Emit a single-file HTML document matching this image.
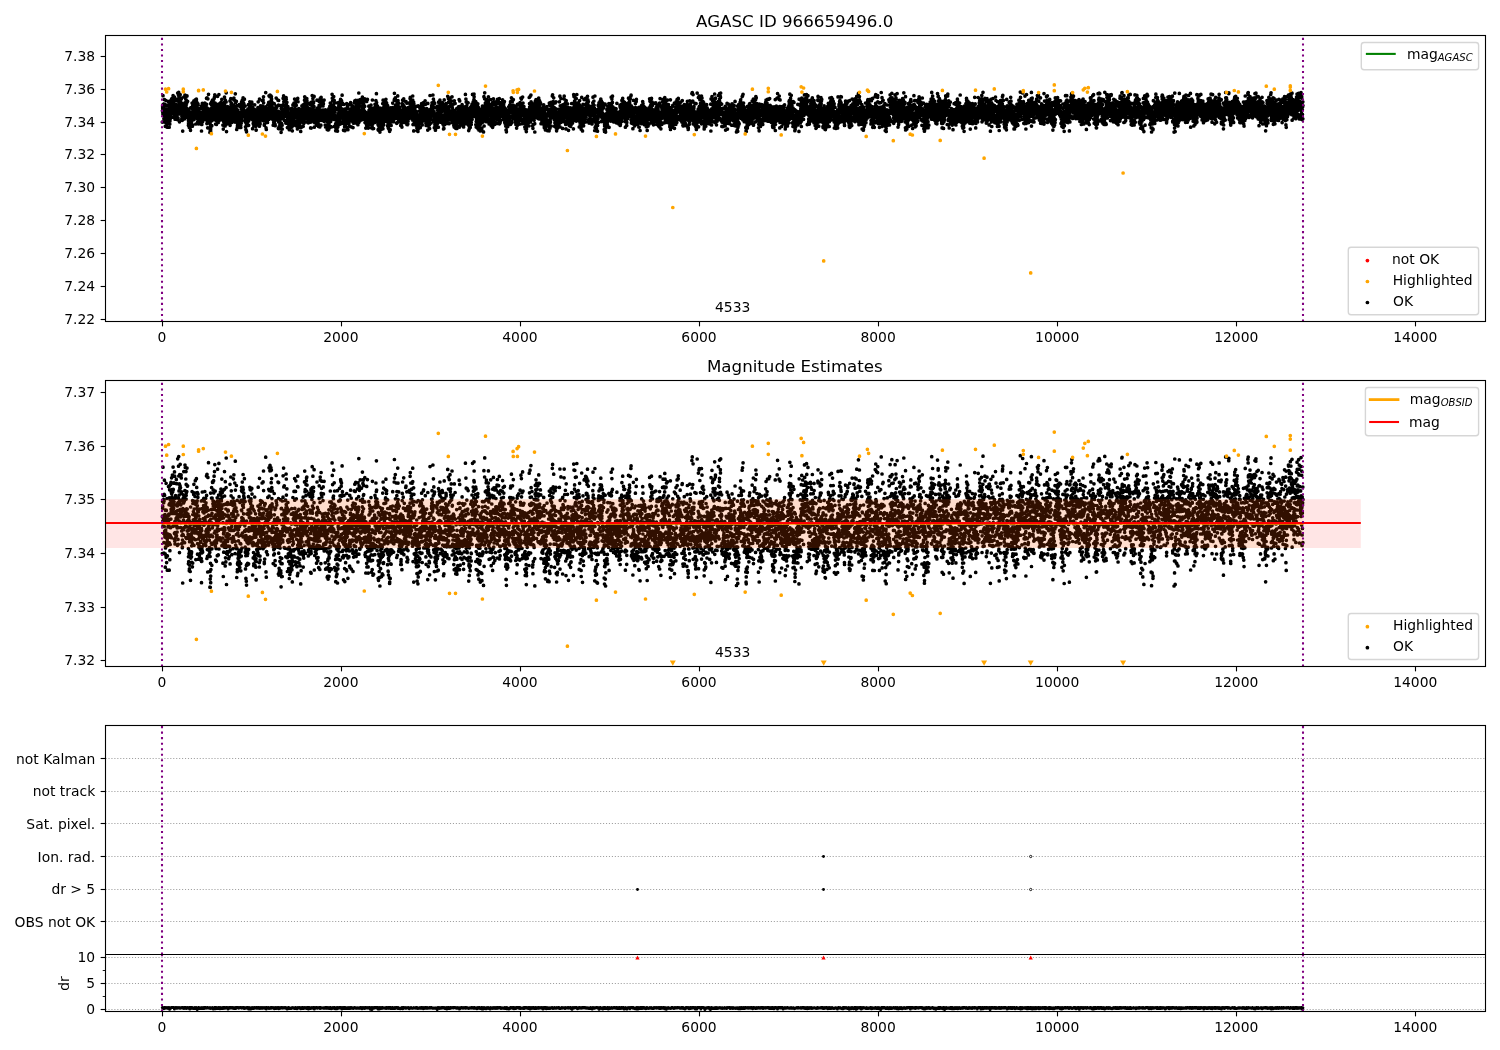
<!DOCTYPE html>
<html lang="en"><head><meta charset="utf-8"><title>AGASC ID 966659496.0</title>
<style>html,body{margin:0;padding:0;background:#fff;overflow:hidden}svg{display:block;will-change:transform}</style></head>
<body>
<svg width="1500" height="1050" viewBox="0 0 1500 1050" font-family="DejaVu Sans, Liberation Sans, sans-serif" font-size="13.889" fill="#000">
<rect width="1500" height="1050" fill="#fff"/>
<defs>
<clipPath id="c0"><rect x="105.5" y="35.5" width="1380.0" height="286.0"/></clipPath>
<clipPath id="c1"><rect x="105.5" y="380.5" width="1380.0" height="286.0"/></clipPath>
<clipPath id="c2"><rect x="105.5" y="725.5" width="1380.0" height="229.0"/></clipPath>
<clipPath id="c3"><rect x="105.5" y="954.5" width="1380.0" height="57.0"/></clipPath>
</defs>
<g clip-path="url(#c0)">
<path d="M162.3 122.1h0m.1-11.3h0m.1-.2h0m.1-4.5h0m.1 1.6h0m0 .5h0m.1 4h0m.1 1.7h0m.1-18.2h0m.1 17.8h0m.1-9.2h0m.1 8.3h0m.1-8.2h0m.1 7h0m.1-5.8h0m.1.9h0m.1 5h0m0 4.4h0m.1 2.9h0m.1 3.2h0m.1-16h0m.1-2h0m.1 9.8h0m.1-14.2h0m.1 10.7h0m.1-6h0m.1 11h0m.1 1.1h0m.1.7h0m.1-5.7h0m0-1.2h0m.1 2.2h0m.1 9.8h0m.1 4.1h0m.1-17.5h0m.1 11.6h0m.1-.3h0m.1-5.2h0m.1 5.2h0m.1 2.6h0m.1-7h0m.1.8h0m0-15.9h0m.1 22.7h0m.1-14.4h0m.1 10.2h0m.1-8.5h0m.1 14.3h0m.1-6.1h0m.1-7.2h0m.1.5h0m.1-6.9h0m.1 13.9h0m.1-1.3h0m0 .9h0m.1 8.5h0m.1-4.4h0m.1-4.4h0m.1.6h0m.1-6.4h0m.1 7h0m.1-3.2h0m.1-2.4h0m.1 2.2h0m.1-3.1h0m.1 6.3h0m0-2.2h0m.1-6.8h0m.1-8.8h0m.1 10h0m.1.4h0m.1-2h0m.1.3h0m.1 3.3h0m.1-6.5h0m.1 20.1h0m.1-22.2h0m.1 11.3h0m0 2.5h0m.1-17.4h0m.1 1.2h0m.1 4.2h0m.1 17.2h0m.1-2.8h0m.1-4.6h0m.1-.2h0m.1 2.9h0m.1-13.6h0m.1 1.1h0m.1 7.4h0m0 2.6h0m.1-15.9h0m.1 6.4h0m.1 0h0m.1 4.3h0m.1-11.3h0m.1 8.2h0m.1.7h0m.1-5.9h0m.1 14h0m.1-12.3h0m.1-6.1h0m.1 4.9h0m0-1h0m.1 4.8h0m.1-5.1h0m.1 7.3h0m.1-5h0m.1 4.7h0m.1-3.3h0m.1-8.2h0m.1 5.3h0m.1 4.5h0m.1-5.2h0m.1 11.2h0m0-10.7h0m.1 5.6h0m.1-3.6h0m.1-9.5h0m.1 14.2h0m.1-7.4h0m.1 3.6h0m.1 2h0m.1.3h0m.1-1.6h0m.1-6.1h0m.1 6.7h0m0 5.7h0m.1-12.6h0m.1 5.9h0m.1-1.1h0m.1 12.5h0m.1-1.8h0m.1-18.8h0m.1 10h0m.1-8.7h0m.1 19.9h0m.1-6h0m.1 6.9h0m0-3.5h0m.1-2.8h0m.1-3.1h0m.1 6.4h0m.1-9h0m.1 6.4h0m.1-9.2h0m.1 4.9h0m.1-4.2h0m.1 12h0m.1-12.2h0m.1 6.4h0m0 .4h0m.1 1.1h0m.1-13.4h0m.1 14.2h0m.1 3h0m.1-15.9h0m.1 12.7h0m.1-3.4h0m.1 1.4h0m.1-.6h0m.1 4.8h0m.1-1.3h0m0-3h0m.1-3.8h0m.1 12.1h0m.1-9.4h0m.1-1.3h0m.1-15.8h0m.1 13.5h0m.1 4.5h0m.1 6.7h0m.1-11.1h0m.1 12.6h0m.1-5.2h0m.1-3.9h0m0-5.1h0m.1-9.8h0m.1 11.1h0m.1-14h0m.1 5.9h0m.1 12.3h0m.1-7.7h0m.1 9.2h0m.1-7.9h0m.1-3.5h0m.1 5h0m.1 16.1h0m0-13h0m.1-10.6h0m.1-.3h0m.1 4.1h0m.1 3.8h0m.1-4.5h0m.1.9h0m.1-7.5h0m.1 14.6h0m.1-.7h0m.1-6.7h0m.1 9h0m0-3.8h0m.1 7h0m.1-6.9h0m.1 5.5h0m.1-2.7h0m.1-12h0m.1 11.1h0m.1-10.2h0m.1 7.1h0m.1-2.4h0m.1-.4h0m.1 12h0m0 3.9h0m.1-6.6h0m.1 4.1h0m.1-10.7h0m.1 10.7h0m.1-7.4h0m.1 11.1h0m.1-.2h0m.1-2.1h0m.1-7.8h0m.1 20.9h0m.1-16.3h0m0 1.4h0m.1-7.8h0m.1-3.1h0m.1 9h0m.1-5.6h0m.1 7.8h0m.1-12.3h0m.1 7.7h0m.1-5.3h0m.1 8.2h0m.1-17.8h0m.1 12h0m0 9.6h0m.1-7.9h0m.1-6.4h0m.1 9.8h0m.1-8h0m.1 4.1h0m.1-5.1h0m.1 13.7h0m.1-8.2h0m.1-6h0m.1-1.8h0m.1 9.7h0m0-17.5h0m.1 15.7h0m.1 1.9h0m.1-16.9h0m.1 18.2h0m.1 0h0m.1-5.3h0m.1 5h0m.1-14.3h0m.1 17.9h0m.1-20.2h0m.1 8.4h0m.1-4.5h0m0 3.3h0m.1 5.4h0m.1-6.1h0m.1 14h0m.1-9.1h0m.1 2h0m.1-7.3h0m.1 10.9h0m.1-18.1h0m.1 14.2h0m.1-1.6h0m.1 6.7h0m0-5h0m.1-8.7h0m.1 9.2h0m.1-9.4h0m.1 10.8h0m.1 5.2h0m.1-.2h0m.1-7.1h0m.1 6.2h0m.1-3.9h0m.1 2.7h0m.1 10.3h0m0-4.7h0m.1 2.5h0m.1-6.6h0m.1 8.1h0m.1-13.4h0m.1.8h0m.1 10.1h0m.1-11.3h0m.1 1.2h0m.1 15.4h0m.1-.6h0m.1-1.1h0m0-4.3h0m.1-2.9h0m.1 4.3h0m.1-4.9h0m.1-3.8h0m.1-1.2h0m.1.4h0m.1 14.3h0m.1-6h0m.1 1.3h0m.1 7.4h0m.1-17.6h0m0-4.8h0m.1 13.8h0m.1 1.8h0m.1-5.9h0m.1 4.6h0m.1-5.3h0m.1-.8h0m.1.4h0m.1 5.6h0m.1 1h0m.1-1.5h0m.1-6.8h0m0 4.9h0m.1-1.6h0m.1 6.7h0m.1-9.7h0m.1-12h0m.1 14.2h0m.1-4.3h0m.1 13.2h0m.1-7.1h0m.1-13.2h0m.1 19.1h0m.1-14.9h0m.1-3.3h0m0 10.5h0m.1-3h0m.1 1.2h0m.1-3.6h0m.1.5h0m.1-3.2h0m.1 5.8h0m.1 2.5h0m.1-13.5h0m.1 7.7h0m.1-10.8h0m.1 18.7h0m0-16.1h0m.1 6.8h0m.1-1.9h0m.1 7.4h0m.1-5.9h0m.1-3.8h0m.1 4.3h0m.1 3.1h0m.1-7.1h0m.1 5.3h0m.1-7.1h0m.1 7h0m0 .1h0m.1-8.2h0m.1-3.7h0m.1 18.1h0m.1-10.9h0m.1 5.2h0m.1-1.3h0m.1 13.1h0m.1-17h0m.1 5.1h0m.1-.9h0m.1-1.2h0m0 5.3h0m.1-.7h0m.1-15.4h0m.1 16.6h0m.1-5.3h0m.1-8.7h0m.1 4.6h0m.1 7h0m.1-1.1h0m.1-4.1h0m.1-2.3h0m.1 1.5h0m0 6.9h0m.1-10.9h0m.1 18.9h0m.1-3.2h0m.1-10.1h0m.1 5.3h0m.1-9.4h0m.1-1h0m.1 12.2h0m.1-1.8h0m.1-5h0m.1 8.4h0m0-3.5h0m.1 9.6h0m.1-4.6h0m.1.3h0m.1-9h0m.1 9.7h0m.1.1h0m.1-4.6h0m.1-1.4h0m.1 8.1h0m.1.4h0m.1-9.4h0m0 3.6h0m.1-5.3h0m.1-3.2h0m.1 3.1h0m.1.7h0m.1 7.6h0m.1-5.2h0m.1.1h0m.1 6h0m.1 1.2h0m.1-6h0m.1 2.5h0m.1-2.7h0m0 .2h0m.1 8.1h0m.1-5.5h0m.1-5.6h0m.1-.2h0m.1 10.8h0m.1-17.6h0m.1 8.4h0m.1 16.6h0m.1-6.5h0m.1-2.6h0m.1 2.6h0m0-9.4h0m.1 1.8h0m.1 3.8h0m.1-12.4h0m.1 11.8h0m.1-16.8h0m.1 14.2h0m.1 4h0m.1.2h0m.1-4.9h0m.1-4.3h0m.1-6.8h0m0 3.6h0m.1 7.3h0m.1.7h0m.1-4.4h0m.1-1.5h0m.1 6h0m.1-.6h0m.1-9.3h0m.1 11.8h0m.1-14.1h0m.1 8.2h0m.1-3.7h0m0-2.1h0m.1 1.2h0m.1 10.7h0m.1-13.4h0m.1 6h0m.1 6.1h0m.1-6.7h0m.1.9h0m.1-9.3h0m.1 16h0m.1-2.7h0m.1-4.6h0m0 1.2h0m.1 6h0m.1-10.8h0m.1 4.3h0m.1-5.3h0m.1 3.7h0m.1-5.7h0m.1 14.5h0m.1-4.4h0m.1-8.8h0m.1 12.1h0m.1-1.7h0m0-7.7h0m.1 3.4h0m.1-3.5h0m.1-10.8h0m.1 6h0m.1 10.4h0m.1 1h0m.1 7.9h0m.1-25.8h0m.1 18h0m.1-7.8h0m.1 12.9h0m.1-6.2h0m0 3.2h0m.1 5.1h0m.1-12.3h0m.1 17.1h0m.1-4.7h0m.1-24.3h0m.1 15.5h0m.1 1.4h0m.1-6.9h0m.1 7.6h0m.1 0h0m.1-22.1h0m0 16h0m.1 6.5h0m.1-2.9h0m.1-3.4h0m.1 3h0m.1 9h0m.1-9.8h0m.1 8.5h0m.1-3.2h0m.1-5.9h0m.1 8.2h0m.1-5.5h0m0 2.1h0m.1 4.1h0m.1.7h0m.1 10.7h0m.1-4.8h0m.1-4.6h0m.1 7h0m.1 2.5h0m.1-19.4h0m.1 12h0m.1-21.5h0m.1 25.4h0m0 2.1h0m.1-19.5h0m.1 15.4h0m.1-10.3h0m.1-.3h0m.1-7.8h0m.1 10.3h0m.1-8.5h0m.1-5.3h0m.1-3.2h0m.1 17.4h0m.1 6.4h0m0-13h0m.1 8h0m.1-10.9h0m.1-4.7h0m.1 3.4h0m.1 4.6h0m.1 1.1h0m.1-14.1h0m.1.2h0m.1 16.6h0m.1-3.4h0m.1-6.6h0m0 6.1h0m.1-7h0m.1-5.9h0m.1 2.5h0m.1 4.9h0m.1.9h0m.1-1.3h0m.1-7.3h0m.1 3.8h0m.1 7.6h0m.1-5h0m.1 2h0m.1 2.7h0m0-12.5h0m.1 20.1h0m.1-2.7h0m.1-7.4h0m.1-11.4h0m.1 9.4h0m.1.6h0m.1-12.2h0m.1 13.8h0m.1 10.8h0m.1-4.2h0m.1-7.8h0m0-4.4h0m.1 16h0m.1.8h0m.1-6.6h0m.1 10.9h0m.1-13.8h0m.1.9h0m.1 6.8h0m.1-10.7h0m.1 13.3h0m.1-8.7h0m.1-4.3h0m0 4.1h0m.1 12.8h0m.1-5.6h0m.1-6.8h0m.1 4.9h0m.1-.5h0m.1-1.1h0m.1-6.4h0m.1 7.4h0m.1-11.4h0m.1 17.8h0m.1-8.4h0m0-8.3h0m.1 5.9h0m.1-15.7h0m.1 17.2h0m.1-.6h0m.1 5.1h0m.1-7.6h0m.1-3.7h0m.1 2.8h0m.1 13h0m.1-5.2h0m.1-9.2h0m0 6.9h0m.1-10.8h0m.1 8.3h0m.1-3.4h0m.1-14.6h0m.1 26.2h0m.1-13.9h0m.1 4.7h0m.1 3.2h0m.1-3.4h0m.1-4h0m.1 1.6h0m0-.3h0m.1 1.1h0m.1 7.7h0m.1-5.7h0m.1 5.6h0m.1-11.9h0m.1.4h0m.1.1h0m.1-2.6h0m.1 7.7h0m.1.2h0m.1-.9h0m0-1.4h0m.1 2.5h0m.1-7.2h0m.1-1.9h0m.1 15.9h0m.1-7.3h0m.1-5.2h0m.1.3h0m.1 1.2h0m.1.5h0m.1 6.9h0m.1-15.3h0m.1 9h0m0 11.4h0m.1-16.2h0m.1 3.9h0m.1 3.9h0m.1-7.9h0m.1 6.1h0m.1-4.7h0m.1 12.5h0m.1-6.2h0m.1 8.4h0m.1 5.6h0m.1-12.5h0m0-2.7h0m.1-7.1h0m.1 11.9h0m.1 14.4h0m.1-17.9h0m.1 4.9h0m.1 2.9h0m.1 2.7h0m.1-6.1h0m.1-8.5h0m.1 12.7h0m.1-5.6h0m0 1.3h0m.1 4.6h0m.1-10h0m.1-7.7h0m.1-5.4h0m.1 7.5h0m.1 9.8h0m.1 4.1h0m.1-3.5h0m.1 3.6h0m.1-.2h0m.1 7.6h0m0-7.9h0m.1-17.9h0m.1 19.2h0m.1 4.1h0m.1-16.4h0m.1 13.3h0m.1 4.4h0m.1-16.2h0m.1 8.3h0m.1-14.9h0m.1-9.1h0m.1 20.1h0m0-2.4h0m.1.1h0m.1 21h0m.1-9.5h0m.1-.3h0m.1-3.9h0m.1-1.5h0m.1-4.2h0m.1 9.3h0m.1-1.5h0m.1-13h0m.1 15.3h0m0-6.3h0m.1-9.5h0m.1 11.9h0m.1-8.1h0m.1-1.2h0m.1 7.6h0m.1 5.1h0m.1-1.9h0m.1-11.1h0m.1.3h0m.1 8.6h0m.1-3.5h0m.1 3.4h0m0-1.1h0m.1 7.2h0m.1-12.7h0m.1-.5h0m.1 4.2h0m.1-.1h0m.1 8.5h0m.1-6.7h0m.1 3.5h0m.1-8h0m.1 8h0m.1 1.5h0m0-10h0m.1 3.1h0m.1.6h0m.1-14.2h0m.1 24.4h0m.1-18.3h0m.1 14h0m.1-6.1h0m.1-2.1h0m.1 2.3h0m.1-2.3h0m.1-14.2h0m0 14.1h0m.1 4.8h0m.1-2.7h0m.1-10.4h0m.1 10.5h0m.1-12h0m.1 3.3h0m.1 5.8h0m.1-2.1h0m.1 3.9h0m.1 8.7h0m.1-9.4h0m0 4.4h0m.1.2h0m.1-7.7h0m.1 5h0m.1 3.6h0m.1-.8h0m.1.4h0m.1-8.2h0m.1.4h0m.1-3.1h0m.1 3.5h0m.1-4.2h0m0 14h0m.1-15.5h0m.1 11.8h0m.1-6.8h0m.1-10.9h0m.1 18.6h0m.1-.3h0m.1-8.4h0m.1 8.9h0m.1-20h0m.1 17h0m.1-4.3h0m0-4.5h0m.1.5h0m.1 5.4h0m.1-3.7h0m.1-1.6h0m.1 5.2h0m.1-4.8h0m.1-6.7h0m.1 8.5h0m.1 1.9h0m.1 11.2h0m.1-3.8h0m.1-24.5h0m0 20.6h0m.1-11.7h0m.1 8.5h0m.1 2.4h0m.1 5.9h0m.1-8.4h0m.1 2.9h0m.1-5.9h0m.1 12h0m.1.2h0m.1-4h0m.1-7.2h0m0-7.8h0m.1 19.2h0m.1.1h0m.1 8.9h0m.1-20.2h0m.1 11.2h0m.1-6.8h0m.1.9h0m.1-8.8h0m.1 21.9h0m.1-.7h0m.1-12.5h0m0 10.7h0m.1.2h0m.1-.4h0m.1-9.2h0m.1-5.5h0m.1 4.3h0m.1 9h0m.1 1h0m.1-2h0m.1-4.4h0m.1 4.1h0m.1-7.6h0m0 10.5h0m.1-3.6h0m.1 1.9h0m.1-6.7h0m.1 9h0m.1-21.1h0m.1 16.9h0m.1 2.9h0m.1-3.4h0m.1-7.2h0m.1 13.4h0m.1-14.5h0m0 9.7h0m.1 3.9h0m.1-20.1h0m.1.2h0m.1 12.5h0m.1 4.1h0m.1-9.8h0m.1 7.7h0m.1-2h0m.1 2.1h0m.1 4.1h0m.1-6h0m0 8.2h0m.1-5.9h0m.1-.4h0m.1-15.3h0m.1 10.7h0m.1 6.4h0m.1-14.1h0m.1-6h0m.1-1h0m.1 7.2h0m.1 2.1h0m.1.9h0m0 8.4h0m.1-7.4h0m.1-9.9h0m.1 2.9h0m.1-5.8h0m.1 15.6h0m.1-10h0m.1 1.6h0m.1 0h0m.1-4.6h0m.1-1h0m.1 9.6h0m.1-13.5h0m0 19.1h0m.1-14.6h0m.1 4.7h0m.1.8h0m.1 4h0m.1-2h0m.1-5.4h0m.1-.9h0m.1 1.2h0m.1 1.5h0m.1-1.4h0m.1 7.5h0m0-7.2h0m.1.8h0m.1-6.8h0m.1 16.1h0m.1 1.5h0m.1-1.5h0m.1-1.7h0m.1 1.5h0m.1-1.9h0m.1-7.1h0m.1 14.1h0m.1 1.5h0m0-3.9h0m.1 3.7h0m.1 5.3h0m.1-10.1h0m.1 3.9h0m.1 2.2h0m.1 6.9h0m.1-13h0m.1-1.9h0m.1 3.4h0m.1 12.4h0m.1-4.8h0m0-10.7h0m.1 16.7h0m.1-19.6h0m.1.1h0m.1 8.4h0m.1 4.8h0m.1-15.5h0m.1 8.7h0m.1 6.9h0m.1-8.1h0m.1 5.2h0m.1-12.7h0m0 8.4h0m.1 6.7h0m.1.3h0m.1-3.3h0m.1-1h0m.1-11h0m.1-1.3h0m.1 10.3h0m.1 6.3h0m.1-20.7h0m.1 12.6h0m.1 8h0m0-10.1h0m.1 5.6h0m.1-5.6h0m.1-4.8h0m.1-.9h0m.1 4.7h0m.1 4h0m.1-7.2h0m.1-5h0m.1 2.8h0m.1 6.3h0m.1-5.8h0m.1-7.5h0m0 6.9h0m.1 8.3h0m.1-10.8h0m.1 5.1h0m.1-8.8h0m.1 6h0m.1 6.5h0m.1-.4h0m.1-7.8h0m.1 5.3h0m.1-2.4h0m.1-7.1h0m0 3.5h0m.1-.7h0m.1 5.9h0m.1-.1h0m.1-3.4h0m.1 6.6h0m.1-2.5h0m.1 6.9h0m.1-1.1h0m.1-15.5h0m.1 9.4h0m.1 6h0m0-13.7h0m.1 9.2h0m.1 6.2h0m.1-5.6h0m.1-6.1h0m.1 4.1h0m.1 17h0m.1-11.6h0m.1 2.6h0m.1-5.8h0m.1-1.8h0m.1 2.9h0m0-6.5h0m.1 14.9h0m.1-4.6h0m.1-5.2h0m.1 8.2h0m.1-2.2h0m.1 6.2h0m.1-.5h0m.1-8.1h0m.1-5.8h0m.1 8.1h0m.1-3.2h0m0-7.3h0m.1 5.2h0m.1 9.4h0m.1-7h0m.1 6.2h0m.1-18h0m.1 11h0m.1 7.4h0m.1 2.5h0m.1-8.8h0m.1-2h0m.1-1h0m0 10.3h0m.1-12.3h0m.1 7.4h0m.1-9.4h0m.1 5h0m.1 11.4h0m.1-9.2h0m.1 6.6h0m.1 6.5h0m.1-.1h0m.1-5.6h0m.1-2.2h0m.1-9.9h0m0 2.4h0m.1 1.1h0m.1 5h0m.1-5h0m.1-2.8h0m.1 6.6h0m.1-.7h0m.1 2.3h0m.1-10.1h0m.1 10.1h0m.1-1.9h0m.1-3.3h0m0 5.6h0m.1-2.9h0m.1-3.3h0m.1-7.9h0m.1 4.1h0m.1 10.3h0m.1-20.2h0m.1 9.7h0m.1 3.7h0m.1 7.6h0m.1-4.7h0m.1-5.9h0m0 .9h0m.1 1.6h0m.1-5.8h0m.1 11.4h0m.1-6.3h0m.1 1.2h0m.1 9.7h0m.1 1.3h0m.1-27.2h0m.1 9.2h0m.1 1.6h0m.1 10.7h0m0-10.3h0m.1 5.4h0m.1 7.3h0m.1 1.2h0m.1-17h0m.1 7.1h0m.1 1h0m.1-9.3h0m.1 5.3h0m.1 5.6h0m.1-.1h0m.1-6.8h0m0 6.2h0m.1 2.7h0m.1-1.7h0m.1-3.3h0m.1 1.8h0m.1-9.5h0m.1 2.1h0m.1 9.8h0m.1-3.4h0m.1 1.5h0m.1-4.7h0m.1 7h0m0-8.3h0m.1-9.6h0m.1 7.8h0m.1.1h0m.1 11.4h0m.1-13.4h0m.1 8.9h0m.1-1.1h0m.1 3.7h0m.1-7.7h0m.1.4h0m.1-10.5h0m0 20.5h0m.1-6.7h0m.1 4.9h0m.1 0h0m.1-22h0m.1 6h0m.1 6.9h0m.1 8.9h0m.1-2.4h0m.1-1.8h0m.1-6h0m.1 10.2h0m.1 6.6h0m0-.5h0m.1-5h0m.1-6.3h0m.1-6.1h0m.1 16.5h0m.1-3.8h0m.1-8.6h0m.1 4.4h0m.1 1.6h0m.1-10.6h0m.1 5.8h0m.1 7.1h0m0-2.5h0m.1-.1h0m.1.3h0m.1-24.8h0m.1 27.1h0m.1-1.1h0m.1 9.2h0m.1-14.7h0m.1-4.3h0m.1 20.6h0m.1-7.7h0m.1-5.9h0m0-4h0m.1 9.7h0m.1-5.9h0m.1-2.7h0m.1-2.5h0m.1 1.5h0m.1 5.1h0m.1-8.3h0m.1 8.5h0m.1 1.4h0m.1 3.9h0m.1-9.3h0m0-3.4h0m.1 7.8h0m.1-12.7h0m.1 9.1h0m.1-3.8h0m.1 2.6h0m.1-1.4h0m.1 5.5h0m.1-4h0m.1-3.3h0m.1 9.4h0m.1.5h0m0-17.1h0m.1 9.3h0m.1 2.9h0m.1-18.8h0m.1 8.7h0m.1 10.4h0m.1-12.1h0m.1 5.3h0m.1 6.9h0m.1 3.6h0m.1-7.6h0m.1 3.6h0m0-6.8h0m.1-11.1h0m.1-1.6h0m.1 21.9h0m.1.3h0m.1-7.9h0m.1 1.7h0m.1-3.7h0m.1-10.7h0m.1 13.4h0m.1 0h0m.1-14.3h0m.1 7.2h0m0 5.7h0m.1 2.1h0m.1-10.4h0m.1 17.2h0m.1-21.1h0m.1 18.6h0m.1-16h0m.1 13.8h0m.1-11h0m.1 3.4h0m.1 10.4h0m.1 3.1h0m0-11.9h0m.1 11.1h0m.1-2.7h0m.1-12.4h0m.1 11.4h0m.1-.5h0m.1 5.5h0m.1-11.5h0m.1 10.5h0m.1-.8h0m.1 1h0m.1 6.7h0m0-6.7h0m.1 1.6h0m.1-2.3h0m.1-3.6h0m.1 5.9h0m.1 2.5h0m.1-1.7h0m.1-5.3h0m.1-3.2h0m.1.1h0m.1-8.8h0m.1 6.5h0m0 9.1h0m.1 2.9h0m.1-1.7h0m.1-8.9h0m.1 5.6h0m.1-4.3h0m.1 4.1h0m.1-8.3h0m.1 15.6h0m.1 1.4h0m.1-7.7h0m.1 2h0m0-3.2h0m.1-4h0m.1.3h0m.1-4.9h0m.1 3.6h0m.1 4.3h0m.1-4.4h0m.1-5.7h0m.1-7.9h0m.1 17.4h0m.1-.9h0m.1-8.1h0m0 6.7h0m.1 4.7h0m.1-2.8h0m.1-7.8h0m.1 11.6h0m.1-4.4h0m.1-2.7h0m.1.2h0m.1 4.2h0m.1 3.9h0m.1-5.4h0m.1-3.5h0m0 6h0m.1-4.7h0m.1 7.4h0m.1-1.4h0m.1-18.3h0m.1 12.1h0m.1 5.1h0m.1 1.1h0m.1 9.9h0m.1-23.2h0m.1-4.8h0m.1 21.6h0m.1-5.2h0m0 11.9h0m.1-9.3h0m.1.5h0m.1 6.7h0m.1-8.1h0m.1 9.1h0m.1-7.3h0m.1-8.4h0m.1 7.7h0m.1-.3h0m.1-1.5h0m.1 2.6h0m0 4.1h0m.1 3.4h0m.1-7.4h0m.1-5.1h0m.1 7.9h0m.1-7.5h0m.1-10.2h0m.1 13.4h0m.1-1.5h0m.1 9.9h0m.1.7h0m.1-11.7h0m0 8.8h0m.1 7.1h0m.1-23.9h0m.1 8.3h0m.1.1h0m.1-8.5h0m.1 20.9h0m.1-5.6h0m.1-13.4h0m.1 6.1h0m.1-3h0m.1 11.9h0m0-9.1h0m.1 13h0m.1-23.1h0m.1 10.3h0m.1-.9h0m.1-.3h0m.1 2.9h0m.1-3.6h0m.1 4.2h0m.1-13.8h0m.1-6.5h0m.1 11.9h0m0 2.7h0m.1-.4h0m.1 1h0m.1-2h0m.1-15.6h0m.1 14.3h0m.1-8.5h0m.1 8h0m.1 5.3h0m.1-6h0m.1 11.3h0m.1-19h0m0 8h0m.1 2.4h0m.1 4.9h0m.1-6.4h0m.1-.4h0m.1 4.3h0m.1-5.3h0m.1 11.7h0m.1-9.7h0m.1.4h0m.1 1.3h0m.1 2.5h0m.1-3.3h0m0-5.8h0m.1-.2h0m.1 3.2h0m.1 14.2h0m.1-13.8h0m.1-1.3h0m.1-10.3h0m.1 9.4h0m.1-7.8h0m.1 4.9h0m.1 4.2h0m.1 7.1h0m0-7.7h0m.1 6.8h0m.1-.2h0m.1-12.1h0m.1 7.4h0m.1-.4h0m.1-1.2h0m.1 15.3h0m.1 4.2h0m.1-9.5h0m.1-6h0m.1 3.2h0m0 0h0m.1-3.8h0m.1-5h0m.1 14.2h0m.1-2.8h0m.1.8h0m.1 3.5h0m.1 5.3h0m.1-18.4h0m.1 17.7h0m.1-2.2h0m.1-4.2h0m0-11.7h0m.1 9.1h0m.1 2.7h0m.1 2.5h0m.1-2.8h0m.1 9.5h0m.1-14.9h0m.1 9.8h0m.1-6.1h0m.1 4h0m.1 6h0m.1-14.1h0m0 10.9h0m.1-9.2h0m.1 5.7h0m.1-5.1h0m.1 4.9h0m.1 6.2h0m.1-5.5h0m.1 5.2h0m.1-14.8h0m.1 12.3h0m.1-2.5h0m.1-1.2h0m0-.3h0m.1 5.4h0m.1-16.4h0m.1 7h0m.1 9.8h0m.1-13.7h0m.1 12h0m.1-16.7h0m.1 7.1h0m.1 11.6h0m.1-3.6h0m.1-6h0m.1 6.7h0m0-9h0m.1 15.6h0m.1-4.9h0m.1-8.3h0m.1 1.9h0m.1-3.3h0m.1 4.9h0m.1-16.2h0m.1 19.7h0m.1-6.2h0m.1 2.9h0m.1-9.8h0m0-1.9h0m.1 3.4h0m.1 6h0m.1 2.3h0m.1-9.5h0m.1 4.7h0m.1 6.4h0m.1-19.8h0m.1 7.9h0m.1 2h0m.1-2.4h0m.1 10.3h0m0-10.6h0m.1 4.5h0m.1-15.7h0m.1 6.7h0m.1 2.5h0m.1 14.9h0m.1-6.4h0m.1-5.8h0m.1 1.8h0m.1.5h0m.1 11.3h0m.1-14.8h0m0-6.7h0m.1 8.5h0m.1 14h0m.1-25.8h0m.1 10.9h0m.1 1.9h0m.1-3.2h0m.1.2h0m.1-4.3h0m.1 7.9h0m.1 3h0m.1-.4h0m0-.8h0m.1 2.7h0m.1-1.3h0m.1 9.8h0m.1-12.9h0m.1 7.3h0m.1-4.7h0m.1-5.5h0m.1 18.5h0m.1-14.5h0m.1-12.8h0m.1 17.9h0m0-21.1h0m.1 25h0m.1 4.8h0m.1-26.5h0m.1 23.1h0m.1-15.8h0m.1 7.1h0m.1-5h0m.1 10h0m.1-2.9h0m.1.7h0m.1-3.1h0m0-7.2h0m.1 8h0m.1 8.4h0m.1-14.4h0m.1 11.3h0m.1-7.1h0m.1 1.1h0m.1-2.9h0m.1 3.2h0m.1-.5h0m.1 8.1h0m.1-3.7h0m.1-2.1h0m0 7.9h0m.1-9.6h0m.1 5.9h0m.1-12.1h0m.1 9.5h0m.1-7.4h0m.1 1.7h0m.1 17.5h0m.1-12.7h0m.1-1.4h0m.1-2.9h0m.1-2.6h0m0 15.6h0m.1-9.8h0m.1-3.9h0m.1-2.6h0m.1 9.2h0m.1-5.6h0m.1 7h0m.1-.1h0m.1-15.7h0m.1 7.1h0m.1 5.5h0m.1-3.9h0m0-6h0m.1-.5h0m.1 4.5h0m.1 1.3h0m.1 1.9h0m.1.8h0m.1-.3h0m.1-3.2h0m.1 2.5h0m.1-10.7h0m.1 21.4h0m.1-10.2h0m0 6.7h0m.1-7.7h0m.1-2.3h0m.1 9.4h0m.1 1.3h0m.1-10.7h0m.1-5.2h0m.1 13.7h0m.1-12.9h0m.1 11.2h0m.1-8.4h0m.1-1.4h0m0 5.4h0m.1-15h0m.1 15.1h0m.1-18.5h0m.1 17.2h0m.1-8h0m.1-2.8h0m.1 12.8h0m.1-13.4h0m.1 11.6h0m.1-4.7h0m.1-2.9h0m0 4.2h0m.1 11.2h0m.1-14.7h0m.1 5.8h0m.1-8.7h0m.1-3.5h0m.1 17.6h0m.1-11.7h0m.1-7h0m.1 9.3h0m.1-10.2h0m.1 4.1h0m.1 6.9h0m0 5.3h0m.1-16.5h0m.1 14.8h0m.1-12.4h0m.1 15.4h0m.1-4.9h0m.1 3.9h0m.1-2.5h0m.1-.1h0m.1-.5h0m.1-4.8h0m.1 11.9h0m0-2.8h0m.1-5.2h0m.1 6.8h0m.1-7h0m.1-7.3h0m.1 18.8h0m.1-5h0m.1 3.2h0m.1-9.7h0m.1 7.4h0m.1 2.8h0m.1-3.5h0m0 1.2h0m.1.1h0m.1-1.7h0m.1-4.6h0m.1 1.5h0m.1 5.2h0m.1-10.9h0m.1-5.2h0m.1 16.6h0m.1-5.5h0m.1.1h0m.1 0h0m0 7.4h0m.1-17.6h0m.1 17.6h0m.1-4.7h0m.1-7.8h0m.1-.8h0m.1 19h0m.1-12h0m.1 4.1h0m.1-17.4h0m.1 18.8h0m.1-19.1h0m0 25.8h0m.1-6.1h0m.1-10.7h0m.1 3h0m.1.9h0m.1-11.6h0m.1 10.3h0m.1 6.4h0m.1-14.8h0m.1 12.3h0m.1-8.8h0m.1-13.5h0m0 19.5h0m.1-13.1h0m.1 5.7h0m.1 2.1h0m.1-5.9h0m.1.8h0m.1 13.2h0m.1-19.4h0m.1 21.3h0m.1-6.8h0m.1 1.5h0m.1 4.8h0m.1-1.6h0m0-9.4h0m.1-5.2h0m.1-1.2h0m.1 16.2h0m.1 2.5h0m.1-8.9h0m.1-5.1h0m.1-10.1h0m.1 20h0m.1 10.8h0m.1-11.6h0m.1 1.8h0m0-1.9h0m.1-3.4h0m.1 10.6h0m.1-8.5h0m.1-2.2h0m.1 4.7h0m.1-.8h0m.1-1.4h0m.1 7.1h0m.1-8.7h0m.1.4h0m.1 4.9h0m0-3.7h0m.1-2.4h0m.1.6h0m.1 8.6h0m.1-6h0m.1 5.6h0m.1 1.2h0m.1-2h0m.1-.1h0m.1 5.1h0m.1-15.4h0m.1 13.8h0m0-2.7h0m.1-10.5h0m.1 6.3h0m.1-16.4h0m.1 19.4h0m.1-3.5h0m.1-1.9h0m.1-6.2h0m.1 5.3h0m.1 4.1h0m.1-4.5h0m.1 11.4h0m0-6.2h0m.1-1.1h0m.1 1.3h0m.1 5.1h0m.1-14.7h0m.1 3.1h0m.1 3.7h0m.1-3h0m.1 13.9h0m.1-9.5h0m.1-4.6h0m.1 4.9h0m0 9.3h0m.1-13.9h0m.1-7.3h0m.1-3.9h0m.1 13.4h0m.1 4.9h0m.1.9h0m.1-11.1h0m.1 5h0m.1 12.5h0m.1-6.7h0m.1-13.8h0m0 9.6h0m.1 2.2h0m.1-19.6h0m.1.9h0m.1 13.5h0m.1-.5h0m.1 1.9h0m.1-2h0m.1 3h0m.1 9.7h0m.1-11.3h0m.1-16.6h0m.1 16.9h0m0-10.6h0m.1 12.6h0m.1.3h0m.1-12.5h0m.1-1.9h0m.1-2.2h0m.1 4.9h0m.1 15.4h0m.1-3.6h0m.1-6.6h0m.1 4.8h0m.1 5.7h0m0-4h0m.1-4.5h0m.1 1.3h0m.1 7.1h0m.1-9.5h0m.1 5.4h0m.1.2h0m.1-10.6h0m.1 7.1h0m.1-11.3h0m.1 11.9h0m.1-9.8h0m0 7.4h0m.1 8.3h0m.1-5h0m.1 4.7h0m.1-9.2h0m.1 3.4h0m.1-2.4h0m.1-11h0m.1 21.3h0m.1-.4h0m.1-8.8h0m.1 3.3h0m0 1.3h0m.1-.8h0m.1 3.4h0m.1-4.6h0m.1 5.9h0m.1-6.6h0m.1 4.9h0m.1 6.1h0m.1-13.1h0m.1-2.1h0m.1 7.5h0m.1 3.5h0m0 6.1h0m.1-7.6h0m.1-4.2h0m.1 5.5h0m.1-5.7h0m.1-2h0m.1 5.8h0m.1-1.2h0m.1-4.6h0m.1 3.7h0m.1 1.2h0m.1.7h0m0 8.1h0m.1-9.6h0m.1.3h0m.1 9.4h0m.1-16.4h0m.1 19.1h0m.1-16.9h0m.1-1.8h0m.1 10.9h0m.1 7.5h0m.1-13.1h0m.1 8.3h0m.1 2.6h0m0-.5h0m.1-2.6h0m.1 6.1h0m.1-16.7h0m.1-3.4h0m.1 5.2h0m.1 11.9h0m.1-15.5h0m.1 9h0m.1 5h0m.1-16.7h0m.1 20.4h0m0-5.9h0m.1-.9h0m.1 1.1h0m.1-8.9h0m.1-1.5h0m.1 14.5h0m.1-9.9h0m.1 4.4h0m.1-15.7h0m.1 5.4h0m.1 7.1h0m.1 1.3h0m0 1.4h0m.1-1.6h0m.1-16.9h0m.1 9.5h0m.1 1.9h0m.1 12.3h0m.1-5.3h0m.1-13.7h0m.1 7.7h0m.1-.8h0m.1-8.4h0m.1 7.6h0m0 4.9h0m.1 8.2h0m.1-12.4h0m.1-6.5h0m.1 1.1h0m.1 6h0m.1-8.4h0m.1 3.6h0m.1 6.5h0m.1-22.5h0m.1 19h0m.1-2.7h0m0-12.4h0m.1 11.3h0m.1 9.3h0m.1-17.8h0m.1 14.5h0m.1-4.8h0m.1 3.7h0m.1-2.9h0m.1-6.5h0m.1 5.6h0m.1-2.1h0m.1-3.2h0m0 12.6h0m.1-13.4h0m.1 6.7h0m.1-14.6h0m.1 18.2h0m.1-7.1h0m.1 11.8h0m.1-12.5h0m.1-6.6h0m.1 7.9h0m.1 4.6h0m.1 13.5h0m.1-23.5h0m0 5.5h0m.1 9.3h0m.1-.4h0m.1-5.4h0m.1-4.5h0m.1 8.2h0m.1 0h0m.1 11.6h0m.1-.5h0m.1-17h0m.1 14.2h0m.1-.1h0m0 6.9h0m.1-13.9h0m.1 14h0m.1-10.8h0m.1 7.4h0m.1-4.5h0m.1 6.3h0m.1-12.2h0m.1 6h0m.1 5.9h0m.1-12.8h0m.1 4.7h0m0 2.3h0m.1-.6h0m.1 5.9h0m.1-3h0m.1-15.9h0m.1 6.8h0m.1-13.5h0m.1 28.3h0m.1-22.6h0m.1 8.3h0m.1-1.2h0m.1 11.2h0m0-1.1h0m.1-4.6h0m.1-7.1h0m.1-.5h0m.1 5.7h0m.1 3.5h0m.1-8.1h0m.1 9.3h0m.1-17.8h0m.1 6.9h0m.1 7.5h0m.1-9.2h0m0 8.8h0m.1 1.6h0m.1-9.9h0m.1 8.1h0m.1-1.9h0m.1-15.9h0m.1 14.8h0m.1-10.9h0m.1 5.5h0m.1-5.7h0m.1-1.4h0m.1 6.9h0m0-5.6h0m.1 18.4h0m.1-18.4h0m.1 8.8h0m.1-6.4h0m.1-8.7h0m.1 13.3h0m.1-12.9h0m.1.3h0m.1 9.2h0m.1 7h0m.1-14.8h0m0 10.2h0m.1-3.1h0m.1 7.8h0m.1-15.9h0m.1 13.8h0m.1-9.8h0m.1 9.8h0m.1 3.2h0m.1-13.3h0m.1-9h0m.1 13.9h0m.1 12.4h0m.1-18.3h0m0 20h0m.1-13h0m.1 8.4h0m.1-6.7h0m.1-.5h0m.1 1.3h0m.1 8.4h0m.1-5.2h0m.1 7.5h0m.1-11.6h0m.1 2.2h0m.1 16.2h0m0-7.5h0m.1-4.2h0m.1-3.9h0m.1 4.7h0m.1-15h0m.1 6.3h0m.1 12.3h0m.1-5.7h0m.1 1.5h0m.1-3.1h0m.1-1.8h0m.1 12.9h0m0-17.5h0m.1 5h0m.1 16.5h0m.1-12.2h0m.1-7.2h0m.1 1.7h0m.1 6.9h0m.1-4h0m.1.4h0m.1 1.8h0m.1 6.8h0m.1-10.8h0m0-4.6h0m.1 10.4h0m.1-.5h0m.1 1.6h0m.1 6h0m.1-11.2h0m.1 5.5h0m.1 1.4h0m.1-5.9h0m.1 10.6h0m.1-23.7h0m.1 13.5h0m0-2.1h0m.1-7.2h0m.1 5.3h0m.1 7.9h0m.1-8.5h0m.1 4.3h0m.1-.8h0m.1-1.8h0m.1.2h0m.1-8.8h0m.1 15h0m.1 2.8h0m0 6.2h0m.1-16.4h0m.1 1.5h0m.1-6.3h0m.1 11.5h0m.1-4.5h0m.1.2h0m.1.1h0m.1-3.8h0m.1 11h0m.1.2h0m.1-9.6h0m.1.4h0m0 1.4h0m.1-1.9h0m.1 6.1h0m.1-.7h0m.1 2.4h0m.1 4.7h0m.1-7.9h0m.1-13.8h0m.1 10.2h0m.1 11.9h0m.1-13.3h0m.1 6.9h0m0-.8h0m.1-9.1h0m.1 2.1h0m.1-2.5h0m.1-7h0m.1 13.1h0m.1-4.5h0m.1.1h0m.1.1h0m.1 1.4h0m.1-7.8h0m.1 21.7h0m0-8.3h0m.1-10h0m.1 5.8h0m.1-1h0m.1 4.7h0m.1-5h0m.1.7h0m.1.2h0m.1 4.5h0m.1-2.2h0m.1-1.8h0m.1-7.1h0m0 3.4h0m.1 10.3h0m.1-3h0m.1-5.5h0m.1 9.5h0m.1-9.8h0m.1 15.4h0m.1-19.6h0m.1 3.7h0m.1-5.1h0m.1 3.7h0m.1 6.3h0m0-3.7h0m.1 10.3h0m.1-12.3h0m.1 10.9h0m.1-6.2h0m.1-4.8h0m.1 8.8h0m.1.2h0m.1-16.9h0m.1 13.1h0m.1 3.9h0m.1-5.1h0m0-3.7h0m.1 11.8h0m.1-22h0m.1 12.5h0m.1-2.4h0m.1 7.1h0m.1-15h0m.1 3.8h0m.1 14.7h0m.1-13.6h0m.1 12h0m.1-19.7h0m0 8.3h0m.1 7.1h0m.1-1.9h0m.1 3.3h0m.1 5.9h0m.1-5.3h0m.1 3.5h0m.1-8.9h0m.1 6.2h0m.1-13.1h0m.1 7.6h0m.1 5.4h0m.1 3.7h0m0-11.9h0m.1 3.4h0m.1-2.9h0m.1 2.3h0m.1-3.4h0m.1 5.1h0m.1-12.4h0m.1 9h0m.1-1h0m.1 4.7h0m.1 9.7h0m.1-24.3h0m0 8.8h0m.1 6h0m.1-3.8h0m.1-2.8h0m.1 4.6h0m.1-5.3h0m.1-3.2h0m.1 3.9h0m.1-15.6h0m.1 29.3h0m.1-4.6h0m.1-16.3h0m0 15.5h0m.1-3.5h0m.1-1.2h0m.1-9.5h0m.1 15.1h0m.1 2.8h0m.1-18.7h0m.1 15.7h0m.1 3.2h0m.1-7.9h0m.1 2.7h0m.1-16h0m0 14.6h0m.1-2.8h0m.1-5.6h0m.1 9.7h0m.1-4.9h0m.1 8.1h0m.1-2.8h0m.1-2.2h0m.1 5.4h0m.1-8.8h0m.1 1.7h0m.1-.4h0m0 8.4h0m.1-17.9h0m.1 15.5h0m.1-3.9h0m.1-1.3h0m.1.7h0m.1-2.3h0m.1-.8h0m.1 4h0m.1 1.2h0m.1-7.4h0m.1-8.3h0m0-2.3h0m.1 8.3h0m.1 3.7h0m.1-2.8h0m.1 12.8h0m.1-18.6h0m.1 11h0m.1-10.7h0m.1 13.4h0m.1-14.7h0m.1 4.7h0m.1 4.1h0m.1 2.7h0m0 2.4h0m.1-9.5h0m.1-2.7h0m.1 17.5h0m.1-3.3h0m.1-3.5h0m.1 5.3h0m.1-6.4h0m.1 6.3h0m.1-6h0m.1 6.3h0m.1-11.2h0m0 11.6h0m.1-19h0m.1 15.9h0m.1 7.7h0m.1-6.8h0m.1 2h0m.1-4.8h0m.1 9h0m.1 1.1h0m.1-6h0m.1-2.9h0m.1 0h0m0 14h0m.1-15.7h0m.1.1h0m.1 1.1h0m.1-.5h0m.1 1.3h0m.1 5.4h0m.1-1.2h0m.1 6.5h0m.1-23.6h0m.1 11.6h0m.1 13.1h0m0-8.9h0m.1.4h0m.1 5.5h0m.1-1.7h0m.1-1.5h0m.1-20.6h0m.1 20.8h0m.1 3.3h0m.1-2.1h0m.1-6.1h0m.1 2.4h0m.1-.4h0m0 6.8h0m.1 2.1h0m.1 1.9h0m.1-13.8h0m.1 10h0m.1-8.9h0m.1 1.1h0m.1-3.6h0m.1-6.7h0m.1 12.5h0m.1-8.4h0m.1 4.3h0m0-.8h0m.1 2.1h0m.1 7.3h0m.1-6.7h0m.1-9.2h0m.1 13.1h0m.1-3h0m.1 6.6h0m.1-15.7h0m.1 1.6h0m.1-.6h0m.1 10.9h0m.1 1.1h0m0-1.5h0m.1-7.6h0m.1 5.7h0m.1-1.2h0m.1.8h0m.1-5h0m.1 11.9h0m.1-19.4h0m.1 13.8h0m.1 3.7h0m.1-3.6h0m.1 8.9h0m0-7.4h0m.1 0h0m.1-12.4h0m.1 11.2h0m.1.2h0m.1 1.6h0m.1-.8h0m.1-5.3h0m.1 12.1h0m.1-15.5h0m.1-11.5h0m.1 19.8h0m0-4.2h0m.1 8.6h0m.1-11.5h0m.1-3.7h0m.1 19.7h0m.1-8.3h0m.1 2.2h0m.1-3.5h0m.1-3.9h0m.1-2.7h0m.1 7.5h0m.1-.8h0m0 9.3h0m.1-8.4h0m.1-2.7h0m.1-5.6h0m.1 1h0m.1-5h0m.1 4.4h0m.1-1.2h0m.1 6.9h0m.1 0h0m.1-7.6h0m.1.9h0m0 9.1h0m.1 2.2h0m.1-11h0m.1-7.2h0m.1 11.7h0m.1-2.4h0m.1 2.4h0m.1-3h0m.1-5h0m.1-3h0m.1 14.6h0m.1-11.7h0m0-1.7h0m.1-5.7h0m.1 6.5h0m.1 5.9h0m.1 1.5h0m.1-11.3h0m.1-9.4h0m.1 14.2h0m.1-5.3h0m.1 12.4h0m.1-3.8h0m.1-5.8h0m0 14.6h0m.1-6.1h0m.1 7.3h0m.1-3.3h0m.1-4.2h0m.1-6.9h0m.1 11.6h0m.1-12h0m.1 7.4h0m.1.7h0m.1-7.2h0m.1 17.1h0m.1-4.3h0m0 9.6h0m.1-14.6h0m.1-5.6h0m.1 16.2h0m.1 4.6h0m.1-12.5h0m.1 4.5h0m.1-3.7h0m.1-6.2h0m.1 12.7h0m.1-14.9h0m.1 19.3h0m0-1.9h0m.1-4.7h0m.1-2.9h0m.1-5.6h0m.1 1.3h0m.1 6.8h0m.1 7h0m.1 2.6h0m.1-7.4h0m.1-16.7h0m.1 2.5h0m.1 16.1h0m0-2.6h0m.1-4.6h0m.1 3.7h0m.1 3.7h0m.1-5.7h0m.1-7.5h0m.1-2h0m.1 4h0m.1-4.1h0m.1 2.1h0m.1 7.1h0m.1 2.7h0m0-1.3h0m.1 7.1h0m.1-20.2h0m.1 11.6h0m.1-2.7h0m.1-8h0m.1 9.7h0m.1-8.2h0m.1 16.9h0m.1-8.2h0m.1-11.8h0m.1 14.7h0m0 0h0m.1-9.3h0m.1-10.1h0m.1 10h0m.1 15.1h0m.1-6.9h0m.1-21.6h0m.1 16.7h0m.1 8.3h0m.1-10.8h0m.1 8.2h0m.1-5.8h0m0 8h0m.1-22.7h0m.1 8.5h0m.1-3.8h0m.1 4.8h0m.1 6.7h0m.1.9h0m.1-2.8h0m.1-4.2h0m.1-1.8h0m.1-.9h0m.1-2.7h0m.1 2.6h0m0 .1h0m.1 3.6h0m.1-2.5h0m.1 5.3h0m.1 5.3h0m.1-18.6h0m.1 2.8h0m.1 0h0m.1-.4h0m.1 1.6h0m.1 7.7h0m.1 6.7h0m0-21.7h0m.1 19.1h0m.1-7.1h0m.1 6.5h0m.1-2.5h0m.1 2.6h0m.1-14.2h0m.1-.8h0m.1 10.1h0m.1-3.3h0m.1 11.1h0m.1-7.1h0m0 4h0m.1-.3h0m.1 1.1h0m.1-.1h0m.1 3.5h0m.1 3.6h0m.1-19.9h0m.1 2.7h0m.1 10.8h0m.1 2.1h0m.1-2.7h0m.1 3.9h0m0 5.1h0m.1.1h0m.1-10.5h0m.1 6.5h0m.1 5.1h0m.1-14.5h0m.1-5.9h0m.1 16h0m.1-8.8h0m.1-4.2h0m.1 9.8h0m.1-7.4h0m0 9.2h0m.1-8.8h0m.1 15.5h0m.1-19.7h0m.1 21.4h0m.1-.5h0m.1-20.5h0m.1 1.4h0m.1 10.2h0m.1-10.3h0m.1 18.1h0m.1-14h0m0 6.5h0m.1-14.4h0m.1 14.1h0m.1-.9h0m.1 4.3h0m.1-3.1h0m.1-3.7h0m.1-10.2h0m.1 17.1h0m.1-3.3h0m.1-4h0m.1 2.9h0m.1-3.9h0m0-1.6h0m.1.8h0m.1-2.4h0m.1 3.5h0m.1-.4h0m.1-3.9h0m.1 1.1h0m.1 7h0m.1-8.8h0m.1-1.6h0m.1 6h0m.1-2.6h0m0-6.7h0m.1-4.4h0m.1 9.9h0m.1-.3h0m.1-3.7h0m.1 5.1h0m.1 4.9h0m.1-2.4h0m.1.4h0m.1-.3h0m.1 5h0m.1-8.8h0m0 1.6h0m.1-1.6h0m.1 6.2h0m.1-2.5h0m.1 1.3h0m.1-17.7h0m.1 15h0m.1-21.9h0m.1 5.7h0m.1 15h0m.1-3.3h0m.1 1.9h0m0 2.7h0m.1-6.4h0m.1 2.6h0m.1 5.2h0m.1-6h0m.1-12.8h0m.1 7.4h0m.1 9h0m.1-3.3h0m.1-3.3h0m.1 8h0m.1 2.6h0m0-7.8h0m.1 5.5h0m.1-5h0m.1 4h0m.1-14.5h0m.1 6.8h0m.1 2h0m.1 1.6h0m.1 12.4h0m.1-18.9h0m.1-1.3h0m.1 8.2h0m0-3.2h0m.1 7.3h0m.1 2.1h0m.1 5.1h0m.1-10.2h0m.1 1.5h0m.1-7.5h0m.1-10.5h0m.1 17.1h0m.1 5.5h0m.1-18h0m.1 5.1h0m0 1.3h0m.1 1.4h0m.1 2.6h0m.1 4.6h0m.1-2.9h0m.1 8.8h0m.1-18.2h0m.1 10.4h0m.1-2.3h0m.1-3.7h0m.1 13.1h0m.1-7.3h0m.1-5.9h0m0 3.8h0m.1 6.6h0m.1 1.8h0m.1-4h0m.1.1h0m.1 3h0m.1-.6h0m.1-3.7h0m.1 3.6h0m.1-7.6h0m.1 10.4h0m.1-7.7h0m0 .7h0m.1-.8h0m.1-1.3h0m.1 13.7h0m.1-14.3h0m.1-1.2h0m.1 14.6h0m.1-.6h0m.1-2.1h0m.1 3.6h0m.1-10.4h0m.1-1.7h0m0 5h0m.1.6h0m.1.9h0m.1 1.4h0m.1 5.8h0m.1-14.8h0m.1 6h0m.1-12.4h0m.1-2.2h0m.1 17.4h0m.1-10.5h0m.1-.1h0m0-10.3h0m.1 19h0m.1 2.9h0m.1-6.5h0m.1-.7h0m.1-4h0m.1-6h0m.1 11.3h0m.1-8h0m.1 3.4h0m.1.5h0m.1-13.2h0m0 14.6h0m.1 7.5h0m.1 1.5h0m.1-3.9h0m.1 0h0m.1-6.3h0m.1-5.6h0m.1 7.3h0m.1 3.5h0m.1 0h0m.1-3h0m.1-1.8h0m0-.6h0m.1 1.8h0m.1 1.4h0m.1 1.5h0m.1-4.5h0m.1 3.8h0m.1-7.2h0m.1 4h0m.1 1h0m.1-12.1h0m.1 6.6h0m.1 9.6h0m.1-4.5h0m0-12h0m.1 17.6h0m.1-6.3h0m.1 4.2h0m.1 3.3h0m.1-8.1h0m.1 2.4h0m.1-.1h0m.1-11.3h0m.1 21.4h0m.1-9.9h0m.1-1.3h0m0 9.9h0m.1-2.4h0m.1-11.9h0m.1-.2h0m.1 15.9h0m.1-16.9h0m.1 7.9h0m.1 8.2h0m.1-15h0m.1 12.3h0m.1-1.9h0m.1-8.6h0m0-3h0m.1 2.9h0m.1-.5h0m.1 3.6h0m.1 5h0m.1-3.2h0m.1-1.9h0m.1 2.6h0m.1-6.6h0m.1 2.9h0m.1-1.7h0m.1 3.6h0m0-11.6h0m.1 11.3h0m.1-5.9h0m.1-.4h0m.1 4.2h0m.1 5h0m.1-13.6h0m.1 3.3h0m.1-8.3h0m.1 12.7h0m.1-13.8h0m.1 11.8h0m0 7.1h0m.1-.3h0m.1-7.8h0m.1 5.1h0m.1-12.7h0m.1 4.9h0m.1 6.1h0m.1 1h0m.1-3.3h0m.1-4.7h0m.1 4.8h0m.1 4.7h0m0 1.1h0m.1-12.7h0m.1 8.2h0m.1-5.2h0m.1 5.8h0m.1 7.8h0m.1-18.4h0m.1 3.4h0m.1 2.4h0m.1 12h0m.1 1.5h0m.1-2.5h0m.1-21.4h0m0 4.1h0m.1 6.2h0m.1 4h0m.1 14.3h0m.1-13.9h0m.1-.5h0m.1 3.8h0m.1-6.7h0m.1 3.8h0m.1-9.1h0m.1 28.9h0m.1-20.5h0m0 7.9h0m.1-14.4h0m.1 13.8h0m.1-11.5h0m.1 16h0m.1-6h0m.1-5.9h0m.1 3.5h0m.1-3.9h0m.1 9.3h0m.1-5.9h0m.1 9.1h0m0-13.1h0m.1 4.1h0m.1 5.1h0m.1-2.5h0m.1 2.7h0m.1 5h0m.1-6.8h0m.1-.4h0m.1 1.8h0m.1 4h0m.1 2.7h0m.1-1.9h0m0-8.3h0m.1 4.7h0m.1 2.3h0m.1-.9h0m.1 5.3h0m.1-2h0m.1-10.8h0m.1-1.6h0m.1-5.5h0m.1 22h0m.1-3.5h0m.1-7h0m0 12.7h0m.1-15.8h0m.1 13.6h0m.1-10.1h0m.1.5h0m.1 7.4h0m.1-3.2h0m.1 0h0m.1 8.5h0m.1-5.4h0m.1-5.8h0m.1-14.4h0m0 23.5h0m.1-10h0m.1 5.1h0m.1 1.5h0m.1-9.1h0m.1-.7h0m.1 8.6h0m.1-7.7h0m.1 1.8h0m.1.7h0m.1-8.4h0m.1 16.9h0m0-7.5h0m.1 3h0m.1-7.8h0m.1 8.2h0m.1-16.4h0m.1 14.3h0m.1 2h0m.1-9.1h0m.1-.3h0m.1.1h0m.1 13.1h0m.1-20.5h0m.1 2.2h0m0 7.8h0m.1-10.8h0m.1 8.9h0m.1-7.9h0m.1 8.8h0m.1 6h0m.1-8h0m.1 3.1h0m.1 1.2h0m.1-11.7h0m.1 10.1h0m.1-13.2h0m0 15h0m.1-9.7h0m.1 6.5h0m.1-4.6h0m.1 11.2h0m.1-5.2h0m.1 8.1h0m.1-6.5h0m.1-12.8h0m.1 7.5h0m.1-2.5h0m.1 1.5h0m0-3.8h0m.1 10.1h0m.1-10.7h0m.1 3.4h0m.1-1.2h0m.1 3.1h0m.1-2.8h0m.1-7.3h0m.1 5.3h0m.1-5.6h0m.1 17.8h0m.1-5.8h0m0-1.3h0m.1-2.5h0m.1 3.4h0m.1 2.5h0m.1-2.9h0m.1-.6h0m.1-4.3h0m.1 1.1h0m.1 5h0m.1-1h0m.1-1.6h0m.1-.6h0m0 .2h0m.1 6.2h0m.1-17.4h0m.1 18.5h0m.1-14.9h0m.1 16h0m.1-10.7h0m.1 3.7h0m.1-1.7h0m.1 1.8h0m.1 9.7h0m.1-5.9h0m0 .5h0m.1 7.6h0m.1-8.7h0m.1-2.7h0m.1 6.3h0m.1-2.5h0m.1 1.2h0m.1-10.5h0m.1 8.2h0m.1-.3h0m.1-1.9h0m.1 5h0m.1.4h0m0-4.1h0m.1-1.5h0m.1-1.7h0m.1 8.8h0m.1-.6h0m.1 9.3h0m.1-26.7h0m.1 18.6h0m.1-1.9h0m.1 1.1h0m.1-.1h0m.1-1.1h0m0 6.1h0m.1-14.7h0m.1 9.6h0m.1-4.9h0m.1 5.8h0m.1-3.9h0m.1-1.3h0m.1-5.5h0m.1 13.3h0m.1-9.2h0m.1 4h0m.1 5.7h0m0-15.1h0m.1 2.8h0m.1 15.9h0m.1-5.9h0m.1-7.4h0m.1-2.3h0m.1-17.5h0m.1 22.7h0m.1-3.7h0m.1-.4h0m.1-1.2h0m.1 6.1h0m0-9h0m.1 7h0m.1-.5h0m.1-3h0m.1-3.1h0m.1 12.7h0m.1-8.5h0m.1 4.7h0m.1-5.7h0m.1 2.9h0m.1-8.9h0m.1-2.1h0m0 2.8h0m.1 4.6h0m.1-6.2h0m.1 5.7h0m.1-9.6h0m.1 2.6h0m.1 4h0m.1-3h0m.1 7.8h0m.1-5.7h0m.1-.7h0m.1 1.3h0m0 3.6h0m.1 3.1h0m.1-20.8h0m.1 13.3h0m.1 5.6h0m.1-9.5h0m.1 6.8h0m.1-12h0m.1 20.5h0m.1 1.3h0m.1-8h0m.1-11.3h0m0 13.3h0m.1-7.6h0m.1 4.2h0m.1 10.2h0m.1-18h0m.1 23.9h0m.1-20.2h0m.1 6h0m.1-10.2h0m.1 13.7h0m.1.4h0m.1 7.3h0m.1-9.4h0m0 8h0m.1-9.3h0m.1 10.5h0m.1-5.4h0m.1 11.1h0m.1-6.3h0m.1-7.3h0m.1-1.9h0m.1 5.4h0m.1 5h0m.1-2.9h0m.1-4.7h0m0 7.5h0m.1-5.8h0m.1 5.1h0m.1 1.6h0m.1.2h0m.1-4.5h0m.1-2.3h0m.1 1.5h0m.1-12.6h0m.1 11h0m.1-11.9h0m.1 20.2h0m0-21.1h0m.1 3.1h0m.1 14.2h0m.1-2.9h0m.1-8.2h0m.1-5.7h0m.1 15.9h0m.1-5.5h0m.1-4.7h0m.1 8.1h0m.1-11.6h0m.1 18.1h0m0-12h0m.1 2.3h0m.1-15.3h0m.1 15.9h0m.1-2.5h0m.1-3.5h0m.1 6.8h0m.1-8.7h0m.1-7.2h0m.1 6h0m.1 4.8h0m.1-7.4h0m0 8.8h0m.1-11.2h0m.1 10.9h0m.1-2.9h0m.1-5.9h0m.1-5.9h0m.1 16.4h0m.1-12.2h0m.1 10h0m.1 7.7h0m.1-9.9h0m.1-6.2h0m0 8.6h0m.1-4.5h0m.1-6.6h0m.1 8.7h0m.1-4.3h0m.1 9h0m.1 3.9h0m.1-8.2h0m.1 3.2h0m.1 1.2h0m.1-8.4h0m.1 6.7h0m.1 6.9h0m0-11.9h0m.1 7.5h0m.1-12.7h0m.1.9h0m.1-3.2h0m.1 0h0m.1.6h0m.1 17.9h0m.1-13.2h0m.1-4.8h0m.1 16.2h0m.1-1.9h0m0 .3h0m.1 6.1h0m.1-6.5h0m.1-11.7h0m.1 16.9h0m.1-7.3h0m.1 9.7h0m.1 3.8h0m.1-19.5h0m.1 7.9h0m.1 5.3h0m.1 5.8h0m0-12.7h0m.1-6.3h0m.1-1.1h0m.1-8.4h0m.1 23.2h0m.1-11.8h0m.1 8.7h0m.1-.4h0m.1 5h0m.1-19.4h0m.1 10.5h0m.1-2.2h0m0 8.5h0m.1-11.3h0m.1 7.3h0m.1 3.9h0m.1-7h0m.1-2.6h0m.1-5.4h0m.1 6.2h0m.1-3.4h0m.1 2.8h0m.1-8.8h0m.1.4h0m0 .4h0m.1 4.7h0m.1 8.3h0m.1-9.7h0m.1.4h0m.1 5.2h0m.1 6.6h0m.1-2.1h0m.1 4.5h0m.1.4h0m.1-6.5h0m.1-1.3h0m0 4.2h0m.1-10.5h0m.1 3.7h0m.1.4h0m.1 10.7h0m.1-27.2h0m.1 15.1h0m.1 7.4h0m.1-11.6h0m.1 4.5h0m.1-1h0m.1 2.9h0m.1 3h0m0-17.9h0m.1 3.6h0m.1 11.4h0m.1 4.6h0m.1-8.9h0m.1 10.6h0m.1 3.7h0m.1-9.5h0m.1 1.3h0m.1-16h0m.1 12.8h0m.1 7.6h0m0-13.5h0m.1 6.5h0m.1 1.8h0m.1-1.2h0m.1 2.2h0m.1-17.7h0m.1 13.2h0m.1 2.6h0m.1-10.7h0m.1 2.9h0m.1-3.7h0m.1 10.5h0m0 7.2h0m.1-15.9h0m.1 12.3h0m.1-1.8h0m.1-9.9h0m.1 15.1h0m.1-19h0m.1 12h0m.1-1.5h0m.1 1.2h0m.1-6.9h0m.1 5.1h0m0 .3h0m.1 4.1h0m.1-10.2h0m.1-8.1h0m.1 25.8h0m.1-15h0m.1-.2h0m.1 3.9h0m.1 5.3h0m.1-4.2h0m.1 6.8h0m.1-2.5h0m0-2.7h0m.1 4h0m.1-7.2h0m.1 10.5h0m.1-17.1h0m.1 10.7h0m.1-4.8h0m.1 6.7h0m.1-6.2h0m.1 9.1h0m.1 5.8h0m.1-15.1h0m0 9.7h0m.1 2.2h0m.1-11.2h0m.1 16h0m.1-26.3h0m.1 23.2h0m.1-2.1h0m.1-1.8h0m.1-3.7h0m.1 3.1h0m.1.1h0m.1 3.8h0m0-6.7h0m.1-13.3h0m.1 20.4h0m.1-12.2h0m.1 5.3h0m.1 6.2h0m.1-5h0m.1 10.2h0m.1-10.3h0m.1 9.3h0m.1-.6h0m.1-13.4h0m.1 7.3h0m0-.7h0m.1.7h0m.1 7h0m.1-4h0m.1 4.1h0m.1-19h0m.1 15.2h0m.1 4.6h0m.1-13.5h0m.1-2.3h0m.1 6h0m.1-.4h0m0 3.5h0m.1-2h0m.1-3.2h0m.1 3h0m.1-2.4h0m.1 8.6h0m.1-7.7h0m.1-.4h0m.1 4h0m.1 5h0m.1-6.8h0m.1-.2h0m0-12.9h0m.1 10.9h0m.1 1.1h0m.1-7.6h0m.1 10.9h0m.1-9.6h0m.1 7.9h0m.1-20.8h0m.1 13.5h0m.1 5h0m.1-5.5h0m.1-5.9h0m0 20.4h0m.1-8.6h0m.1-17.6h0m.1 20.7h0m.1-13.3h0m.1-.2h0m.1 10.9h0m.1 6.7h0m.1-12.5h0m.1-2.9h0m.1 13.2h0m.1-8.4h0m0-3.1h0m.1 3.6h0m.1 1h0m.1 2.8h0m.1.4h0m.1-.7h0m.1-7.5h0m.1 4.1h0m.1-5.3h0m.1 8h0m.1-8h0m.1 5.9h0m0 5.9h0m.1-7.8h0m.1-4.8h0m.1 14.3h0m.1-19.2h0m.1 7.8h0m.1-3.3h0m.1 10.7h0m.1-13.1h0m.1 5.6h0m.1 3.3h0m.1-.9h0m.1 3.5h0m0-7.3h0m.1 1.9h0m.1 3.8h0m.1-.8h0m.1-6.7h0m.1-1.9h0m.1 17.9h0m.1 1.8h0m.1-12.2h0m.1 4.5h0m.1-4.2h0m.1-1.6h0m0 9.8h0m.1-12.7h0m.1 11h0m.1-9.7h0m.1 7.1h0m.1-.9h0m.1-3h0m.1.1h0m.1-8.3h0m.1 11.5h0m.1-.5h0m.1 1.7h0m0-9.3h0m.1-1.5h0m.1.2h0m.1-14.6h0m.1 20h0m.1-3.9h0m.1 7.7h0m.1-8h0m.1-11.2h0m.1 20.7h0m.1 4h0m.1-3.2h0m0-18.4h0m.1 16.1h0m.1-5.5h0m.1 6.7h0m.1-17.2h0m.1 10.9h0m.1-7.4h0m.1 3.3h0m.1 12.5h0m.1-19.2h0m.1 19.6h0m.1-9.1h0m0-10.5h0m.1 16.8h0m.1-3.6h0m.1 1.4h0m.1-8.4h0m.1 11.4h0m.1-7.6h0m.1 12h0m.1-21.5h0m.1 13.6h0m.1 1.2h0m.1 1.6h0m0-9.3h0m.1 10.1h0m.1-7.7h0m.1 18.3h0m.1-7.3h0m.1 2.5h0m.1-7.1h0m.1 6.7h0m.1-11.5h0m.1 14.9h0m.1-8.4h0m.1-4.2h0m.1 10.1h0m0-6.8h0m.1-5.3h0m.1-1.7h0m.1 4.5h0m.1 1.9h0m.1 4.4h0m.1 4.1h0m.1-1.6h0m.1-10.1h0m.1-3.8h0m.1 0h0m.1 6.2h0m0-11.1h0m.1 12.3h0m.1-6.1h0m.1 4.5h0m.1 4.3h0m.1 2.4h0m.1-2.3h0m.1-15.8h0m.1 2.9h0m.1 7.2h0m.1-10.4h0m.1 7.1h0m0-1.4h0m.1 1.1h0m.1-8.6h0m.1 15.1h0m.1-9.3h0m.1.3h0m.1 2.4h0m.1-18.3h0m.1 21.8h0m.1-.9h0m.1-7.5h0m.1 1.5h0m0-.4h0m.1 5.8h0m.1-5.6h0m.1-7.3h0m.1 11.1h0m.1-9.9h0m.1 4.5h0m.1 5.7h0m.1-3h0m.1-5.2h0m.1-5.3h0m.1-5.7h0m0 5.9h0m.1-3.1h0m.1 3.4h0m.1 2.5h0m.1 4.1h0m.1-4.4h0m.1 6.5h0m.1 2.5h0m.1-5h0m.1 10.2h0m.1-.6h0m.1.2h0m0-5.6h0m.1-5.2h0m.1 7h0m.1-5.3h0m.1-3.1h0m.1 5.4h0m.1-7.7h0m.1 22.9h0m.1-15.8h0m.1-6.5h0m.1 6.3h0m.1 18.5h0m0-5.6h0m.1-7.9h0m.1-7.5h0m.1 7.1h0m.1 6.4h0m.1-9.7h0m.1 10h0m.1-3.9h0m.1-6.8h0m.1 6.4h0m.1 11.6h0m.1-4.9h0m.1-2.6h0m0 4.2h0m.1-6.3h0m.1-12.9h0m.1 7.2h0m.1-8.1h0m.1 10.4h0m.1 14.5h0m.1-13.4h0m.1 1.8h0m.1-1.1h0m.1 1.9h0m.1 7.1h0m0-17.3h0m.1 12.7h0m.1-.2h0m.1 9.8h0m.1-16.9h0m.1 14.6h0m.1-8.2h0m.1-1.3h0m.1-1h0m.1 7h0m.1-11.2h0m.1 9.8h0m0-.6h0m.1 3.1h0m.1-15h0m.1 10.2h0m.1-7.3h0m.1 6.5h0m.1 4.7h0m.1 6.5h0m.1-18.4h0m.1 7h0m.1-9h0m.1 3.6h0m0-3h0m.1 5h0m.1.7h0m.1.9h0m.1-8h0m.1 18.3h0m.1-13.8h0m.1-.3h0m.1 5.3h0m.1-2.1h0m.1-2.6h0m.1 13.7h0m0-14.1h0m.1 16.3h0m.1-7.7h0m.1-11.2h0m.1 6.9h0m.1-10.5h0m.1-1.7h0m.1 11.3h0m.1-8.3h0m.1 4.1h0m.1 8.3h0m.1-9h0m0 9.5h0m.1-4h0m.1-1.1h0m.1-2.1h0m.1.1h0m.1-2.3h0m.1 19.2h0m.1-15.7h0m.1-5.2h0m.1 4.4h0m.1-18.7h0m.1 9.5h0m.1 19.8h0m0-17h0m.1 7.5h0m.1 3h0m.1-6.6h0m.1 4.3h0m.1-18.5h0m.1-5.9h0m.1 18.5h0m.1.3h0m.1.1h0m.1-2.7h0m.1 6.2h0m0-7.6h0m.1-4.5h0m.1 8.3h0m.1 4.1h0m.1 1.1h0m.1-7.2h0m.1 9.4h0m.1 1.8h0m.1-14.9h0m.1-2.8h0m.1-2.5h0m.1 9.1h0m0 12.2h0m.1-22.1h0m.1 14.6h0m.1-2.9h0m.1 5.2h0m.1-11.1h0m.1 12.6h0m.1-14.4h0m.1 13.4h0m.1-7.1h0m.1 4.5h0m.1-1.5h0m0 .8h0m.1 4.6h0m.1-14.1h0m.1 10.8h0m.1-.8h0m.1-6.1h0m.1-6.4h0m.1 10.3h0m.1-8.8h0m.1-2.7h0m.1-3.7h0m.1 22.8h0m0-4.8h0m.1-12.4h0m.1 17.1h0m.1-13.2h0m.1-.7h0m.1-1.8h0m.1 20.1h0m.1-12h0m.1-6.6h0m.1 6.6h0m.1 1.9h0m.1 5.1h0m0-6h0m.1 8.8h0m.1-1.3h0m.1-15.8h0m.1 5.2h0m.1 3.2h0m.1 10.7h0m.1-11.5h0m.1-2.9h0m.1.9h0m.1 8.2h0m.1-18.9h0m.1 13.1h0m0 3.9h0m.1-6h0m.1 10.8h0m.1-11.6h0m.1 16.1h0m.1-8h0m.1-.5h0m.1-1.3h0m.1 5.8h0m.1-8.6h0m.1-6.3h0m.1 4.1h0m0-6.7h0m.1 5.3h0m.1 4h0m.1 2.7h0m.1-5h0m.1-1.7h0m.1 5.3h0m.1 12.4h0m.1-24.9h0m.1 15.3h0m.1 3.1h0m.1 2.4h0m0-18.2h0m.1 9.3h0m.1-.2h0m.1-5.4h0m.1-9.9h0m.1 26.2h0m.1-1.7h0m.1-3.1h0m.1-15.7h0m.1-2.5h0m.1 15.2h0m.1 1.6h0m0-2.3h0m.1-1.2h0m.1-3h0m.1-9.7h0m.1 6.7h0m.1.5h0m.1 3.2h0m.1 11.3h0m.1-14.9h0m.1.4h0m.1 2.4h0m.1.9h0m0 2.5h0m.1 6.3h0m.1-10.8h0m.1 1.2h0m.1-10.4h0m.1 16.1h0m.1-10.2h0m.1-2.6h0m.1 6.2h0m.1-2.9h0m.1-5.9h0m.1 10.4h0m0-5.2h0m.1 4h0m.1-.2h0m.1-3.2h0m.1 1.5h0m.1-.9h0m.1 5.3h0m.1-13.2h0m.1 8.4h0m.1 14h0m.1-4.3h0m.1-19.8h0m0 12.8h0m.1 4.3h0m.1-8.6h0m.1 10.3h0m.1-2.2h0m.1 2.3h0m.1-4.4h0m.1-10.6h0m.1 8.2h0m.1-3.3h0m.1 6.7h0m.1.1h0m.1-.9h0m0-12.8h0m.1 10.7h0m.1 4.3h0m.1 5.2h0m.1-11.4h0m.1 5.2h0m.1 2.7h0m.1-19.5h0m.1 25.3h0m.1-6.8h0m.1-1.3h0m.1-11.9h0m0 3.2h0m.1 12.9h0m.1-5.3h0m.1-7.9h0m.1 16.1h0m.1-2.8h0m.1 1.2h0m.1-12.3h0m.1 4.3h0m.1-10.4h0m.1 7.7h0m.1-3.4h0m0 6.2h0m.1-5.7h0m.1-1.5h0m.1 6h0m.1 0h0m.1.8h0m.1-7.8h0m.1 1.8h0m.1 8.2h0m.1-2.8h0m.1.4h0m.1 3.6h0m0-9.4h0m.1 1.4h0m.1 2.8h0m.1-.6h0m.1-7.5h0m.1 13h0m.1-7.4h0m.1-8.8h0m.1 8.1h0m.1 1.9h0m.1 5.9h0m.1 3.9h0m0-4.6h0m.1-.5h0m.1-12.7h0m.1 17.6h0m.1-14.5h0m.1 1.8h0m.1 5.8h0m.1 1.1h0m.1-10h0m.1 12.8h0m.1-1.2h0m.1-8.3h0m0 6.5h0m.1 2.4h0m.1-6.1h0m.1-8.2h0m.1 13.3h0m.1 3.4h0m.1 4.3h0m.1-5.5h0m.1 3.5h0m.1-9.3h0m.1 11.5h0m.1 1.2h0m.1-15.3h0m0 13.9h0m.1.6h0m.1-10.7h0m.1 6h0m.1 7.7h0m.1-6.7h0m.1-8.8h0m.1 19.4h0m.1-4.6h0m.1 4.7h0m.1-14.7h0m.1 16.4h0m0-8.7h0m.1-2.6h0m.1 1.4h0m.1-5.6h0m.1 9.1h0m.1 1.5h0m.1-9.1h0m.1-4.3h0m.1-.3h0m.1 12.4h0m.1-7.3h0m.1 3.7h0m0 3.8h0m.1-15.8h0m.1 11.2h0m.1 5.2h0m.1-8.4h0m.1-2.2h0m.1-4.5h0m.1 7h0m.1 5.6h0m.1-.3h0m.1-2h0m.1-4.2h0m0-3.1h0m.1-7.5h0m.1 12.2h0m.1-2.2h0m.1-1.1h0m.1.5h0m.1-2.8h0m.1 2.3h0m.1 1.1h0m.1 2.7h0m.1-8.8h0m.1 5.7h0m0-11.4h0m.1 16.4h0m.1-5.1h0m.1 7.7h0m.1-17.6h0m.1 4.6h0m.1-1h0m.1-4.8h0m.1-3.2h0m.1 22.3h0m.1-18.6h0m.1 4h0m0-8.3h0m.1 3.6h0m.1 4.1h0m.1-1.6h0m.1 3.6h0m.1 10.4h0m.1-23.7h0m.1 25.1h0m.1-17.5h0m.1 4.9h0m.1 1.5h0m.1 4.5h0m.1-4h0m0-6.8h0m.1 2.9h0m.1 1.9h0m.1-2.6h0m.1 9.7h0m.1-16.1h0m.1 14h0m.1-6.7h0m.1-1.2h0m.1 1h0m.1.9h0m.1-4.2h0m0 13.3h0m.1-4.2h0m.1-14.7h0m.1 9.2h0m.1 7.6h0m.1-2.4h0m.1 4.3h0m.1-6.8h0m.1 7.5h0m.1-1.5h0m.1-4.5h0m.1 5.6h0m0-8.8h0m.1-1.4h0m.1 5.3h0m.1 1.4h0m.1-6.4h0m.1 9.4h0m.1-7.7h0m.1 9h0m.1 2.7h0m.1-.2h0m.1-3.1h0m.1 3.7h0m0-10.7h0m.1 7.5h0m.1 2.9h0m.1-15.9h0m.1 18.1h0m.1-8.7h0m.1 2.1h0m.1-5.6h0m.1 8h0m.1 1.4h0m.1.9h0m.1-2.4h0m0-11.3h0m.1 14.8h0m.1 4.6h0m.1-8.6h0m.1-6.1h0m.1 4h0m.1 5.4h0m.1-17.6h0m.1 20.3h0m.1-1.9h0m.1-3.9h0m.1-15.4h0m0 6.9h0m.1 4.8h0m.1-1.7h0m.1-5.5h0m.1 4.7h0m.1.3h0m.1-3.1h0m.1-6.5h0m.1 13.6h0m.1 3h0m.1-4.4h0m.1-12.6h0m0 14.6h0m.1 2.6h0m.1 2.9h0m.1-13.1h0m.1 6.4h0m.1-2.4h0m.1 3.2h0m.1-.1h0m.1.8h0m.1-.1h0m.1-1.5h0m.1 7h0m.1-4.4h0m0-8.9h0m.1 7.3h0m.1-9.1h0m.1-6.3h0m.1 17.1h0m.1-8.3h0m.1-5h0m.1-.1h0m.1.8h0m.1 2.5h0m.1 8.3h0m.1-1.8h0m0-18.1h0m.1 12.1h0m.1 5.3h0m.1-3.7h0m.1 7.1h0m.1-19.8h0m.1 5.6h0m.1 5.5h0m.1 10.3h0m.1-7.9h0m.1-2h0m.1 9.9h0m0-17h0m.1 20.2h0m.1-13.5h0m.1 2.9h0m.1-3.9h0m.1 4.5h0m.1-16.6h0m.1 25.5h0m.1-7.5h0m.1-2h0m.1-10.1h0m.1 4.3h0m0 6h0m.1 1.1h0m.1-7.3h0m.1 8h0m.1-1.7h0m.1.3h0m.1-3.6h0m.1.9h0m.1-4.3h0m.1 3.6h0m.1.2h0m.1 8.2h0m0-9.1h0m.1 2.6h0m.1 6.1h0m.1-2h0m.1 7.2h0m.1-1.7h0m.1 5.2h0m.1-4.3h0m.1-12.8h0m.1 11.6h0m.1 7.3h0m.1-15.2h0m0-3.9h0m.1 7.7h0m.1 1.5h0m.1-3.2h0m.1 11.9h0m.1-3.9h0m.1-4.4h0m.1 3.1h0m.1 3.1h0m.1-1.9h0m.1 8h0m.1-3.6h0m.1.9h0m0-2.1h0m.1-16.5h0m.1 12.9h0m.1-12.9h0m.1 7.5h0m.1 1.2h0m.1-7.9h0m.1 9.1h0m.1 3.4h0m.1-5.8h0m.1-1.1h0m.1-.6h0m0 3.1h0m.1-4.1h0m.1 1.1h0m.1 2.5h0m.1-5.5h0m.1 4.7h0m.1-3h0m.1 2.2h0m.1 1h0m.1-5.5h0m.1 9.9h0m.1-.7h0m0-12.2h0m.1 1.3h0m.1 2.2h0m.1 12.7h0m.1-7.1h0m.1-21.2h0m.1 17.2h0m.1-.8h0m.1-10.4h0m.1 3.6h0m.1 6h0m.1-.9h0m0 1.6h0m.1-2.1h0m.1-15.1h0m.1 19.6h0m.1-11.3h0m.1 2.5h0m.1 8.9h0m.1-7.1h0m.1 12.7h0m.1-2.6h0m.1-6.7h0m.1-17.5h0m0 23h0m.1.4h0m.1-16.6h0m.1 5.4h0m.1 10.3h0m.1-12.8h0m.1 1.9h0m.1 8.8h0m.1-6.3h0m.1 2.4h0m.1.2h0m.1.8h0m0-9.5h0m.1 12.3h0m.1 1h0m.1-6.4h0m.1-.2h0m.1 4.7h0m.1 11.7h0m.1-9.8h0m.1 9.1h0m.1 2.8h0m.1-8.8h0m.1-9.7h0m0 1.7h0m.1 3.5h0m.1 9.5h0m.1-6.7h0m.1-10.9h0m.1 10.2h0m.1 2.5h0m.1-11.1h0m.1 11.4h0m.1-4.2h0m.1 4.6h0m.1-14.8h0m.1 5.7h0m0 1h0m.1.9h0m.1.7h0m.1.2h0m.1 9.7h0m.1 8.3h0m.1-18.4h0m.1-5.6h0m.1-4.1h0m.1 7.7h0m.1-10.4h0m.1 4.4h0m0 1.7h0m.1.3h0m.1-2.1h0m.1-1.2h0m.1-1.7h0m.1.9h0m.1-4h0m.1 9.2h0m.1-3.1h0m.1-4.7h0m.1 10.8h0m.1-11h0m0 8.2h0m.1 8.6h0m.1-2.8h0m.1-1.2h0m.1-3.9h0m.1-7.2h0m.1 7.2h0m.1-.1h0m.1-1.6h0m.1-.7h0m.1 4h0m.1 1h0m0-1.5h0m.1 3.8h0m.1-8.8h0m.1-4.4h0m.1 17.1h0m.1-2.5h0m.1-15.3h0m.1 3.9h0m.1 11.8h0m.1-8.4h0m.1-4.1h0m.1-5.8h0m0 11.2h0m.1 9.6h0m.1-11h0m.1 6.1h0m.1-3.8h0m.1 3.8h0m.1-6.5h0m.1.5h0m.1-7.3h0m.1 10.5h0m.1-4.1h0m.1 3.6h0m0 4.6h0m.1-4.5h0m.1-1.5h0m.1-5h0m.1 14.2h0m.1-4.8h0m.1-11h0m.1 13h0m.1 3.5h0m.1-.8h0m.1-14.2h0m.1 8.6h0m.1 11h0m0-13.7h0m.1 5.6h0m.1-5.9h0m.1.2h0m.1.7h0m.1 2.1h0m.1 5.3h0m.1-4.4h0m.1 1.4h0m.1 6.7h0m.1-4.1h0m.1-2.1h0m0 6.3h0m.1-13.7h0m.1 4.4h0m.1 8.9h0m.1-3.7h0m.1-.7h0m.1 1.1h0m.1.8h0m.1 3.1h0m.1-13.6h0m.1 12.6h0m.1-12.7h0m0 9.1h0m.1-3.8h0m.1 10.3h0m.1-14.7h0m.1 7.5h0m.1-11.8h0m.1 20.2h0m.1-11h0m.1 10.3h0m.1-13.9h0m.1-3.1h0m.1 20.3h0m0-8h0m.1-1.4h0m.1-5.5h0m.1 14.5h0m.1-7.9h0m.1-4.1h0m.1 8.9h0m.1-10.8h0m.1 10.3h0m.1 1.2h0m.1-5.8h0m.1 10.8h0m0-3.5h0m.1-6h0m.1 7.3h0m.1-3.5h0m.1-15.2h0m.1 9.1h0m.1-1.8h0m.1 7.6h0m.1-7h0m.1 7.8h0m.1.8h0m.1-2h0m0 .6h0m.1-1.8h0m.1-2.7h0m.1 2.5h0m.1-6.3h0m.1-9.1h0m.1 3h0m.1 4.2h0m.1 9.6h0m.1-7.6h0m.1 9.7h0m.1-10.8h0m.1 15.9h0m0-8.9h0m.1-8.2h0m.1 11.8h0m.1 5h0m.1-7.2h0m.1-1.5h0m.1-8.4h0m.1 7.9h0m.1.1h0m.1-9.8h0m.1 4.3h0m.1-1.8h0m0 9.9h0m.1-3h0m.1-.3h0m.1 10.2h0m.1-16.1h0m.1-11.7h0m.1 24.5h0m.1-12.7h0m.1-10.5h0m.1 6.2h0m.1.7h0m.1 17h0m0-18.8h0m.1 3.6h0m.1-3.5h0m.1 9.7h0m.1 2.1h0m.1 1h0m.1-16.6h0m.1-2.4h0m.1 9.6h0m.1-6.9h0m.1 3h0m.1 2.2h0m0-8.9h0m.1 9.6h0m.1 14.2h0m.1-11.8h0m.1-5.3h0m.1 2.3h0m.1-4.9h0m.1 10.1h0m.1-3.1h0m.1-2.1h0m.1-6.6h0m.1 5.7h0m0-3h0m.1 7.9h0m.1-19.3h0m.1 20.6h0m.1-1h0m.1-20.8h0m.1 10.1h0m.1 6.6h0m.1-3.8h0m.1.2h0m.1-4.4h0m.1 13.7h0m0-15.5h0m.1 10.3h0m.1 4h0m.1-2.7h0m.1-3h0m.1-12.5h0m.1 4.6h0m.1 5.7h0m.1 11.2h0m.1-9h0m.1 2h0m.1-4.6h0m0 10.1h0m.1-4h0m.1-5.3h0m.1 17.8h0m.1-14.2h0m.1 3h0m.1 8h0m.1-1.2h0m.1-8.2h0m.1-10.8h0m.1 6.4h0m.1 4.3h0m.1 3.5h0m0-6.7h0m.1 7h0m.1 6.2h0m.1-7.2h0m.1-14.6h0m.1 7.1h0m.1 10.4h0m.1 2.8h0m.1 6.1h0m.1-14.2h0m.1-1.6h0m.1 18.4h0m0-6.9h0m.1-1.2h0m.1-6.8h0m.1 2.2h0m.1-2.3h0m.1 8.3h0m.1 4.5h0m.1-4.1h0m.1-10.4h0m.1 13.8h0m.1-7.2h0m.1.5h0m0 4.1h0m.1-.1h0m.1-5.3h0m.1-7.5h0m.1 9.9h0m.1-2h0m.1 2.4h0m.1-7.4h0m.1 1.8h0m.1 7.2h0m.1-15h0m.1 13.2h0m0-8.2h0m.1-2.8h0m.1 6.5h0m.1 1.6h0m.1-7.8h0m.1-2.2h0m.1-7.8h0m.1 12.5h0m.1 8.9h0m.1-7.6h0m.1 2h0m.1-8.2h0m0-13.2h0m.1 30.7h0m.1-9.1h0m.1-12h0m.1 3.9h0m.1 12.6h0m.1-10.7h0m.1 10.9h0m.1-10.4h0m.1 9.1h0m.1-22.6h0m.1 11.5h0m0 3.8h0m.1 5.3h0m.1-8.6h0m.1 3.5h0m.1-5.7h0m.1-.2h0m.1 5.6h0m.1 6h0m.1-4.2h0m.1-7h0m.1 6.6h0m.1 3.7h0m.1-3.1h0m0-2.7h0m.1 1.3h0m.1 4.9h0m.1-14.2h0m.1 23.3h0m.1-23.5h0m.1 16.8h0m.1-10.9h0m.1-3.7h0m.1 11.4h0m.1-10.5h0m.1-.7h0m0 3.5h0m.1 2.5h0m.1 7.8h0m.1-12.5h0m.1 5.1h0m.1 4.1h0m.1-3h0m.1-2.1h0m.1-13.8h0m.1-2.7h0m.1 16.6h0m.1 4.2h0m0 4.8h0m.1-13.8h0m.1 2.8h0m.1-6.8h0m.1 6.9h0m.1 10.4h0m.1-15.3h0m.1 6.6h0m.1-1.1h0m.1.8h0m.1-9.6h0m.1 12.6h0m0-4.2h0m.1 4.6h0m.1 8.7h0m.1-14h0m.1 11.3h0m.1 7.2h0m.1-17.5h0m.1-10.7h0m.1 17.3h0m.1-4.9h0m.1 8.8h0m.1-4.9h0m0-4.1h0m.1 3.4h0m.1 7.4h0m.1-4.9h0m.1-4.4h0m.1 2.9h0m.1-3.5h0m.1-4h0m.1 6.6h0m.1-12.5h0m.1 18.9h0m.1-.5h0m0 .7h0m.1-10.1h0m.1-5.2h0m.1.7h0m.1 2.5h0m.1 10.3h0m.1-6.1h0m.1 4h0m.1 11.2h0m.1-15.1h0m.1 3.5h0m.1-4.5h0m.1 8.5h0m0-.5h0m.1-5.1h0m.1-5.9h0m.1 6.3h0m.1 8.1h0m.1-11.5h0m.1 4.6h0m.1-2.2h0m.1-.9h0m.1 3.6h0m.1-6.1h0m.1 8.6h0m0-2.1h0m.1-2.4h0m.1-9.3h0m.1 14.9h0m.1-9.8h0m.1 10.2h0m.1 3.1h0m.1-12.4h0m.1 10.9h0m.1-10.1h0m.1 5.7h0m.1 4.3h0m0-8.2h0m.1 1.9h0m.1-1h0m.1-8.4h0m.1 11h0m.1-16.5h0m.1 11.7h0m.1-3.2h0m.1 3.9h0m.1-5.4h0m.1 10.3h0m.1-9.4h0m0 1.8h0m.1 5.3h0m.1-15h0m.1 19.6h0m.1-9.6h0m.1 2.5h0m.1-7.9h0m.1 2.1h0m.1-2.4h0m.1 7.6h0m.1 3.1h0m.1-4.5h0m0 2.1h0m.1 12.7h0m.1-16.1h0m.1 4h0m.1-22h0m.1 17h0m.1-2.8h0m.1-12.4h0m.1 21.6h0m.1 1.7h0m.1-14.9h0m.1 10.3h0m0-3.7h0m.1-9.1h0m.1-1.3h0m.1 13.7h0m.1-18.2h0m.1 23.8h0m.1-9.7h0m.1-3.7h0m.1 4.3h0m.1 4h0m.1-16.6h0m.1 7.8h0m0 11h0m.1-7.6h0m.1 1.3h0m.1-1.6h0m.1 8.2h0m.1-7.5h0m.1-7.2h0m.1 18h0m.1-22.5h0m.1 11.5h0m.1-2.6h0m.1 4.2h0m.1-7h0m0 .7h0m.1-10.9h0m.1 16.7h0m.1 2.9h0m.1-10h0m.1 7.2h0m.1 6h0m.1-6.7h0m.1 6.3h0m.1-1h0m.1-3.5h0m.1 2h0m0 1.6h0m.1 2.7h0m.1-3.4h0m.1-6.7h0m.1-5.8h0m.1 14.1h0m.1-.8h0m.1-5.5h0m.1 6.1h0m.1 2.2h0m.1-7.9h0m.1-4.5h0m0-2.5h0m.1 16.6h0m.1-12.5h0m.1 18.9h0m.1-22.2h0m.1 1.7h0m.1 8.7h0m.1-14.6h0m.1 10.1h0m.1 8h0m.1.3h0m.1 3.4h0m0-8.7h0m.1 11.3h0m.1-7.6h0m.1-.5h0m.1-9.1h0m.1 6.4h0m.1 1.6h0m.1 3.8h0m.1-5h0m.1-1.4h0m.1 10.8h0m.1 3.3h0m0-15.2h0m.1 17.1h0m.1-11.9h0m.1 2.8h0m.1-6.2h0m.1-6.5h0m.1-10h0m.1 22.2h0m.1-10.1h0m.1-1h0m.1 10.2h0m.1-12.6h0m0 5h0m.1 2.4h0m.1 9.2h0m.1 8.2h0m.1-18.1h0m.1 3.6h0m.1 5.5h0m.1-6.4h0m.1-11.1h0m.1 14.1h0m.1-3h0m.1 8.9h0m.1-3.1h0m0-.9h0m.1-1.4h0m.1 6.8h0m.1-7.8h0m.1 1.1h0m.1-6.9h0m.1 3h0m.1-15.6h0m.1 9h0m.1 13.7h0m.1-2h0m.1-20.9h0m0 13.1h0m.1 9h0m.1-.4h0m.1-6.2h0m.1-5.9h0m.1 8.4h0m.1-.4h0m.1-3.4h0m.1-5h0m.1 1.6h0m.1 1.6h0m.1-13.4h0m0 11.7h0m.1 8.3h0m.1-2.2h0m.1 5.8h0m.1-16.4h0m.1 11.6h0m.1-18.6h0m.1 5h0m.1 8h0m.1-11.6h0m.1 4h0m.1 3.9h0m0 4.3h0m.1-3.3h0m.1-9.8h0m.1 4.7h0m.1-2.9h0m.1.1h0m.1 7.9h0m.1-2.6h0m.1-10h0m.1 11.4h0m.1 5.7h0m.1-5.4h0m0-.3h0m.1-7.9h0m.1 4.6h0m.1.7h0m.1 8h0m.1-7.1h0m.1-4.5h0m.1 6.4h0m.1 12.7h0m.1-7.1h0m.1-3.6h0m.1 4.7h0m0-2.1h0m.1-4.4h0m.1 15h0m.1-3.8h0m.1-12.8h0m.1 4h0m.1 2.7h0m.1-1.8h0m.1 7.5h0m.1-12.4h0m.1 10h0m.1 3.6h0m.1-10.5h0m0 9h0m.1-4.8h0m.1-.5h0m.1 9.5h0m.1-6.3h0m.1 2.9h0m.1-6.5h0m.1 8.4h0m.1-.9h0m.1-14h0m.1 9h0m.1 6.4h0m0-12.5h0m.1 13.6h0m.1-10.5h0m.1 1.1h0m.1 5.3h0m.1-6.1h0m.1-1.9h0m.1 11.1h0m.1 2h0m.1-17.7h0m.1.6h0m.1 1.6h0m0 6.4h0m.1-4.4h0m.1 4.1h0m.1-8.2h0m.1 4.9h0m.1-8.4h0m.1 6.6h0m.1-12.2h0m.1 7.7h0m.1 10.4h0m.1-11.1h0m.1 6.4h0m0-1.1h0m.1-2.2h0m.1.2h0m.1 12.7h0m.1-.5h0m.1-18.7h0m.1 12.5h0m.1-8.2h0m.1 10.7h0m.1-7.2h0m.1 2.1h0m.1-2.5h0m0 3.1h0m.1 7.1h0m.1 11.9h0m.1-12.2h0m.1-22.3h0m.1 17.8h0m.1 13.7h0m.1-5.4h0m.1-5.1h0m.1 10h0m.1-16.1h0m.1 17.8h0m0-11.9h0m.1-7.1h0m.1 16.6h0m.1-6.4h0m.1-.9h0m.1 7.2h0m.1-10.2h0m.1 8.2h0m.1 4.2h0m.1.2h0m.1-6.3h0m.1-4.4h0m0 2.1h0m.1 10.9h0m.1-10.7h0m.1-3.3h0m.1 3.1h0m.1 11.1h0m.1-10.8h0m.1-3.5h0m.1 14.4h0m.1-5.7h0m.1-12.9h0m.1 4.9h0m.1 4.5h0m0-5.9h0m.1 2.3h0m.1-1.8h0m.1-11.3h0m.1 17.1h0m.1-16.5h0m.1 4.6h0m.1-1.5h0m.1 4.2h0m.1-8.7h0m.1 5.9h0m.1 4.4h0m0-11.9h0m.1 6.2h0m.1 1.9h0m.1-3.5h0m.1-2.6h0m.1 3.9h0m.1-.4h0m.1 2h0m.1-4.8h0m.1 4.7h0m.1 3.8h0m.1-2.7h0m0-9.2h0m.1-1.2h0m.1 8.1h0m.1.5h0m.1-2.2h0m.1 7.9h0m.1-3.5h0m.1-12.8h0m.1 8.8h0m.1-3.1h0m.1-2.3h0m.1 14h0m0 5.2h0m.1-6.4h0m.1-14h0m.1 10h0m.1-9.6h0m.1 8.1h0m.1 1.6h0m.1-.7h0m.1 7.6h0m.1-10.7h0m.1 5h0m.1-10h0m0 6.5h0m.1 12.2h0m.1-6h0m.1-9.8h0m.1 8.2h0m.1 1.5h0m.1-10.5h0m.1 16h0m.1-6.8h0m.1 2.6h0m.1-12.7h0m.1 13.5h0m0-2.6h0m.1-6.6h0m.1 10.4h0m.1 3.3h0m.1-7h0m.1-8.3h0m.1-.7h0m.1 14.3h0m.1 9.6h0m.1-10.1h0m.1 2.8h0m.1 9.2h0m.1-7.2h0m0 1.8h0m.1-6.7h0m.1-2.2h0m.1 8.9h0m.1-.2h0m.1-6.5h0m.1-15.2h0m.1 25.8h0m.1-4.7h0m.1-5.7h0m.1 12.5h0m.1-14.7h0m0 .5h0m.1 10.1h0m.1-3.2h0m.1-.8h0m.1.3h0m.1-10.5h0m.1 11.3h0m.1-6.8h0m.1-1.8h0m.1 1.5h0m.1 5.7h0m.1-8.4h0m0-.3h0m.1-5.6h0m.1 14.3h0m.1.5h0m.1-6.7h0m.1-5.1h0m.1 10h0m.1-9.5h0m.1 12.4h0m.1-6.9h0m.1-11.9h0m.1 8.1h0m0 4.7h0m.1-10.6h0m.1 4.8h0m.1-1.4h0m.1 4.2h0m.1 1h0m.1 2.9h0m.1-2.3h0m.1-2.4h0m.1-11.7h0m.1-.1h0m.1 7.2h0m0 8.1h0m.1 8.3h0m.1-9.6h0m.1 1h0m.1-5.1h0m.1 2.7h0m.1-.1h0m.1-4.4h0m.1-7.6h0m.1 11.7h0m.1 2.3h0m.1.3h0m0-11.9h0m.1 6.2h0m.1 1h0m.1-3.3h0m.1 3.8h0m.1.8h0m.1-4.2h0m.1 10.2h0m.1-1.9h0m.1-9.1h0m.1-2.3h0m.1-10.6h0m0 18.6h0m.1-11.3h0m.1 12.3h0m.1-12.5h0m.1-1.1h0m.1 15.2h0m.1-4.3h0m.1-15h0m.1 11.1h0m.1 7h0m.1 3.1h0m.1-2.1h0m.1-4.9h0m0-10.9h0m.1-6.2h0m.1 12.5h0m.1 10.6h0m.1-12.5h0m.1 9.4h0m.1 3.2h0m.1-9.4h0m.1 4.2h0m.1 3.8h0m.1-8.2h0m.1 12h0m0-3.1h0m.1-5.6h0m.1 1.8h0m.1 4.8h0m.1 1h0m.1-12.5h0m.1 1.5h0m.1.8h0m.1 2.9h0m.1.5h0m.1 1.5h0m.1 3.6h0m0-10.1h0m.1 6.9h0m.1-1.9h0m.1-3h0m.1 4h0m.1 1.2h0m.1 2.4h0m.1-9.5h0m.1 13.1h0m.1-11.8h0m.1 1.9h0m.1 2.2h0m0 4h0m.1-9.9h0m.1 13.1h0m.1-7.6h0m.1-5.2h0m.1 9.3h0m.1 1.9h0m.1-4.2h0m.1 5.7h0m.1-4.9h0m.1 6.3h0m.1-10.6h0m0 3.1h0m.1-12.1h0m.1 12.4h0m.1 4.6h0m.1-5.2h0m.1-3.1h0m.1 1.6h0m.1 1h0m.1.9h0m.1 5.2h0m.1-2.9h0m.1 1.5h0m0-5.6h0m.1-.4h0m.1 3.9h0m.1-1.8h0m.1-1.1h0m.1 7.2h0m.1-8.2h0m.1 3h0m.1 6.5h0m.1-5.8h0m.1 7.1h0m.1-10.4h0m.1 4.4h0m0-2.2h0m.1 6.4h0m.1-7.3h0m.1 0h0m.1 8.6h0m.1-8.7h0m.1 1.6h0m.1 6.3h0m.1-4.4h0m.1-12.5h0m.1-.7h0m.1 20.3h0m0-18.2h0m.1 4.8h0m.1-1.5h0m.1 13.3h0m.1-3.6h0m.1 1.2h0m.1-8.7h0m.1 6.8h0m.1-6.8h0m.1 3.9h0m.1 2.1h0m.1-3.2h0m0-5.3h0m.1 3.6h0m.1-8.4h0m.1 14.3h0m.1-15.6h0m.1 17.1h0m.1-20.9h0m.1 8.8h0m.1-3.2h0m.1-1.3h0m.1-.1h0m.1 3.8h0m0-1.8h0m.1 1.2h0m.1 7.4h0m.1-16.8h0m.1 10.5h0m.1-.8h0m.1-2.2h0m.1 5h0m.1-4.2h0m.1 2.1h0m.1 2.6h0m.1 2.6h0m0-12.5h0m.1 16.2h0m.1-7.6h0m.1 1.5h0m.1-9.1h0m.1 12h0m.1-2h0m.1.9h0m.1 2.7h0m.1-2.1h0m.1 1h0m.1-7.5h0m0 2.6h0m.1-7.7h0m.1 15.4h0m.1-.2h0m.1-3.6h0m.1 7.6h0m.1-17h0m.1 14.3h0m.1 8.3h0m.1-6.1h0m.1-16.2h0m.1 12.5h0m.1 4h0m0-7.4h0m.1 0h0m.1-4h0m.1 8.3h0m.1-2.8h0m.1.2h0m.1-2.5h0m.1-1h0m.1 9.1h0m.1 4.1h0m.1-2.8h0m.1-14.1h0m0 6h0m.1 4h0m.1-11.8h0m.1 3.4h0m.1 8.5h0m.1-15h0m.1 15h0m.1-8.1h0m.1-6.1h0m.1 4.4h0m.1-.5h0m.1 1.2h0m0 6.9h0m.1-10.8h0m.1 4.9h0m.1.7h0m.1-1.2h0m.1-11.8h0m.1 6.5h0m.1 5.3h0m.1-7.3h0m.1 3.6h0m.1 3.7h0m.1 1.7h0m0-7.2h0m.1-1.1h0m.1 7.2h0m.1 3.4h0m.1-12.9h0m.1.8h0m.1 1.3h0m.1 5.4h0m.1-3.1h0m.1-.1h0m.1 8.6h0m.1-15.5h0m0 13.1h0m.1-3.1h0m.1 2.5h0m.1.6h0m.1 1.4h0m.1 0h0m.1 4h0m.1-21h0m.1 23.8h0m.1-24.6h0m.1 18.2h0m.1 5.8h0m0-13.3h0m.1 17h0m.1-5.8h0m.1 5.5h0m.1-14.6h0m.1 5.8h0m.1 3.4h0m.1 4.3h0m.1-2.4h0m.1-12h0m.1 5.1h0m.1 9.9h0m0-8.5h0m.1 9.9h0m.1-7.1h0m.1 2.6h0m.1.4h0m.1 9.3h0m.1-18.1h0m.1 13.1h0m.1-7.8h0m.1 5.2h0m.1-20.8h0m.1 14.5h0m.1 8.1h0m0-7.7h0m.1-5h0m.1 14h0m.1-5.2h0m.1-2.4h0m.1-.5h0m.1-3.2h0m.1 9.4h0m.1-14.2h0m.1 3.5h0m.1 10.8h0m.1-4.4h0m0-7.9h0m.1 15.7h0m.1-12.9h0m.1 3.8h0m.1 2.1h0m.1-1.8h0m.1 3.3h0m.1-16.7h0m.1 3.9h0m.1 9.3h0m.1 6.5h0m.1-.5h0m0-3.6h0m.1.5h0m.1-1h0m.1 5.2h0m.1-22.4h0m.1 15.2h0m.1-17.3h0m.1 10.7h0m.1 6.9h0m.1 4.5h0m.1 1h0m.1-4.7h0m0 5h0m.1-11.7h0m.1.9h0m.1-.1h0m.1 2h0m.1-2.4h0m.1 12.1h0m.1.7h0m.1-7.4h0m.1 2.5h0m.1-10.4h0m.1 15.1h0m0-2.3h0m.1-6.8h0m.1 8.6h0m.1-3.5h0m.1-5.2h0m.1 8.1h0m.1-15.5h0m.1 7.9h0m.1 11.6h0m.1-7.2h0m.1-.5h0m.1-11.9h0m0 5.2h0m.1 14.6h0m.1-11.3h0m.1 1.8h0m.1-2.7h0m.1 5.7h0m.1-10.8h0m.1 10.4h0m.1-12.7h0m.1 11.4h0m.1 11.5h0m.1-10.9h0m.1-.3h0m0-5.4h0m.1-4.9h0m.1 1.6h0m.1-3h0m.1 5.3h0m.1.2h0m.1-5.7h0m.1 13.5h0m.1-8.6h0m.1 11h0m.1-1.8h0m.1-11.7h0m0 7.9h0m.1-2.8h0m.1 3.5h0m.1-13h0m.1 18.3h0m.1-13.8h0m.1 4.8h0m.1-3.3h0m.1 2.8h0m.1-.6h0m.1-5.1h0m.1-.7h0m0 5.4h0m.1-4.9h0m.1-6.7h0m.1 13.3h0m.1 1.2h0m.1-12.5h0m.1 4.7h0m.1 5.9h0m.1 3.9h0m.1 3.4h0m.1-15.4h0m.1 6.4h0m0-5.3h0m.1 12.6h0m.1-6.1h0m.1 4.4h0m.1-10.7h0m.1 12.2h0m.1-1.9h0m.1.1h0m.1 1.1h0m.1-11.8h0m.1 17.7h0m.1-10.4h0m0-6.7h0m.1 13.1h0m.1-5.8h0m.1 6.5h0m.1-12.4h0m.1 2h0m.1-.1h0m.1 5.9h0m.1 2.7h0m.1-11.4h0m.1 10.9h0m.1 6.1h0m0-.1h0m.1-3.9h0m.1-10.8h0m.1 3.7h0m.1 10.7h0m.1 1.9h0m.1-3.8h0m.1-4.5h0m.1-6h0m.1 7.6h0m.1 4.7h0m.1-4.9h0m.1.6h0m0-8.8h0m.1 11.7h0m.1 7.1h0m.1-11.7h0m.1-6.9h0m.1-1.6h0m.1 14.6h0m.1-6.5h0m.1-2h0m.1-.8h0m.1.8h0m.1 9.8h0m0-8.2h0m.1-2h0m.1-2.4h0m.1-1.5h0m.1-1.3h0m.1 3h0m.1 10h0m.1-9.5h0m.1 4.7h0m.1-11h0m.1 16.1h0m.1-9.6h0m0-4.2h0m.1 9.5h0m.1-2.5h0m.1-.8h0m.1-17.6h0m.1 18.5h0m.1-1.4h0m.1-14.8h0m.1 7.1h0m.1 3.8h0m.1 8h0m.1-18.4h0m0 6.8h0m.1-2.5h0m.1 4.9h0m.1 6.3h0m.1-1.8h0m.1-13.7h0m.1 3.2h0m.1 8h0m.1-.3h0m.1-.2h0m.1 1.1h0m.1-11.2h0m0 5.5h0m.1-9.3h0m.1 24.4h0m.1-19.3h0m.1-1.9h0m.1 2.6h0m.1 12.2h0m.1-12.8h0m.1 18.9h0m.1-6.4h0m.1-.9h0m.1-9.9h0m0 16.9h0m.1-4.3h0m.1-14.5h0m.1 6.5h0m.1 10.8h0m.1-7.2h0m.1-1.4h0m.1-1h0m.1 12.4h0m.1-5.5h0m.1 6.8h0m.1-8.8h0m0-5.5h0m.1 3.2h0m.1-3.5h0m.1 13.3h0m.1-3.2h0m.1-17.1h0m.1 13.7h0m.1-4h0m.1 4h0m.1-6.9h0m.1 6.5h0m.1 1.3h0m.1-2.6h0m0 4.6h0m.1-3.3h0m.1 2.2h0m.1-1.1h0m.1-4.8h0m.1 8.4h0m.1-11.5h0m.1 6.9h0m.1-.1h0m.1 2.2h0m.1-15.8h0m.1 14.5h0m0 3.8h0m.1-7h0m.1.2h0m.1-6.8h0m.1 10h0m.1-2.1h0m.1-3h0m.1-3.5h0m.1 15.5h0m.1-4.1h0m.1-6.7h0m.1-8.1h0m0 .6h0m.1 11.3h0m.1-8.7h0m.1 11.7h0m.1 1.2h0m.1-15.8h0m.1 13.7h0m.1-14.2h0m.1 17.7h0m.1-5.5h0m.1-3.3h0m.1-5.4h0m0 1.5h0m.1 5.2h0m.1 4.8h0m.1-5h0m.1-.9h0m.1-8.6h0m.1 20.2h0m.1-20h0m.1 14.7h0m.1-2.3h0m.1-2.9h0m.1-2.4h0m0 2.3h0m.1 2.5h0m.1-1.4h0m.1 10.3h0m.1-23.8h0m.1 23.7h0m.1-21.9h0m.1 17.3h0m.1.5h0m.1-24.1h0m.1 18.7h0m.1-1.6h0m0 .9h0m.1 2.5h0m.1-6.2h0m.1 6.4h0m.1-13.5h0m.1 18.8h0m.1 4.2h0m.1-10.6h0m.1-6.1h0m.1 11h0m.1-4.3h0m.1-6.8h0m.1 5.3h0m0 .4h0m.1 6.4h0m.1-16.6h0m.1 15.4h0m.1 1.4h0m.1-15.2h0m.1 7.1h0m.1-9.4h0m.1.5h0m.1 6.6h0m.1-12.1h0m.1 9.9h0m0-2h0m.1-.4h0m.1-.9h0m.1 5.7h0m.1-12.3h0m.1-2.5h0m.1 5.6h0m.1 3.3h0m.1 5.1h0m.1 3.5h0m.1-7.4h0m.1.6h0m0-.5h0m.1-2.9h0m.1-2.3h0m.1-2.6h0m.1 21.3h0m.1-13.8h0m.1 8.7h0m.1-6.9h0m.1 1.1h0m.1-1.6h0m.1-7.3h0m.1 2.9h0m0-8.5h0m.1 4.4h0m.1 14h0m.1-16.7h0m.1 21.9h0m.1-9.6h0m.1-1.9h0m.1-.9h0m.1 3.7h0m.1-4.2h0m.1 9.1h0m.1-5.1h0m0 3.2h0m.1-2.4h0m.1-11.3h0m.1 5.4h0m.1 15.1h0m.1-13.4h0m.1-8.4h0m.1 17.4h0m.1-2h0m.1-6.7h0m.1 8.8h0m.1-12.8h0m0 13.5h0m.1.1h0m.1-9.3h0m.1-3.3h0m.1 11h0m.1-17.1h0m.1 18.6h0m.1-2.9h0m.1 6.2h0m.1-14.6h0m.1 6.5h0m.1 5.5h0m.1-11.6h0m0-1.1h0m.1 14.3h0m.1-4.2h0m.1-12.3h0m.1 5.3h0m.1 2.7h0m.1.4h0m.1 10h0m.1-8h0m.1 7.2h0m.1.3h0m.1-7.3h0m0 5.4h0m.1-10h0m.1 1.4h0m.1 9.1h0m.1-3.2h0m.1 9h0m.1-1.3h0m.1-18h0m.1 6.7h0m.1-6.2h0m.1 8.9h0m.1-1.1h0m0-16h0m.1 29.7h0m.1-10.4h0m.1 1.3h0m.1-6.7h0m.1 10.6h0m.1-1.3h0m.1-2.3h0m.1 0h0m.1-11.6h0m.1 16.5h0m.1-8.2h0m0 1.6h0m.1-3h0m.1 5.2h0m.1 6h0m.1-7.4h0m.1-7.1h0m.1 1.6h0m.1-7.1h0m.1-.2h0m.1 10.5h0m.1-4.8h0m.1 12.5h0m0-5.1h0m.1 5.4h0m.1-20.2h0m.1 8.9h0m.1 8.2h0m.1 2.8h0m.1-7h0m.1-7.5h0m.1 14.1h0m.1-9.9h0m.1-.6h0m.1 8.2h0m0-9.9h0m.1 6.9h0m.1-2.2h0m.1-2.3h0m.1 8.3h0m.1-2.8h0m.1-2.2h0m.1-15.1h0m.1 25.1h0m.1-13.8h0m.1 4.3h0m.1 3.5h0m0-12h0m.1 7.2h0m.1 4.3h0m.1-3.8h0m.1-1.8h0m.1 3.9h0m.1-3h0m.1-1.1h0m.1-12.2h0m.1 5.3h0m.1-1.9h0m.1 17.1h0m.1-15h0m0-7.4h0m.1 5.9h0m.1 5.2h0m.1 4.7h0m.1-6.1h0m.1 2.6h0m.1-1.8h0m.1 4.9h0m.1 5.1h0m.1-9.5h0m.1-3.4h0m.1-9.9h0m0 19.4h0m.1-17.7h0m.1 9.4h0m.1-.2h0m.1.4h0m.1-1.1h0m.1-5.2h0m.1 14.6h0m.1-12.6h0m.1 1.2h0m.1 8.9h0m.1-17.5h0m0 6.6h0m.1-7.5h0m.1 11.4h0m.1-4h0m.1 3.1h0m.1 2.4h0m.1-5.7h0m.1-.3h0m.1 2.1h0m.1 2.9h0m.1-1.2h0m.1.9h0m0 2h0m.1-.1h0m.1.2h0m.1-2.3h0m.1.9h0m.1 6.2h0m.1-8.1h0m.1 7.6h0m.1 3.6h0m.1-17.2h0m.1 6.7h0m.1 1.2h0m0 6.9h0m.1-2.6h0m.1-2.2h0m.1 4.6h0m.1-7.4h0m.1 6.1h0m.1-5.9h0m.1 4.1h0m.1.4h0m.1.7h0m.1-8.9h0m.1 6.8h0m0 3.1h0m.1 2.1h0m.1-8h0m.1 4h0m.1 7.7h0m.1-7.1h0m.1-14.1h0m.1 9.9h0m.1-10.2h0m.1 6.1h0m.1 10.9h0m.1 1h0m.1 0h0m0 .1h0m.1.6h0m.1 6h0m.1-18.2h0m.1 11.4h0m.1 1.1h0m.1 6.4h0m.1-8.1h0m.1-4.5h0m.1 8h0m.1 2.1h0m.1-.1h0m0-7.2h0m.1-.3h0m.1-9.5h0m.1 15.7h0m.1-.3h0m.1-17.1h0m.1 20.7h0m.1-4.6h0m.1-12h0m.1-2.2h0m.1 12.8h0m.1-5.2h0m0 2.7h0m.1-1.9h0m.1 7.6h0m.1-7.6h0m.1-5.8h0m.1 5h0m.1-3.2h0m.1 12.9h0m.1-5.5h0m.1-.6h0m.1-6.9h0m.1 2.6h0m0 5.5h0m.1-7.8h0m.1-2.9h0m.1.6h0m.1 6h0m.1-.5h0m.1-7.7h0m.1 10.4h0m.1-4.8h0m.1 13.7h0m.1-12.4h0m.1-2.2h0m0-.9h0m.1-6.5h0m.1 13.5h0m.1-16.2h0m.1 13.6h0m.1 4.7h0m.1-3.1h0m.1 10.9h0m.1-17.9h0m.1.9h0m.1 5.8h0m.1 11.2h0m0 2h0m.1-1.2h0m.1-9h0m.1-11.2h0m.1 9.3h0m.1 3.4h0m.1-1.5h0m.1-3.3h0m.1 4.8h0m.1-13.5h0m.1 10.6h0m.1-5.1h0m0 11.6h0m.1-7.2h0m.1-2.8h0m.1 7.8h0m.1-10.8h0m.1-10.5h0m.1 17.3h0m.1 0h0m.1-4.7h0m.1-8h0m.1 10.1h0m.1-9.4h0m.1 6.7h0m0-8.9h0m.1 5.2h0m.1-3.1h0m.1 6.4h0m.1-3h0m.1 10h0m.1-8.5h0m.1 6.1h0m.1 1.2h0m.1-2.4h0m.1-3h0m.1-3.8h0m0 6.6h0m.1-5.7h0m.1 1.4h0m.1-17.7h0m.1 14.7h0m.1 9.7h0m.1-16h0m.1-9.5h0m.1 20.5h0m.1-5h0m.1 10.1h0m.1-.3h0m0-4.5h0m.1-12.3h0m.1 19.4h0m.1-3.7h0m.1-22.1h0m.1 29.3h0m.1-11h0m.1 2.5h0m.1-3h0m.1-2.6h0m.1-1.2h0m.1 11.7h0m0-6.3h0m.1-6.1h0m.1-1.3h0m.1 6.8h0m.1 4.9h0m.1-5.6h0m.1 4.6h0m.1 1.1h0m.1-6.3h0m.1 11.6h0m.1-2.1h0m.1-9.5h0m0-8.7h0m.1 13.7h0m.1 8.3h0m.1-6.1h0m.1-.9h0m.1 4.6h0m.1 2h0m.1.9h0m.1.9h0m.1-5.2h0m.1 2.1h0m.1-10.9h0m0 8.6h0m.1-17.8h0m.1 11.3h0m.1-2.7h0m.1 17.2h0m.1-11.9h0m.1-3.7h0m.1 10.3h0m.1-10.1h0m.1 4.8h0m.1.7h0m.1.9h0m.1-3.5h0m0-23.8h0m.1 23.8h0m.1 4.2h0m.1-1.3h0m.1-1.7h0m.1-4.8h0m.1 5.1h0m.1-1.2h0m.1.2h0m.1-1.8h0m.1-6.4h0m.1 1.8h0m0 7h0m.1-20.5h0m.1 16.4h0m.1 12.9h0m.1-14.6h0m.1 1.3h0m.1-3.7h0m.1-13.3h0m.1 25.2h0m.1-14.9h0m.1 6.6h0m.1-17.4h0m0 26h0m.1-15.7h0m.1 10.3h0m.1-2.5h0m.1-3.3h0m.1-11.1h0m.1 19.7h0m.1-4.4h0m.1 2.8h0m.1-1h0m.1 3.4h0m.1-7.7h0m0-9.1h0m.1 14.9h0m.1-10.4h0m.1-.6h0m.1 3.3h0m.1 10h0m.1-10h0m.1 5.7h0m.1-1.1h0m.1 6.7h0m.1-25.9h0m.1 27.8h0m0-10.7h0m.1-6.9h0m.1 5.5h0m.1.1h0m.1-13.7h0m.1 9.1h0m.1-5.4h0m.1 6.1h0m.1 8h0m.1.5h0m.1-14.2h0m.1 3.9h0m0 11.3h0m.1-5h0m.1.8h0m.1-11.7h0m.1 21h0m.1-14.2h0m.1-4.7h0m.1 19h0m.1-1.4h0m.1-5.3h0m.1-13.3h0m.1 11.4h0m.1-5.8h0m0 5.7h0m.1-1.5h0m.1-1.7h0m.1 18.2h0m.1-1.8h0m.1-10.3h0m.1-.3h0m.1 1.4h0m.1 7h0m.1-19.6h0m.1 13.1h0m.1-2.5h0m0-5.1h0m.1 7.5h0m.1 1.9h0m.1 4.9h0m.1-11.5h0m.1 13h0m.1-6.5h0m.1-2.4h0m.1 8.5h0m.1-4.2h0m.1-3.5h0m.1-11.7h0m0 14.9h0m.1-7.9h0m.1-.5h0m.1 1.5h0m.1 4h0m.1-2h0m.1-12.1h0m.1 6.2h0m.1 8h0m.1 4.6h0m.1-11.6h0m.1-4h0m0 1.5h0m.1 6.9h0m.1 2.3h0m.1-8.1h0m.1 9.5h0m.1-6.9h0m.1-1.1h0m.1-2.5h0m.1 10.3h0m.1-9.7h0m.1 11.8h0m.1-6.2h0m0 2.4h0m.1-.1h0m.1-4.2h0m.1 3.7h0m.1-5.1h0m.1.5h0m.1 3.9h0m.1 3.4h0m.1-8.7h0m.1 1h0m.1 3.7h0m.1 4.6h0m0-1h0m.1-3.6h0m.1-.8h0m.1-1.7h0m.1 10.2h0m.1-8.9h0m.1-3.4h0m.1 3.2h0m.1-3.2h0m.1 9.4h0m.1-5.3h0m.1-4.9h0m0 6.3h0m.1.8h0m.1-.2h0m.1-13.5h0m.1 26.8h0m.1-18.1h0m.1-14h0m.1 11h0m.1-.3h0m.1 7h0m.1-2.8h0m.1 11.2h0m.1-4.4h0m0-1.5h0m.1-10.3h0m.1 1.8h0m.1-14h0m.1 17.5h0m.1-2.3h0m.1 5.8h0m.1-4.3h0m.1-12.9h0m.1 14.3h0m.1-9.6h0m.1 5.6h0m0 10.9h0m.1-21.8h0m.1 17.1h0m.1-13.7h0m.1-1h0m.1 7.8h0m.1-.4h0m.1-3.9h0m.1-2.7h0m.1 6.5h0m.1-1.2h0m.1-2.3h0m0 7.2h0m.1 1.7h0m.1-4.4h0m.1 5.3h0m.1-8.1h0m.1-8.4h0m.1 8.4h0m.1 10h0m.1-23.7h0m.1 28.3h0m.1-19.1h0m.1 11.9h0m0-11.2h0m.1.3h0m.1-2h0m.1 9.9h0m.1-13.5h0m.1-.5h0m.1 20.1h0m.1 2.9h0m.1-6.2h0m.1.3h0m.1 1.5h0m.1.5h0m0-4.6h0m.1-.2h0m.1-4.1h0m.1 7.4h0m.1 9.1h0m.1-9.4h0m.1-3.6h0m.1 3.3h0m.1-2.6h0m.1 2.5h0m.1 6.2h0m.1-15.7h0m0 14.4h0m.1-8.1h0m.1-3.2h0m.1 5.1h0m.1-.6h0m.1.4h0m.1-1.2h0m.1-4.3h0m.1 8.9h0m.1-13.2h0m.1 16.3h0m.1-3.2h0m.1-21.3h0m0 13h0m.1-7.1h0m.1 13.3h0m.1-9.6h0m.1 8h0m.1-.3h0m.1.5h0m.1-.2h0m.1 4.5h0m.1-13.7h0m.1 1.9h0m.1-6.7h0m0 .9h0m.1-6.5h0m.1 8.2h0m.1 8.8h0m.1 2.3h0m.1-3.8h0m.1-5.2h0m.1 4.3h0m.1.4h0m.1-12.1h0m.1 1h0m.1 16.7h0m0-10.8h0m.1-10.2h0m.1 19.8h0m.1 6.8h0m.1-9.1h0m.1.4h0m.1-2.4h0m.1 3.6h0m.1-2.2h0m.1 2.9h0m.1-.9h0m.1-7.9h0m0 17.2h0m.1-10.8h0m.1 15.9h0m.1-7.4h0m.1-5.2h0m.1 8.4h0m.1-1.7h0m.1-.3h0m.1-.2h0m.1-5.2h0m.1-6h0m.1-.5h0m0 6.2h0m.1 12.1h0m.1-13.1h0m.1 4.7h0m.1-5.5h0m.1 4.7h0m.1 1.5h0m.1-.4h0m.1 4.1h0m.1-6.1h0m.1 1.6h0m.1 4.5h0m0-5.5h0m.1-1.3h0m.1 1.4h0m.1 1.2h0m.1-5.1h0m.1 5.8h0m.1-10.8h0m.1 10h0m.1 1.8h0m.1-7.8h0m.1 12.3h0m.1-3h0m.1-2.4h0m0 4.9h0m.1 1.9h0m.1-19.6h0m.1 8.1h0m.1-.1h0m.1 15.7h0m.1-6.2h0m.1-.6h0m.1-8.6h0m.1-6.4h0m.1 8.8h0m.1-6.4h0m0 9.8h0m.1 2h0m.1 0h0m.1-5.8h0m.1.3h0m.1-3.7h0m.1 8.8h0m.1-7.8h0m.1-3.1h0m.1-7.9h0m.1 13.3h0m.1-1.3h0m0 4h0m.1 1.5h0m.1 8.3h0m.1-13.9h0m.1 4.9h0m.1.5h0m.1-9.5h0m.1 7.2h0m.1-4.8h0m.1 3.6h0m.1 3h0m.1-7h0m0-8.9h0m.1 15.8h0m.1-9.3h0m.1 12.5h0m.1-4.4h0m.1-10.5h0m.1 1.6h0m.1-5h0m.1 1.5h0m.1 17.2h0m.1-13.4h0m.1 12.1h0m0-2.1h0m.1-6.8h0m.1.7h0m.1-1.9h0m.1-.6h0m.1 1.3h0m.1 7.5h0m.1-1.3h0m.1-3.3h0m.1 3.4h0m.1-2.6h0m.1-10.7h0m0 8.3h0m.1-7.7h0m.1 12.5h0m.1-10h0m.1 10.7h0m.1-5.2h0m.1-3.5h0m.1-3.3h0m.1 2.6h0m.1 14.8h0m.1-12h0m.1 5h0m0-.1h0m.1-5.9h0m.1 4h0m.1-4.1h0m.1-8.2h0m.1 9.3h0m.1-6.8h0m.1 10.6h0m.1-.4h0m.1-4.2h0m.1.7h0m.1 6.5h0m.1.3h0m0-12.9h0m.1 5h0m.1-.1h0m.1 6.3h0m.1 7.1h0m.1-6.6h0m.1-11.3h0m.1 11.7h0m.1 1.9h0m.1-4h0m.1-6.8h0m.1.7h0m0 .8h0m.1-6.2h0m.1 11h0m.1 4.7h0m.1-.5h0m.1-8.5h0m.1 6.8h0m.1-9.8h0m.1.2h0m.1 16.4h0m.1-3.2h0m.1-21.1h0m0 23.9h0m.1-15.6h0m.1 4.6h0m.1.6h0m.1 5.2h0m.1 5.9h0m.1-2.8h0m.1 1.3h0m.1-11.2h0m.1 8.2h0m.1-.4h0m.1 4.2h0m0-8h0m.1 3.1h0m.1 2.2h0m.1 9.3h0m.1-16h0m.1 4.2h0m.1-4.3h0m.1 2.7h0m.1 2.9h0m.1-3.8h0m.1 5.2h0m.1 7.1h0m0-12.7h0m.1-1.4h0m.1-9.7h0m.1 15.8h0m.1-1.7h0m.1 11.1h0m.1-6.8h0m.1 2.8h0m.1-12.3h0m.1-.5h0m.1-3.1h0m.1 14.8h0m0-8.7h0m.1-8.9h0m.1 6.1h0m.1 7.9h0m.1 2.3h0m.1-20.6h0m.1 9.2h0m.1 3.3h0m.1 6.9h0m.1-7.6h0m.1-4.5h0m.1 4.5h0m.1-5.3h0m0 .6h0m.1.1h0m.1.7h0m.1-4.1h0m.1 3.9h0m.1.6h0m.1-10.6h0m.1 6.8h0m.1 5.2h0m.1 1.7h0m.1-6.1h0m.1-9.8h0m0 14.5h0m.1-4.2h0m.1 3.4h0m.1-6.7h0m.1 2.7h0m.1 8.9h0m.1-15h0m.1 6.6h0m.1-5.8h0m.1 1.5h0m.1 10.2h0m.1-13.1h0m0 4.3h0m.1-.3h0m.1.1h0m.1-.5h0m.1-9.8h0m.1 15.1h0m.1-1h0m.1-.4h0m.1-14.5h0m.1 10.4h0m.1 13.6h0m.1-12.3h0m0 6.2h0m.1-3.2h0m.1-16.2h0m.1 16.9h0m.1-4.4h0m.1 5.6h0m.1-6.8h0m.1-2.6h0m.1 15h0m.1-5.4h0m.1-5.4h0m.1 6.9h0m0 3.4h0m.1-1.4h0m.1.1h0m.1 5.5h0m.1-2.8h0m.1-11.3h0m.1 10.8h0m.1-8.9h0m.1 2h0m.1 4.9h0m.1 4.8h0m.1-4.4h0m0 3.3h0m.1-2.1h0m.1 0h0m.1 2.6h0m.1.9h0m.1-10.2h0m.1 9.2h0m.1 7.2h0m.1-14.5h0m.1 7h0m.1 10.7h0m.1-9.9h0m.1 8.3h0m0 2.1h0m.1-4.6h0m.1-4.7h0m.1-5.3h0m.1-6.7h0m.1 16.9h0m.1-3.7h0m.1-11.7h0m.1-1h0m.1 12h0m.1-.6h0m.1 4.3h0m0 1.6h0m.1-11.5h0m.1-10.1h0m.1 15.2h0m.1 1.3h0m.1-6.5h0m.1-1.7h0m.1 3.2h0m.1-8.2h0m.1 8.3h0m.1 2.6h0m.1-8.7h0m0 8.2h0m.1-8.2h0m.1 6.8h0m.1-8.9h0m.1 14.9h0m.1-16.4h0m.1 2.5h0m.1 10.1h0m.1-13.2h0m.1-3.2h0m.1 18.9h0m.1-9.3h0m0-4.9h0m.1 1.5h0m.1-7.1h0m.1 18h0m.1-7.8h0m.1 2.7h0m.1 2.7h0m.1-8.4h0m.1-.4h0m.1 2.2h0m.1 8h0m.1-5.6h0m0-2.4h0m.1.3h0m.1-5.4h0m.1 3h0m.1-.1h0m.1 4.7h0m.1-9.2h0m.1 1.4h0m.1 3.1h0m.1-3.4h0m.1 8.5h0m.1-8.9h0m0 9.2h0m.1-1.7h0m.1 9.5h0m.1-2.5h0m.1-19.9h0m.1 8.7h0m.1 7.2h0m.1-10.6h0m.1 6.8h0m.1 1.5h0m.1 4.3h0m.1-2.1h0m0-11.6h0m.1 12.4h0m.1-8.9h0m.1 9.1h0m.1-4.5h0m.1-14.4h0m.1 26.2h0m.1-1.3h0m.1-15.2h0m.1 1h0m.1 4.6h0m.1-6.9h0m.1 6.3h0m0-10.6h0m.1 6.3h0m.1 1.6h0m.1 3.8h0m.1 3.1h0m.1-7h0m.1-5h0m.1-3.9h0m.1 12.7h0m.1-12.2h0m.1 6.7h0m.1-.6h0m0 8.4h0m.1-7.1h0m.1 3.7h0m.1 4.4h0m.1 3.8h0m.1-22.3h0m.1 10.9h0m.1-13.9h0m.1 17.2h0m.1-7.8h0m.1.7h0m.1 3.5h0m0-12.3h0m.1 17.5h0m.1-1.8h0m.1 1.4h0m.1 1.8h0m.1-7.7h0m.1 1.4h0m.1-6.7h0m.1 3.4h0m.1 1.9h0m.1 2.6h0m.1 1h0m0-3.2h0m.1-.4h0m.1 9.9h0m.1-2h0m.1-4.6h0m.1-.1h0m.1-6.2h0m.1 10.3h0m.1-10h0m.1 5.7h0m.1 8.9h0m.1 6.9h0m0-9.7h0m.1-13.1h0m.1 6.5h0m.1 12.8h0m.1-13.7h0m.1 4.8h0m.1-.9h0m.1 16.3h0m.1-12.6h0m.1-7.5h0m.1-6.7h0m.1 8.9h0m0-5.8h0m.1 12.8h0m.1-3.8h0m.1 7.2h0m.1-8.3h0m.1-.5h0m.1-.9h0m.1 10.2h0m.1-19.2h0m.1 21.9h0m.1-12.3h0m.1 7.8h0m.1-9.4h0m0-.6h0m.1 3h0m.1 9.2h0m.1-13.9h0m.1 12.4h0m.1-1.3h0m.1 3.2h0m.1-5.1h0m.1 3.7h0m.1-18.7h0m.1 3.1h0m.1 16.4h0m0-10.1h0m.1 1.3h0m.1-3.4h0m.1-.9h0m.1-.5h0m.1 13.9h0m.1-10.4h0m.1-2.1h0m.1-.8h0m.1 13.4h0m.1-5.3h0m.1-13h0m0 15.1h0m.1-7h0m.1 5.8h0m.1-9.8h0m.1 6.8h0m.1-8.8h0m.1 9h0m.1 2.4h0m.1-6.8h0m.1-6.5h0m.1 12.6h0m.1-9.6h0m0 8.3h0m.1.6h0m.1-7.1h0m.1 5.1h0m.1-1.8h0m.1-1.5h0m.1-2.3h0m.1-1.9h0m.1 11.8h0m.1-4.4h0m.1-5.6h0m.1-6.3h0m0 13.9h0m.1-3.4h0m.1 4.4h0m.1-8.9h0m.1-5.7h0m.1-2.2h0m.1 9.5h0m.1 6.6h0m.1-11.5h0m.1-6.9h0m.1 7.1h0m.1 3.2h0m0 7.3h0m.1-6.1h0m.1.4h0m.1 4.2h0m.1-1.8h0m.1-10.2h0m.1 1.5h0m.1 1.7h0m.1-4.1h0m.1 8.2h0m.1 4.4h0m.1-1.8h0m0 1.8h0m.1-16.5h0m.1 19.2h0m.1-2.5h0m.1 4.3h0m.1.9h0m.1-14h0m.1 3.1h0m.1 4.2h0m.1-2.6h0m.1-4.4h0m.1 5.4h0m.1-3.8h0m0 4.1h0m.1 4.4h0m.1-18.4h0m.1 17.1h0m.1-10.4h0m.1 8h0m.1 6h0m.1-6.1h0m.1-1.7h0m.1.2h0m.1 2.5h0m.1-4.6h0m0-11.7h0m.1 16.5h0m.1 4.3h0m.1 2.1h0m.1-7.7h0m.1-8.3h0m.1 13.9h0m.1-12.7h0m.1 5.1h0m.1.4h0m.1 3.9h0m.1 3h0m0-6.9h0m.1 1h0m.1-1.6h0m.1-5.2h0m.1 6.5h0m.1 5.7h0m.1-1.6h0m.1-4.8h0m.1 10.3h0m.1-14.9h0m.1 6.2h0m.1-2.4h0m0 5.6h0m.1-5.1h0m.1 11h0m.1-1.5h0m.1-12.1h0m.1 13.7h0m.1-.8h0m.1 3.9h0m.1-.5h0m.1 1.8h0m.1-11.6h0m.1 11.5h0m0-12.3h0m.1-4h0m.1 2.5h0m.1-3.4h0m.1 16.3h0m.1-17h0m.1 10h0m.1 7.2h0m.1-4.2h0m.1-2h0m.1 7.4h0m.1-20.9h0m0 16.2h0m.1-11.3h0m.1 8h0m.1-10.1h0m.1 14.7h0m.1-5.7h0m.1-1.2h0m.1-1.8h0m.1 9.1h0m.1-1.9h0m.1-10.4h0m.1.8h0m.1-13.6h0m0 16.2h0m.1 14.7h0m.1-6.2h0m.1-2.9h0m.1 0h0m.1-7.1h0m.1.9h0m.1-8.6h0m.1 3.1h0m.1 7.4h0m.1.6h0m.1-7h0m0-4.7h0m.1 5.7h0m.1 5h0m.1 4.1h0m.1-13.7h0m.1 12.4h0m.1-9.7h0m.1 6.8h0m.1-18.6h0m.1 16.7h0m.1-.4h0m.1 5.3h0m0-2.8h0m.1-23.3h0m.1 15.9h0m.1.6h0m.1.9h0m.1 1.3h0m.1 1.1h0m.1 1.5h0m.1-5.4h0m.1-.9h0m.1 6.1h0m.1-.9h0m0-6.1h0m.1 9.1h0m.1-.2h0m.1.1h0m.1-2.7h0m.1-14.6h0m.1 16.7h0m.1-19.9h0m.1 11.5h0m.1 13.2h0m.1-14.1h0m.1 6.5h0m0 1.3h0m.1 13.4h0m.1-14.2h0m.1 8.7h0m.1-22.5h0m.1 11.8h0m.1-5h0m.1 15.1h0m.1-4.3h0m.1-6.9h0m.1-.2h0m.1 8.6h0m0-6.2h0m.1 1.7h0m.1 7.8h0m.1-4.2h0m.1-.8h0m.1-3.6h0m.1-3.6h0m.1-.5h0m.1 5.8h0m.1 11.1h0m.1-18.7h0m.1 10.4h0m.1-.2h0m0-7.8h0m.1.8h0m.1-1.3h0m.1 9.1h0m.1.9h0m.1-8.7h0m.1 5.3h0m.1-7.7h0m.1-2.3h0m.1 17.3h0m.1-7.4h0m.1 2.5h0m0-4.1h0m.1-3.3h0m.1-5.1h0m.1 9.6h0m.1 2.5h0m.1-4.6h0m.1-3.4h0m.1 13.5h0m.1-1.1h0m.1-15.4h0m.1 15.6h0m.1-9.3h0m0 4.2h0m.1-12.1h0m.1 9.2h0m.1 5.1h0m.1-15.1h0m.1 11.9h0m.1-1h0m.1 3h0m.1-3.1h0m.1 1.7h0m.1 3.7h0m.1-10.3h0m0 18.1h0m.1-15.7h0m.1 5.2h0m.1-4.2h0m.1 12.9h0m.1-3.1h0m.1-4.1h0m.1-3.6h0m.1 7.9h0m.1-4h0m.1-6.2h0m.1 8.7h0m0 1.4h0m.1-4.3h0m.1 4.6h0m.1-7.9h0m.1-1.2h0m.1 4.2h0m.1-6.8h0m.1 10.6h0m.1-7h0m.1 2.8h0m.1-11.1h0m.1 17.9h0m0-12.7h0m.1-1h0m.1 5.3h0m.1-8.2h0m.1 7.8h0m.1-6.7h0m.1 10.8h0m.1-11.3h0m.1 5h0m.1-7.6h0m.1 0h0m.1 4.4h0m0 6.7h0m.1-1.6h0m.1.3h0m.1-11.3h0m.1 17h0m.1-21.2h0m.1 5.2h0m.1-3h0m.1-3.2h0m.1 15.6h0m.1 3h0m.1-.5h0m.1-14.6h0m0 5h0m.1-14.9h0m.1 20h0m.1-5.8h0m.1 6.1h0m.1-10.1h0m.1 5.7h0m.1-6.1h0m.1-5.8h0m.1 7.1h0m.1-2.7h0m.1 8.6h0m0-10.4h0m.1 10.8h0m.1 6.1h0m.1-10.8h0m.1-11.6h0m.1 15.7h0m.1 4.7h0m.1-1.1h0m.1-5.8h0m.1 6.2h0m.1-5.1h0m.1 8.4h0m0-12.7h0m.1-2.2h0m.1-1.9h0m.1 9.4h0m.1 5.5h0m.1 6.5h0m.1-10.7h0m.1 5.9h0m.1-5.9h0m.1 4.6h0m.1 9.7h0m.1-11.6h0m0-6.9h0m.1 11h0m.1-17.4h0m.1 23.3h0m.1-6.4h0m.1 5h0m.1 1h0m.1-3.1h0m.1-3.7h0m.1-15.3h0m.1 21.9h0m.1 2.1h0m0-3.6h0m.1-3.5h0m.1-3.6h0m.1 8.4h0m.1-14.5h0m.1 7.9h0m.1-5.5h0m.1 18.7h0m.1-8.1h0m.1 5.7h0m.1 1.1h0m.1-19.4h0m0 14.9h0m.1-9.4h0m.1 7.2h0m.1 4.5h0m.1-4.5h0m.1-6.9h0m.1 3.6h0m.1 3.8h0m.1-6.7h0m.1 5.6h0m.1.2h0m.1-11.2h0m.1 7.5h0m0 2.6h0m.1-8.4h0m.1 8.7h0m.1-7.2h0m.1 7.7h0m.1-1.7h0m.1-2.6h0m.1 7.3h0m.1-8.4h0m.1 6.8h0m.1-11.7h0m.1 3.6h0m0 .8h0m.1-2.1h0m.1.9h0m.1-10.5h0m.1 20.6h0m.1-8.6h0m.1 2.3h0m.1 2.8h0m.1-9.3h0m.1 1.4h0m.1 1.2h0m.1 1.1h0m0-1.7h0m.1 8.3h0m.1-3.7h0m.1 12.6h0m.1-19h0m.1-13.2h0m.1 19.4h0m.1-4h0m.1 3.7h0m.1-2.1h0m.1-2h0m.1 6.6h0m0-5.1h0m.1-3.4h0m.1-.2h0m.1 8h0m.1-2.2h0m.1-12.2h0m.1 17.3h0m.1-12.5h0m.1 4.6h0m.1-4.4h0m.1 2.2h0m.1-9h0m0 4.5h0m.1 3.2h0m.1 9.5h0m.1.4h0m.1-20.5h0m.1 25.5h0m.1-16.7h0m.1-.5h0m.1 5h0m.1-16.1h0m.1 17.4h0m.1-.1h0m0 2.6h0m.1-11.1h0m.1 5.5h0m.1-5.3h0m.1 5.4h0m.1-4.1h0m.1-2.7h0m.1-6.2h0m.1 8.4h0m.1-3.6h0m.1 9h0m.1-5.8h0m.1 5.9h0m0-4.4h0m.1-4.1h0m.1-3.8h0m.1 9h0m.1 9.1h0m.1-6.9h0m.1-9.3h0m.1 12.4h0m.1-12.6h0m.1 4.1h0m.1 5.2h0m.1-4.5h0m0-.2h0m.1 1.8h0m.1-14.4h0m.1 10.1h0m.1 3.1h0m.1-9.3h0m.1 8h0m.1.7h0m.1-1.9h0m.1-1.6h0m.1 6.5h0m.1-6.2h0m0-3.3h0m.1 2.7h0m.1-3.5h0m.1.1h0m.1 1h0m.1 3h0m.1 6.3h0m.1 3.3h0m.1-10.8h0m.1 4.2h0m.1-4.7h0m.1 7.7h0m0 2.8h0m.1-18.5h0m.1 9.7h0m.1-6.4h0m.1 7.7h0m.1 3.5h0m.1-1.6h0m.1-.2h0m.1 17.3h0m.1-13.2h0m.1-.1h0m.1-4.7h0m0-4.8h0m.1-1.2h0m.1 6.9h0m.1 1.4h0m.1-13.2h0m.1 12.2h0m.1 3h0m.1.5h0m.1 3h0m.1-6.3h0m.1 14.2h0m.1-3.3h0m0-6.2h0m.1 2.8h0m.1 4.4h0m.1 3.3h0m.1-9.6h0m.1-4.8h0m.1 11.6h0m.1 3.6h0m.1-12.5h0m.1 10.7h0m.1-9.3h0m.1 2.4h0m0-7h0m.1 1.2h0m.1 4.3h0m.1 2.9h0m.1 2.3h0m.1-12.8h0m.1 2.3h0m.1-8.3h0m.1 6.5h0m.1-6.1h0m.1 3.1h0m.1 8.9h0m.1-10.9h0m0 11.7h0m.1 5.7h0m.1-9.6h0m.1 2h0m.1 9.2h0m.1-12.3h0m.1 11.2h0m.1-17.3h0m.1 10.8h0m.1-4.8h0m.1 1.8h0m.1-.1h0m0 2.6h0m.1 3.4h0m.1-6.1h0m.1-12.1h0m.1 20.2h0m.1-12.3h0m.1 14.6h0m.1-12.5h0m.1-1.7h0m.1 2.2h0m.1 1.3h0m.1 3.7h0m0-6.6h0m.1-3h0m.1 15.7h0m.1-1.3h0m.1.5h0m.1-5.3h0m.1-3.5h0m.1 11h0m.1 1.8h0m.1-22.1h0m.1 2.2h0m.1 3.7h0m0 6.9h0m.1 4.2h0m.1-2.4h0m.1 2.4h0m.1-1.6h0m.1-1.5h0m.1-4.4h0m.1 1.2h0m.1 4.9h0m.1 9.2h0m.1-5.8h0m.1.7h0m0-15.4h0m.1 16.2h0m.1.1h0m.1-.4h0m.1-4.6h0m.1 2.9h0m.1 9.2h0m.1-21.5h0m.1 4.4h0m.1 9.4h0m.1 3h0m.1 3.9h0m0-9h0m.1-1.3h0m.1 5.7h0m.1-2.6h0m.1-8.1h0m.1 7.4h0m.1-1.7h0m.1 7.3h0m.1-3.4h0m.1 1.3h0m.1-2.9h0m.1-6.7h0m.1-3.2h0m0 10.2h0m.1-2.3h0m.1-18.3h0m.1.5h0m.1-4h0m.1 13.9h0m.1 11.9h0m.1-5.1h0m.1-7.8h0m.1-.6h0m.1 6.2h0m.1-9h0m0 20.3h0m.1-6.7h0m.1-7.6h0m.1-6.9h0m.1 12.5h0m.1-4.8h0m.1 2.3h0m.1 3.8h0m.1-10.5h0m.1 7.5h0m.1-15.3h0m.1 11.5h0m0 2.2h0m.1-5.8h0m.1 9.8h0m.1-16.8h0m.1 2.8h0m.1-.6h0m.1 13.4h0m.1-10.9h0m.1 15.3h0m.1-10.1h0m.1-10.2h0m.1 15.5h0m0-19.1h0m.1 14.6h0m.1-8.5h0m.1 9.5h0m.1 2h0m.1-14h0m.1 9.8h0m.1-.1h0m.1-11.4h0m.1 12.1h0m.1 1.7h0m.1 8.7h0m0-9.6h0m.1 2.7h0m.1 3.8h0m.1-3.3h0m.1 1.2h0m.1-5h0m.1 1.9h0m.1-3.2h0m.1 2.5h0m.1 13.7h0m.1 1h0m.1-18h0m0 8h0m.1-9.5h0m.1 14.6h0m.1 3.2h0m.1 1.2h0m.1-12.6h0m.1.7h0m.1-2.9h0m.1 4.9h0m.1 6.5h0m.1-17.9h0m.1 7h0m.1 11.9h0m0-6.2h0m.1 9.3h0m.1-6.5h0m.1-6.9h0m.1-.1h0m.1 8.7h0m.1-4.1h0m.1.1h0m.1 10.5h0m.1-5.6h0m.1-9h0m.1 14.7h0m0-9.8h0m.1-8.2h0m.1 2.5h0m.1 6h0m.1-11.8h0m.1 2.1h0m.1 14h0m.1-2.9h0m.1.1h0m.1-5.8h0m.1 7.6h0m.1-15.3h0m0 12.1h0m.1-4.7h0m.1-3.1h0m.1 14.6h0m.1-13.6h0m.1-5h0m.1 6.5h0m.1 9.9h0m.1-4.7h0m.1.8h0m.1-2.3h0m.1 4.2h0m0-16.4h0m.1 9.5h0m.1-3.1h0m.1-4.9h0m.1 17.8h0m.1-11.7h0m.1 2h0m.1-12.6h0m.1 10h0m.1-5.8h0m.1-3.6h0m.1 13.4h0m0 1.5h0m.1-12h0m.1 5.5h0m.1-3.4h0m.1 2.8h0m.1 14.7h0m.1-4.8h0m.1-13h0m.1-3.4h0m.1.5h0m.1 1.6h0m.1 11.2h0m0-20.6h0m.1 9.4h0m.1-.2h0m.1 6.9h0m.1-9.7h0m.1 2.8h0m.1 7h0m.1-9.7h0m.1 8.8h0m.1-12h0m.1 14.9h0m.1-5.2h0m0-.2h0m.1-2.7h0m.1-1h0m.1 3.7h0m.1-2.7h0m.1 8.1h0m.1-18.7h0m.1 17.1h0m.1 5.2h0m.1-11.4h0m.1 2h0m.1 3h0m.1-4.9h0m0 2.9h0m.1.7h0m.1-4.3h0m.1 2.5h0m.1-11.3h0m.1 13.2h0m.1 1.8h0m.1-5h0m.1-3.5h0m.1-1.5h0m.1 4.8h0m.1-7.5h0m0 1.8h0m.1 8.8h0m.1 4.4h0m.1-.3h0m.1-2.8h0m.1 0h0m.1 3.9h0m.1-11.2h0m.1 8.4h0m.1-10.6h0m.1 18.3h0m.1-4h0m0 10h0m.1-14.8h0m.1 5.4h0m.1-.5h0m.1 1.9h0m.1-8.1h0m.1 5.1h0m.1-9.7h0m.1 15.3h0m.1-3.3h0m.1 6.5h0m.1-6.1h0m0 4.4h0m.1-11.1h0m.1 5.3h0m.1 4.5h0m.1-.3h0m.1 6h0m.1-5.5h0m.1-9.8h0m.1 3.1h0m.1 5.7h0m.1-10.1h0m.1 2.3h0m0 6.8h0m.1-8.6h0m.1 8.3h0m.1 1.8h0m.1.6h0m.1.6h0m.1-12.2h0m.1 13.8h0m.1-8.4h0m.1-.9h0m.1 6.7h0m.1-12.8h0m0 18h0m.1-6.6h0m.1-5.6h0m.1-5h0m.1-13.8h0m.1 26.9h0m.1-6.8h0m.1-4.6h0m.1 2.7h0m.1-.4h0m.1 2.7h0m.1-5.4h0m.1 3.8h0m0 2.6h0m.1-12.3h0m.1-1.7h0m.1 5.7h0m.1-2.9h0m.1 4.7h0m.1 10.4h0m.1-20.8h0m.1 18.8h0m.1-8.5h0m.1-3.5h0m.1 8.4h0m0-16.3h0m.1 16.5h0m.1-8.5h0m.1 8.1h0m.1-5.4h0m.1-.8h0m.1-1.5h0m.1-7h0m.1-5.1h0m.1 13.9h0m.1-7.9h0m.1 1.7h0m0 6.9h0m.1-8.2h0m.1 13.7h0m.1-19.9h0m.1 14.1h0m.1-2.2h0m.1 12.8h0m.1-.7h0m.1-5.4h0m.1-10.1h0m.1 8.5h0m.1 5.7h0m0-4.6h0m.1-5.6h0m.1-.6h0m.1 1.5h0m.1 2.2h0m.1 8.6h0m.1-10.7h0m.1 2.8h0m.1 5.6h0m.1-3.4h0m.1.6h0m.1 2.6h0m0-13h0m.1 9.9h0m.1 3.4h0m.1 1.9h0m.1-10.9h0m.1 4.4h0m.1 1.9h0m.1 1.1h0m.1-6.5h0m.1 11h0m.1.8h0m.1-9.1h0m0-5.6h0m.1 17h0m.1.6h0m.1-6.7h0m.1 1h0m.1-7.5h0m.1 3.3h0m.1-10.9h0m.1 15.6h0m.1-4.3h0m.1 4.3h0m.1-5.7h0m0-10.6h0m.1-2.8h0m.1 10.9h0m.1.8h0m.1-3.7h0m.1 6.6h0m.1-4.9h0m.1.9h0m.1.2h0m.1 2.8h0m.1-7.1h0m.1-3.9h0m.1 14.9h0m0-1.7h0m.1-5h0m.1 1.7h0m.1 1.5h0m.1 1.4h0m.1-7.7h0m.1-5.8h0m.1 5.1h0m.1-1h0m.1 2.7h0m.1-8.5h0m.1 10.9h0m0 1.1h0m.1-11.5h0m.1 12.2h0m.1-3.5h0m.1 10.8h0m.1-11.9h0m.1 10.3h0m.1-5.4h0m.1-5.8h0m.1 7.1h0m.1-1.3h0m.1-1.1h0m0 9.9h0m.1-3.7h0m.1 1.2h0m.1-9.8h0m.1 14.6h0m.1 1.3h0m.1-5.4h0m.1 3.4h0m.1-24.2h0m.1 18.2h0m.1 8.5h0m.1-16.6h0m0 6h0m.1-2.8h0m.1 13h0m.1-19.8h0m.1 9.3h0m.1.1h0m.1 2.2h0m.1 4.9h0m.1-5.7h0m.1 1.5h0m.1-8.6h0m.1-5.1h0m0 17.7h0m.1-1.9h0m.1-16.1h0m.1 12h0m.1 0h0m.1-11.6h0m.1 11h0m.1 8.8h0m.1-13.2h0m.1-.2h0m.1 8h0m.1-6.9h0m0-14.3h0m.1 11.7h0m.1-5.9h0m.1 4.7h0m.1.9h0m.1-5.5h0m.1-1h0m.1 1.8h0m.1 6.1h0m.1-7.1h0m.1 7.4h0m.1 6.4h0m.1-14.3h0m0 6.7h0m.1-6.7h0m.1 4h0m.1 8.3h0m.1-9.6h0m.1 3.3h0m.1-9.3h0m.1 6.5h0m.1-6.7h0m.1 10.3h0m.1-2.1h0m.1-3.8h0m0 12.3h0m.1-1.5h0m.1-1.5h0m.1 1.2h0m.1 5.9h0m.1.2h0m.1-22.8h0m.1 3.2h0m.1 7h0m.1 5h0m.1-12h0m.1 4.2h0m0 1.5h0m.1 2.2h0m.1.3h0m.1-3.4h0m.1-1.5h0m.1 13.4h0m.1-19.6h0m.1 10.3h0m.1-1.2h0m.1 12.4h0m.1-11.1h0m.1.7h0m0 4.7h0m.1-18.7h0m.1 16.3h0m.1 1.7h0m.1 5.6h0m.1-16.4h0m.1 14.5h0m.1-2.1h0m.1-2.9h0m.1-8.5h0m.1 12.7h0m.1-3.6h0m0-.9h0m.1 2.7h0m.1-5.6h0m.1 11.3h0m.1-3.4h0m.1-16.3h0m.1.5h0m.1-8.5h0m.1 28.8h0m.1-9h0m.1 3.5h0m.1-3.9h0m0-4.3h0m.1 16.2h0m.1-5.8h0m.1-10.7h0m.1 6.3h0m.1-14.8h0m.1-3.2h0m.1 17.9h0m.1-2h0m.1-1.8h0m.1-7.6h0m.1 11.6h0m.1 1h0m0 3.1h0m.1-5.9h0m.1 8.3h0m.1-13.7h0m.1-5.6h0m.1 11.6h0m.1-1.1h0m.1 5.1h0m.1-2.7h0m.1 2.9h0m.1 1.1h0m.1 4.1h0m0-3.6h0m.1-.7h0m.1 2.8h0m.1 2.9h0m.1-9.5h0m.1 8.1h0m.1-7.9h0m.1-10.3h0m.1 17.1h0m.1-6.3h0m.1 13.7h0m.1-19.7h0m0 3.8h0m.1-.2h0m.1-3.4h0m.1 13.2h0m.1-1.2h0m.1-1h0m.1 2.6h0m.1-10.7h0m.1 5h0m.1 5.4h0m.1-7.4h0m.1 14.7h0m0-18.5h0m.1 17.5h0m.1-22h0m.1 10.1h0m.1 4.8h0m.1-5.2h0m.1 2.5h0m.1-.8h0m.1-.9h0m.1 8.9h0m.1-5.7h0m.1-8.5h0m0 8h0m.1-7.7h0m.1 12.6h0m.1-8.6h0m.1-2.5h0m.1 2.4h0m.1 6.1h0m.1-9.9h0m.1 9h0m.1-8.6h0m.1-2.9h0m.1 8.1h0m0-15.4h0m.1 11.4h0m.1.1h0m.1-3h0m.1 11.2h0m.1-2.8h0m.1-8.1h0m.1-1.5h0m.1 7.2h0m.1.1h0m.1-4.1h0m.1-4h0m0 6.4h0m.1-4.8h0m.1-.3h0m.1-4.5h0m.1 11.9h0m.1-14.4h0m.1 11.6h0m.1-11.7h0m.1 6.4h0m.1-4.3h0m.1-4h0m.1-1.4h0m.1-.6h0m0 5.6h0m.1-5.9h0m.1 11.3h0m.1-4.5h0m.1 1.4h0m.1 1.5h0m.1-8.3h0m.1 8h0m.1 6.8h0m.1-10.8h0m.1 12.1h0m.1-13.4h0m0 5.4h0m.1 2.6h0m.1 3.9h0m.1-9.5h0m.1 4.4h0m.1-10.5h0m.1 13h0m.1-7.8h0m.1 2.2h0m.1 7h0m.1-14.2h0m.1 6.4h0m0-1.6h0m.1 7.2h0m.1-12.8h0m.1 17h0m.1-3.7h0m.1.7h0m.1-4.6h0m.1 3h0m.1-5.6h0m.1 17.9h0m.1-3.5h0m.1-11.9h0m0 6.6h0m.1 7.5h0m.1-10.8h0m.1-11.2h0m.1-.8h0m.1 20h0m.1-11.1h0m.1.8h0m.1 2h0m.1-5h0m.1 5.2h0m.1 7.7h0m0-4.7h0m.1 2h0m.1 4.3h0m.1 2.8h0m.1-25.5h0m.1 28.9h0m.1-6.1h0m.1 1.8h0m.1-.7h0m.1-6.9h0m.1 9.2h0m.1-4.8h0m0 .1h0m.1 4.5h0m.1-6.1h0m.1-8.8h0m.1 10.9h0m.1 2.8h0m.1-3.2h0m.1 2.2h0m.1.7h0m.1-9.4h0m.1 13.8h0m.1-4.7h0m.1-1.4h0m0-10.2h0m.1 2.2h0m.1 1.3h0m.1 6.5h0m.1-8.9h0m.1-5.5h0m.1.1h0m.1-10.3h0m.1 15.2h0m.1 4.5h0m.1-19.7h0m.1 13.9h0m0-6.9h0m.1-8.7h0m.1 10.9h0m.1 0h0m.1.8h0m.1 1.3h0m.1 13.6h0m.1-15.3h0m.1 16.7h0m.1-25.7h0m.1 12.1h0m.1 8.4h0m0-2h0m.1-6h0m.1 1.9h0m.1 3h0m.1-.4h0m.1-1h0m.1 1h0m.1-3.1h0m.1-.4h0m.1-13.2h0m.1-1.8h0m.1 11.8h0m0-5.5h0m.1 14.6h0m.1 2.7h0m.1-1.5h0m.1-5h0m.1 3.2h0m.1-7.2h0m.1 15.1h0m.1-1.9h0m.1-3.4h0m.1-2.1h0m.1 1.2h0m0-10.1h0m.1 4.7h0m.1 8.3h0m.1-5.4h0m.1 4.3h0m.1 8h0m.1-24.4h0m.1 17.4h0m.1-.3h0m.1 3.5h0m.1-11.5h0m.1-4.3h0m0 8h0m.1.3h0m.1-.3h0m.1-4.1h0m.1-1.8h0m.1 12.9h0m.1-13.1h0m.1 1.8h0m.1 2.8h0m.1-11.7h0m.1 18.8h0m.1-11.5h0m.1-17.3h0m0 15.6h0m.1 8.4h0m.1-9.5h0m.1.5h0m.1 9.4h0m.1-8.9h0m.1 8h0m.1 2.6h0m.1-20.9h0m.1 28.8h0m.1-7.9h0m.1-2.7h0m0-.5h0m.1-7.7h0m.1 5.9h0m.1 6.1h0m.1-19h0m.1 6.4h0m.1.2h0m.1 17.7h0m.1-24.7h0m.1 14.1h0m.1.3h0m.1 1.5h0m0 6h0m.1-11.8h0m.1-.1h0m.1 7h0m.1 4.1h0m.1 1.3h0m.1-17.4h0m.1 2.2h0m.1 15.4h0m.1-1.3h0m.1-12h0m.1 1.8h0m0 6.5h0m.1 4.6h0m.1.9h0m.1 1.4h0m.1-21.2h0m.1 14h0m.1 1.7h0m.1 11.3h0m.1-11.7h0m.1 2.8h0m.1-5.4h0m.1 7.4h0m0 2.7h0m.1-4.5h0m.1-3.3h0m.1-3.4h0m.1-.5h0m.1 13.8h0m.1 2.9h0m.1-7.5h0m.1-6h0m.1-4.6h0m.1 6.3h0m.1.8h0m0-9h0m.1-1.6h0m.1 6.5h0m.1 9.3h0m.1-3.2h0m.1-17.4h0m.1 7.3h0m.1 10.4h0m.1.1h0m.1-5.8h0m.1.8h0m.1-7.2h0m0 1.5h0m.1-.8h0m.1 10.1h0m.1-1.6h0m.1-7.9h0m.1 5h0m.1 5.7h0m.1-8.9h0m.1-3.1h0m.1 5.6h0m.1-16.4h0m.1 25.2h0m.1-7.3h0m0-4.3h0m.1.4h0m.1-12.4h0m.1 20.4h0m.1-4.4h0m.1 7.6h0m.1-6.7h0m.1.2h0m.1-6.7h0m.1 9.5h0m.1-2.2h0m.1-24.3h0m0 3.7h0m.1 6.1h0m.1 2.4h0m.1 12.8h0m.1-7h0m.1.4h0m.1-3.6h0m.1.2h0m.1-11.2h0m.1 11.9h0m.1 1.1h0m.1-1.2h0m0-.7h0m.1-2h0m.1.2h0m.1-1.3h0m.1-2.8h0m.1-3.2h0m.1-7.2h0m.1 28.2h0m.1-13h0m.1-10.7h0m.1 13.2h0m.1 2.5h0m0-7h0m.1-.2h0m.1 3.6h0m.1-2.7h0m.1.1h0m.1 3h0m.1 1.5h0m.1-4.6h0m.1-3.4h0m.1-3.4h0m.1 3.6h0m.1 10.9h0m0-10.7h0m.1 7.7h0m.1 5.7h0m.1 5.6h0m.1-18.3h0m.1 15h0m.1-7.5h0m.1-8.3h0m.1 6.2h0m.1.1h0m.1 4.5h0m.1-10.2h0m0 7h0m.1-1.4h0m.1-.6h0m.1-10.3h0m.1 7.3h0m.1 2.1h0m.1-14h0m.1 12.3h0m.1 6h0m.1 7.9h0m.1-14.3h0m.1-3.3h0m.1 13.4h0m0 1.6h0m.1-12.9h0m.1-7.8h0m.1 14.8h0m.1-13.6h0m.1 19.8h0m.1-16.6h0m.1 9.4h0m.1 8.5h0m.1-4.3h0m.1 2.5h0m.1 1.4h0m0-7.3h0m.1-7.7h0m.1 5h0m.1-16.1h0m.1 23.3h0m.1-4h0m.1-3.6h0m.1 4.4h0m.1-7.9h0m.1.3h0m.1 10h0m.1-3.7h0m0 8.2h0m.1 6.5h0m.1-11h0m.1-3.9h0m.1-4.5h0m.1 1.2h0m.1 5.1h0m.1 10.6h0m.1-2.1h0m.1-.5h0m.1-1.8h0m.1-9.3h0m0 4.4h0m.1 3.8h0m.1-9.2h0m.1-9.6h0m.1 7h0m.1 6.4h0m.1-10.4h0m.1 4.2h0m.1-5.9h0m.1 8.8h0m.1 6.9h0m.1-6.1h0m0 9.2h0m.1-5h0m.1-5.8h0m.1 7.2h0m.1-13h0m.1 15.6h0m.1-12.7h0m.1-5.9h0m.1 20.6h0m.1-10.2h0m.1 5.4h0m.1-7.1h0m0-6.3h0m.1 4.4h0m.1-.9h0m.1.1h0m.1 14.4h0m.1-10.3h0m.1 8.1h0m.1-5.5h0m.1-.3h0m.1-4h0m.1-1.4h0m.1 4.4h0m.1-8h0m0 6.4h0m.1-12.1h0m.1 20.2h0m.1-7.7h0m.1-2.4h0m.1 9.7h0m.1-11.2h0m.1-2.3h0m.1 14h0m.1-18.8h0m.1 17.7h0m.1-15.2h0m0 7.9h0m.1-5.1h0m.1 8.4h0m.1-20.9h0m.1 23.4h0m.1-14.4h0m.1 6h0m.1 7.7h0m.1-.8h0m.1.8h0m.1-3.3h0m.1.5h0m0-8.9h0m.1 10h0m.1 1.4h0m.1-12.9h0m.1 12.2h0m.1 4.7h0m.1 2.8h0m.1-11.2h0m.1 17h0m.1-31.1h0m.1 33.3h0m.1-8.5h0m0-6.8h0m.1 5.4h0m.1-.6h0m.1-4.2h0m.1 0h0m.1-1.4h0m.1-1.2h0m.1 4.8h0m.1 1.3h0m.1-11.1h0m.1 10.2h0m.1 11.2h0m0-8.3h0m.1-8.4h0m.1 3.6h0m.1 7.8h0m.1-4h0m.1 6.3h0m.1-18.8h0m.1 7.9h0m.1-4.6h0m.1 1.7h0m.1 12h0m.1-3.9h0m0 .9h0m.1-1h0m.1.5h0m.1-4.3h0m.1-12.8h0m.1 10.1h0m.1-5.5h0m.1 4.7h0m.1 1h0m.1.4h0m.1 11.9h0m.1-10.4h0m0 3.5h0m.1-1.3h0m.1-4.9h0m.1-9.5h0m.1 13.3h0m.1-1.1h0m.1-1.4h0m.1-2.9h0m.1-2h0m.1-2.1h0m.1-2.1h0m.1 8.3h0m.1-3.1h0m0-1.1h0m.1-7.8h0m.1-.3h0m.1 5h0m.1 6.9h0m.1 5h0m.1-18.8h0m.1 6.7h0m.1-.6h0m.1-4h0m.1 5.4h0m.1.3h0m0-1.1h0m.1 4.8h0m.1 3.9h0m.1-9h0m.1 19.3h0m.1-14h0m.1 5.6h0m.1 2.5h0m.1-7.1h0m.1 2.7h0m.1 4.8h0m.1-12.2h0m0 7.7h0m.1 3.1h0m.1 10.2h0m.1-13.2h0m.1-10.3h0m.1 4.7h0m.1 6.1h0m.1-.6h0m.1 0h0m.1 5.9h0m.1-2.8h0m.1-11.2h0m0 8.3h0m.1-1.1h0m.1-6h0m.1 15.5h0m.1-28.1h0m.1 21.6h0m.1 4.7h0m.1-17.5h0m.1 3.9h0m.1 5h0m.1 1.4h0m.1 1.2h0m0-15.3h0m.1 17.7h0m.1-1.6h0m.1 1.8h0m.1-3.2h0m.1-9.4h0m.1 20.8h0m.1-18.6h0m.1 11.9h0m.1-6.7h0m.1 10.2h0m.1-23h0m0 12.9h0m.1 5h0m.1-6.1h0m.1 9.4h0m.1 4h0m.1-6.6h0m.1 4h0m.1-7.5h0m.1-5.4h0m.1-2.2h0m.1 4.4h0m.1-.3h0m.1 4.8h0m0-7.8h0m.1 10.8h0m.1-7.2h0m.1 6.3h0m.1-2.4h0m.1-7.8h0m.1 12.5h0m.1-8.5h0m.1-.3h0m.1 4.5h0m.1-15.5h0m.1.8h0m0 5.1h0m.1 9.4h0m.1-5.3h0m.1-10.7h0m.1 13.6h0m.1-.4h0m.1-2.9h0m.1-12.1h0m.1 16.3h0m.1-13.5h0m.1 12.2h0m.1-17.3h0m0 15.2h0m.1 3.7h0m.1-15.8h0m.1 17.2h0m.1-12.5h0m.1-6.1h0m.1 5.5h0m.1 4.4h0m.1.2h0m.1-1.5h0m.1-3h0m.1 7.2h0m0-3.1h0m.1 1.8h0m.1.4h0m.1-2.3h0m.1-2.1h0m.1 6.3h0m.1-.2h0m.1-10.1h0m.1 17.9h0m.1-.4h0m.1-7.6h0m.1-6.9h0m0 7.3h0m.1 1.5h0m.1-3.3h0m.1 2.7h0m.1 1.9h0m.1-5.6h0m.1 15.8h0m.1-5.8h0m.1-4.1h0m.1-1.8h0m.1-15.6h0m.1 13.7h0m0-2.8h0m.1 1.9h0m.1 10.2h0m.1-9.4h0m.1 2h0m.1 6.3h0m.1-3.7h0m.1-1.4h0m.1-2.2h0m.1 6.1h0m.1 2.6h0m.1-3.3h0m0-14.8h0m.1 22.3h0m.1-12.7h0m.1 16h0m.1-8.9h0m.1 6.1h0m.1-11.7h0m.1 12h0m.1-1.3h0m.1 6.2h0m.1-.8h0m.1-16.5h0m.1 3h0m0-2.8h0m.1.5h0m.1 8.7h0m.1-8.3h0m.1-8.3h0m.1 3.5h0m.1 5.1h0m.1.4h0m.1 9.9h0m.1-14.7h0m.1 6.7h0m.1 10.3h0m0-10.9h0m.1 9h0m.1-16.6h0m.1.6h0m.1 17.3h0m.1-15.2h0m.1-7.7h0m.1 16.3h0m.1.9h0m.1-2.3h0m.1 2.4h0m.1 5.3h0m0-5.3h0m.1-1.8h0m.1-10.1h0m.1 8.9h0m.1-8.8h0m.1 2.7h0m.1 12.3h0m.1-2h0m.1-9.9h0m.1-8.4h0m.1 6.7h0m.1 15h0m0-4.6h0m.1 6h0m.1-11.6h0m.1-7.4h0m.1-1.4h0m.1 9.4h0m.1-3.1h0m.1 2.1h0m.1 9.5h0m.1-13.4h0m.1 2.3h0m.1-9.5h0m0 8.3h0m.1-3h0m.1 1.3h0m.1 1.7h0m.1-4.8h0m.1 2.7h0m.1-1.3h0m.1 1.3h0m.1.9h0m.1 5h0m.1-12.5h0m.1-2.1h0m0 12.4h0m.1-9h0m.1 3.2h0m.1-4.4h0m.1 5h0m.1 7h0m.1-6.1h0m.1-6.9h0m.1.3h0m.1-4.6h0m.1 16.4h0m.1 3.7h0m.1-11.4h0m0-8.6h0m.1 4.1h0m.1-2.7h0m.1-8.1h0m.1 26.8h0m.1-13h0m.1-5h0m.1 3.9h0m.1.7h0m.1-4.8h0m.1 11.4h0m.1-7.3h0m0-2.9h0m.1-6.2h0m.1 7.6h0m.1 5h0m.1 9.6h0m.1-7.4h0m.1-11.7h0m.1 1.7h0m.1 1.2h0m.1 7.8h0m.1-1.6h0m.1 3.8h0m0 3.6h0m.1-8.7h0m.1 7.4h0m.1 2.7h0m.1-7.5h0m.1 6.2h0m.1-9.1h0m.1 11.1h0m.1-16.7h0m.1 19h0m.1-2.7h0m.1-9.4h0m0 2.7h0m.1 2.9h0m.1 1.8h0m.1-8.9h0m.1 12h0m.1-9.1h0m.1 11.6h0m.1-8.2h0m.1.7h0m.1-9.4h0m.1 10.9h0m.1 5.6h0m0 2.6h0m.1-9.4h0m.1-7.7h0m.1 6.4h0m.1 11h0m.1-10.9h0m.1-5.3h0m.1 16.2h0m.1-13.1h0m.1 8.2h0m.1 1h0m.1 4.3h0m0-13h0m.1 2h0m.1-2.2h0m.1 10.4h0m.1-6.1h0m.1-3.1h0m.1-18.3h0m.1 21h0m.1 1.6h0m.1-1.6h0m.1 5.6h0m.1-6.6h0m.1 1.7h0m0-18.7h0m.1-.4h0m.1 4.9h0m.1 15h0m.1.3h0m.1 2.5h0m.1-14.9h0m.1 12.4h0m.1-7.9h0m.1-8h0m.1 5.2h0m.1 3.6h0m0 6.4h0m.1-3.3h0m.1-13.8h0m.1 14.1h0m.1-7.5h0m.1 7.6h0m.1 6h0m.1-17.4h0m.1 2.6h0m.1 4.1h0m.1-5.7h0m.1 3.6h0m0 5.6h0m.1-1.1h0m.1-9.3h0m.1 12h0m.1-10.5h0m.1 11.2h0m.1 5.8h0m.1-6.6h0m.1-11.9h0m.1 16.8h0m.1-3.5h0m.1 1.9h0m0 .5h0m.1 4.5h0m.1 2h0m.1-10.7h0m.1 3.3h0m.1-5.2h0m.1 6.7h0m.1 10.5h0m.1-11.1h0m.1-8h0m.1 12.6h0m.1-.9h0m0-7.5h0m.1.1h0m.1-8.6h0m.1 18.8h0m.1-15.7h0m.1-1.5h0m.1 4.8h0m.1 10.8h0m.1.6h0m.1-10.3h0m.1 16.4h0m.1-18.1h0m0-5h0m.1 4.1h0m.1-8.4h0m.1 14.4h0m.1 6.2h0m.1-10.7h0m.1-4.6h0m.1.7h0m.1 10.1h0m.1 2.7h0m.1-13.5h0m.1 5.6h0m0-8.3h0m.1 2.8h0m.1-4.8h0m.1 10.3h0m.1-2.5h0m.1-7.2h0m.1 2.9h0m.1-5.4h0m.1.9h0m.1 6.6h0m.1-11.4h0m.1 1h0m.1 18.6h0m0-4.2h0m.1-15.3h0m.1 11.7h0m.1 4.1h0m.1 3.1h0m.1-8.3h0m.1-.8h0m.1 3.3h0m.1-5.7h0m.1 1h0m.1 6.3h0m.1.3h0m0-6.5h0m.1 1.3h0m.1 18.8h0m.1-19.7h0m.1 1.1h0m.1 6h0m.1-16h0m.1 17.1h0m.1-18.9h0m.1 12.9h0m.1-2.8h0m.1 6.3h0m0 2.3h0m.1 7.7h0m.1-1.3h0m.1-9.2h0m.1 4.9h0m.1 10.2h0m.1-24.3h0m.1 5.5h0m.1 12.8h0m.1-13.6h0m.1 13.7h0m.1-.9h0m0 9.7h0m.1-10.4h0m.1-12.8h0m.1 7.4h0m.1 2.9h0m.1-12.5h0m.1 10.7h0m.1 2.5h0m.1 4.6h0m.1-1.7h0m.1 3.1h0m.1-3.2h0m0-16.5h0m.1 13.7h0m.1-1.9h0m.1 0h0m.1 4h0m.1-4.1h0m.1 6.9h0m.1 2.8h0m.1-8.7h0m.1 3.9h0m.1-4.4h0m.1 5.4h0m0-11.1h0m.1 2.4h0m.1 4.5h0m.1-1.3h0m.1 3h0m.1-6.8h0m.1 11.3h0m.1 2.3h0m.1 1.1h0m.1-4.2h0m.1-8.9h0m.1 6.6h0m.1-6.4h0m0 8.8h0m.1 2.3h0m.1-7.2h0m.1-4.5h0m.1 18.1h0m.1-9.7h0m.1-5.3h0m.1 1.8h0m.1 7.6h0m.1-1.7h0m.1-3.5h0m.1-2.5h0m0-.2h0m.1 2.1h0m.1-8.7h0m.1 6.4h0m.1-12.3h0m.1 12.9h0m.1 2h0m.1-1.2h0m.1-.5h0m.1-4.8h0m.1 3.4h0m.1 2.2h0m0 1.3h0m.1-3.9h0m.1-.8h0m.1 7h0m.1-8.9h0m.1 8.4h0m.1-11.1h0m.1.5h0m.1 5.8h0m.1-.5h0m.1-12.9h0m.1 2h0m0 20.4h0m.1-6.2h0m.1-2.5h0m.1-.3h0m.1-3.5h0m.1 9.9h0m.1-10.4h0m.1.5h0m.1-4.2h0m.1 3.5h0m.1-1.1h0m.1 7.1h0m0-3.3h0m.1-2.8h0m.1 4.5h0m.1-8.6h0m.1-8.4h0m.1 1.9h0m.1.6h0m.1 10.6h0m.1-5.3h0m.1 4h0m.1-.7h0m.1 11.1h0m0-11.9h0m.1-1.6h0m.1-3.5h0m.1-.1h0m.1 10.8h0m.1-5.5h0m.1-2.6h0m.1-3.1h0m.1 15h0m.1-10.4h0m.1 1.3h0m.1 3.6h0m.1 7.7h0m0-9h0m.1-5.1h0m.1 10h0m.1-13.9h0m.1 11.8h0m.1 4.3h0m.1.8h0m.1-12h0m.1 9.2h0m.1-22.2h0m.1 26.5h0m.1-14.9h0m0 3.6h0m.1 10.4h0m.1-11.5h0m.1-1.5h0m.1 8.4h0m.1-7.5h0m.1 6.3h0m.1 1.4h0m.1-1.7h0m.1 7.7h0m.1-8h0m.1-7.3h0m0 2.5h0m.1 12.2h0m.1-8.2h0m.1 4h0m.1.9h0m.1-.1h0m.1-4.4h0m.1 9.1h0m.1 3.4h0m.1-5.6h0m.1 3.1h0m.1-2.4h0m0 3.6h0m.1-3.4h0m.1 6.5h0m.1-6.6h0m.1-2.3h0m.1 1.6h0m.1-10.8h0m.1 4.3h0m.1 2.3h0m.1 1.4h0m.1 7h0m.1-6.4h0m0 8.9h0m.1-5.6h0m.1-8.3h0m.1-2.2h0m.1 19.9h0m.1-13.6h0m.1-11.6h0m.1 9.8h0m.1-.1h0m.1-6.7h0m.1-2.8h0m.1 10.8h0m0-7h0m.1 8.6h0m.1 4.4h0m.1-6.4h0m.1-3.1h0m.1-7h0m.1 8.1h0m.1-3.2h0m.1-2.4h0m.1 11.3h0m.1-9.3h0m.1-7.4h0m0 12h0m.1-.5h0m.1-8.2h0m.1 14.9h0m.1-6.6h0m.1-11h0m.1-5.9h0m.1 1.8h0m.1 10.4h0m.1 1.4h0m.1-10h0m.1-1.5h0m.1 4.5h0m0-4.3h0m.1 9h0m.1 1.9h0m.1 7.3h0m.1-15.9h0m.1 12.2h0m.1-11h0m.1-3.1h0m.1 12.2h0m.1-2.7h0m.1-3h0m.1.8h0m0-3.7h0m.1 2.6h0m.1 14.2h0m.1-15.4h0m.1 9.9h0m.1-3.7h0m.1 5.4h0m.1-9.4h0m.1-1.9h0m.1.8h0m.1 9.6h0m.1-4.6h0m0 6.8h0m.1-.2h0m.1-3.5h0m.1 6.1h0m.1-18.3h0m.1 20.1h0m.1-6.5h0m.1 4.9h0m.1-7.8h0m.1-2.3h0m.1 17.6h0m.1-23.9h0m0 11.5h0m.1 6.1h0m.1-13.2h0m.1 4.3h0m.1 9.3h0m.1-4.6h0m.1-5.7h0m.1.9h0m.1 8.5h0m.1-7.7h0m.1 5.4h0m.1 3.3h0m0-10.5h0m.1 8.1h0m.1-8.3h0m.1 7.7h0m.1-6.6h0m.1.9h0m.1-7.2h0m.1-.7h0m.1 5.2h0m.1-8.2h0m.1 8h0m.1 1.7h0m0 10.3h0m.1-6.3h0m.1-6.6h0m.1-4.4h0m.1 4.5h0m.1-4.4h0m.1 14.7h0m.1-8.5h0m.1 4h0m.1-6.7h0m.1-2.6h0m.1 8.3h0m.1-4h0m0-3.2h0m.1-3.3h0m.1 12h0m.1-5.6h0m.1 3.5h0m.1 1.6h0m.1-11.8h0m.1 8h0m.1 1.8h0m.1-17.4h0m.1 17.9h0m.1 5.6h0m0-7.7h0m.1 2.2h0m.1 2.6h0m.1-14h0m.1 14h0m.1-.6h0m.1-9h0m.1 1.9h0m.1 17.7h0m.1-14.1h0m.1 9.7h0m.1-1h0m0-.2h0m.1-1.4h0m.1-5h0m.1.7h0m.1-1.1h0m.1-2.3h0m.1-2.8h0m.1 1h0m.1 10.4h0m.1-11.8h0m.1 12.1h0m.1-1.8h0m0-7.9h0m.1 4.2h0m.1-5.6h0m.1.7h0m.1-.7h0m.1 11h0m.1-4.3h0m.1-.4h0m.1-1h0m.1 1.8h0m.1.7h0m.1-12.3h0m0-9h0m.1 12.6h0m.1 3.2h0m.1-5h0m.1 1.5h0m.1-.8h0m.1-.8h0m.1-1.2h0m.1 10.7h0m.1-7.2h0m.1-7.6h0m.1 6.5h0m0 1.6h0m.1 2.1h0m.1-8.7h0m.1 1.4h0m.1-5.4h0m.1 11.9h0m.1-13h0m.1 9.6h0m.1-7.3h0m.1 4.3h0m.1 1.6h0m.1-.9h0m.1-4.5h0m0 13.3h0m.1-9.3h0m.1-.2h0m.1 1.4h0m.1.3h0m.1 2.1h0m.1-5.4h0m.1 5.5h0m.1 1.6h0m.1-8.3h0m.1-4.4h0m.1 4.6h0m0 2.8h0m.1-4.2h0m.1-6.5h0m.1 17.6h0m.1 8.8h0m.1-5.1h0m.1 2.1h0m.1-16.1h0m.1 5.6h0m.1 7.2h0m.1-7.8h0m.1 5h0m0-1.2h0m.1-6.6h0m.1-4h0m.1-8.6h0m.1 27.7h0m.1-8.2h0m.1-5h0m.1 11.6h0m.1-3.7h0m.1-9.1h0m.1 4.3h0m.1 8.9h0m0-10.6h0m.1-1h0m.1 4.3h0m.1-1.2h0m.1 9.5h0m.1-5.6h0m.1-3h0m.1-.8h0m.1-6.4h0m.1 13.7h0m.1-6.3h0m.1-13h0m0 6.3h0m.1-4.9h0m.1 16.2h0m.1-3.1h0m.1-2.3h0m.1.7h0m.1 3.6h0m.1 2.3h0m.1-8.8h0m.1 2.7h0m.1 6.3h0m.1-8.8h0m0-1.7h0m.1 7.4h0m.1-4.3h0m.1 13.1h0m.1-4.9h0m.1-10.4h0m.1 8.8h0m.1-15h0m.1 13h0m.1 7.3h0m.1-23.2h0m.1 14.1h0m0 8.6h0m.1-6.5h0m.1-1.4h0m.1-2.3h0m.1 4.5h0m.1-6.7h0m.1 2.5h0m.1-1.4h0m.1-2h0m.1 8h0m.1-1.2h0m.1.5h0m.1-1.9h0m0-3.6h0m.1 8.4h0m.1-13.6h0m.1-2.5h0m.1 7.9h0m.1 7.4h0m.1-3h0m.1-13.6h0m.1 24h0m.1-12.1h0m.1 3.8h0m.1-15.8h0m0 17.5h0m.1-5.6h0m.1 6.8h0m.1-8.5h0m.1-5.9h0m.1 2.9h0m.1-6.5h0m.1 16.1h0m.1.1h0m.1.4h0m.1 13.1h0m.1-18.2h0m0 .1h0m.1 1.7h0m.1-8.3h0m.1 3.8h0m.1-10.9h0m.1 17.5h0m.1-8.3h0m.1-1.7h0m.1 15.1h0m.1-19.4h0m.1 4.5h0m.1 6.5h0m0 6.1h0m.1-5.2h0m.1 12h0m.1-22.9h0m.1 14.8h0m.1-3.9h0m.1-.6h0m.1 2.9h0m.1-2h0m.1-9.8h0m.1 3.6h0m.1 11.4h0m0-4.5h0m.1-17h0m.1 19.6h0m.1-13.3h0m.1 14.9h0m.1-6.3h0m.1-.8h0m.1-1.2h0m.1 1.9h0m.1-7h0m.1 1.8h0m.1 11.7h0m0-11.6h0m.1 1.5h0m.1 8.3h0m.1-3.7h0m.1-7.6h0m.1-.2h0m.1 3.1h0m.1-4h0m.1.6h0m.1 5h0m.1 11.5h0m.1-5.8h0m.1-8.7h0m0-1.7h0m.1.5h0m.1 4.2h0m.1-2.3h0m.1 1.3h0m.1-13.2h0m.1 13.3h0m.1 6.1h0m.1-8.6h0m.1 1.6h0m.1-8.9h0m.1 9.1h0m0 6.7h0m.1 6h0m.1-11.1h0m.1-2.4h0m.1 1.4h0m.1-.6h0m.1 9.9h0m.1-4.1h0m.1 8.1h0m.1-14.5h0m.1-.9h0m.1 7.9h0m0-6h0m.1 8.4h0m.1 8h0m.1-24.8h0m.1 11.1h0m.1 1.9h0m.1.2h0m.1-8.4h0m.1 8h0m.1 9.8h0m.1-7.8h0m.1-2.5h0m0-4.2h0m.1 9.3h0m.1-4.2h0m.1-3.4h0m.1 9.9h0m.1-1.8h0m.1 1.3h0m.1-6.4h0m.1 11.8h0m.1 4.3h0m.1-18.4h0m.1-6.1h0m0 2.5h0m.1-4.3h0m.1 3h0m.1 9.6h0m.1.5h0m.1-11.8h0m.1 8.2h0m.1-2.4h0m.1 0h0m.1-1.5h0m.1-9.1h0m.1 21.2h0m0-5.8h0m.1-5.4h0m.1 2.4h0m.1 6h0m.1-17h0m.1 3.7h0m.1-5.3h0m.1 7h0m.1-1.6h0m.1 2.9h0m.1 7.8h0m.1-5.9h0m0 5.1h0m.1-4.9h0m.1 6.5h0m.1-5.8h0m.1-1.1h0m.1-2.6h0m.1-2.4h0m.1-1.7h0m.1-7h0m.1 13.3h0m.1-13.8h0m.1 12.4h0m.1 3.3h0m0-16.7h0m.1 17.7h0m.1-7h0m.1.6h0m.1 4.9h0m.1-11.1h0m.1 9.7h0m.1 4.5h0m.1-6.9h0m.1.2h0m.1 5.8h0m.1.6h0m0 7.5h0m.1-9h0m.1 11.3h0m.1-5.5h0m.1 3.5h0m.1-4.4h0m.1-6.9h0m.1 16.4h0m.1-7.5h0m.1-12.5h0m.1 8.4h0m.1 12.3h0m0-6.1h0m.1-5.5h0m.1-5.8h0m.1 12.6h0m.1-6.9h0m.1.4h0m.1 9.2h0m.1-11.1h0m.1-1.4h0m.1 9.9h0m.1 4.3h0m.1-5.2h0m0-11.8h0m.1 8.8h0m.1 5.6h0m.1 4.9h0m.1-14.4h0m.1-1.5h0m.1-14.5h0m.1 7.6h0m.1 5h0m.1-1.6h0m.1 11.5h0m.1-1h0m0-1.6h0m.1-13.5h0m.1 6.8h0m.1-.5h0m.1 3.8h0m.1-1.6h0m.1 1.3h0m.1 1.5h0m.1-3.2h0m.1 6h0m.1-13.3h0m.1 10.2h0m0-6.3h0m.1-3.7h0m.1 8.3h0m.1-7.2h0m.1 8.4h0m.1-8.2h0m.1 11.3h0m.1-12.4h0m.1 9.1h0m.1-13.7h0m.1 12.7h0m.1-8.9h0m.1 1.9h0m0 2h0m.1 4.6h0m.1-5h0m.1-3.1h0m.1-5h0m.1 5.5h0m.1-2.6h0m.1 10.8h0m.1-10.4h0m.1 4.4h0m.1 7.2h0m.1-10.4h0m0-3.8h0m.1-5h0m.1 14.8h0m.1 7.9h0m.1-18.8h0m.1 3.5h0m.1 8.3h0m.1 7.8h0m.1-11.6h0m.1 5.5h0m.1 4.1h0m.1-1.8h0m0-5.7h0m.1-1.6h0m.1 6.7h0m.1 3.6h0m.1-5.7h0m.1.7h0m.1 4.7h0m.1-4.4h0m.1 7.7h0m.1-8.8h0m.1-6.6h0m.1 14.6h0m0-16.1h0m.1 6.6h0m.1-6.5h0m.1 11.3h0m.1 1.5h0m.1-4.6h0m.1 8.3h0m.1-7.3h0m.1-2.4h0m.1-.8h0m.1 12h0m.1-13h0m0 6.8h0m.1 10.9h0m.1-8.1h0m.1 3.5h0m.1-2h0m.1-1.8h0m.1 8.5h0m.1-11.3h0m.1.2h0m.1-1.1h0m.1-9.4h0m.1 18.3h0m0-11.2h0m.1 3.7h0m.1-7.7h0m.1-2.7h0m.1 12.9h0m.1-6.6h0m.1 4.9h0m.1-4.6h0m.1 3.5h0m.1 8.5h0m.1-9h0m.1 4.9h0m.1-6.5h0m0 .9h0m.1-7h0m.1 8.8h0m.1-8h0m.1 14.4h0m.1-10.2h0m.1-.2h0m.1-10.2h0m.1 11.1h0m.1-4.7h0m.1 3.1h0m.1 6.2h0m0-2.6h0m.1 6.6h0m.1-17.5h0m.1 8.3h0m.1-6.9h0m.1 2.1h0m.1 15.3h0m.1-17.8h0m.1 10.5h0m.1-2.4h0m.1-3.8h0m.1-.4h0m0 5.3h0m.1-12h0m.1 6.9h0m.1.6h0m.1-6h0m.1-6h0m.1 11.8h0m.1-11.5h0m.1 11.1h0m.1-9h0m.1 17.7h0m.1-13.2h0m0-6.6h0m.1 14.1h0m.1-6.7h0m.1 5.8h0m.1-2.4h0m.1-.8h0m.1-4.7h0m.1-1.7h0m.1-12h0m.1 14h0m.1-8.7h0m.1 19.1h0m0-15.1h0m.1 9.3h0m.1-3.4h0m.1 2.4h0m.1 2.5h0m.1-3.4h0m.1-2.9h0m.1-3.9h0m.1 3.8h0m.1 7.5h0m.1-9.9h0m.1 5h0m0 4.7h0m.1-4.2h0m.1 10.5h0m.1-5.8h0m.1-5.9h0m.1-3.1h0m.1 7.3h0m.1-8.7h0m.1 2.7h0m.1-1.9h0m.1-11h0m.1 15.1h0m0 3.9h0m.1-.7h0m.1-1.3h0m.1-3.7h0m.1 5.6h0m.1.9h0m.1-11.2h0m.1 1.9h0m.1 6.3h0m.1 4.1h0m.1 9.4h0m.1-9.8h0m.1 2.8h0m0-5.1h0m.1 6.4h0m.1-5.5h0m.1 2.1h0m.1 9.4h0m.1-13.8h0m.1 7.8h0m.1-4.8h0m.1 6.3h0m.1-8h0m.1-15h0m.1 15.2h0m0-4.4h0m.1 14.5h0m.1-.9h0m.1-3.4h0m.1-3.4h0m.1 2h0m.1 1.9h0m.1-2.3h0m.1 13.7h0m.1-18.2h0m.1 12.7h0m.1-10.8h0m0-3.4h0m.1 12.2h0m.1-16h0m.1-11h0m.1 19.7h0m.1-3.6h0m.1 10.8h0m.1-8.1h0m.1-9.8h0m.1 8.6h0m.1 5.5h0m.1-7.3h0m0 3h0m.1-4.7h0m.1.2h0m.1-2h0m.1 1.1h0m.1-1.3h0m.1 15.6h0m.1-18.5h0m.1 15.6h0m.1 1.8h0m.1-15.2h0m.1 8.3h0m0 4.6h0m.1-12.4h0m.1 16.2h0m.1-22.2h0m.1 9.6h0m.1.3h0m.1-.3h0m.1-6.8h0m.1 8.6h0m.1 1.4h0m.1 2.8h0m.1 1h0m0-7h0m.1-2.3h0m.1-7.3h0m.1 20.4h0m.1-14.2h0m.1-1.1h0m.1.8h0m.1 3h0m.1 2.7h0m.1 4.2h0m.1-12.1h0m.1.9h0m.1 2.6h0m0 3.9h0m.1.4h0m.1-9.2h0m.1 10.9h0m.1.1h0m.1-15h0m.1 22.2h0m.1-28.5h0m.1 33.7h0m.1-15.1h0m.1-1.6h0m.1-9.9h0m0 22h0m.1-12.5h0m.1 4.1h0m.1.2h0m.1-15.3h0m.1 4.1h0m.1 5.7h0m.1 3.3h0m.1 1.2h0m.1 2.1h0m.1-8h0m.1.4h0m0-2.6h0m.1 12.1h0m.1.4h0m.1-9.1h0m.1 13.3h0m.1 1h0m.1-6.7h0m.1-3h0m.1 1.3h0m.1 4.8h0m.1 3.6h0m.1.1h0m0-18h0m.1 14.2h0m.1-3.8h0m.1-5.9h0m.1 4.2h0m.1-.9h0m.1 5.9h0m.1-3.7h0m.1-1.4h0m.1-3h0m.1-1.7h0m.1-5.2h0m0 8.8h0m.1-.5h0m.1-6.7h0m.1 13.6h0m.1-4.3h0m.1-10h0m.1 14.2h0m.1-12.4h0m.1 2h0m.1.6h0m.1 5.8h0m.1-6.5h0m0 2.6h0m.1-4.1h0m.1-5h0m.1 11.2h0m.1-13h0m.1 5.5h0m.1-4.7h0m.1.2h0m.1 6.6h0m.1 2.5h0m.1 1h0m.1.2h0m.1-9.4h0m0-5.3h0m.1 11.3h0m.1 8h0m.1 2.6h0m.1-11.4h0m.1-10.1h0m.1 1h0m.1 18.5h0m.1-8h0m.1 9.9h0m.1-2.6h0m.1-19.7h0m0 19.9h0m.1-8.5h0m.1 1.6h0m.1-6.9h0m.1 11.8h0m.1-5h0m.1 10.2h0m.1-4.2h0m.1 0h0m.1 6.1h0m.1-2.1h0m.1-7.9h0m0 2.6h0m.1 2.4h0m.1-6.7h0m.1 3.9h0m.1 6.6h0m.1-1.3h0m.1-10.8h0m.1 3.7h0m.1 8.8h0m.1-21.5h0m.1 25.4h0m.1-10.3h0m0-2.6h0m.1 12.4h0m.1-15h0m.1 3.7h0m.1 1.5h0m.1 6.9h0m.1-4.1h0m.1 3.3h0m.1-15.2h0m.1 18.1h0m.1 1.5h0m.1-5.9h0m0-8.4h0m.1 2.3h0m.1 6.8h0m.1-4.2h0m.1-1.7h0m.1-4.1h0m.1-.2h0m.1 14.6h0m.1-10.2h0m.1.8h0m.1-4.2h0m.1 6.7h0m0-10.5h0m.1 12.3h0m.1-1.9h0m.1-5.1h0m.1-.7h0m.1 3.2h0m.1-3.9h0m.1 3.4h0m.1 9.8h0m.1-2.8h0m.1.3h0m.1 4.3h0m0-30.5h0m.1 18.1h0m.1 4.9h0m.1 5.7h0m.1-4.6h0m.1-16.6h0m.1 15h0m.1-4.7h0m.1 2.4h0m.1 2h0m.1-2.7h0m.1-7.4h0m.1 10.2h0m0-3.1h0m.1-3.3h0m.1 3.3h0m.1-2.1h0m.1 2.5h0m.1-4.8h0m.1-1.3h0m.1-1.9h0m.1 5.5h0m.1 2.8h0m.1-6.6h0m.1.5h0m0 .1h0m.1-2.4h0m.1-8.4h0m.1 16.8h0m.1-3.3h0m.1-6.7h0m.1 10.9h0m.1-14h0m.1 8.6h0m.1 10.3h0m.1-10.5h0m.1-2.7h0m0-10.3h0m.1 13h0m.1 13.7h0m.1-.3h0m.1-21.3h0m.1.4h0m.1 3.7h0m.1 3.2h0m.1 4.3h0m.1-10h0m.1 12.1h0m.1-1.5h0m0 1.9h0m.1 5.8h0m.1-10.1h0m.1-1.6h0m.1 9.6h0m.1-16.5h0m.1 12.9h0m.1-7.8h0m.1 3.7h0m.1 1.4h0m.1-4.7h0m.1 10.5h0m0-14.2h0m.1-4.6h0m.1 7.9h0m.1 7.4h0m.1 5.2h0m.1-12.4h0m.1 2.1h0m.1-4.7h0m.1 13.3h0m.1-5.3h0m.1-2h0m.1-4.3h0m0 11.2h0m.1-4.3h0m.1 5.8h0m.1-6.7h0m.1 3.6h0m.1 3.8h0m.1-6.3h0m.1 9.1h0m.1-14.1h0m.1 12h0m.1-2.7h0m.1 5.6h0m.1-10.4h0m0 4.5h0m.1-15h0m.1 17.4h0m.1.2h0m.1-6.1h0m.1.8h0m.1 7.6h0m.1-3.2h0m.1 1h0m.1 4.5h0m.1 5.2h0m.1-14.8h0m0 9.5h0m.1-9.3h0m.1 3.6h0m.1-2.5h0m.1 3.9h0m.1-15.1h0m.1 11.9h0m.1-2.9h0m.1 12h0m.1-16.1h0m.1 5.3h0m.1-2.6h0m0 12.4h0m.1-22.4h0m.1 15.3h0m.1-3.7h0m.1 8.7h0m.1 1.8h0m.1-2h0m.1-13.7h0m.1 5.2h0m.1-13.3h0m.1 21.2h0m.1-10.9h0m0-2.7h0m.1-11h0m.1 21.7h0m.1-8.7h0m.1-7.3h0m.1 4h0m.1 6.4h0m.1-3.9h0m.1 3.4h0m.1-14h0m.1 13.9h0m.1-.4h0m0-10h0m.1 2.9h0m.1 1.2h0m.1-3.6h0m.1-3.8h0m.1 5.5h0m.1-1.3h0m.1 3.5h0m.1-1.2h0m.1-4.4h0m.1.1h0m.1 7.6h0m0-3.9h0m.1 2.4h0m.1-10.5h0m.1 14.3h0m.1-10.8h0m.1 4.4h0m.1 5.4h0m.1-5.9h0m.1-1h0m.1 6.4h0m.1-7.2h0m.1-2.2h0m.1.5h0m0 11.1h0m.1-3.9h0m.1 4.6h0m.1-1.7h0m.1-3.2h0m.1 4.7h0m.1-.9h0m.1-5.2h0m.1-6.4h0m.1 11.2h0m.1-4.6h0m.1 2.6h0m0 5.4h0m.1-3.1h0m.1-6h0m.1 1.5h0m.1 3.5h0m.1-3.3h0m.1-2.2h0m.1 10.8h0m.1-10.3h0m.1-5.2h0m.1 12.6h0m.1 3.6h0m0-.2h0m.1-5.1h0m.1 11.7h0m.1-6.6h0m.1-1.2h0m.1 3.3h0m.1-1.1h0m.1-2.1h0m.1-1.1h0m.1-7h0m.1 14.1h0m.1-8.8h0m0 13.4h0m.1-4.4h0m.1-5.2h0m.1 6.1h0m.1-2.3h0m.1-8h0m.1 3.1h0m.1-1.8h0m.1 1.5h0m.1 9.4h0m.1-20.7h0m.1 19.7h0m0-15.4h0m.1 9h0m.1 10.1h0m.1-7.7h0m.1-.2h0m.1-2.9h0m.1-1.3h0m.1-3.8h0m.1.3h0m.1 6.9h0m.1-4.8h0m.1 3.2h0m0-1.2h0m.1 15.4h0m.1-18.4h0m.1 12.8h0m.1-14h0m.1 7.3h0m.1-6.8h0m.1-6.5h0m.1 9.8h0m.1-1.5h0m.1-2.2h0m.1-4.9h0m0-3.9h0m.1 1.1h0m.1 17.5h0m.1-25.9h0m.1 15.6h0m.1 5.5h0m.1-8.5h0m.1 13.6h0m.1-16.1h0m.1.3h0m.1 4.5h0m.1-3.2h0m.1-6.6h0m0 4h0m.1 1.6h0m.1 5.8h0m.1 8.6h0m.1-25.1h0m.1 13h0m.1-8.6h0m.1 15.1h0m.1-12.7h0m.1 15.1h0m.1-13.4h0m.1 10.4h0m0 .4h0m.1-4.4h0m.1 11.8h0m.1-3.5h0m.1-12.2h0m.1 2.7h0m.1 9.9h0m.1 3.3h0m.1-.4h0m.1-12.3h0m.1 3.1h0m.1-4.1h0m0 4.3h0m.1-3.2h0m.1 7.6h0m.1-8.4h0m.1 6.6h0m.1 2.9h0m.1-2.2h0m.1-9.1h0m.1 23.5h0m.1-24.3h0m.1 3.6h0m.1-9.1h0m0 14.6h0m.1-9.2h0m.1 15.4h0m.1-21h0m.1 16.5h0m.1-6.1h0m.1-.2h0m.1-1.7h0m.1 2.8h0m.1-5.3h0m.1 2.9h0m.1-4.7h0m0-5.2h0m.1-2.9h0m.1 7.4h0m.1 1h0m.1-7.7h0m.1 18.3h0m.1-13.3h0m.1-8.4h0m.1 11.6h0m.1.9h0m.1-4.5h0m.1 4.3h0m0-13.3h0m.1 13.9h0m.1 1.2h0m.1.8h0m.1 1.4h0m.1-5.6h0m.1-2.9h0m.1-3.2h0m.1 19.5h0m.1-12.5h0m.1-2.1h0m.1 2.4h0m.1-9.2h0m0 13.3h0m.1-2.9h0m.1 0h0m.1 2.6h0m.1-13.9h0m.1 16h0m.1.9h0m.1-7.4h0m.1 3.4h0m.1 0h0m.1 0h0m.1-8h0m0 2.3h0m.1 5.4h0m.1-3.3h0m.1-2.1h0m.1 13h0m.1-7.8h0m.1 1.8h0m.1.6h0m.1 3.2h0m.1-5h0m.1-6.7h0m.1 3.4h0m0 10.9h0m.1-16.2h0m.1 15.3h0m.1-8.5h0m.1 9.5h0m.1-12.2h0m.1 14h0m.1-16.7h0m.1 11h0m.1-6.7h0m.1 10.9h0m.1-5.7h0m0-3.6h0m.1-6.8h0m.1 14.7h0m.1-1h0m.1 1.7h0m.1-9.6h0m.1 8.2h0m.1 3.5h0m.1-7.7h0m.1 2.8h0m.1 3.6h0m.1-1.5h0m0 .4h0m.1-10.7h0m.1 11.6h0m.1-6.9h0m.1-4.3h0m.1 10.8h0m.1-13.7h0m.1 10.9h0m.1.3h0m.1-3.3h0m.1 7h0m.1-10.8h0m0-4.2h0m.1 4h0m.1 3.7h0m.1-.2h0m.1-10.6h0m.1 8.2h0m.1 8.2h0m.1 2.8h0m.1-11.8h0m.1 8h0m.1-.4h0m.1.3h0m0-.2h0m.1-8.8h0m.1 15.5h0m.1-12.2h0m.1.5h0m.1-7.6h0m.1 5.6h0m.1 12.8h0m.1-19.7h0m.1 15.5h0m.1-5.5h0m.1-.5h0m.1 4.9h0m0-12.6h0m.1 9.8h0m.1-2.2h0m.1-5h0m.1 16.4h0m.1 2.7h0m.1-17.3h0m.1 15.4h0m.1-15.7h0m.1 3h0m.1 1.1h0m.1 9.2h0m0-13.8h0m.1 10.9h0m.1 3h0m.1-2.6h0m.1-8.8h0m.1 9.1h0m.1 3.8h0m.1-4.5h0m.1-.9h0m.1-15h0m.1 5.2h0m.1 17h0m0-24.5h0m.1 11.5h0m.1-6.5h0m.1 13.2h0m.1-4h0m.1-10.2h0m.1 7.1h0m.1 13.8h0m.1-7.9h0m.1.3h0m.1-11.4h0m.1 9.2h0m0-6.7h0m.1 9.5h0m.1-7.5h0m.1 3.1h0m.1 6.1h0m.1-5.4h0m.1.1h0m.1-4.4h0m.1-.5h0m.1-6.8h0m.1 10.3h0m.1-5.2h0m0 10h0m.1-2.9h0m.1 4.7h0m.1-.9h0m.1-9.1h0m.1-1.6h0m.1 15.7h0m.1-6.2h0m.1 2.5h0m.1 1.9h0m.1-4.2h0m.1 1.1h0m0 11.7h0m.1-7.6h0m.1-9.3h0m.1-7.4h0m.1 8.5h0m.1 9.4h0m.1-5.4h0m.1 2.3h0m.1.2h0m.1-4.5h0m.1-.8h0m.1.9h0m.1-4.7h0m0 9.9h0m.1.1h0m.1-10.3h0m.1 11.5h0m.1-10.7h0m.1-1.3h0m.1 6.1h0m.1 3.8h0m.1-16.5h0m.1 19.3h0m.1-14.4h0m.1 10.5h0m0-11.2h0m.1-1.2h0m.1 9.8h0m.1-7.9h0m.1.3h0m.1 9.2h0m.1 6.6h0m.1-5.1h0m.1-8.1h0m.1 3.2h0m.1-6.5h0m.1 3.6h0m0-8.8h0m.1 11.1h0m.1-.1h0m.1-5.4h0m.1.7h0m.1-2.1h0m.1-9.2h0m.1 19.6h0m.1-13.2h0m.1 4.1h0m.1 3.9h0m.1-4.3h0m0-7.9h0m.1-2.2h0m.1 17.9h0m.1-9.7h0m.1 7.9h0m.1-7.1h0m.1-.1h0m.1 8.6h0m.1-2.9h0m.1-5.3h0m.1 4.6h0m.1-7.1h0m0 .8h0m.1-.6h0m.1 9.5h0m.1-7.5h0m.1-2.7h0m.1-1.8h0m.1-.1h0m.1 7.9h0m.1-14.6h0m.1 11.7h0m.1.9h0m.1 4h0m0-2.5h0m.1 2.4h0m.1-8.3h0m.1 4.6h0m.1 6.3h0m.1-20h0m.1 24.4h0m.1-9.6h0m.1 1.9h0m.1-10.7h0m.1 10.1h0m.1 12.4h0m.1-8.2h0m0-.9h0m.1-6.8h0m.1-1.8h0m.1 8h0m.1-1.2h0m.1 6.4h0m.1-8.7h0m.1 10.4h0m.1-2h0m.1-3.2h0m.1 7.1h0m.1-6.1h0m0-4.6h0m.1-7h0m.1 19.7h0m.1-4.6h0m.1 2.1h0m.1-11.3h0m.1 5.2h0m.1 7.9h0m.1-10.5h0m.1 14.7h0m.1-11.2h0m.1 4.3h0m0 .9h0m.1 6h0m.1-11.9h0m.1 1.4h0m.1-4.1h0m.1-5.8h0m.1 10.4h0m.1 1.1h0m.1-4h0m.1 9.2h0m.1-7.9h0m.1 6.3h0m0-9.3h0m.1-2.6h0m.1-2.2h0m.1 6.3h0m.1-6.9h0m.1-14.1h0m.1 10.1h0m.1 6.9h0m.1-7.9h0m.1 3h0m.1 3.9h0m.1-10.2h0m0 14.5h0m.1-10.9h0m.1 5.3h0m.1 12.7h0m.1-23.1h0m.1-5h0m.1 6h0m.1 5.2h0m.1 5.6h0m.1-7h0m.1.3h0m.1-9.5h0m0 5.9h0m.1 3.9h0m.1 3.1h0m.1-3.5h0m.1 7.8h0m.1-10.7h0m.1 6.7h0m.1-4.4h0m.1 1h0m.1 6.1h0m.1 1.9h0m.1 1.8h0m0-2.9h0m.1-8h0m.1-2.3h0m.1 19.3h0m.1-10.1h0m.1-1.5h0m.1 1.3h0m.1-9.9h0m.1 8.7h0m.1-2.2h0m.1 5.8h0m.1 1.6h0m.1-3.2h0m0 12.1h0m.1-5.8h0m.1-6.5h0m.1-.4h0m.1-4.6h0m.1 18.4h0m.1-5.9h0m.1-5.3h0m.1.1h0m.1 5.3h0m.1-.4h0m.1 3h0m0-1.8h0m.1-1.3h0m.1-17.2h0m.1 21.4h0m.1-19.9h0m.1 23.1h0m.1-10.1h0m.1 8.5h0m.1-.9h0m.1-2.5h0m.1 2.5h0m.1-8h0m0 10.8h0m.1-15.6h0m.1 1.1h0m.1 6.8h0m.1 5.2h0m.1-29.6h0m.1 26.5h0m.1-6.3h0m.1 1.2h0m.1-5h0m.1 15.6h0m.1-22.4h0m0 .1h0m.1 13.9h0m.1.2h0m.1-8.4h0m.1 3.5h0m.1-1.2h0m.1 13.6h0m.1-10.6h0m.1 11.3h0m.1-11.5h0m.1-7.7h0m.1 8.9h0m0 0h0m.1-4.2h0m.1 6h0m.1-21.1h0m.1 2.6h0m.1 13h0m.1.8h0m.1-10.4h0m.1 8.4h0m.1 1h0m.1 7.9h0m.1-16.3h0m0-.3h0m.1 2.6h0m.1 10.4h0m.1-17.9h0m.1 16.6h0m.1.6h0m.1-10.1h0m.1-2h0m.1 13.1h0m.1-3.8h0m.1 3.6h0m.1-17.6h0m.1 5.4h0m0 4.4h0m.1 3h0m.1-8.7h0m.1-5.8h0m.1 2.3h0m.1 12.4h0m.1.4h0m.1-10.8h0m.1 4.1h0m.1 11.2h0m.1-8.8h0m.1.5h0m0-3.4h0m.1 4.5h0m.1 1.3h0m.1 7.3h0m.1-11.6h0m.1.1h0m.1 15.9h0m.1-8.9h0m.1 1.3h0m.1-3.2h0m.1-3.4h0m.1 5.9h0m0 .8h0m.1-17.6h0m.1 13.8h0m.1-14.6h0m.1 20.6h0m.1-8.1h0m.1 2.5h0m.1-5.4h0m.1 8.7h0m.1-6h0m.1-2.3h0m.1 9.8h0m0-3h0m.1 7h0m.1-5.1h0m.1 1.3h0m.1-7.2h0m.1 1.1h0m.1 3.8h0m.1-9.6h0m.1.6h0m.1 7.5h0m.1 2.9h0m.1 1h0m0 5.2h0m.1 1.8h0m.1-10.9h0m.1-.1h0m.1 2.9h0m.1 1.2h0m.1-15.6h0m.1 17.9h0m.1.7h0m.1-11.1h0m.1 11h0m.1-8.9h0m0 1.4h0m.1.2h0m.1 3h0m.1 2.9h0m.1 5.4h0m.1-3.9h0m.1-5.2h0m.1 6.7h0m.1-4.2h0m.1-15h0m.1 9.9h0m.1 7.3h0m.1-4.5h0m0-9.1h0m.1-.1h0m.1 16.2h0m.1-10.5h0m.1 13.1h0m.1-10.8h0m.1 2.3h0m.1-9.6h0m.1 1.6h0m.1 9.4h0m.1 1.8h0m.1-6h0m0-5.3h0m.1 11.3h0m.1 6.2h0m.1-17.8h0m.1 14.5h0m.1-8.6h0m.1 2.3h0m.1-8.9h0m.1-3h0m.1 16h0m.1 4.9h0m.1-19.4h0m0 10.3h0m.1 8.4h0m.1-11.2h0m.1 5.6h0m.1 8.2h0m.1-4.8h0m.1-14h0m.1 11.4h0m.1.9h0m.1-2.9h0m.1-4.5h0m.1-4.3h0m0 10.8h0m.1-1.9h0m.1-5.3h0m.1.9h0m.1-1.6h0m.1-.9h0m.1 11.1h0m.1-15.7h0m.1 2.3h0m.1-1.4h0m.1 6.8h0m.1 9.5h0m0-5.7h0m.1-17.2h0m.1 12.3h0m.1-14.3h0m.1 22.7h0m.1-4h0m.1-12.5h0m.1 5.2h0m.1 5.2h0m.1-.6h0m.1-2.3h0m.1-1.4h0m0-5.2h0m.1 5.5h0m.1-1.7h0m.1-1.8h0m.1.9h0m.1-8.6h0m.1 7.5h0m.1 6.4h0m.1-7h0m.1-11.7h0m.1 13.6h0m.1-13.8h0m0 17.1h0m.1-8.3h0m.1-.5h0m.1 16.2h0m.1-9.4h0m.1 1h0m.1.6h0m.1-2h0m.1-3.9h0m.1 5h0m.1-5.7h0m.1-1.1h0m.1 5.1h0m0 2.8h0m.1-4.7h0m.1 3.9h0m.1-2.9h0m.1 4.1h0m.1 4.7h0m.1 7.9h0m.1-26.8h0m.1 19h0m.1-2.2h0m.1-2.2h0m.1-9h0m0 12.5h0m.1.9h0m.1-15.4h0m.1 16.3h0m.1 6.4h0m.1-13.9h0m.1-2.5h0m.1 6.4h0m.1 5.7h0m.1-11.4h0m.1-3.3h0m.1 3.7h0m0 1.8h0m.1-.2h0m.1 12.3h0m.1-6.3h0m.1 2.6h0m.1.1h0m.1-8.7h0m.1 5.4h0m.1-5.2h0m.1-3.7h0m.1 6.2h0m.1-5.6h0m0 6.4h0m.1-8.8h0m.1 4.7h0m.1 3.1h0m.1-8.7h0m.1-3h0m.1 5.6h0m.1 4.1h0m.1 8.7h0m.1-8.9h0m.1-10.8h0m.1 7.3h0m0 7.2h0m.1-14.3h0m.1 15.4h0m.1-5.6h0m.1 2.3h0m.1-.4h0m.1-11.7h0m.1 4h0m.1 1.1h0m.1 7.5h0m.1 3.2h0m.1-18.7h0m0 6.2h0m.1 16.1h0m.1-8.4h0m.1-6h0m.1 1.8h0m.1-2.5h0m.1.2h0m.1 5.1h0m.1-4.3h0m.1.4h0m.1 8.3h0m.1 2h0m.1-7.8h0m0-1.5h0m.1 8.1h0m.1 5.3h0m.1-23.7h0m.1 14.5h0m.1.2h0m.1 6.3h0m.1-8.3h0m.1 8.7h0m.1-2.2h0m.1 7.6h0m.1-4.2h0m0-3.2h0m.1 10.8h0m.1-13.1h0m.1-8.2h0m.1 18.5h0m.1-2.4h0m.1-5.3h0m.1 5.6h0m.1-11.2h0m.1 11.6h0m.1-3.6h0m.1-3.3h0m0 7.8h0m.1 4.2h0m.1-5.6h0m.1-4.4h0m.1.6h0m.1.6h0m.1-.8h0m.1-4.7h0m.1 10.3h0m.1-17.5h0m.1 17.5h0m.1-1.7h0m0-6.1h0m.1.6h0m.1 8.7h0m.1-10.1h0m.1 8.4h0m.1-13.2h0m.1 1.1h0m.1-5.7h0m.1 18.1h0m.1 3.7h0m.1-19.6h0m.1 15.3h0m0-13.1h0m.1 4.8h0m.1.3h0m.1-9.4h0m.1 3.9h0m.1 8.6h0m.1-20.9h0m.1 13h0m.1 3.2h0m.1 11.1h0m.1-8.8h0m.1-12.2h0m0-1h0m.1 13.5h0m.1-5.9h0m.1 0h0m.1-5.2h0m.1 15.1h0m.1-9.2h0m.1 5h0m.1-10h0m.1-1.5h0m.1 10.9h0m.1-14.6h0m.1 15.8h0m0-4.1h0m.1-2.4h0m.1-12.3h0m.1 15.5h0m.1 4.8h0m.1.6h0m.1-.2h0m.1-18.1h0m.1 1.5h0m.1 14.8h0m.1 1.8h0m.1-5.3h0m0-7.2h0m.1 3.5h0m.1-2.2h0m.1-4.4h0m.1 12h0m.1-11.6h0m.1 2.2h0m.1 6.6h0m.1-.4h0m.1-4.9h0m.1 11.9h0m.1-1.8h0m0-1.4h0m.1 3.2h0m.1 1h0m.1-17.5h0m.1 22.4h0m.1.3h0m.1-18.6h0m.1 10.5h0m.1.8h0m.1-.8h0m.1 9.6h0m.1-15.9h0m0 4.9h0m.1.9h0m.1 9.7h0m.1-3.9h0m.1-4.6h0m.1 1.3h0m.1 1.5h0m.1 10.4h0m.1-21.6h0m.1 12.8h0m.1 5.4h0m.1-1.7h0m0-11.4h0m.1 5.5h0m.1-1.4h0m.1-.9h0m.1-3.3h0m.1 3h0m.1 12h0m.1-7.7h0m.1 2.3h0m.1-9.3h0m.1 6.4h0m.1-8.1h0m0 10.9h0m.1-4.9h0m.1-7.5h0m.1 8.4h0m.1-4.8h0m.1 14.8h0m.1 2.2h0m.1-9.6h0m.1-8h0m.1 2h0m.1-10.8h0m.1 4.9h0m0 3.2h0m.1-12.6h0m.1 17.4h0m.1 3.6h0m.1-1.4h0m.1-10.3h0m.1 23.9h0m.1-14.3h0m.1-2.8h0m.1-6.2h0m.1-2.2h0m.1 6.1h0m.1 5.6h0m0-4.9h0m.1 5.1h0m.1-22.1h0m.1 16.9h0m.1-7h0m.1-3.4h0m.1 22.8h0m.1-19.2h0m.1-4h0m.1 10.6h0m.1-4.8h0m.1 9.8h0m0-10.2h0m.1 1.8h0m.1-2.5h0m.1-8.4h0m.1 13h0m.1-.3h0m.1-5.7h0m.1 1.2h0m.1-6h0m.1 11.8h0m.1.5h0m.1-4.4h0m0 3.8h0m.1-7.3h0m.1.3h0m.1 1.9h0m.1-12.8h0m.1 22.8h0m.1-7.4h0m.1-6.4h0m.1-1.2h0m.1 3.3h0m.1-9.6h0m.1 7.6h0m0 2h0m.1 12.1h0m.1-9.9h0m.1 7.3h0m.1-2.1h0m.1 2h0m.1-1.4h0m.1-8.7h0m.1 10.2h0m.1-7.4h0m.1 3.4h0m.1-5.3h0m0 12.3h0m.1-2.2h0m.1-.7h0m.1-6.8h0m.1-.3h0m.1 6.3h0m.1-7.8h0m.1 1.4h0m.1 7.5h0m.1-6.8h0m.1 16.1h0m.1-10.5h0m0-5.6h0m.1 7.2h0m.1-.6h0m.1-5.9h0m.1 3.3h0m.1-5.4h0m.1 7.9h0m.1 8.1h0m.1-3.2h0m.1-4.6h0m.1.1h0m.1 5.3h0m.1 3.4h0m0 3.7h0m.1-15.2h0m.1 9.7h0m.1-1.6h0m.1 11.3h0m.1-21.9h0m.1.9h0m.1 5.7h0m.1 4.7h0m.1-.7h0m.1 7.3h0m.1-7.8h0m0-8.9h0m.1 9.4h0m.1 3.3h0m.1-9.4h0m.1 3.3h0m.1 5.5h0m.1-2.7h0m.1 9h0m.1-.6h0m.1-22.6h0m.1 6.7h0m.1.5h0m0-13h0m.1 15h0m.1-2h0m.1 9.4h0m.1-15.1h0m.1 11.1h0m.1-5h0m.1 5.1h0m.1-11.9h0m.1 11.1h0m.1-1.3h0m.1-3.5h0m0 2.8h0m.1-11.3h0m.1 7.2h0m.1 11.1h0m.1-2.4h0m.1-9.4h0m.1-9.6h0m.1 2.3h0m.1.6h0m.1 9.2h0m.1-1.8h0m.1-7.7h0m0 4.5h0m.1 6.3h0m.1-17.8h0m.1-3.4h0m.1 15.7h0m.1-4.4h0m.1-.4h0m.1 3.6h0m.1-6h0m.1 3.4h0m.1-2.9h0m.1 12h0m0-7.3h0m.1 2.4h0m.1.2h0m.1-7.2h0m.1 16.7h0m.1-14.4h0m.1-2.3h0m.1-5.8h0m.1 6.9h0m.1 4h0m.1-8.2h0m.1 17.1h0m.1-5.4h0m0-6.8h0m.1 12.2h0m.1-11.9h0m.1 7.2h0m.1 5h0m.1-16h0m.1 14.9h0m.1-5.2h0m.1 3.9h0m.1-.4h0m.1 3.7h0m.1-12.9h0m0 .2h0m.1 3h0m.1 5h0m.1-.9h0m.1-3.4h0m.1 3.2h0m.1-9.7h0m.1 14.7h0m.1-2.4h0m.1-8.1h0m.1 1h0m.1 8.5h0m0-6.9h0m.1-2.4h0m.1 8.7h0m.1 4.1h0m.1-5.3h0m.1-5.1h0m.1 6.6h0m.1-3.1h0m.1-7.6h0m.1 14.4h0m.1-16.9h0m.1 2.1h0m0 .6h0m.1 4.3h0m.1-.6h0m.1 4.4h0m.1-7.6h0m.1 3.5h0m.1-5h0m.1.6h0m.1-8.9h0m.1 15.1h0m.1-12.8h0m.1 13.9h0m0-17.8h0m.1 22.6h0m.1-13h0m.1-9.1h0m.1 9h0m.1-4.6h0m.1 5.5h0m.1-2.4h0m.1 7.4h0m.1-5.2h0m.1-6.7h0m.1 8.7h0m0-5.8h0m.1-3.1h0m.1 2.9h0m.1 7.5h0m.1-.5h0m.1-10.2h0m.1 16.7h0m.1 4.8h0m.1-10.4h0m.1.4h0m.1.3h0m.1 2h0m0-6.2h0m.1 5.2h0m.1 2.8h0m.1-2.5h0m.1-4.8h0m.1-5.7h0m.1 2.3h0m.1 10.6h0m.1-4.9h0m.1 3.4h0m.1 3.1h0m.1.5h0m.1 4h0m0-12.3h0m.1-2h0m.1 5.8h0m.1-.8h0m.1 5.9h0m.1-4.5h0m.1 4.1h0m.1-4.7h0m.1-10.6h0m.1 22.3h0m.1-1h0m.1-4.9h0m0-14.1h0m.1 8.7h0m.1-1.4h0m.1-1.5h0m.1.7h0m.1 3.4h0m.1 6.2h0m.1-11.6h0m.1 3.8h0m.1-6.2h0m.1 12.9h0m.1-.7h0m0-11.1h0m.1-9h0m.1 16.9h0m.1-8h0m.1 2.4h0m.1 1.9h0m.1-5.6h0m.1-4.6h0m.1 6.5h0m.1 2.3h0m.1-5.4h0m.1 8.2h0m0-2.4h0m.1-7.6h0m.1 11.1h0m.1 1.1h0m.1.5h0m.1-17.7h0m.1 14.3h0m.1-7.1h0m.1 1.1h0m.1 6.8h0m.1-13.2h0m.1 4.5h0m0 6.3h0m.1-2.2h0m.1 5.1h0m.1-.4h0m.1-4.2h0m.1-8.9h0m.1 9.3h0m.1-7.9h0m.1 1.7h0m.1 2.4h0m.1 9.8h0m.1 2.4h0m0 1h0m.1-6.6h0m.1-13.5h0m.1 6.2h0m.1 13.9h0m.1-2.9h0m.1-8.9h0m.1 8.5h0m.1-10.1h0m.1-.6h0m.1-2.7h0m.1 15.4h0m.1-19.9h0m0 13.2h0m.1 1.1h0m.1-2.9h0m.1 13.7h0m.1.7h0m.1-9.6h0m.1-3.9h0m.1-5.4h0m.1 6.3h0m.1-5.3h0m.1 8h0m.1.3h0m0-11.7h0m.1 9.2h0m.1 9.6h0m.1-4.6h0m.1 4.9h0m.1-14.8h0m.1 27.1h0m.1-20h0m.1 8.6h0m.1-10.3h0m.1 14h0m.1 3.7h0m0-7.9h0m.1-7.9h0m.1-19.2h0m.1 19.3h0m.1-.3h0m.1 12.4h0m.1 7.1h0m.1-14.5h0m.1 5.3h0m.1-5.4h0m.1 1.1h0m.1 1h0m0 .3h0m.1-7h0m.1 1.6h0m.1-4.7h0m.1-2h0m.1 15.3h0m.1-9.1h0m.1 11.5h0m.1-17.8h0m.1 7.5h0m.1-9.3h0m.1 19.8h0m0-9.2h0m.1-7.4h0m.1-5h0m.1 9.6h0m.1-5.2h0m.1 4.6h0m.1 8.7h0m.1-10.5h0m.1-9h0m.1 11.6h0m.1 7.9h0m.1-8.4h0m0 1.1h0m.1 11.9h0m.1-23.6h0m.1 4.5h0m.1 11h0m.1 4.8h0m.1-7.7h0m.1-11.1h0m.1 1.4h0m.1 12.7h0m.1-9.4h0m.1.7h0m0-1.5h0m.1-4.6h0m.1 17.6h0m.1-1.7h0m.1-25.6h0m.1 15.9h0m.1-5.9h0m.1.9h0m.1 7.8h0m.1-1.2h0m.1 7.5h0m.1-12.8h0m.1 5.4h0m0 8h0m.1-6.2h0m.1-1.3h0m.1 8h0m.1-8.4h0m.1-7.4h0m.1 3.8h0m.1-2.2h0m.1 8.6h0m.1-8.3h0m.1-1.9h0m.1 12.8h0m0-7.3h0m.1 5.9h0m.1-6.6h0m.1-7.5h0m.1 2.1h0m.1 14h0m.1-4.1h0m.1-1.3h0m.1-4.2h0m.1-2.2h0m.1-3.9h0m.1 12.9h0m0-1.1h0m.1-7.3h0m.1 5h0m.1-7.5h0m.1 16.2h0m.1-4.8h0m.1-3.8h0m.1-10.7h0m.1 8.8h0m.1 2.1h0m.1 2h0m.1-11.8h0m0 .4h0m.1 14.1h0m.1-17.7h0m.1 13h0m.1-2.7h0m.1-12.1h0m.1 9.8h0m.1-9.4h0m.1 6.8h0m.1 7.4h0m.1 2.5h0m.1-2.5h0m0 5h0m.1-9.2h0m.1 9.8h0m.1-17.2h0m.1 20.5h0m.1-11h0m.1 7.7h0m.1 2h0m.1 1.3h0m.1-11.1h0m.1 13.5h0m.1-16.7h0m0 5h0m.1 9.5h0m.1-7.3h0m.1-17.7h0m.1 3.5h0m.1 13.7h0m.1-1.9h0m.1 5.9h0m.1-14.7h0m.1 13.9h0m.1-5.9h0m.1-3.4h0m.1 14.2h0m0 .9h0m.1-10.6h0m.1 3.5h0m.1-11.2h0m.1 3.9h0m.1 15.3h0m.1-7.2h0m.1-12.5h0m.1-1.1h0m.1 11h0m.1 1.3h0m.1 2h0m0-5.2h0m.1-.9h0m.1 10.6h0m.1-3.3h0m.1-5.7h0m.1-2.5h0m.1-2.2h0m.1-11h0m.1 9.4h0m.1-5.1h0m.1 16.6h0m.1-.6h0m0-2.7h0m.1.6h0m.1-4.3h0m.1.3h0m.1-5.5h0m.1 10.6h0m.1-5.1h0m.1.8h0m.1 5.6h0m.1-1.7h0m.1 4h0m.1-10.9h0m0-4.1h0m.1 3.5h0m.1-1.5h0m.1-12h0m.1 21.8h0m.1 12h0m.1-10.2h0m.1-6.8h0m.1-.2h0m.1-5.8h0m.1 0h0m.1-2.1h0m0 .3h0m.1 15.2h0m.1-.2h0m.1-5.1h0m.1-13.3h0m.1 14.2h0m.1-8.9h0m.1 9.2h0m.1 1.4h0m.1-3.3h0m.1-5.2h0m.1 10.2h0m0-10h0m.1 6.6h0m.1-11.7h0m.1-.9h0m.1 3.2h0m.1 6.5h0m.1-1.2h0m.1-4h0m.1 16.1h0m.1-2.5h0m.1-7.4h0m.1-1.8h0m.1 3.7h0m0-4.8h0m.1 7.7h0m.1 1.2h0m.1 8.6h0m.1-11.4h0m.1-2.1h0m.1 8.2h0m.1-2h0m.1 1.4h0m.1-3.2h0m.1 4.3h0m.1-11.8h0m0-4.6h0m.1 13.2h0m.1-4.5h0m.1 11.2h0m.1-2.4h0m.1-10.4h0m.1 6.7h0m.1-13h0m.1 8.7h0m.1 5.2h0m.1-3.3h0m.1-8.1h0m0 8.8h0m.1.4h0m.1-2.9h0m.1.1h0m.1-2.3h0m.1 10.6h0m.1-6.6h0m.1-7.9h0m.1 11.9h0m.1-6.2h0m.1 1.8h0m.1-3.3h0m0-17.7h0m.1 27.4h0m.1-4.2h0m.1-7.9h0m.1-3.2h0m.1 5.3h0m.1-8h0m.1 7.5h0m.1-7.8h0m.1 6.1h0m.1-6.1h0m.1 6.8h0m0-12.4h0m.1 13.3h0m.1-12h0m.1 13.9h0m.1-11.7h0m.1 12.8h0m.1-18.4h0m.1 13.3h0m.1-6.4h0m.1-1h0m.1-7h0m.1 16.1h0m0-4.9h0m.1.8h0m.1-11.3h0m.1 6.6h0m.1 5.1h0m.1.7h0m.1-3.1h0m.1-3.9h0m.1 8.2h0m.1-5.7h0m.1 4.3h0m.1-5.6h0m0 3.4h0m.1.6h0m.1-1.3h0m.1 11.1h0m.1-9.5h0m.1-6.1h0m.1 11.5h0m.1-17.6h0m.1 9.7h0m.1 2.9h0m.1 7.4h0m.1-3.5h0m.1-3.9h0m0 1.3h0m.1 3.3h0m.1-1.2h0m.1 4.2h0m.1-7h0m.1 3.3h0m.1-3.9h0m.1 13h0m.1-10.6h0m.1.5h0m.1 8.6h0m.1-7.6h0m0 1.2h0m.1 4h0m.1-11.9h0m.1 8h0m.1-11.2h0m.1 9.4h0m.1-2.7h0m.1-3.7h0m.1 11.8h0m.1-10.3h0m.1 17.2h0m.1-9.8h0m0 1h0m.1-9.7h0m.1 11.4h0m.1-1.1h0m.1 1.4h0m.1-1.3h0m.1-7h0m.1 3.1h0m.1 1.8h0m.1-.1h0m.1-5.4h0m.1 4.2h0m0 8.4h0m.1.9h0m.1-11.6h0m.1 4.8h0m.1-9.3h0m.1 16.3h0m.1-3.1h0m.1-10.9h0m.1 4.8h0m.1 5.3h0m.1-6.6h0m.1 5.9h0m0-5.3h0m.1 9.6h0m.1-12.5h0m.1 5.3h0m.1-2.1h0m.1.9h0m.1-3.5h0m.1 1.6h0m.1-3.8h0m.1 10.6h0m.1-7.7h0m.1 4.1h0m0 3.5h0m.1-1.3h0m.1-3.7h0m.1-3h0m.1 3h0m.1 3.7h0m.1-7.7h0m.1 11.7h0m.1.3h0m.1-16.5h0m.1 9.8h0m.1 4.2h0m.1-8.1h0m0 2h0m.1-12.3h0m.1 15.4h0m.1-4.3h0m.1 7h0m.1-5.2h0m.1-10.6h0m.1 6.2h0m.1-.4h0m.1 9.4h0m.1-.8h0m.1-13.4h0m0-.4h0m.1 15.7h0m.1-14h0m.1-1.1h0m.1 9.2h0m.1-3.1h0m.1-.2h0m.1-2.2h0m.1 5.7h0m.1-13.8h0m.1 5.9h0m.1-4.7h0m0 18.1h0m.1-5.1h0m.1-4.2h0m.1-6.8h0m.1 10.3h0m.1-7.4h0m.1 2.1h0m.1 12.1h0m.1-24.1h0m.1 17.2h0m.1-6.2h0m.1 11.2h0m0-2.9h0m.1-6.6h0m.1 3.4h0m.1.7h0m.1 1h0m.1-.5h0m.1.3h0m.1 10.4h0m.1-18.5h0m.1 7.2h0m.1-9.7h0m.1 1.7h0m0 6.2h0m.1-3.3h0m.1-11.1h0m.1 15h0m.1 5h0m.1 3.7h0m.1-8.2h0m.1-3.5h0m.1-4.7h0m.1-.3h0m.1 1.9h0m.1 7.8h0m0-5.1h0m.1.3h0m.1.9h0m.1-2.9h0m.1 5.9h0m.1-8.2h0m.1 8.6h0m.1-.4h0m.1-.1h0m.1 3h0m.1 2h0m.1-11h0m.1 5.9h0m0 13.5h0m.1-9.3h0m.1-7.7h0m.1-7.8h0m.1 1.9h0m.1 10.2h0m.1 5.7h0m.1-12.9h0m.1 16h0m.1-12.4h0m.1-10.2h0m.1 16.9h0m0-7.3h0m.1-2h0m.1 8.9h0m.1-7.2h0m.1 7.9h0m.1-11.7h0m.1 1.7h0m.1 17.7h0m.1-17.8h0m.1 8.1h0m.1-3.9h0m.1-6.6h0m0 3.4h0m.1 7h0m.1-7.2h0m.1-3.6h0m.1 10h0m.1-2.9h0m.1 7.1h0m.1-13.6h0m.1 12.2h0m.1-.2h0m.1-4h0m.1 3.4h0m0-6.4h0m.1 3.1h0m.1.9h0m.1 2.6h0m.1-7h0m.1 0h0m.1.4h0m.1-7.3h0m.1 8.6h0m.1 3.9h0m.1-14.5h0m.1-3.6h0m0 18.6h0m.1 4.5h0m.1-14.2h0m.1 4.5h0m.1 4.2h0m.1-7.2h0m.1 1.5h0m.1 1.4h0m.1 3.5h0m.1-4.5h0m.1 2.3h0m.1 2.8h0m0 1.2h0m.1 1.6h0m.1 3.6h0m.1-4.6h0m.1-6.5h0m.1-6.9h0m.1 7.8h0m.1.9h0m.1 9.8h0m.1-7.2h0m.1-11.8h0m.1 24h0m0-10.6h0m.1 9.1h0m.1.6h0m.1-13.7h0m.1 7h0m.1.1h0m.1 7.8h0m.1-4.9h0m.1-7.8h0m.1 2.8h0m.1 7.9h0m.1-8.5h0m.1-1.2h0m0 6.1h0m.1-9h0m.1 14.4h0m.1-2.9h0m.1-2.8h0m.1 6.1h0m.1-2.5h0m.1-6.5h0m.1-11.9h0m.1 25.6h0m.1-14.8h0m.1 11h0m0-16.8h0m.1 2.3h0m.1 4.8h0m.1-.5h0m.1-10.4h0m.1 3.2h0m.1-.8h0m.1 8.2h0m.1 3.7h0m.1-3.8h0m.1-6h0m.1.5h0m0-6.1h0m.1 11.8h0m.1-3.9h0m.1-.6h0m.1-2.2h0m.1 11.7h0m.1-8.8h0m.1 1.8h0m.1-9.6h0m.1-11h0m.1 5.3h0m.1 3.4h0m0 6.1h0m.1-7.1h0m.1.2h0m.1.1h0m.1 5.6h0m.1 6.7h0m.1-15h0m.1 16.4h0m.1-14.6h0m.1-.1h0m.1 3.8h0m.1.4h0m0 3.8h0m.1.3h0m.1-3.9h0m.1 4.7h0m.1 3.6h0m.1-.2h0m.1-7.5h0m.1-2h0m.1 2.1h0m.1 2.9h0m.1 3.4h0m.1-1.8h0m0 0h0m.1 5h0m.1-3.2h0m.1-1.4h0m.1-5.7h0m.1 8.4h0m.1 1.2h0m.1-19.8h0m.1-.7h0m.1 21.8h0m.1-12.3h0m.1 13.6h0m.1 3.7h0m0-8.2h0m.1-3.4h0m.1-4.7h0m.1 14.4h0m.1-8.7h0m.1 6.1h0m.1 1h0m.1-4.8h0m.1-2.6h0m.1 2.7h0m.1 3.9h0m.1-10.1h0m0 7.6h0m.1-.3h0m.1 10h0m.1 1.9h0m.1.6h0m.1-9.1h0m.1 1.4h0m.1-8h0m.1 8.9h0m.1-9.4h0m.1-2.7h0m.1 9.9h0m0-2.3h0m.1 2h0m.1-12h0m.1 15.7h0m.1-5h0m.1-9.9h0m.1 3.6h0m.1-6.6h0m.1 18.1h0m.1-4.3h0m.1-6h0m.1 7.1h0m0-4.7h0m.1 9.4h0m.1-.7h0m.1-10.3h0m.1-3.8h0m.1-2.5h0m.1 3.5h0m.1 6.3h0m.1-11.6h0m.1 15.7h0m.1-12.1h0m.1 16.7h0m0-12.4h0m.1-3.9h0m.1 4.5h0m.1.2h0m.1-4.9h0m.1 6.1h0m.1-12.3h0m.1 13.4h0m.1-3.5h0m.1-7.1h0m.1-4.5h0m.1 5.4h0m0-6.3h0m.1 7.1h0m.1-.1h0m.1 1.8h0m.1 2.4h0m.1.8h0m.1-3.8h0m.1-4.2h0m.1.1h0m.1-4.9h0m.1 4h0m.1 9.8h0m.1-.4h0m0-3.2h0m.1 3.8h0m.1 1.8h0m.1-8.1h0m.1 3.5h0m.1-6.6h0m.1 2.3h0m.1-3.1h0m.1 3.5h0m.1-4.3h0m.1 8.3h0m.1.9h0m0-5.7h0m.1 12.1h0m.1-1.6h0m.1-15h0m.1 8.4h0m.1-5.4h0m.1 16.7h0m.1-8.8h0m.1 4.7h0m.1-6.6h0m.1 1.2h0m.1 1.1h0m0-1.8h0m.1-5.6h0m.1 1.1h0m.1 6.2h0m.1-1.1h0m.1-5.1h0m.1 10.8h0m.1-4.4h0m.1 8.2h0m.1 1.1h0m.1.6h0m.1-6.5h0m0-7.6h0m.1 5.5h0m.1 7.2h0m.1-10.1h0m.1 8.6h0m.1-12.3h0m.1 18.2h0m.1-.5h0m.1-9.6h0m.1-7h0m.1 5.6h0m.1 2.7h0m0 5.4h0m.1-3.1h0m.1-5.6h0m.1 5.2h0m.1.8h0m.1 6.1h0m.1-13.1h0m.1 3.2h0m.1 4h0m.1.1h0m.1-10.2h0m.1 1.9h0m0 8.8h0m.1-.9h0m.1 4h0m.1-6.8h0m.1 4.1h0m.1-5.2h0m.1 0h0m.1 7.8h0m.1 1.9h0m.1-2.8h0m.1-1.3h0m.1-2.7h0m0 6.9h0m.1-3.7h0m.1-10.5h0m.1 8.9h0m.1 1.4h0m.1-11.9h0m.1 14h0m.1 2.8h0m.1-15.1h0m.1-6.1h0m.1 15.6h0m.1-8.7h0m.1 15.1h0m0-14.5h0m.1 2.4h0m.1 8.1h0m.1 6h0m.1-14.5h0m.1 5.3h0m.1-11.7h0m.1 1.4h0m.1 7h0m.1.4h0m.1 2.4h0m.1-1.9h0m0 5.9h0m.1-4.5h0m.1-13.9h0m.1 12.6h0m.1-18.6h0m.1 20.2h0m.1-4.1h0m.1-6.6h0m.1 12.9h0m.1-4h0m.1-4.5h0m.1 4.4h0m0-1.2h0m.1-2.8h0m.1-5.9h0m.1 3.7h0m.1 7h0m.1-1.9h0m.1-2.3h0m.1-6.9h0m.1-2.3h0m.1 11.1h0m.1 3.8h0m.1-10.2h0m0 7.4h0m.1-9.8h0m.1 5.9h0m.1.2h0m.1-7.5h0m.1 11.2h0m.1-3.8h0m.1-1.2h0m.1-15.6h0m.1 12h0m.1-.4h0m.1-10.5h0m0 7.1h0m.1-8.8h0m.1 6.1h0m.1-.5h0m.1 10.1h0m.1-8.4h0m.1 11.3h0m.1-1.1h0m.1-12h0m.1 19.4h0m.1-17.1h0m.1 10.5h0m0-3.5h0m.1-2.6h0m.1-6.6h0m.1 4.5h0m.1-2.6h0m.1-2.1h0m.1 5.1h0m.1 11.4h0m.1-18h0m.1 13.6h0m.1-4.3h0m.1-5.6h0m.1 14.7h0m0-15.1h0m.1-1.8h0m.1 13.5h0m.1 4.1h0m.1-11.8h0m.1.2h0m.1.1h0m.1 6.6h0m.1-12h0m.1 1.8h0m.1 2.2h0m.1 6.2h0m0 7.2h0m.1-11.7h0m.1 12.1h0m.1-17.3h0m.1 13.9h0m.1-2.7h0m.1 6h0m.1-5.5h0m.1-4.9h0m.1 2.1h0m.1 9.7h0m.1-2.7h0m0-7.7h0m.1.9h0m.1-3h0m.1-.7h0m.1 9.1h0m.1-4.3h0m.1-11.3h0m.1 11.2h0m.1-7.5h0m.1 5.4h0m.1 1.3h0m.1-5.5h0m0 6.5h0m.1 2h0m.1-8.5h0m.1 5.1h0m.1-4.8h0m.1 10.4h0m.1-12.7h0m.1 3h0m.1 2.5h0m.1-7.7h0m.1 3.2h0m.1 2.2h0m0-6.3h0m.1-4.3h0m.1 9h0m.1 3.8h0m.1 1.4h0m.1 8.3h0m.1-11.8h0m.1 2.4h0m.1-.1h0m.1-8.4h0m.1-4.4h0m.1 16.5h0m0-17.2h0m.1 14.5h0m.1-5.4h0m.1 4.1h0m.1 6.8h0m.1-9.6h0m.1 1.1h0m.1 6.5h0m.1-3.8h0m.1 4.2h0m.1-14.5h0m.1 20.2h0m0-6.7h0m.1-8.3h0m.1 9.9h0m.1-6.7h0m.1 1.5h0m.1 6.1h0m.1.3h0m.1-5.6h0m.1 3.8h0m.1-8.5h0m.1 12.2h0m.1-6.3h0m.1 10.1h0m0-22.4h0m.1 9.3h0m.1 1.9h0m.1 7.5h0m.1 0h0m.1-.6h0m.1-.8h0m.1-12.5h0m.1 24.3h0m.1-16h0m.1-4.1h0m.1 2.6h0m0 7.8h0m.1 3.3h0m.1-18h0m.1 15.3h0m.1-11h0m.1 11.1h0m.1-12h0m.1-5.5h0m.1 14.4h0m.1 3.1h0m.1-9.1h0m.1 4.1h0m0-3.6h0m.1 14.1h0m.1-18h0m.1.6h0m.1 4.6h0m.1 6.6h0m.1-11.1h0m.1 2.8h0m.1-.7h0m.1 6.4h0m.1-2.9h0m.1-4.2h0m0 7.1h0m.1-5.4h0m.1-3.8h0m.1 2.4h0m.1 10.2h0m.1-19.5h0m.1 4.5h0m.1 18.1h0m.1-2h0m.1-11.2h0m.1 1.1h0m.1 1.9h0m0 1.1h0m.1 13.2h0m.1-12.1h0m.1-9.4h0m.1 10.2h0m.1-1.1h0m.1.5h0m.1 4.3h0m.1-9.9h0m.1-1h0m.1 6.6h0m.1 6.2h0m0-4.3h0m.1 1.1h0m.1-5.1h0m.1-.5h0m.1 9.4h0m.1-1.8h0m.1-4.5h0m.1-4.8h0m.1 10.2h0m.1-.3h0m.1 6h0m.1-.1h0m.1-3.8h0m0-5.3h0m.1-7.9h0m.1 7.9h0m.1 2h0m.1 5.4h0m.1-.3h0m.1.9h0m.1 8.3h0m.1-20.1h0m.1 10.7h0m.1-11.7h0m.1 10.8h0m0-4h0m.1 1.9h0m.1 4.2h0m.1-7.9h0m.1 11h0m.1-11.6h0m.1-.4h0m.1 2.4h0m.1-.4h0m.1-15.1h0m.1 19.9h0m.1-13.9h0m0-3.1h0m.1-1.6h0m.1 5.4h0m.1 8.4h0m.1.3h0m.1 4.7h0m.1-.5h0m.1-13.3h0m.1 16h0m.1-18.3h0m.1 8.3h0m.1 1.1h0m0-9h0m.1 1.9h0m.1 7.8h0m.1-13h0m.1 10.4h0m.1 2.9h0m.1-17.6h0m.1 13.1h0m.1-.1h0m.1 3.2h0m.1-5.9h0m.1.1h0m0 1.4h0m.1-5.3h0m.1-.2h0m.1-3.2h0m.1-.1h0m.1 5.4h0m.1-3.7h0m.1 11.2h0m.1-14.5h0m.1 11.1h0m.1-5.3h0m.1 9.2h0m0-4.7h0m.1-5.3h0m.1 4.6h0m.1-13.9h0m.1 8.7h0m.1.6h0m.1-11h0m.1 20.9h0m.1-11.3h0m.1 16.3h0m.1 1.7h0m.1-16.1h0m.1 11.9h0m0-.6h0m.1-9.7h0m.1 2.7h0m.1 4.9h0m.1-1.4h0m.1-12.9h0m.1 13.1h0m.1.3h0m.1 5.7h0m.1-3.1h0m.1-8.1h0m.1 4h0m0-8.6h0m.1 13.8h0m.1-.9h0m.1-17.5h0m.1 5.7h0m.1 13.7h0m.1 7h0m.1-7.2h0m.1-5.2h0m.1 8h0m.1-2.5h0m.1 1.4h0m0-16.7h0m.1 7.5h0m.1-11.2h0m.1 23.8h0m.1-3.1h0m.1-2.9h0m.1-9.9h0m.1 6h0m.1-3.1h0m.1 6.4h0m.1-3.3h0m.1-9.9h0m0 21.4h0m.1-7.8h0m.1-9.3h0m.1 6.2h0m.1-4h0m.1-5.1h0m.1 5.3h0m.1-2.8h0m.1 8.6h0m.1-2.8h0m.1 6.9h0m.1-5.9h0m0-4.3h0m.1 7.8h0m.1-7.5h0m.1-5.1h0m.1-3.8h0m.1 14.5h0m.1-4.3h0m.1-1.4h0m.1-4.7h0m.1 6.1h0m.1 6.5h0m.1 3.2h0m0-9.1h0m.1-2.8h0m.1 12h0m.1-13.7h0m.1 1.2h0m.1 10.1h0m.1-10.8h0m.1-1.6h0m.1 4.8h0m.1 6.4h0m.1-3.9h0m.1-3.3h0m0 10.7h0m.1-4.1h0m.1-5.6h0m.1-6.6h0m.1 16.7h0m.1-11.1h0m.1 3.1h0m.1-13.1h0m.1 8.3h0m.1-2.5h0m.1 8.9h0m.1-2.6h0m.1 6.9h0m0-8.6h0m.1-10h0m.1 10.1h0m.1 6.3h0m.1-8.5h0m.1 3h0m.1-2.1h0m.1-4.7h0m.1 11.7h0m.1-9.3h0m.1 11.5h0m.1-8.9h0m0-5.7h0m.1 5.5h0m.1 4.5h0m.1-5.6h0m.1-1.9h0m.1-5.1h0m.1 11.7h0m.1-5.9h0m.1 10.5h0m.1-8.9h0m.1.9h0m.1-2.2h0m0-5.8h0m.1 12.1h0m.1.1h0m.1-10.9h0m.1 7.9h0m.1 12.5h0m.1-8.8h0m.1.8h0m.1 3.5h0m.1-8.3h0m.1 2.5h0m.1 4.5h0m0-3.2h0m.1-.4h0m.1-14.4h0m.1 20.5h0m.1-19.9h0m.1 17.8h0m.1-6.3h0m.1-1h0m.1 4.3h0m.1-3.1h0m.1-8.6h0m.1 5.5h0m0 5.7h0m.1.2h0m.1-13.9h0m.1 15.6h0m.1-9.6h0m.1 10h0m.1-7.7h0m.1-11.8h0m.1 17.8h0m.1 1.9h0m.1-11.4h0m.1 5.8h0m0-1.6h0m.1 2.5h0m.1 2h0m.1 6h0m.1-6.5h0m.1 7.6h0m.1-10.9h0m.1-8.3h0m.1-2.7h0m.1 14.5h0m.1 11.7h0m.1-11.1h0m.1 2.7h0m0-19.6h0m.1 30.4h0m.1-9.3h0m.1-14.1h0m.1 3.3h0m.1 7.2h0m.1-5.2h0m.1 10.5h0m.1-8.8h0m.1-.5h0m.1-.7h0m.1 1.8h0m0 .7h0m.1.6h0m.1-3.2h0m.1 6.8h0m.1-13.9h0m.1.6h0m.1 3.2h0m.1 7.3h0m.1-11h0m.1 7.7h0m.1 2h0m.1 1h0m0-10.4h0m.1-7.9h0m.1.3h0m.1 12.5h0m.1 2.4h0m.1-13.5h0m.1 14.5h0m.1-11.4h0m.1 7.3h0m.1 3.4h0m.1-11.6h0m.1 3.2h0m0-4.6h0m.1 14.7h0m.1-14.6h0m.1 11.3h0m.1-11.9h0m.1 16.8h0m.1-10.7h0m.1.5h0m.1 3.5h0m.1-13.1h0m.1 5.2h0m.1 3.9h0m0-4.3h0m.1 11.9h0m.1-4.7h0m.1-.1h0m.1-10.6h0m.1 17.6h0m.1-10.1h0m.1-3.8h0m.1-1.4h0m.1 2.9h0m.1.4h0m.1 10.4h0m0-8.4h0m.1 5.1h0m.1 6.7h0m.1-3.7h0m.1-17.8h0m.1 27h0m.1-15h0m.1 8.7h0m.1-12.4h0m.1 6.7h0m.1-6.4h0m.1 11.5h0m.1-12.7h0m0 4.5h0m.1-1.8h0m.1-3.6h0m.1 2.6h0m.1 11.3h0m.1-5.4h0m.1 3.9h0m.1-.7h0m.1-1.1h0m.1-5.4h0m.1 10.4h0m.1-5.9h0m0 6.9h0m.1 1.6h0m.1-2.5h0m.1-4.5h0m.1-4.3h0m.1 5.5h0m.1-11.5h0m.1 4.7h0m.1 8.3h0m.1-3.5h0m.1-1.6h0m.1-5.9h0m0 2.4h0m.1 5.6h0m.1-1.8h0m.1-5.1h0m.1-.5h0m.1 12.4h0m.1-15.5h0m.1 11h0m.1 7.6h0m.1-12.1h0m.1 0h0m.1-6.9h0m0 12.6h0m.1-5.3h0m.1-2.3h0m.1-1.7h0m.1-5.9h0m.1 7.5h0m.1-1.2h0m.1-4.1h0m.1-2h0m.1-3.2h0m.1 13.1h0m.1-10.9h0m0 5.1h0m.1 7.4h0m.1 5.3h0m.1 2.3h0m.1-5.6h0m.1-9.7h0m.1 2.2h0m.1-.7h0m.1 2.4h0m.1 10h0m.1-10.3h0m.1 11.5h0m0-1.6h0m.1-8.6h0m.1-4.6h0m.1-8h0m.1 12.8h0m.1-8.4h0m.1.2h0m.1-1.7h0m.1 10.1h0m.1-11.4h0m.1 10.5h0m.1 13.4h0m0-13.2h0m.1 1.4h0m.1 1.7h0m.1 7.3h0m.1-.6h0m.1-13.9h0m.1 4.3h0m.1 3h0m.1-3.4h0m.1-.6h0m.1 1h0m.1 3.9h0m.1-1.8h0m0-5.1h0m.1 3h0m.1 2h0m.1.5h0m.1-15.7h0m.1 18.1h0m.1-6.4h0m.1-9h0m.1 13.5h0m.1.4h0m.1 4.1h0m.1-16.6h0m0 1.3h0m.1 10h0m.1-2.9h0m.1 14.4h0m.1-3.2h0m.1-11.7h0m.1 5h0m.1 4.7h0m.1-7.2h0m.1-.6h0m.1-.9h0m.1-3.9h0m0 17h0m.1-13.3h0" stroke="#000" stroke-width="3.7" stroke-linecap="round" fill="none"/>
<path d="M165.5 89.2h0m3.1-.5h0m-1.9 3.3h0m16.6-2.8h0m0 2.6h0m15.3-1.5h0m0 .4h0m4.7-.8h0m22.2 1.1h0m5.9 1.3h0m46-.9h0m160.9-6.1h0m47.2.8h0m-37.2 6.2h0m-236.9 41.4h0m36.9 1.5h0m14.1-1.2h0m3.1 2.1h0m98.8-2.5h0m85.2.7h0m6 0h0m26.9 1.8h0m-286 12.3h0m316.7-57.6h0m4-.9h0m1.5-.5h0m-5.3 2.9h0m4.1 0h0m17.1-1.3h0m217.9-1.8h0m15.9-.9h0m0 3.4h0m32.9-4.9h0m2.4 1.2h0m-1.7 4.1h0m-205.5 44.3h0m19.1-2.5h0m30 2.2h0m48.8-1.5h0m50.9-.7h0m36 1h0m-213.8 15.6h0m292.1-58.2h0m7.9-2.1h0m1.2 1.2h0m73.8-1h0m33.1-.2h0m18.8-1.3h0m29 1.6h0m0 1.2h0m15.3.9h0m15.7-7.7h0m0 5.8h0m18.3 1.9h0m10.7-2.8h0m1.5-1.5h0m3.5-.6h0m-.9 4.4h0m40-.4h0m-261.2 44.7h0m44-2.2h0m2.2.8h0m-19.1 5.7h0m46.9-.3h0m326.1-54.2h0m24-.3h0m0 1.1h0m-16 2.2h0m16 1.2h0m-56 .1h0m4.1 1.4h0m-11.9.4h0m-553.7 115.2h0m150.9 53.4h0m160.4-102.7h0m46.6 114.7h0m92.4-99.9h0" stroke="#ffa500" stroke-width="3.7" stroke-linecap="round" fill="none"/>
<path d="M162 321.5V35.5" stroke="#800080" stroke-width="2.083" stroke-dasharray="2.083 3.4375" fill="none"/>
<path d="M1303 321.5V35.5" stroke="#800080" stroke-width="2.083" stroke-dasharray="2.083 3.4375" fill="none"/>
</g>
<text x="732.7" y="312" text-anchor="middle">4533</text>
<rect x="105.5" y="35.5" width="1380.0" height="286.0" fill="none" stroke="#000" stroke-width="1.111"/>
<path d="M162.5 321.5v4.86" stroke="#000" stroke-width="1.111"/>
<text x="161.80" y="341.8" text-anchor="middle">0</text>
<path d="M341.5 321.5v4.86" stroke="#000" stroke-width="1.111"/>
<text x="340.87" y="341.8" text-anchor="middle">2000</text>
<path d="M520.5 321.5v4.86" stroke="#000" stroke-width="1.111"/>
<text x="519.94" y="341.8" text-anchor="middle">4000</text>
<path d="M699.5 321.5v4.86" stroke="#000" stroke-width="1.111"/>
<text x="699.02" y="341.8" text-anchor="middle">6000</text>
<path d="M878.5 321.5v4.86" stroke="#000" stroke-width="1.111"/>
<text x="878.09" y="341.8" text-anchor="middle">8000</text>
<path d="M1057.5 321.5v4.86" stroke="#000" stroke-width="1.111"/>
<text x="1057.16" y="341.8" text-anchor="middle">10000</text>
<path d="M1236.5 321.5v4.86" stroke="#000" stroke-width="1.111"/>
<text x="1236.23" y="341.8" text-anchor="middle">12000</text>
<path d="M1415.5 321.5v4.86" stroke="#000" stroke-width="1.111"/>
<text x="1415.30" y="341.8" text-anchor="middle">14000</text>
<path d="M105.5 319.5h-4.86" stroke="#000" stroke-width="1.111"/>
<text x="95.2" y="324.0" text-anchor="end">7.22</text>
<path d="M105.5 286.5h-4.86" stroke="#000" stroke-width="1.111"/>
<text x="95.2" y="291.0" text-anchor="end">7.24</text>
<path d="M105.5 253.5h-4.86" stroke="#000" stroke-width="1.111"/>
<text x="95.2" y="258.0" text-anchor="end">7.26</text>
<path d="M105.5 220.5h-4.86" stroke="#000" stroke-width="1.111"/>
<text x="95.2" y="225.0" text-anchor="end">7.28</text>
<path d="M105.5 187.5h-4.86" stroke="#000" stroke-width="1.111"/>
<text x="95.2" y="192.0" text-anchor="end">7.30</text>
<path d="M105.5 154.5h-4.86" stroke="#000" stroke-width="1.111"/>
<text x="95.2" y="159.0" text-anchor="end">7.32</text>
<path d="M105.5 122.5h-4.86" stroke="#000" stroke-width="1.111"/>
<text x="95.2" y="127.0" text-anchor="end">7.34</text>
<path d="M105.5 89.5h-4.86" stroke="#000" stroke-width="1.111"/>
<text x="95.2" y="94.0" text-anchor="end">7.36</text>
<path d="M105.5 56.5h-4.86" stroke="#000" stroke-width="1.111"/>
<text x="95.2" y="61.0" text-anchor="end">7.38</text>
<text x="794.7" y="26.8" text-anchor="middle" font-size="16.667">AGASC ID 966659496.0</text>
<rect x="1361.3" y="42.5" width="117.3" height="27.2" rx="2.8" fill="#fff" fill-opacity="0.8" stroke="#ccc" stroke-opacity="0.8" stroke-width="1.389"/>
<path d="M1366.9 53.9h27.8" stroke="#008000" stroke-width="2.083" stroke-linecap="square"/>
<text x="1406.9" y="58.8">mag<tspan font-size="10.05" font-style="italic" dy="2.3">AGASC</tspan></text>
<rect x="1348.3" y="247.3" width="130.3" height="67.5" rx="2.8" fill="#fff" fill-opacity="0.8" stroke="#ccc" stroke-opacity="0.8" stroke-width="1.389"/>
<circle cx="1367.4" cy="260.6" r="1.85" fill="#f00"/>
<text x="1392.0" y="264.0">not OK</text>
<circle cx="1367.4" cy="281.5" r="1.85" fill="#ffa500"/>
<text x="1392.7" y="284.9">Highlighted</text>
<circle cx="1367.4" cy="302.5" r="1.85" fill="#000"/>
<text x="1393.0" y="305.9">OK</text>
<g clip-path="url(#c1)">
<path d="M162.3 553.6h0m.1-36.9h0m.1-.7h0m.1-14.7h0m.1 5.1h0m0 1.8h0m.1 12.9h0m.1 5.6h0m.1-59.5h0m.1 58.4h0m.1-30.3h0m.1 27.2h0m.1-26.9h0m.1 23.1h0m.1-19.1h0m.1 3.1h0m.1 16.1h0m0 14.6h0m.1 9.3h0m.1 10.4h0m.1-52h0m.1-6.7h0m.1 32.1h0m.1-46.3h0m.1 34.9h0m.1-19.8h0m.1 35.9h0m.1 3.8h0m.1 2.1h0m.1-18.6h0m0-3.9h0m.1 7.1h0m.1 32.2h0m.1 13.3h0m.1-57h0m.1 37.8h0m.1-1h0m.1-16.9h0m.1 16.8h0m.1 8.5h0m.1-22.7h0m.1 2.5h0m0-51.9h0m.1 74h0m.1-46.9h0m.1 33.4h0m.1-28h0m.1 46.8h0m.1-20h0m.1-23.4h0m.1 1.8h0m.1-22.5h0m.1 45.1h0m.1-4.3h0m0 3.1h0m.1 27.8h0m.1-14.3h0m.1-14.4h0m.1 2h0m.1-21.1h0m.1 22.9h0m.1-10.6h0m.1-7.8h0m.1 7.3h0m.1-9.9h0m.1 20.3h0m0-7.2h0m.1-22.1h0m.1-28.7h0m.1 32.6h0m.1 1.3h0m.1-6.4h0m.1 1h0m.1 10.6h0m.1-21h0m.1 65.5h0m.1-72.4h0m.1 36.7h0m0 8.4h0m.1-57h0m.1 3.9h0m.1 13.8h0m.1 56.1h0m.1-9h0m.1-15.1h0m.1-.6h0m.1 9.5h0m.1-44.5h0m.1 3.6h0m.1 24.1h0m0 8.4h0m.1-51.7h0m.1 20.9h0m.1-.1h0m.1 13.9h0m.1-36.7h0m.1 26.8h0m.1 2.4h0m.1-19.3h0m.1 45.4h0m.1-40h0m.1-19.9h0m.1 16h0m0-3.2h0m.1 15.7h0m.1-16.8h0m.1 24h0m.1-16.5h0m.1 15.3h0m.1-10.7h0m.1-26.6h0m.1 17.1h0m.1 14.7h0m.1-16.8h0m.1 36.4h0m0-34.8h0m.1 18.3h0m.1-11.8h0m.1-31h0m.1 46.2h0m.1-23.9h0m.1 11.5h0m.1 6.7h0m.1.9h0m.1-5.3h0m.1-20h0m.1 22h0m0 18.5h0m.1-40.9h0m.1 19h0m.1-3.3h0m.1 40.5h0m.1-5.7h0m.1-61.4h0m.1 32.6h0m.1-28.3h0m.1 65h0m.1-19.7h0m.1 22.5h0m0-11.4h0m.1-9h0m.1-10.2h0m.1 20.8h0m.1-29.2h0m.1 20.8h0m.1-30.2h0m.1 16.1h0m.1-13.6h0m.1 39.1h0m.1-39.9h0m.1 21h0m0 1.2h0m.1 3.7h0m.1-43.8h0m.1 46.3h0m.1 10h0m.1-52h0m.1 41.4h0m.1-11.1h0m.1 4.7h0m.1-2h0m.1 15.4h0m.1-4.1h0m0-9.8h0m.1-12.3h0m.1 39.4h0m.1-30.5h0m.1-4.2h0m.1-51.8h0m.1 44.1h0m.1 14.7h0m.1 21.8h0m.1-36h0m.1 40.9h0m.1-16.7h0m.1-12.8h0m0-16.7h0m.1-31.9h0m.1 36.2h0m.1-45.8h0m.1 19.4h0m.1 40h0m.1-25.1h0m.1 29.9h0m.1-25.7h0m.1-11.3h0m.1 16.2h0m.1 52.6h0m0-42.6h0m.1-34.4h0m.1-1.1h0m.1 13.4h0m.1 12.3h0m.1-14.6h0m.1 2.9h0m.1-24.2h0m.1 47.4h0m.1-2.4h0m.1-21.8h0m.1 29.3h0m0-12.1h0m.1 22.8h0m.1-22.5h0m.1 17.7h0m.1-8.8h0m.1-39h0m.1 36.2h0m.1-33.2h0m.1 23h0m.1-7.6h0m.1-1.5h0m.1 39.2h0m0 12.7h0m.1-21.4h0m.1 13.2h0m.1-34.7h0m.1 34.8h0m.1-24.1h0m.1 36.2h0m.1-.6h0m.1-7.1h0m.1-25.2h0m.1 68.2h0m.1-53.3h0m0 4.7h0m.1-25.7h0m.1-10h0m.1 29.4h0m.1-18.2h0m.1 25.3h0m.1-40h0m.1 24.9h0m.1-17.2h0m.1 26.8h0m.1-58.1h0m.1 39.3h0m0 31.3h0m.1-25.8h0m.1-21h0m.1 32.1h0m.1-26.2h0m.1 13.3h0m.1-16.4h0m.1 44.5h0m.1-26.7h0m.1-19.7h0m.1-5.7h0m.1 31.7h0m0-57.3h0m.1 51.2h0m.1 6.2h0m.1-55h0m.1 59.5h0m.1 0h0m.1-17.3h0m.1 16.1h0m.1-46.7h0m.1 58.5h0m.1-65.9h0m.1 27.5h0m.1-14.7h0m0 10.9h0m.1 17.4h0m.1-19.9h0m.1 45.7h0m.1-29.7h0m.1 6.6h0m.1-23.8h0m.1 35.3h0m.1-58.8h0m.1 46.1h0m.1-5.1h0m.1 21.8h0m0-16.4h0m.1-28.3h0m.1 30.1h0m.1-30.5h0m.1 34.9h0m.1 17.1h0m.1-.6h0m.1-23.1h0m.1 20.3h0m.1-12.9h0m.1 8.9h0m.1 33.4h0m0-15.3h0m.1 8.2h0m.1-21.6h0m.1 26.6h0m.1-43.8h0m.1 2.6h0m.1 33.1h0m.1-37h0m.1 3.9h0m.1 50.2h0m.1-1.8h0m.1-3.8h0m0-14h0m.1-9.4h0m.1 14h0m.1-15.9h0m.1-12.5h0m.1-3.8h0m.1 1.3h0m.1 46.7h0m.1-19.8h0m.1 4.2h0m.1 24.4h0m.1-57.6h0m0-15.7h0m.1 45.2h0m.1 5.9h0m.1-19.2h0m.1 14.9h0m.1-17.2h0m.1-2.8h0m.1 1.6h0m.1 18.1h0m.1 3.2h0m.1-4.8h0m.1-22.3h0m0 16.2h0m.1-5.2h0m.1 21.8h0m.1-31.7h0m.1-39.1h0m.1 46.1h0m.1-13.9h0m.1 43h0m.1-23.2h0m.1-43.1h0m.1 62.6h0m.1-48.6h0m.1-11h0m0 34.3h0m.1-9.8h0m.1 3.8h0m.1-11.7h0m.1 1.8h0m.1-10.4h0m.1 18.8h0m.1 8.1h0m.1-44h0m.1 25.2h0m.1-35.3h0m.1 61h0m0-52.4h0m.1 22.1h0m.1-6h0m.1 24h0m.1-19.3h0m.1-12.4h0m.1 13.9h0m.1 10.1h0m.1-23.1h0m.1 17.3h0m.1-23h0m.1 22.6h0m0 .6h0m.1-26.7h0m.1-12.3h0m.1 59h0m.1-35.6h0m.1 17.1h0m.1-4.2h0m.1 42.6h0m.1-55.2h0m.1 16.3h0m.1-2.7h0m.1-4h0m0 17.3h0m.1-2.2h0m.1-50.4h0m.1 54.3h0m.1-17.3h0m.1-28.3h0m.1 15h0m.1 22.7h0m.1-3.6h0m.1-13.5h0m.1-7.2h0m.1 4.9h0m0 22.4h0m.1-35.6h0m.1 61.7h0m.1-10.6h0m.1-32.8h0m.1 17.2h0m.1-30.7h0m.1-3.2h0m.1 39.7h0m.1-5.6h0m.1-16.3h0m.1 27.1h0m0-11.3h0m.1 31.5h0m.1-15.1h0m.1 1h0m.1-29.3h0m.1 31.4h0m.1.4h0m.1-14.9h0m.1-4.6h0m.1 26.2h0m.1 1.5h0m.1-30.6h0m0 11.8h0m.1-17.5h0m.1-10.4h0m.1 10.3h0m.1 2h0m.1 24.8h0m.1-16.8h0m.1.4h0m.1 19.5h0m.1 3.7h0m.1-19.4h0m.1 8h0m.1-8.6h0m0 .7h0m.1 26.4h0m.1-17.9h0m.1-18.3h0m.1-.7h0m.1 35.3h0m.1-57.5h0m.1 27.3h0m.1 54.4h0m.1-21.3h0m.1-8.4h0m.1 8.2h0m0-30.6h0m.1 5.8h0m.1 12.6h0m.1-40.4h0m.1 38.2h0m.1-54.8h0m.1 46.6h0m.1 12.8h0m.1.8h0m.1-16.1h0m.1-13.8h0m.1-22.2h0m0 11.7h0m.1 23.7h0m.1 2.3h0m.1-14.4h0m.1-4.8h0m.1 19.6h0m.1-2h0m.1-30.5h0m.1 38.6h0m.1-46h0m.1 26.9h0m.1-12.3h0m0-6.7h0m.1 4h0m.1 34.8h0m.1-43.8h0m.1 19.8h0m.1 19.7h0m.1-21.7h0m.1 2.8h0m.1-30.3h0m.1 52.3h0m.1-8.7h0m.1-15.1h0m0 3.9h0m.1 19.5h0m.1-35.4h0m.1 14.1h0m.1-17.1h0m.1 12.1h0m.1-18.8h0m.1 47.3h0m.1-14.4h0m.1-28.4h0m.1 39.1h0m.1-5.3h0m0-25.2h0m.1 11.1h0m.1-11.3h0m.1-35.3h0m.1 19.5h0m.1 33.9h0m.1 3.4h0m.1 25.8h0m.1-84.2h0m.1 58.7h0m.1-25.4h0m.1 42h0m.1-20.1h0m0 10.4h0m.1 16.4h0m.1-40h0m.1 55.7h0m.1-15.3h0m.1-79.3h0m.1 50.7h0m.1 4.5h0m.1-22.4h0m.1 24.9h0m.1-.3h0m.1-72.1h0m0 52.4h0m.1 20.9h0m.1-9.3h0m.1-11.1h0m.1 10h0m.1 29.1h0m.1-31.7h0m.1 27.6h0m.1-10.5h0m.1-19.3h0m.1 26.8h0m.1-17.9h0m0 6.7h0m.1 13.6h0m.1 2.3h0m.1 34.9h0m.1-15.8h0m.1-14.9h0m.1 22.6h0m.1 8.2h0m.1-63.3h0m.1 39.3h0m.1-70.2h0m.1 83h0m0 6.6h0m.1-63.6h0m.1 50.5h0m.1-33.7h0m.1-.9h0m.1-25.5h0m.1 33.7h0m.1-28h0m.1-17.1h0m.1-10.6h0m.1 56.9h0m.1 20.9h0m0-42.5h0m.1 26h0m.1-35.4h0m.1-15.4h0m.1 11.3h0m.1 14.9h0m.1 3.6h0m.1-45.9h0m.1.6h0m.1 54.2h0m.1-11.4h0m.1-21.5h0m0 20h0m.1-23h0m.1-18.9h0m.1 8h0m.1 16.1h0m.1 2.7h0m.1-4.2h0m.1-23.8h0m.1 12.3h0m.1 25h0m.1-16.5h0m.1 6.6h0m.1 8.8h0m0-40.7h0m.1 65.7h0m.1-8.9h0m.1-24.2h0m.1-37.2h0m.1 30.8h0m.1 2h0m.1-39.8h0m.1 44.9h0m.1 35.2h0m.1-13.7h0m.1-25.4h0m0-14.5h0m.1 52.3h0m.1 2.8h0m.1-21.6h0m.1 35.4h0m.1-45.1h0m.1 3h0m.1 22.1h0m.1-34.8h0m.1 43.4h0m.1-28.5h0m.1-13.9h0m0 13.4h0m.1 41.7h0m.1-18.4h0m.1-22.2h0m.1 16.3h0m.1-1.7h0m.1-3.7h0m.1-20.7h0m.1 24.1h0m.1-37.2h0m.1 57.9h0m.1-27.2h0m0-27.2h0m.1 19.3h0m.1-51.4h0m.1 56.3h0m.1-2.1h0m.1 16.6h0m.1-24.8h0m.1-11.8h0m.1 9.1h0m.1 42.4h0m.1-17h0m.1-30.1h0m0 22.6h0m.1-35.3h0m.1 27.1h0m.1-11.2h0m.1-47.6h0m.1 85.6h0m.1-45.5h0m.1 15.5h0m.1 10.5h0m.1-11.1h0m.1-13.1h0m.1 5.1h0m0-1.1h0m.1 3.8h0m.1 25.2h0m.1-18.7h0m.1 18.2h0m.1-38.7h0m.1 1.3h0m.1.2h0m.1-8.6h0m.1 25.4h0m.1.4h0m.1-2.7h0m0-4.6h0m.1 8.2h0m.1-23.5h0m.1-6.2h0m.1 51.9h0m.1-24h0m.1-17.1h0m.1 1.2h0m.1 3.8h0m.1 1.6h0m.1 22.7h0m.1-50h0m.1 29.2h0m0 37.4h0m.1-53h0m.1 12.7h0m.1 12.8h0m.1-25.6h0m.1 19.9h0m.1-15.5h0m.1 41h0m.1-20.5h0m.1 27.4h0m.1 18.3h0m.1-40.6h0m0-8.9h0m.1-23.3h0m.1 38.9h0m.1 47.2h0m.1-58.5h0m.1 15.8h0m.1 9.5h0m.1 8.9h0m.1-19.9h0m.1-27.6h0m.1 41.1h0m.1-18.1h0m0 4.4h0m.1 15h0m.1-32.7h0m.1-25.1h0m.1-17.7h0m.1 24.4h0m.1 31.9h0m.1 13.5h0m.1-11.5h0m.1 11.9h0m.1-.6h0m.1 24.7h0m0-25.7h0m.1-58.5h0m.1 62.8h0m.1 13.3h0m.1-53.6h0m.1 43.3h0m.1 14.4h0m.1-52.9h0m.1 27.2h0m.1-48.6h0m.1-29.6h0m.1 65.4h0m0-7.7h0m.1.2h0m.1 68.6h0m.1-31h0m.1-.9h0m.1-12.7h0m.1-4.9h0m.1-13.8h0m.1 30.3h0m.1-4.8h0m.1-42.3h0m.1 49.8h0m0-20.7h0m.1-31h0m.1 39h0m.1-26.5h0m.1-3.9h0m.1 24.9h0m.1 16.4h0m.1-6.2h0m.1-36h0m.1.8h0m.1 28.1h0m.1-11.3h0m.1 10.9h0m0-3.4h0m.1 23.4h0m.1-41.5h0m.1-1.4h0m.1 13.5h0m.1-.3h0m.1 27.9h0m.1-22.1h0m.1 11.7h0m.1-26.3h0m.1 26.2h0m.1 4.8h0m0-32.5h0m.1 9.9h0m.1 1.9h0m.1-46.2h0m.1 79.6h0m.1-59.7h0m.1 45.7h0m.1-19.8h0m.1-7h0m.1 7.4h0m.1-7.2h0m.1-46.3h0m0 45.7h0m.1 15.8h0m.1-8.8h0m.1-33.9h0m.1 34.1h0m.1-39.1h0m.1 10.7h0m.1 19h0m.1-7h0m.1 13h0m.1 28.2h0m.1-30.4h0m0 14.3h0m.1.6h0m.1-25.3h0m.1 16.5h0m.1 11.7h0m.1-2.6h0m.1 1.3h0m.1-26.9h0m.1 1.3h0m.1-9.9h0m.1 11.4h0m.1-13.7h0m0 45.7h0m.1-50.6h0m.1 38.4h0m.1-22.3h0m.1-35.4h0m.1 60.8h0m.1-1h0m.1-27.7h0m.1 29.1h0m.1-65.2h0m.1 55.5h0m.1-14.1h0m0-14.7h0m.1 1.6h0m.1 17.6h0m.1-11.9h0m.1-5.1h0m.1 16.7h0m.1-15.4h0m.1-22h0m.1 27.8h0m.1 6.2h0m.1 36.6h0m.1-12.3h0m.1-80.1h0m0 67.3h0m.1-38.4h0m.1 27.9h0m.1 7.9h0m.1 19.2h0m.1-27.6h0m.1 9.6h0m.1-19.2h0m.1 39h0m.1.9h0m.1-13.2h0m.1-23.6h0m0-25.5h0m.1 62.8h0m.1.4h0m.1 28.8h0m.1-65.9h0m.1 36.6h0m.1-22h0m.1 3h0m.1-28.8h0m.1 71.3h0m.1-2.2h0m.1-40.7h0m0 34.8h0m.1.7h0m.1-1.4h0m.1-30h0m.1-17.9h0m.1 14.2h0m.1 29.1h0m.1 3.4h0m.1-6.4h0m.1-14.4h0m.1 13.1h0m.1-24.6h0m0 34.2h0m.1-11.6h0m.1 6.2h0m.1-22.1h0m.1 29.5h0m.1-68.9h0m.1 55.1h0m.1 9.7h0m.1-11.2h0m.1-23.7h0m.1 43.8h0m.1-47.1h0m0 31.6h0m.1 12.6h0m.1-65.5h0m.1.5h0m.1 41h0m.1 13.2h0m.1-32.1h0m.1 25.4h0m.1-6.5h0m.1 6.6h0m.1 13.5h0m.1-19.6h0m0 26.8h0m.1-19.2h0m.1-1.3h0m.1-49.9h0m.1 34.8h0m.1 20.9h0m.1-46.1h0m.1-19.4h0m.1-3.3h0m.1 23.4h0m.1 7h0m.1 2.8h0m0 27.6h0m.1-24.2h0m.1-32.3h0m.1 9.5h0m.1-19h0m.1 50.9h0m.1-32.8h0m.1 5.2h0m.1.1h0m.1-15.1h0m.1-3h0m.1 31.2h0m.1-44.1h0m0 62.5h0m.1-47.6h0m.1 15.2h0m.1 2.7h0m.1 12.9h0m.1-6.4h0m.1-17.8h0m.1-2.8h0m.1 3.9h0m.1 4.9h0m.1-4.6h0m.1 24.4h0m0-23.6h0m.1 2.8h0m.1-22.3h0m.1 52.6h0m.1 4.9h0m.1-4.8h0m.1-5.6h0m.1 4.7h0m.1-6h0m.1-23h0m.1 45.7h0m.1 5.1h0m0-12.8h0m.1 12.1h0m.1 17.3h0m.1-32.9h0m.1 12.6h0m.1 7.1h0m.1 22.7h0m.1-42.7h0m.1-6.1h0m.1 11h0m.1 40.6h0m.1-15.8h0m0-34.7h0m.1 54.4h0m.1-63.9h0m.1.4h0m.1 27.4h0m.1 15.4h0m.1-50.5h0m.1 28.6h0m.1 22.4h0m.1-26.4h0m.1 17h0m.1-41.5h0m0 27.5h0m.1 21.8h0m.1 1h0m.1-10.9h0m.1-3.1h0m.1-35.9h0m.1-4.3h0m.1 33.6h0m.1 20.6h0m.1-67.6h0m.1 41h0m.1 26.1h0m0-32.7h0m.1 18.2h0m.1-18.2h0m.1-15.9h0m.1-2.7h0m.1 15.2h0m.1 13.2h0m.1-23.5h0m.1-16.6h0m.1 9.3h0m.1 20.7h0m.1-19.1h0m.1-24.4h0m0 22.4h0m.1 27.1h0m.1-35.2h0m.1 16.6h0m.1-28.6h0m.1 19.5h0m.1 21.3h0m.1-1.5h0m.1-25.3h0m.1 17.3h0m.1-8h0m.1-22.9h0m0 11.3h0m.1-2.4h0m.1 19.3h0m.1-.2h0m.1-11.3h0m.1 21.6h0m.1-8.2h0m.1 22.8h0m.1-3.7h0m.1-50.8h0m.1 30.9h0m.1 19.4h0m0-44.6h0m.1 30.1h0m.1 20h0m.1-18.2h0m.1-19.9h0m.1 13.4h0m.1 55.5h0m.1-37.7h0m.1 8.3h0m.1-18.9h0m.1-5.7h0m.1 9.4h0m0-21.3h0m.1 48.8h0m.1-15.2h0m.1-17h0m.1 26.8h0m.1-7.3h0m.1 20.5h0m.1-1.9h0m.1-26.4h0m.1-18.8h0m.1 26.5h0m.1-10.6h0m0-23.7h0m.1 16.9h0m.1 30.8h0m.1-23h0m.1 20.3h0m.1-58.8h0m.1 35.8h0m.1 24.2h0m.1 8.4h0m.1-29h0m.1-6.4h0m.1-3.2h0m0 33.6h0m.1-40.1h0m.1 24.2h0m.1-30.7h0m.1 16.3h0m.1 37.1h0m.1-30h0m.1 21.4h0m.1 21.3h0m.1-.4h0m.1-18h0m.1-7.2h0m.1-32.6h0m0 7.9h0m.1 3.6h0m.1 16.3h0m.1-16.3h0m.1-9.2h0m.1 21.7h0m.1-2.2h0m.1 7.5h0m.1-33.1h0m.1 33.1h0m.1-6.4h0m.1-10.6h0m0 18.2h0m.1-9.4h0m.1-10.9h0m.1-25.8h0m.1 13.4h0m.1 33.6h0m.1-65.9h0m.1 31.9h0m.1 11.8h0m.1 24.7h0m.1-15.2h0m.1-19.2h0m0 2.8h0m.1 5.3h0m.1-19h0m.1 37.4h0m.1-20.5h0m.1 3.9h0m.1 31.5h0m.1 4.4h0m.1-88.7h0m.1 29.9h0m.1 5.2h0m.1 35h0m0-33.7h0m.1 17.6h0m.1 23.8h0m.1 4h0m.1-55.7h0m.1 23.3h0m.1 3.4h0m.1-30.4h0m.1 17.4h0m.1 18.3h0m.1-.4h0m.1-22.2h0m0 20.1h0m.1 8.9h0m.1-5.7h0m.1-10.6h0m.1 5.8h0m.1-31.1h0m.1 6.9h0m.1 32h0m.1-11.1h0m.1 5h0m.1-15.4h0m.1 22.8h0m0-27.2h0m.1-31.2h0m.1 25.5h0m.1.3h0m.1 37.2h0m.1-43.9h0m.1 29.3h0m.1-3.6h0m.1 12.1h0m.1-25.3h0m.1 1.5h0m.1-34.2h0m0 66.8h0m.1-21.8h0m.1 15.8h0m.1 0h0m.1-71.7h0m.1 19.6h0m.1 22.4h0m.1 29h0m.1-7.8h0m.1-5.7h0m.1-19.7h0m.1 33.4h0m.1 21.4h0m0-1.5h0m.1-16.6h0m.1-20.2h0m.1-20.1h0m.1 53.8h0m.1-12.2h0m.1-28.2h0m.1 14.2h0m.1 5.5h0m.1-34.6h0m.1 18.7h0m.1 23.2h0m0-8.1h0m.1-.2h0m.1.9h0m.1-81h0m.1 88.4h0m.1-3.5h0m.1 29.8h0m.1-47.8h0m.1-13.9h0m.1 67h0m.1-25.1h0m.1-19.1h0m0-13.1h0m.1 31.6h0m.1-19.2h0m.1-8.8h0m.1-8h0m.1 4.7h0m.1 16.5h0m.1-26.9h0m.1 27.7h0m.1 4.5h0m.1 12.7h0m.1-30.4h0m0-10.8h0m.1 25.3h0m.1-41.4h0m.1 29.6h0m.1-12.2h0m.1 8.2h0m.1-4.5h0m.1 17.9h0m.1-12.9h0m.1-10.7h0m.1 30.6h0m.1 1.7h0m0-55.8h0m.1 30.3h0m.1 9.4h0m.1-61.2h0m.1 28.3h0m.1 33.8h0m.1-39.3h0m.1 17.1h0m.1 22.8h0m.1 11.5h0m.1-24.8h0m.1 11.9h0m0-22.4h0m.1-35.9h0m.1-5.4h0m.1 71.6h0m.1.9h0m.1-25.7h0m.1 5.3h0m.1-12h0m.1-34.8h0m.1 43.6h0m.1 0h0m.1-46.6h0m.1 23.4h0m0 18.6h0m.1 7h0m.1-34h0m.1 56.1h0m.1-68.7h0m.1 60.7h0m.1-52.2h0m.1 44.9h0m.1-35.8h0m.1 10.9h0m.1 33.9h0m.1 10.1h0m0-38.7h0m.1 36.3h0m.1-8.7h0m.1-40.6h0m.1 37h0m.1-1.4h0m.1 17.7h0m.1-37.4h0m.1 34.4h0m.1-2.8h0m.1 3.2h0m.1 22h0m0-21.7h0m.1 5.1h0m.1-7.4h0m.1-11.7h0m.1 18.9h0m.1 8.2h0m.1-5.3h0m.1-17.5h0m.1-10.4h0m.1.4h0m.1-28.7h0m.1 21.3h0m0 29.7h0m.1 9.3h0m.1-5.4h0m.1-29.1h0m.1 18.2h0m.1-13.9h0m.1 13.4h0m.1-27.4h0m.1 51.1h0m.1 4.6h0m.1-25.2h0m.1 6.7h0m0-10.5h0m.1-13h0m.1.9h0m.1-16.2h0m.1 11.9h0m.1 14h0m.1-14.4h0m.1-18.6h0m.1-25.5h0m.1 56.5h0m.1-3h0m.1-26.2h0m0 21.8h0m.1 15.3h0m.1-9h0m.1-25.7h0m.1 37.9h0m.1-14.4h0m.1-8.6h0m.1.6h0m.1 13.6h0m.1 12.9h0m.1-17.8h0m.1-11.5h0m0 19.7h0m.1-15.3h0m.1 24.1h0m.1-4.5h0m.1-59.8h0m.1 39.7h0m.1 16.4h0m.1 3.7h0m.1 32.1h0m.1-75.4h0m.1-15.9h0m.1 70.6h0m.1-17h0m0 38.9h0m.1-30.4h0m.1 1.8h0m.1 21.8h0m.1-26.7h0m.1 29.7h0m.1-23.7h0m.1-27.3h0m.1 25.2h0m.1-1.3h0m.1-4.8h0m.1 8.5h0m0 13.4h0m.1 11.1h0m.1-24.3h0m.1-16.6h0m.1 26h0m.1-24.7h0m.1-33h0m.1 43.5h0m.1-4.9h0m.1 32.4h0m.1 2.3h0m.1-38.4h0m0 28.9h0m.1 23.2h0m.1-78.1h0m.1 27.3h0m.1.2h0m.1-27.8h0m.1 68.3h0m.1-18.4h0m.1-43.6h0m.1 19.8h0m.1-9.8h0m.1 39h0m0-29.7h0m.1 42.5h0m.1-75.5h0m.1 33.6h0m.1-2.9h0m.1-1.1h0m.1 9.4h0m.1-11.5h0m.1 13.5h0m.1-44.8h0m.1-21.4h0m.1 38.9h0m0 8.9h0m.1-1.3h0m.1 3h0m.1-6.3h0m.1-50.9h0m.1 46.4h0m.1-27.6h0m.1 26.1h0m.1 17.5h0m.1-19.8h0m.1 36.9h0m.1-61.8h0m0 25.9h0m.1 7.9h0m.1 16h0m.1-21h0m.1-1.2h0m.1 14h0m.1-17.2h0m.1 38h0m.1-31.6h0m.1 1.3h0m.1 4.2h0m.1 8.2h0m.1-10.6h0m0-19h0m.1-.7h0m.1 10.3h0m.1 46.5h0m.1-45h0m.1-4.2h0m.1-33.6h0m.1 30.5h0m.1-25.5h0m.1 16.1h0m.1 13.7h0m.1 23.1h0m0-25.2h0m.1 22.4h0m.1-.8h0m.1-39.5h0m.1 24.3h0m.1-1.5h0m.1-3.6h0m.1 49.7h0m.1 13.8h0m.1-31h0m.1-19.7h0m.1 10.7h0m0-.3h0m.1-12.3h0m.1-16.4h0m.1 46.4h0m.1-9.1h0m.1 2.5h0m.1 11.6h0m.1 17.2h0m.1-60h0m.1 57.6h0m.1-7.1h0m.1-13.8h0m0-37.9h0m.1 29.6h0m.1 8.8h0m.1 8h0m.1-9h0m.1 31.2h0m.1-48.9h0m.1 31.9h0m.1-19.8h0m.1 13.1h0m.1 19.7h0m.1-46.3h0m0 35.8h0m.1-30h0m.1 18.4h0m.1-16.7h0m.1 16.1h0m.1 20.2h0m.1-17.8h0m.1 17h0m.1-48.4h0m.1 40h0m.1-8h0m.1-3.9h0m0-.9h0m.1 17.4h0m.1-53.2h0m.1 22.8h0m.1 31.7h0m.1-44.6h0m.1 39.3h0m.1-54.7h0m.1 23.2h0m.1 37.8h0m.1-11.6h0m.1-19.7h0m.1 21.8h0m0-29.3h0m.1 51h0m.1-16.1h0m.1-27.1h0m.1 6.4h0m.1-10.9h0m.1 15.9h0m.1-52.6h0m.1 64h0m.1-20.2h0m.1 9.6h0m.1-32.1h0m0-6h0m.1 10.9h0m.1 19.8h0m.1 7.4h0m.1-31h0m.1 15.2h0m.1 20.9h0m.1-64.6h0m.1 25.8h0m.1 6.6h0m.1-7.7h0m.1 33.4h0m0-34.4h0m.1 14.5h0m.1-51h0m.1 21.6h0m.1 8.2h0m.1 48.6h0m.1-20.9h0m.1-18.9h0m.1 6.1h0m.1 1.3h0m.1 37.2h0m.1-48.3h0m0-22.1h0m.1 27.9h0m.1 45.5h0m.1-84h0m.1 35.5h0m.1 6.3h0m.1-10.4h0m.1.6h0m.1-14h0m.1 25.6h0m.1 10h0m.1-1.5h0m0-2.6h0m.1 9h0m.1-4.5h0m.1 31.9h0m.1-41.8h0m.1 23.6h0m.1-15.2h0m.1-18h0m.1 60.4h0m.1-47.2h0m.1-42h0m.1 58.7h0m0-69h0m.1 81.6h0m.1 15.5h0m.1-86.3h0m.1 75.3h0m.1-51.6h0m.1 23.1h0m.1-16.2h0m.1 32.6h0m.1-9.3h0m.1 2.1h0m.1-10.1h0m0-23.5h0m.1 26h0m.1 27.7h0m.1-47.1h0m.1 36.9h0m.1-23.2h0m.1 3.7h0m.1-9.7h0m.1 10.5h0m.1-1.5h0m.1 26.5h0m.1-12.2h0m.1-6.8h0m0 25.6h0m.1-31.1h0m.1 19.2h0m.1-39.4h0m.1 30.7h0m.1-24.1h0m.1 5.5h0m.1 57.3h0m.1-41.6h0m.1-4.4h0m.1-9.6h0m.1-8.4h0m0 50.8h0m.1-32h0m.1-12.5h0m.1-8.6h0m.1 29.9h0m.1-18.2h0m.1 23h0m.1-.4h0m.1-51.1h0m.1 23.2h0m.1 17.9h0m.1-13h0m0-19.4h0m.1-1.6h0m.1 14.6h0m.1 4.3h0m.1 6h0m.1 2.8h0m.1-1.1h0m.1-10.3h0m.1 8.1h0m.1-35.1h0m.1 69.9h0m.1-33.2h0m0 21.9h0m.1-25.2h0m.1-7.4h0m.1 30.7h0m.1 4.2h0m.1-35h0m.1-16.9h0m.1 44.7h0m.1-42.2h0m.1 36.6h0m.1-27.5h0m.1-4.5h0m0 17.5h0m.1-48.9h0m.1 49.5h0m.1-60.3h0m.1 55.8h0m.1-26.1h0m.1-9.1h0m.1 41.9h0m.1-43.9h0m.1 38h0m.1-15.2h0m.1-9.6h0m0 13.9h0m.1 36.4h0m.1-48.1h0m.1 19h0m.1-28.4h0m.1-11.2h0m.1 57.3h0m.1-38.1h0m.1-22.9h0m.1 30.2h0m.1-33.1h0m.1 13.1h0m.1 22.7h0m0 17.3h0m.1-53.9h0m.1 48.5h0m.1-40.5h0m.1 50.2h0m.1-16.2h0m.1 12.9h0m.1-8.2h0m.1-.3h0m.1-1.5h0m.1-15.7h0m.1 38.7h0m0-9.1h0m.1-16.9h0m.1 22.1h0m.1-22.8h0m.1-23.8h0m.1 61.4h0m.1-16.5h0m.1 10.6h0m.1-31.7h0m.1 23.9h0m.1 9.3h0m.1-11.4h0m0 3.8h0m.1.4h0m.1-5.5h0m.1-15.1h0m.1 4.9h0m.1 17.2h0m.1-35.8h0m.1-16.8h0m.1 54.2h0m.1-18.2h0m.1.3h0m.1.1h0m0 24.1h0m.1-57.2h0m.1 57.5h0m.1-15.6h0m.1-25.4h0m.1-2.6h0m.1 61.9h0m.1-38.9h0m.1 13.2h0m.1-56.8h0m.1 61.4h0m.1-62.3h0m0 84.3h0m.1-19.9h0m.1-35h0m.1 9.7h0m.1 2.8h0m.1-37.7h0m.1 33.5h0m.1 21.1h0m.1-48.3h0m.1 39.9h0m.1-28.4h0m.1-44.2h0m0 63.5h0m.1-42.5h0m.1 18.4h0m.1 7.1h0m.1-19.3h0m.1 2.6h0m.1 42.9h0m.1-63.2h0m.1 69.5h0m.1-22.2h0m.1 5h0m.1 15.6h0m.1-5.3h0m0-30.6h0m.1-16.9h0m.1-3.9h0m.1 52.7h0m.1 8.1h0m.1-29.1h0m.1-16.4h0m.1-33h0m.1 65.1h0m.1 35.2h0m.1-37.6h0m.1 5.9h0m0-6.2h0m.1-11.3h0m.1 34.7h0m.1-27.8h0m.1-7.3h0m.1 15.5h0m.1-2.6h0m.1-4.5h0m.1 23.1h0m.1-28.3h0m.1 1.3h0m.1 16h0m0-12.3h0m.1-7.7h0m.1 2h0m.1 28.1h0m.1-19.8h0m.1 18.3h0m.1 4.2h0m.1-6.9h0m.1 0h0m.1 16.4h0m.1-50.3h0m.1 45.2h0m0-8.7h0m.1-34.5h0m.1 20.7h0m.1-53.6h0m.1 63.2h0m.1-11.3h0m.1-6.2h0m.1-20.3h0m.1 17.5h0m.1 13.3h0m.1-14.8h0m.1 37.4h0m0-20.3h0m.1-3.7h0m.1 4.5h0m.1 16.3h0m.1-47.8h0m.1 10.2h0m.1 11.9h0m.1-9.8h0m.1 45.6h0m.1-31.1h0m.1-15h0m.1 16h0m0 30.2h0m.1-45.4h0m.1-23.8h0m.1-12.8h0m.1 44h0m.1 16h0m.1 2.7h0m.1-36.2h0m.1 16.4h0m.1 40.8h0m.1-21.8h0m.1-45.2h0m0 31.4h0m.1 7.2h0m.1-64.1h0m.1 3.1h0m.1 43.9h0m.1-1.5h0m.1 6.2h0m.1-6.5h0m.1 9.9h0m.1 31.5h0m.1-36.7h0m.1-54.4h0m.1 55.4h0m0-34.6h0m.1 40.9h0m.1 1h0m.1-40.7h0m.1-6.2h0m.1-7.1h0m.1 15.7h0m.1 50.5h0m.1-11.9h0m.1-21.5h0m.1 15.5h0m.1 18.8h0m0-13.1h0m.1-14.5h0m.1 4.2h0m.1 23.2h0m.1-31.2h0m.1 17.6h0m.1.6h0m.1-34.5h0m.1 23.1h0m.1-36.8h0m.1 38.8h0m.1-31.8h0m0 24.2h0m.1 26.9h0m.1-16.4h0m.1 15.3h0m.1-30h0m.1 11.4h0m.1-7.9h0m.1-36.1h0m.1 69.6h0m.1-1.4h0m.1-28.7h0m.1 10.8h0m0 4.4h0m.1-2.8h0m.1 11.3h0m.1-15.2h0m.1 19.4h0m.1-21.7h0m.1 16h0m.1 19.8h0m.1-42.5h0m.1-6.9h0m.1 24.5h0m.1 11.3h0m0 20h0m.1-25h0m.1-13.4h0m.1 17.7h0m.1-18.5h0m.1-6.4h0m.1 18.8h0m.1-3.8h0m.1-15.2h0m.1 12h0m.1 4.2h0m.1 2h0m0 26.6h0m.1-31.4h0m.1 1h0m.1 30.8h0m.1-53.7h0m.1 62.3h0m.1-55h0m.1-5.9h0m.1 35.6h0m.1 24.5h0m.1-42.8h0m.1 27h0m.1 8.5h0m0-1.6h0m.1-8.3h0m.1 19.9h0m.1-54.7h0m.1-10.9h0m.1 16.7h0m.1 38.8h0m.1-50.4h0m.1 29.4h0m.1 16.3h0m.1-54.5h0m.1 66.6h0m0-19.2h0m.1-3h0m.1 3.7h0m.1-29.1h0m.1-5.2h0m.1 47.6h0m.1-32.2h0m.1 14.1h0m.1-51.1h0m.1 17.5h0m.1 23.1h0m.1 4.4h0m0 4.6h0m.1-5.3h0m.1-55.3h0m.1 31h0m.1 6.4h0m.1 40.1h0m.1-17.2h0m.1-44.8h0m.1 25h0m.1-2.6h0m.1-27.1h0m.1 24.7h0m0 15.9h0m.1 26.8h0m.1-40.4h0m.1-21.4h0m.1 3.7h0m.1 19.4h0m.1-27.3h0m.1 11.8h0m.1 21.1h0m.1-73.2h0m.1 61.9h0m.1-8.8h0m0-40.6h0m.1 37.1h0m.1 30.1h0m.1-58h0m.1 47.2h0m.1-15.6h0m.1 12.1h0m.1-9.5h0m.1-21.2h0m.1 18.5h0m.1-7h0m.1-10.4h0m0 41.1h0m.1-43.7h0m.1 21.8h0m.1-47.7h0m.1 59.3h0m.1-23h0m.1 38.7h0m.1-40.9h0m.1-21.5h0m.1 25.6h0m.1 15h0m.1 44.2h0m.1-76.6h0m0 17.8h0m.1 30.2h0m.1-1.3h0m.1-17.6h0m.1-14.5h0m.1 26.8h0m.1-.1h0m.1 37.9h0m.1-1.8h0m.1-55.5h0m.1 46.6h0m.1-.4h0m0 22.6h0m.1-45.5h0m.1 45.6h0m.1-35.1h0m.1 24h0m.1-14.7h0m.1 20.6h0m.1-39.7h0m.1 19.6h0m.1 19.1h0m.1-41.7h0m.1 15.2h0m0 7.7h0m.1-1.8h0m.1 19.2h0m.1-10h0m.1-51.9h0m.1 22.1h0m.1-43.7h0m.1 92.3h0m.1-73.9h0m.1 27.1h0m.1-3.8h0m.1 36.4h0m0-3.7h0m.1-14.7h0m.1-23.3h0m.1-1.6h0m.1 18.4h0m.1 11.4h0m.1-26.4h0m.1 30.4h0m.1-58.2h0m.1 22.9h0m.1 24.1h0m.1-29.9h0m0 28.7h0m.1 5.1h0m.1-32.3h0m.1 26.8h0m.1-6.3h0m.1-51.8h0m.1 48.2h0m.1-35.6h0m.1 17.8h0m.1-18.4h0m.1-4.6h0m.1 22.5h0m0-18.4h0m.1 60.2h0m.1-60h0m.1 28.6h0m.1-20.9h0m.1-28.2h0m.1 43.1h0m.1-42.1h0m.1 1h0m.1 30.3h0m.1 22.7h0m.1-48.4h0m0 33.3h0m.1-10h0m.1 25.6h0m.1-52.2h0m.1 45h0m.1-31.7h0m.1 32h0m.1 10.3h0m.1-43.4h0m.1-29.2h0m.1 45.2h0m.1 40.3h0m.1-59.7h0m0 65.3h0m.1-42.3h0m.1 27.2h0m.1-21.8h0m.1-1.7h0m.1 4.3h0m.1 27.4h0m.1-16.8h0m.1 24.5h0m.1-38h0m.1 7.3h0m.1 52.7h0m0-24.2h0m.1-14h0m.1-12.7h0m.1 15.4h0m.1-48.9h0m.1 20.7h0m.1 40h0m.1-18.4h0m.1 4.8h0m.1-10.1h0m.1-6h0m.1 42.2h0m0-57.1h0m.1 16.3h0m.1 53.8h0m.1-39.9h0m.1-23.4h0m.1 5.5h0m.1 22.4h0m.1-13h0m.1 1.3h0m.1 6.1h0m.1 22.1h0m.1-35.3h0m0-15.1h0m.1 34.1h0m.1-1.7h0m.1 5.1h0m.1 19.7h0m.1-36.7h0m.1 18h0m.1 4.5h0m.1-19.1h0m.1 34.6h0m.1-77.3h0m.1 44.1h0m0-7h0m.1-23.5h0m.1 17.4h0m.1 25.7h0m.1-27.7h0m.1 14.1h0m.1-2.7h0m.1-6h0m.1.9h0m.1-28.7h0m.1 48.9h0m.1 8.9h0m0 20.4h0m.1-53.4h0m.1 4.6h0m.1-20.4h0m.1 37.4h0m.1-14.5h0m.1.5h0m.1.4h0m.1-12.3h0m.1 36h0m.1.3h0m.1-31.2h0m.1 1.3h0m0 4.5h0m.1-6.1h0m.1 19.8h0m.1-2h0m.1 7.7h0m.1 15.3h0m.1-25.8h0m.1-45h0m.1 33.2h0m.1 38.8h0m.1-43.3h0m.1 22.6h0m0-2.8h0m.1-29.4h0m.1 6.6h0m.1-8.1h0m.1-22.8h0m.1 42.9h0m.1-14.7h0m.1.2h0m.1.3h0m.1 4.5h0m.1-25.2h0m.1 70.8h0m0-27.3h0m.1-32.4h0m.1 18.6h0m.1-3h0m.1 15.3h0m.1-16.4h0m.1 2.2h0m.1.6h0m.1 14.8h0m.1-7.3h0m.1-5.8h0m.1-23h0m0 11.1h0m.1 33.5h0m.1-9.8h0m.1-18h0m.1 31.1h0m.1-32h0m.1 50.2h0m.1-63.9h0m.1 12.1h0m.1-16.5h0m.1 11.8h0m.1 20.8h0m0-12.2h0m.1 33.6h0m.1-40.1h0m.1 35.6h0m.1-20.2h0m.1-15.8h0m.1 28.7h0m.1.7h0m.1-55.1h0m.1 42.9h0m.1 12.6h0m.1-16.8h0m0-12.1h0m.1 38.6h0m.1-71.9h0m.1 40.9h0m.1-7.9h0m.1 23.3h0m.1-49h0m.1 12.4h0m.1 48h0m.1-44.5h0m.1 39.3h0m.1-64.3h0m0 27.2h0m.1 22.9h0m.1-5.9h0m.1 10.4h0m.1 19.4h0m.1-17.2h0m.1 11.4h0m.1-29.2h0m.1 20.4h0m.1-42.9h0m.1 24.8h0m.1 17.6h0m.1 12.3h0m0-39.1h0m.1 11.4h0m.1-9.5h0m.1 7.3h0m.1-11h0m.1 16.8h0m.1-40.5h0m.1 29.1h0m.1-3.1h0m.1 15.3h0m.1 31.7h0m.1-79.2h0m0 28.7h0m.1 19.5h0m.1-12.3h0m.1-9.3h0m.1 15h0m.1-17.3h0m.1-10.4h0m.1 12.7h0m.1-50.8h0m.1 95.6h0m.1-14.9h0m.1-53.5h0m0 50.7h0m.1-11.3h0m.1-4.1h0m.1-30.8h0m.1 49.1h0m.1 9.2h0m.1-61h0m.1 51.2h0m.1 10.4h0m.1-25.6h0m.1 8.7h0m.1-52.4h0m0 47.9h0m.1-9.1h0m.1-18.3h0m.1 31.6h0m.1-16h0m.1 26.4h0m.1-9.2h0m.1-7.1h0m.1 17.7h0m.1-28.8h0m.1 5.7h0m.1-1.4h0m0 27.5h0m.1-58.6h0m.1 50.6h0m.1-12.6h0m.1-4.4h0m.1 2.3h0m.1-7.6h0m.1-2.4h0m.1 13.1h0m.1 3.8h0m.1-24.1h0m.1-27.1h0m0-7.7h0m.1 27.1h0m.1 12.2h0m.1-9.2h0m.1 41.9h0m.1-60.7h0m.1 35.9h0m.1-35h0m.1 43.8h0m.1-47.9h0m.1 15.1h0m.1 13.5h0m.1 8.9h0m0 7.6h0m.1-30.7h0m.1-9h0m.1 57h0m.1-10.8h0m.1-11.2h0m.1 17.1h0m.1-20.7h0m.1 20.7h0m.1-19.8h0m.1 20.6h0m.1-36.6h0m0 37.8h0m.1-62h0m.1 52.1h0m.1 25h0m.1-22.2h0m.1 6.6h0m.1-15.7h0m.1 29.3h0m.1 3.6h0m.1-19.4h0m.1-9.6h0m.1.1h0m0 45.5h0m.1-51.2h0m.1.5h0m.1 3.4h0m.1-1.6h0m.1 4.3h0m.1 17.6h0m.1-3.9h0m.1 21.2h0m.1-76.9h0m.1 37.9h0m.1 42.7h0m0-29.1h0m.1 1.2h0m.1 17.9h0m.1-5.4h0m.1-4.9h0m.1-67.1h0m.1 67.8h0m.1 10.7h0m.1-7h0m.1-19.9h0m.1 7.8h0m.1-1h0m0 22h0m.1 6.9h0m.1 6.2h0m.1-45.1h0m.1 32.8h0m.1-29.2h0m.1 3.8h0m.1-11.8h0m.1-21.9h0m.1 40.7h0m.1-27.5h0m.1 14.1h0m0-2.6h0m.1 6.9h0m.1 23.9h0m.1-21.9h0m.1-30h0m.1 42.7h0m.1-9.9h0m.1 21.5h0m.1-51.1h0m.1 5.1h0m.1-2h0m.1 35.8h0m.1 3.5h0m0-4.9h0m.1-24.7h0m.1 18.4h0m.1-3.9h0m.1 2.7h0m.1-16.4h0m.1 38.9h0m.1-63.4h0m.1 45.3h0m.1 12h0m.1-11.8h0m.1 29.1h0m0-24.2h0m.1-.1h0m.1-40.4h0m.1 36.5h0m.1.8h0m.1 5.1h0m.1-2.7h0m.1-17.3h0m.1 39.7h0m.1-50.7h0m.1-37.6h0m.1 64.7h0m0-13.6h0m.1 27.9h0m.1-37.6h0m.1-11.8h0m.1 64.3h0m.1-27.4h0m.1 7.3h0m.1-11.5h0m.1-12.8h0m.1-8.6h0m.1 24.6h0m.1-2.8h0m0 30.2h0m.1-27.4h0m.1-8.7h0m.1-18.1h0m.1 3.2h0m.1-16.2h0m.1 14.2h0m.1-3.9h0m.1 22.5h0m.1 0h0m.1-24.7h0m.1 2.7h0m0 29.9h0m.1 6.9h0m.1-35.8h0m.1-23.5h0m.1 38.3h0m.1-7.7h0m.1 7.7h0m.1-9.9h0m.1-16.1h0m.1-9.7h0m.1 47.4h0m.1-38.2h0m0-5.5h0m.1-18.6h0m.1 21.3h0m.1 19.3h0m.1 4.7h0m.1-36.8h0m.1-30.7h0m.1 46.5h0m.1-17.3h0m.1 40.5h0m.1-12.4h0m.1-19.1h0m0 47.6h0m.1-19.8h0m.1 23.7h0m.1-10.6h0m.1-13.7h0m.1-22.6h0m.1 37.8h0m.1-39.1h0m.1 24h0m.1 2.5h0m.1-23.5h0m.1 55.5h0m.1-14h0m0 31.5h0m.1-47.8h0m.1-18h0m.1 52.8h0m.1 15h0m.1-40.9h0m.1 14.7h0m.1-12h0m.1-20.1h0m.1 41.4h0m.1-48.7h0m.1 63h0m0-6.2h0m.1-15.5h0m.1-9.3h0m.1-18.2h0m.1 4h0m.1 22.2h0m.1 22.8h0m.1 8.5h0m.1-23.9h0m.1-54.5h0m.1 8h0m.1 52.7h0m0-8.7h0m.1-15h0m.1 12h0m.1 12.1h0m.1-18.4h0m.1-24.5h0m.1-6.5h0m.1 13.1h0m.1-13.5h0m.1 6.9h0m.1 23.1h0m.1 8.7h0m0-4.1h0m.1 23.1h0m.1-65.9h0m.1 37.8h0m.1-8.8h0m.1-26.1h0m.1 31.8h0m.1-26.7h0m.1 55.2h0m.1-26.8h0m.1-38.5h0m.1 47.8h0m0 .1h0m.1-30.4h0m.1-33h0m.1 32.7h0m.1 49.2h0m.1-22.4h0m.1-70.6h0m.1 54.5h0m.1 27h0m.1-35h0m.1 26.6h0m.1-19h0m0 26.4h0m.1-74.3h0m.1 27.6h0m.1-12.3h0m.1 15.8h0m.1 21.7h0m.1 2.9h0m.1-9.1h0m.1-13.5h0m.1-6.1h0m.1-2.8h0m.1-8.9h0m.1 8.6h0m0 .4h0m.1 11.6h0m.1-8.1h0m.1 17.4h0m.1 17h0m.1-60.7h0m.1 9.5h0m.1-.3h0m.1-1.1h0m.1 5.1h0m.1 25.2h0m.1 21.8h0m0-70.7h0m.1 62.2h0m.1-23h0m.1 20.9h0m.1-7.9h0m.1 8.4h0m.1-46.4h0m.1-2.7h0m.1 33.2h0m.1-10.9h0m.1 36.3h0m.1-23.3h0m0 13.2h0m.1-1h0m.1 3.6h0m.1-.5h0m.1 11.5h0m.1 11.9h0m.1-64.9h0m.1 8.7h0m.1 35.1h0m.1 7.1h0m.1-9.1h0m.1 12.8h0m0 16.8h0m.1.3h0m.1-34.2h0m.1 21.1h0m.1 16.6h0m.1-47.1h0m.1-19.4h0m.1 52.1h0m.1-28.7h0m.1-13.6h0m.1 31.8h0m.1-23.8h0m0 29.8h0m.1-28.8h0m.1 50.6h0m.1-64.4h0m.1 69.9h0m.1-1.4h0m.1-67.1h0m.1 4.7h0m.1 33.3h0m.1-33.8h0m.1 59.3h0m.1-45.8h0m0 21.2h0m.1-47h0m.1 45.9h0m.1-2.8h0m.1 13.9h0m.1-9.9h0m.1-12.1h0m.1-33.3h0m.1 55.7h0m.1-10.6h0m.1-13.3h0m.1 9.5h0m.1-12.7h0m0-5.2h0m.1 2.7h0m.1-7.7h0m.1 11.2h0m.1-1.4h0m.1-12.5h0m.1 3.7h0m.1 22.8h0m.1-28.8h0m.1-5.3h0m.1 19.5h0m.1-8.4h0m0-21.7h0m.1-14.3h0m.1 32h0m.1-.9h0m.1-12.1h0m.1 16.6h0m.1 16h0m.1-7.8h0m.1 1.4h0m.1-1h0m.1 16.2h0m.1-28.6h0m0 5.1h0m.1-5h0m.1 20.2h0m.1-8.4h0m.1 4.4h0m.1-57.8h0m.1 48.9h0m.1-71.4h0m.1 18.6h0m.1 48.8h0m.1-10.7h0m.1 6.4h0m0 8.8h0m.1-21h0m.1 8.6h0m.1 16.9h0m.1-19.6h0m.1-41.7h0m.1 24.2h0m.1 29.1h0m.1-10.6h0m.1-10.8h0m.1 26.3h0m.1 8.3h0m0-25.4h0m.1 18h0m.1-16.4h0m.1 13h0m.1-47.3h0m.1 22.1h0m.1 6.6h0m.1 5.4h0m.1 40.4h0m.1-61.8h0m.1-4.2h0m.1 26.6h0m0-10.4h0m.1 24h0m.1 7h0m.1 16.6h0m.1-33.5h0m.1 4.9h0m.1-24.3h0m.1-34.3h0m.1 55.9h0m.1 17.7h0m.1-58.6h0m.1 16.5h0m0 4.4h0m.1 4.5h0m.1 8.5h0m.1 14.9h0m.1-9.5h0m.1 28.8h0m.1-59.3h0m.1 33.9h0m.1-7.7h0m.1-12h0m.1 42.7h0m.1-23.8h0m.1-19h0m0 12.2h0m.1 21.7h0m.1 5.8h0m.1-13.2h0m.1.6h0m.1 9.6h0m.1-2h0m.1-12h0m.1 11.7h0m.1-24.9h0m.1 34.2h0m.1-25.3h0m0 2.4h0m.1-2.7h0m.1-4.2h0m.1 44.6h0m.1-46.6h0m.1-3.8h0m.1 47.6h0m.1-2h0m.1-6.8h0m.1 11.6h0m.1-33.8h0m.1-5.6h0m0 16.5h0m.1 1.8h0m.1 3h0m.1 4.5h0m.1 18.8h0m.1-48.2h0m.1 19.8h0m.1-40.7h0m.1-7.2h0m.1 56.9h0m.1-34.4h0m.1-.3h0m0-33.6h0m.1 62.2h0m.1 9.4h0m.1-21.4h0m.1-2.2h0m.1-12.9h0m.1-19.9h0m.1 36.9h0m.1-25.9h0m.1 11.1h0m.1 1.7h0m.1-43.2h0m0 47.6h0m.1 24.4h0m.1 4.9h0m.1-12.5h0m.1 0h0m.1-20.5h0m.1-18.4h0m.1 23.7h0m.1 11.6h0m.1 0h0m.1-9.8h0m.1-6h0m0-2.1h0m.1 6h0m.1 4.5h0m.1 5h0m.1-14.6h0m.1 12.3h0m.1-23.4h0m.1 13.1h0m.1 3.1h0m.1-39.3h0m.1 21.3h0m.1 31.5h0m.1-14.8h0m0-39.2h0m.1 57.5h0m.1-20.6h0m.1 13.6h0m.1 11h0m.1-26.5h0m.1 7.8h0m.1-.3h0m.1-36.9h0m.1 69.9h0m.1-32.3h0m.1-4.2h0m0 32.2h0m.1-7.7h0m.1-39h0m.1-.7h0m.1 51.9h0m.1-55.2h0m.1 25.8h0m.1 27h0m.1-49.2h0m.1 40.3h0m.1-6.1h0m.1-28.1h0m0-9.9h0m.1 9.4h0m.1-1.4h0m.1 11.4h0m.1 16.4h0m.1-10.5h0m.1-6.1h0m.1 8.7h0m.1-21.8h0m.1 9.7h0m.1-5.7h0m.1 11.7h0m0-37.9h0m.1 37.1h0m.1-19.2h0m.1-1.5h0m.1 13.6h0m.1 16.3h0m.1-44.2h0m.1 10.7h0m.1-26.9h0m.1 41.2h0m.1-44.9h0m.1 38.5h0m0 23.1h0m.1-1.1h0m.1-25.4h0m.1 16.7h0m.1-41.4h0m.1 16h0m.1 19.8h0m.1 3.3h0m.1-10.8h0m.1-15.2h0m.1 15.7h0m.1 15.3h0m0 3.4h0m.1-41.3h0m.1 26.9h0m.1-17.1h0m.1 18.9h0m.1 25.6h0m.1-60.3h0m.1 11.2h0m.1 8h0m.1 39.2h0m.1 4.6h0m.1-8.2h0m.1-69.8h0m0 13.5h0m.1 20.3h0m.1 13.1h0m.1 46.5h0m.1-45.3h0m.1-1.8h0m.1 12.5h0m.1-21.9h0m.1 12.6h0m.1-29.9h0m.1 94.3h0m.1-66.6h0m0 25.5h0m.1-46.7h0m.1 44.9h0m.1-37.7h0m.1 52.3h0m.1-19.4h0m.1-19.2h0m.1 11.2h0m.1-12.8h0m.1 30.4h0m.1-19.1h0m.1 29.5h0m0-42.6h0m.1 13.4h0m.1 16.4h0m.1-7.9h0m.1 8.7h0m.1 16.4h0m.1-22.4h0m.1-1.2h0m.1 6h0m.1 13.1h0m.1 8.8h0m.1-6.4h0m0-27h0m.1 15.4h0m.1 7.4h0m.1-3.1h0m.1 17.3h0m.1-6.3h0m.1-35.2h0m.1-5.2h0m.1-18h0m.1 71.6h0m.1-11.3h0m.1-23h0m0 41.7h0m.1-51.5h0m.1 44.2h0m.1-33h0m.1 1.8h0m.1 24.1h0m.1-10.5h0m.1.1h0m.1 27.6h0m.1-17.7h0m.1-18.7h0m.1-46.9h0m0 76.4h0m.1-32.4h0m.1 16.5h0m.1 4.9h0m.1-29.7h0m.1-2.3h0m.1 28.1h0m.1-25.2h0m.1 5.8h0m.1 2.3h0m.1-27.3h0m.1 55h0m0-24.4h0m.1 9.8h0m.1-25.3h0m.1 26.7h0m.1-53.6h0m.1 46.6h0m.1 6.7h0m.1-29.8h0m.1-1h0m.1.4h0m.1 42.7h0m.1-66.9h0m.1 7.4h0m0 25.4h0m.1-35.4h0m.1 29h0m.1-25.7h0m.1 28.8h0m.1 19.5h0m.1-26.2h0m.1 10.2h0m.1 4h0m.1-38.2h0m.1 33.1h0m.1-43.2h0m0 48.8h0m.1-31.6h0m.1 21.2h0m.1-15.1h0m.1 36.6h0m.1-17h0m.1 26.4h0m.1-21.2h0m.1-41.5h0m.1 24.3h0m.1-8.2h0m.1 5h0m0-12.5h0m.1 32.9h0m.1-34.9h0m.1 11.2h0m.1-4h0m.1 10.3h0m.1-9.4h0m.1-23.7h0m.1 17.3h0m.1-18.3h0m.1 58.1h0m.1-18.9h0m0-4.4h0m.1-7.9h0m.1 11h0m.1 8.3h0m.1-9.6h0m.1-1.8h0m.1-14.2h0m.1 3.8h0m.1 16.1h0m.1-3.1h0m.1-5.4h0m.1-1.8h0m0 .7h0m.1 19.9h0m.1-56.7h0m.1 60.6h0m.1-48.8h0m.1 52.3h0m.1-34.9h0m.1 12.1h0m.1-5.7h0m.1 5.8h0m.1 31.6h0m.1-19.1h0m0 1.8h0m.1 24.7h0m.1-28.5h0m.1-8.8h0m.1 20.6h0m.1-8h0m.1 3.9h0m.1-34.4h0m.1 26.8h0m.1-1.1h0m.1-6.3h0m.1 16.5h0m.1 1.4h0m0-13.5h0m.1-4.9h0m.1-5.6h0m.1 28.9h0m.1-2.1h0m.1 30.4h0m.1-87.1h0m.1 60.6h0m.1-6.3h0m.1 3.9h0m.1-.6h0m.1-3.6h0m0 20.1h0m.1-48.1h0m.1 31.3h0m.1-15.9h0m.1 18.8h0m.1-12.5h0m.1-4.3h0m.1-18h0m.1 43.4h0m.1-30h0m.1 13.1h0m.1 18.4h0m0-49.2h0m.1 9.1h0m.1 52.1h0m.1-19.4h0m.1-23.9h0m.1-7.6h0m.1-57.3h0m.1 74.1h0m.1-11.9h0m.1-1.5h0m.1-3.7h0m.1 19.7h0m0-29.4h0m.1 23.1h0m.1-1.8h0m.1-9.6h0m.1-10.4h0m.1 41.7h0m.1-27.9h0m.1 15.3h0m.1-18.5h0m.1 9.6h0m.1-29.3h0m.1-6.9h0m0 9.2h0m.1 15h0m.1-20.1h0m.1 18.7h0m.1-31.3h0m.1 8.3h0m.1 13h0m.1-9.7h0m.1 25.3h0m.1-18.5h0m.1-2.3h0m.1 4.3h0m0 11.8h0m.1 10.1h0m.1-68h0m.1 43.6h0m.1 18.1h0m.1-31h0m.1 22.3h0m.1-39.2h0m.1 66.7h0m.1 4.4h0m.1-26.2h0m.1-36.8h0m0 43.5h0m.1-24.7h0m.1 13.5h0m.1 33.2h0m.1-58.5h0m.1 77.7h0m.1-65.7h0m.1 19.4h0m.1-33.2h0m.1 44.7h0m.1 1.4h0m.1 23.8h0m.1-30.7h0m0 26.1h0m.1-30.4h0m.1 34.4h0m.1-17.5h0m.1 35.9h0m.1-20.5h0m.1-23.8h0m.1-6h0m.1 17.5h0m.1 16.3h0m.1-9.5h0m.1-15.3h0m0 24.4h0m.1-19h0m.1 16.6h0m.1 5.5h0m.1.5h0m.1-14.7h0m.1-7.5h0m.1 5h0m.1-41.2h0m.1 36h0m.1-38.9h0m.1 65.8h0m0-68.7h0m.1 10.3h0m.1 46h0m.1-9.3h0m.1-26.7h0m.1-18.8h0m.1 52.1h0m.1-18.1h0m.1-15.2h0m.1 26.3h0m.1-37.9h0m.1 59.2h0m0-39.3h0m.1 7.6h0m.1-50h0m.1 52h0m.1-8.3h0m.1-11.2h0m.1 22.1h0m.1-28.5h0m.1-23.4h0m.1 19.6h0m.1 15.8h0m.1-24.4h0m0 28.7h0m.1-36.5h0m.1 35.5h0m.1-9.4h0m.1-19.3h0m.1-19.2h0m.1 53.6h0m.1-39.7h0m.1 32.5h0m.1 25h0m.1-32h0m.1-20.3h0m0 28.1h0m.1-14.9h0m.1-21.6h0m.1 28.6h0m.1-14h0m.1 29.3h0m.1 12.6h0m.1-26.6h0m.1 10.5h0m.1 3.8h0m.1-27.5h0m.1 22h0m.1 22.5h0m0-39h0m.1 24.4h0m.1-41.3h0m.1 3h0m.1-10.5h0m.1.1h0m.1 1.8h0m.1 58.4h0m.1-43.1h0m.1-15.4h0m.1 52.8h0m.1-6.4h0m0 1h0m.1 20.1h0m.1-21.4h0m.1-38h0m.1 55.1h0m.1-24h0m.1 31.9h0m.1 12.3h0m.1-63.5h0m.1 25.5h0m.1 17.6h0m.1 18.6h0m0-41.2h0m.1-20.8h0m.1-3.5h0m.1-27.5h0m.1 75.8h0m.1-38.5h0m.1 28.3h0m.1-1.2h0m.1 16.4h0m.1-63.3h0m.1 34.4h0m.1-7.3h0m0 27.8h0m.1-36.9h0m.1 23.6h0m.1 12.7h0m.1-22.8h0m.1-8.2h0m.1-17.9h0m.1 20.5h0m.1-11.2h0m.1 9.2h0m.1-28.9h0m.1 1.4h0m0 1.2h0m.1 15.3h0m.1 27.2h0m.1-31.7h0m.1 1.4h0m.1 16.8h0m.1 21.8h0m.1-7.1h0m.1 14.8h0m.1 1.1h0m.1-21.1h0m.1-4.1h0m0 13.8h0m.1-34.3h0m.1 11.9h0m.1 1.5h0m.1 34.7h0m.1-88.6h0m.1 49.2h0m.1 24.2h0m.1-37.9h0m.1 14.8h0m.1-3.3h0m.1 9.2h0m.1 10.1h0m0-58.6h0m.1 12h0m.1 37.1h0m.1 14.7h0m.1-29h0m.1 34.7h0m.1 12.1h0m.1-31h0m.1 4.1h0m.1-52.2h0m.1 42h0m.1 24.7h0m0-44h0m.1 21.3h0m.1 5.8h0m.1-3.9h0m.1 7.1h0m.1-57.9h0m.1 43.4h0m.1 8.4h0m.1-35h0m.1 9.4h0m.1-12.1h0m.1 34.3h0m0 23.6h0m.1-51.9h0m.1 40.1h0m.1-5.9h0m.1-32.1h0m.1 49.1h0m.1-62.1h0m.1 39.3h0m.1-5h0m.1 4h0m.1-22.4h0m.1 16.3h0m0 1.3h0m.1 13.4h0m.1-33.3h0m.1-26.5h0m.1 84h0m.1-48.9h0m.1-.7h0m.1 12.8h0m.1 17.5h0m.1-13.8h0m.1 22.1h0m.1-8.2h0m0-8.7h0m.1 12.9h0m.1-23.5h0m.1 34.3h0m.1-55.7h0m.1 34.9h0m.1-15.8h0m.1 22.1h0m.1-20.3h0m.1 29.6h0m.1 19h0m.1-49.3h0m0 31.8h0m.1 6.9h0m.1-36.4h0m.1 52.1h0m.1-85.8h0m.1 75.8h0m.1-6.7h0m.1-5.9h0m.1-12.3h0m.1 10.1h0m.1.4h0m.1 12.6h0m0-21.9h0m.1-43.5h0m.1 66.7h0m.1-40.1h0m.1 17.4h0m.1 20.4h0m.1-16.4h0m.1 33.2h0m.1-33.7h0m.1 30.4h0m.1-2h0m.1-43.6h0m.1 23.9h0m0-2.5h0m.1 2.4h0m.1 22.8h0m.1-13.1h0m.1 13.4h0m.1-62.1h0m.1 49.6h0m.1 15h0m.1-43.8h0m.1-7.7h0m.1 19.7h0m.1-1.3h0m0 11.3h0m.1-6.4h0m.1-10.6h0m.1 10h0m.1-7.8h0m.1 28h0m.1-25.3h0m.1-1.1h0m.1 13h0m.1 16.4h0m.1-22.2h0m.1-.7h0m0-42.2h0m.1 35.5h0m.1 3.7h0m.1-24.8h0m.1 35.6h0m.1-31.4h0m.1 26h0m.1-67.9h0m.1 43.9h0m.1 16.4h0m.1-18.1h0m.1-19.3h0m0 66.6h0m.1-27.9h0m.1-57.4h0m.1 67.5h0m.1-43.5h0m.1-.6h0m.1 35.7h0m.1 21.7h0m.1-40.6h0m.1-9.7h0m.1 43.1h0m.1-27.3h0m0-10.2h0m.1 11.8h0m.1 3.2h0m.1 9.1h0m.1 1.4h0m.1-2.2h0m.1-24.4h0m.1 13.4h0m.1-17.5h0m.1 26h0m.1-25.9h0m.1 19.2h0m0 19.2h0m.1-25.3h0m.1-15.7h0m.1 46.7h0m.1-62.6h0m.1 25.4h0m.1-10.8h0m.1 34.8h0m.1-42.8h0m.1 18.5h0m.1 10.6h0m.1-2.9h0m.1 11.5h0m0-24.1h0m.1 6.5h0m.1 12.3h0m.1-2.5h0m.1-21.9h0m.1-6.3h0m.1 58.4h0m.1 5.7h0m.1-39.7h0m.1 14.8h0m.1-13.8h0m.1-5.3h0m0 32h0m.1-41.5h0m.1 36h0m.1-31.5h0m.1 23.2h0m.1-3.1h0m.1-9.9h0m.1.4h0m.1-27.1h0m.1 37.8h0m.1-1.9h0m.1 5.8h0m0-30.5h0m.1-4.8h0m.1.5h0m.1-47.5h0m.1 65.1h0m.1-12.5h0m.1 24.9h0m.1-26.1h0m.1-36.5h0m.1 67.6h0m.1 13h0m.1-10.4h0m0-60.1h0m.1 52.4h0m.1-17.7h0m.1 21.6h0m.1-55.8h0m.1 35.6h0m.1-24.2h0m.1 10.6h0m.1 41h0m.1-63h0m.1 64h0m.1-29.4h0m0-34.3h0m.1 54.7h0m.1-11.7h0m.1 4.5h0m.1-27.4h0m.1 37.3h0m.1-24.7h0m.1 38.9h0m.1-70h0m.1 44.2h0m.1 4h0m.1 5.3h0m0-30.3h0m.1 32.8h0m.1-25.2h0m.1 59.7h0m.1-23.8h0m.1 8.4h0m.1-23.2h0m.1 21.7h0m.1-37.3h0m.1 48.5h0m.1-27.6h0m.1-13.6h0m.1 33.1h0m0-22.4h0m.1-17.2h0m.1-5.6h0m.1 14.6h0m.1 6.5h0m.1 14.3h0m.1 13.2h0m.1-5h0m.1-33.2h0m.1-12.3h0m.1.1h0m.1 20h0m0-36.2h0m.1 40.4h0m.1-20.2h0m.1 14.9h0m.1 13.9h0m.1 7.8h0m.1-7.3h0m.1-51.8h0m.1 9.6h0m.1 23.4h0m.1-33.8h0m.1 23.2h0m0-4.6h0m.1 3.6h0m.1-28.2h0m.1 49.3h0m.1-30.4h0m.1 1h0m.1 7.8h0m.1-59.4h0m.1 71.1h0m.1-3h0m.1-24.7h0m.1 5.1h0m0-1.4h0m.1 19h0m.1-18.2h0m.1-24.1h0m.1 36.5h0m.1-32.4h0m.1 14.5h0m.1 18.8h0m.1-9.9h0m.1-16.7h0m.1-17.3h0m.1-18.8h0m0 19.4h0m.1-10.2h0m.1 10.9h0m.1 8.4h0m.1 13.4h0m.1-14.4h0m.1 21h0m.1 8.4h0m.1-16.4h0m.1 33.2h0m.1-2h0m.1.7h0m0-18.3h0m.1-16.8h0m.1 22.6h0m.1-17.2h0m.1-10h0m.1 17.4h0m.1-24.9h0m.1 74.5h0m.1-51.5h0m.1-21.1h0m.1 20.5h0m.1 60.2h0m0-18.1h0m.1-25.6h0m.1-24.4h0m.1 22.9h0m.1 20.9h0m.1-31.7h0m.1 32.8h0m.1-12.7h0m.1-22.2h0m.1 20.7h0m.1 38h0m.1-16.1h0m.1-8.6h0m0 13.8h0m.1-20.6h0m.1-41.9h0m.1 23.4h0m.1-26.5h0m.1 34.1h0m.1 47.1h0m.1-43.7h0m.1 6h0m.1-3.5h0m.1 6.2h0m.1 22.9h0m0-56.2h0m.1 41.5h0m.1-.7h0m.1 31.8h0m.1-55h0m.1 47.5h0m.1-26.7h0m.1-4.1h0m.1-3.2h0m.1 22.7h0m.1-36.5h0m.1 31.8h0m0-1.9h0m.1 10.3h0m.1-49h0m.1 33.1h0m.1-23.7h0m.1 21.1h0m.1 15.3h0m.1 21.2h0m.1-59.8h0m.1 22.8h0m.1-29.4h0m.1 11.8h0m0-9.9h0m.1 16.3h0m.1 2.4h0m.1 2.9h0m.1-26.2h0m.1 59.8h0m.1-45h0m.1-.9h0m.1 17.3h0m.1-7h0m.1-8.4h0m.1 44.7h0m0-46h0m.1 53.2h0m.1-25.1h0m.1-36.5h0m.1 22.3h0m.1-34.3h0m.1-5.5h0m.1 37h0m.1-27.3h0m.1 13.5h0m.1 27.1h0m.1-29.2h0m0 30.9h0m.1-13.1h0m.1-3.6h0m.1-7h0m.1.3h0m.1-7.4h0m.1 62.6h0m.1-51.1h0m.1-17h0m.1 14.3h0m.1-60.9h0m.1 31h0m.1 64.6h0m0-55.4h0m.1 24.2h0m.1 9.8h0m.1-21.3h0m.1 13.8h0m.1-60.4h0m.1-19.1h0m.1 60.4h0m.1.9h0m.1.3h0m.1-8.7h0m.1 20.3h0m0-24.8h0m.1-14.6h0m.1 27h0m.1 13.2h0m.1 3.7h0m.1-23.7h0m.1 30.7h0m.1 5.9h0m.1-48.4h0m.1-9.2h0m.1-8.2h0m.1 29.7h0m0 39.7h0m.1-72.1h0m.1 47.6h0m.1-9.2h0m.1 16.7h0m.1-36h0m.1 41.1h0m.1-47h0m.1 43.8h0m.1-23.4h0m.1 14.9h0m.1-4.9h0m0 2.5h0m.1 14.9h0m.1-46h0m.1 35.3h0m.1-2.7h0m.1-19.7h0m.1-21.1h0m.1 33.9h0m.1-28.9h0m.1-8.7h0m.1-12.2h0m.1 74.4h0m0-15.7h0m.1-40.2h0m.1 55.5h0m.1-43h0m.1-2.3h0m.1-5.9h0m.1 65.6h0m.1-39h0m.1-21.8h0m.1 21.6h0m.1 6.2h0m.1 16.6h0m0-19.5h0m.1 28.7h0m.1-4.1h0m.1-51.7h0m.1 17.1h0m.1 10.3h0m.1 35.1h0m.1-37.8h0m.1-9.4h0m.1 3.2h0m.1 26.6h0m.1-61.6h0m.1 42.5h0m0 13h0m.1-19.8h0m.1 35.2h0m.1-37.7h0m.1 52.7h0m.1-26.3h0m.1-1.6h0m.1-4.1h0m.1 18.9h0m.1-28.1h0m.1-20.5h0m.1 13.3h0m0-21.9h0m.1 17.3h0m.1 13h0m.1 8.8h0m.1-16.3h0m.1-5.3h0m.1 17.3h0m.1 40.2h0m.1-81.2h0m.1 49.9h0m.1 10.1h0m.1 7.8h0m0-59.3h0m.1 30.4h0m.1-.7h0m.1-17.5h0m.1-32.5h0m.1 85.7h0m.1-5.5h0m.1-10.4h0m.1-51h0m.1-8.3h0m.1 49.5h0m.1 5.5h0m0-7.5h0m.1-4h0m.1-9.8h0m.1-31.8h0m.1 22h0m.1 1.5h0m.1 10.4h0m.1 36.9h0m.1-48.5h0m.1 1.1h0m.1 8h0m.1 2.8h0m0 8.5h0m.1 20.2h0m.1-35.1h0m.1 4h0m.1-33.9h0m.1 52.5h0m.1-33.3h0m.1-8.4h0m.1 20.2h0m.1-9.5h0m.1-19.2h0m.1 33.8h0m0-16.9h0m.1 13h0m.1-.7h0m.1-10.3h0m.1 4.7h0m.1-2.9h0m.1 17.2h0m.1-42.9h0m.1 27.5h0m.1 45.5h0m.1-14.1h0m.1-64.4h0m0 41.6h0m.1 14.1h0m.1-28.1h0m.1 33.8h0m.1-7.4h0m.1 7.5h0m.1-14.4h0m.1-34.4h0m.1 26.7h0m.1-10.7h0m.1 21.8h0m.1.2h0m.1-2.7h0m0-41.8h0m.1 34.9h0m.1 14.1h0m.1 16.7h0m.1-37.1h0m.1 16.9h0m.1 9.1h0m.1-63.9h0m.1 82.5h0m.1-22h0m.1-4.2h0m.1-38.7h0m0 10.3h0m.1 41.9h0m.1-17.1h0m.1-25.7h0m.1 52.3h0m.1-9.1h0m.1 4h0m.1-40.1h0m.1 14h0m.1-34h0m.1 25.1h0m.1-11h0m0 20.1h0m.1-18.4h0m.1-4.9h0m.1 19.4h0m.1.1h0m.1 2.7h0m.1-25.6h0m.1 6h0m.1 26.5h0m.1-8.9h0m.1 1.2h0m.1 11.7h0m0-30.6h0m.1 4.7h0m.1 9h0m.1-1.9h0m.1-24.4h0m.1 42.3h0m.1-24.3h0m.1-28.7h0m.1 26.6h0m.1 6.3h0m.1 19h0m.1 12.8h0m0-14.9h0m.1-1.5h0m.1-41.5h0m.1 57.2h0m.1-47.3h0m.1 5.9h0m.1 19.1h0m.1 3.5h0m.1-32.7h0m.1 41.9h0m.1-4h0m.1-27.1h0m0 21.2h0m.1 8h0m.1-19.9h0m.1-26.8h0m.1 43.2h0m.1 11.1h0m.1 14.1h0m.1-17.9h0m.1 11.5h0m.1-30.5h0m.1 37.5h0m.1 3.9h0m.1-49.8h0m0 45.3h0m.1 1.8h0m.1-34.7h0m.1 19.6h0m.1 24.9h0m.1-21.6h0m.1-28.8h0m.1 63.4h0m.1-15.1h0m.1 15.3h0m.1-47.9h0m.1 53.6h0m0-28.6h0m.1-8.4h0m.1 4.6h0m.1-18.4h0m.1 29.9h0m.1 4.7h0m.1-29.5h0m.1-14.2h0m.1-1.1h0m.1 40.6h0m.1-23.7h0m.1 12.1h0m0 12.2h0m.1-51.6h0m.1 36.5h0m.1 17.1h0m.1-27.5h0m.1-7.1h0m.1-14.8h0m.1 23h0m.1 18.4h0m.1-1.1h0m.1-6.5h0m.1-13.7h0m0-10.2h0m.1-24.5h0m.1 40h0m.1-7.2h0m.1-3.8h0m.1 1.9h0m.1-9.3h0m.1 7.5h0m.1 3.5h0m.1 8.9h0m.1-28.7h0m.1 18.7h0m0-37.4h0m.1 53.5h0m.1-16.7h0m.1 25.2h0m.1-57.2h0m.1 14.8h0m.1-3.1h0m.1-15.7h0m.1-10.4h0m.1 72.8h0m.1-60.8h0m.1 13.1h0m0-27h0m.1 11.5h0m.1 13.5h0m.1-5.1h0m.1 11.5h0m.1 34h0m.1-77.3h0m.1 82h0m.1-57.2h0m.1 16h0m.1 5h0m.1 14.4h0m.1-12.8h0m0-22.4h0m.1 9.6h0m.1 6.2h0m.1-8.5h0m.1 31.6h0m.1-52.3h0m.1 45.6h0m.1-22h0m.1-4h0m.1 3.4h0m.1 2.9h0m.1-13.5h0m0 43.2h0m.1-13.8h0m.1-48h0m.1 30.3h0m.1 24.6h0m.1-7.8h0m.1 14.2h0m.1-22.3h0m.1 24.6h0m.1-4.9h0m.1-14.8h0m.1 18.1h0m0-28.4h0m.1-4.6h0m.1 17.1h0m.1 4.8h0m.1-20.9h0m.1 30.6h0m.1-25.4h0m.1 29.7h0m.1 8.7h0m.1-.7h0m.1-10.1h0m.1 12h0m0-34.9h0m.1 24.5h0m.1 9.4h0m.1-51.6h0m.1 58.7h0m.1-28.3h0m.1 7h0m.1-18.3h0m.1 26.1h0m.1 4.6h0m.1 3h0m.1-8h0m0-37h0m.1 48.4h0m.1 15.2h0m.1-28.3h0m.1-19.9h0m.1 13.3h0m.1 17.4h0m.1-57.5h0m.1 66.5h0m.1-6.4h0m.1-12.7h0m.1-50h0m0 22.3h0m.1 15.7h0m.1-5.4h0m.1-18.1h0m.1 15.2h0m.1 1.3h0m.1-10.3h0m.1-21.1h0m.1 44.4h0m.1 9.6h0m.1-14.3h0m.1-41h0m0 47.6h0m.1 8.4h0m.1 9.5h0m.1-42.7h0m.1 20.8h0m.1-7.9h0m.1 10.6h0m.1-.4h0m.1 2.5h0m.1-.1h0m.1-4.9h0m.1 22.8h0m.1-14.5h0m0-29.1h0m.1 24.1h0m.1-30h0m.1-20.4h0m.1 55.8h0m.1-27.2h0m.1-16.3h0m.1-.2h0m.1 2.6h0m.1 8.2h0m.1 27.1h0m.1-5.8h0m0-59.2h0m.1 39.6h0m.1 17h0m.1-12h0m.1 23.3h0m.1-64.5h0m.1 18.2h0m.1 17.7h0m.1 33.8h0m.1-25.9h0m.1-6.4h0m.1 32.3h0m0-55.6h0m.1 65.9h0m.1-44.1h0m.1 9.8h0m.1-12.8h0m.1 14.6h0m.1-54.2h0m.1 83.3h0m.1-24.4h0m.1-6.7h0m.1-33h0m.1 14.1h0m0 19.5h0m.1 3.8h0m.1-23.8h0m.1 26.1h0m.1-5.6h0m.1.9h0m.1-11.7h0m.1 2.9h0m.1-14h0m.1 11.9h0m.1.5h0m.1 26.7h0m0-29.6h0m.1 8.4h0m.1 19.8h0m.1-6.3h0m.1 23.3h0m.1-5.3h0m.1 16.6h0m.1-13.8h0m.1-41.7h0m.1 37.8h0m.1 23.8h0m.1-49.5h0m0-12.9h0m.1 25.2h0m.1 5h0m.1-10.6h0m.1 38.9h0m.1-12.7h0m.1-14.5h0m.1 10.3h0m.1 10.1h0m.1-6.2h0m.1 26.1h0m.1-11.9h0m.1 3h0m0-7h0m.1-53.6h0m.1 42.1h0m.1-42.2h0m.1 24.6h0m.1 3.8h0m.1-25.9h0m.1 29.8h0m.1 11h0m.1-18.8h0m.1-3.6h0m.1-1.9h0m0 10.1h0m.1-13.5h0m.1 3.6h0m.1 8.2h0m.1-17.8h0m.1 15.2h0m.1-9.9h0m.1 7.4h0m.1 3.2h0m.1-18h0m.1 32.2h0m.1-2.1h0m0-40h0m.1 4.3h0m.1 7.3h0m.1 41.3h0m.1-22.9h0m.1-69.4h0m.1 56.2h0m.1-2.7h0m.1-33.9h0m.1 11.6h0m.1 19.8h0m.1-3.1h0m0 5.4h0m.1-7h0m.1-49.3h0m.1 64.1h0m.1-37h0m.1 8.1h0m.1 29h0m.1-23.1h0m.1 41.7h0m.1-8.6h0m.1-21.8h0m.1-57h0m0 75h0m.1 1h0m.1-53.9h0m.1 17.5h0m.1 33.7h0m.1-41.9h0m.1 6.1h0m.1 28.8h0m.1-20.6h0m.1 7.8h0m.1.7h0m.1 2.7h0m0-31h0m.1 40.3h0m.1 2.9h0m.1-20.6h0m.1-.6h0m.1 15.3h0m.1 38.2h0m.1-32.1h0m.1 29.8h0m.1 9h0m.1-28.8h0m.1-31.5h0m0 5.6h0m.1 11.3h0m.1 31.1h0m.1-22h0m.1-35.5h0m.1 33.2h0m.1 8.1h0m.1-35.9h0m.1 37h0m.1-13.8h0m.1 15h0m.1-48.2h0m.1 18.8h0m0 3h0m.1 2.9h0m.1 2.3h0m.1.9h0m.1 31.5h0m.1 27.2h0m.1-60.1h0m.1-18.2h0m.1-13.4h0m.1 25h0m.1-33.9h0m.1 14.5h0m0 5.4h0m.1 1.1h0m.1-7.1h0m.1-3.7h0m.1-5.7h0m.1 3h0m.1-13h0m.1 30h0m.1-10h0m.1-15.5h0m.1 35.3h0m.1-36h0m0 26.8h0m.1 28.2h0m.1-9.3h0m.1-3.8h0m.1-12.9h0m.1-23.4h0m.1 23.7h0m.1-.6h0m.1-5h0m.1-2.3h0m.1 13h0m.1 3.3h0m0-5.1h0m.1 12.6h0m.1-28.9h0m.1-14.3h0m.1 56h0m.1-8.3h0m.1-50h0m.1 12.8h0m.1 38.5h0m.1-27.3h0m.1-13.3h0m.1-19.1h0m0 36.6h0m.1 31.1h0m.1-35.8h0m.1 20h0m.1-12.5h0m.1 12.6h0m.1-21.2h0m.1 1.4h0m.1-23.7h0m.1 34.3h0m.1-13.6h0m.1 12h0m0 14.8h0m.1-14.6h0m.1-4.9h0m.1-16.4h0m.1 46.6h0m.1-15.9h0m.1-35.8h0m.1 42.5h0m.1 11.4h0m.1-2.6h0m.1-46.3h0m.1 27.9h0m.1 35.8h0m0-44.6h0m.1 18.4h0m.1-19.3h0m.1.8h0m.1 2.2h0m.1 6.7h0m.1 17.3h0m.1-14.4h0m.1 4.7h0m.1 21.9h0m.1-13.3h0m.1-6.9h0m0 20.5h0m.1-44.8h0m.1 14.4h0m.1 29h0m.1-12.2h0m.1-2h0m.1 3.4h0m.1 2.6h0m.1 10.2h0m.1-44.3h0m.1 40.9h0m.1-41.2h0m0 29.7h0m.1-12.6h0m.1 33.6h0m.1-47.8h0m.1 24.5h0m.1-38.6h0m.1 65.8h0m.1-35.9h0m.1 33.8h0m.1-45.3h0m.1-10.2h0m.1 66h0m0-26h0m.1-4.5h0m.1-18h0m.1 47.2h0m.1-25.5h0m.1-13.4h0m.1 28.9h0m.1-35.1h0m.1 33.5h0m.1 4h0m.1-19.1h0m.1 35.2h0m0-11.3h0m.1-19.7h0m.1 23.8h0m.1-11.3h0m.1-49.6h0m.1 29.7h0m.1-5.7h0m.1 24.6h0m.1-22.7h0m.1 25.4h0m.1 2.7h0m.1-6.5h0m0 1.8h0m.1-5.7h0m.1-8.9h0m.1 8.1h0m.1-20.7h0m.1-29.7h0m.1 9.9h0m.1 13.7h0m.1 31.4h0m.1-24.8h0m.1 31.8h0m.1-35.3h0m.1 51.7h0m0-29.1h0m.1-26.5h0m.1 38.3h0m.1 16.2h0m.1-23.3h0m.1-5.1h0m.1-27.2h0m.1 25.8h0m.1.4h0m.1-32h0m.1 13.9h0m.1-5.9h0m0 32.2h0m.1-9.6h0m.1-1.1h0m.1 33.2h0m.1-52.3h0m.1-38.3h0m.1 80h0m.1-41.4h0m.1-34.2h0m.1 20.1h0m.1 2.5h0m.1 55.3h0m0-61.4h0m.1 12h0m.1-11.7h0m.1 31.8h0m.1 6.7h0m.1 3.3h0m.1-54.2h0m.1-7.6h0m.1 31.1h0m.1-22.3h0m.1 9.8h0m.1 7.2h0m0-29.2h0m.1 31.3h0m.1 46.5h0m.1-38.8h0m.1-17.3h0m.1 7.8h0m.1-16h0m.1 32.9h0m.1-10.2h0m.1-6.7h0m.1-21.6h0m.1 18.5h0m0-9.6h0m.1 25.5h0m.1-62.9h0m.1 67.3h0m.1-3.5h0m.1-67.7h0m.1 32.9h0m.1 21.6h0m.1-12.3h0m.1.6h0m.1-14.3h0m.1 44.6h0m0-50.6h0m.1 33.6h0m.1 13.1h0m.1-8.8h0m.1-9.9h0m.1-40.7h0m.1 15.1h0m.1 18.4h0m.1 36.5h0m.1-29.4h0m.1 6.7h0m.1-15.1h0m0 33.1h0m.1-13.1h0m.1-17.2h0m.1 58.1h0m.1-46.4h0m.1 9.8h0m.1 26h0m.1-3.8h0m.1-26.7h0m.1-35.5h0m.1 20.9h0m.1 14.2h0m.1 11.4h0m0-21.7h0m.1 22.5h0m.1 20.5h0m.1-23.7h0m.1-47.4h0m.1 23.1h0m.1 33.7h0m.1 9.3h0m.1 19.9h0m.1-46.2h0m.1-5.4h0m.1 60.2h0m0-22.5h0m.1-4.1h0m.1-22.2h0m.1 7.3h0m.1-7.7h0m.1 27.1h0m.1 14.8h0m.1-13.5h0m.1-33.9h0m.1 45.1h0m.1-23.5h0m.1 1.8h0m0 13.2h0m.1-.2h0m.1-17.5h0m.1-24.2h0m.1 32.3h0m.1-6.8h0m.1 8h0m.1-24.2h0m.1 5.9h0m.1 23.4h0m.1-48.9h0m.1 43h0m0-26.5h0m.1-9.1h0m.1 20.9h0m.1 5.4h0m.1-25.4h0m.1-7.2h0m.1-25.4h0m.1 40.8h0m.1 28.9h0m.1-24.9h0m.1 6.7h0m.1-27h0m0-42.9h0m.1 100.1h0m.1-29.7h0m.1-39.1h0m.1 12.8h0m.1 41.2h0m.1-35h0m.1 35.6h0m.1-33.9h0m.1 29.6h0m.1-73.7h0m.1 37.3h0m0 12.4h0m.1 17.3h0m.1-28h0m.1 11.4h0m.1-18.4h0m.1-.8h0m.1 18.4h0m.1 19.4h0m.1-13.5h0m.1-23h0m.1 21.7h0m.1 11.9h0m.1-10h0m0-9h0m.1 4.4h0m.1 15.9h0m.1-46.1h0m.1 75.8h0m.1-76.7h0m.1 54.8h0m.1-35.3h0m.1-12.1h0m.1 37h0m.1-34.3h0m.1-2.1h0m0 11.2h0m.1 8.2h0m.1 25.7h0m.1-41h0m.1 16.8h0m.1 13.2h0m.1-9.8h0m.1-6.9h0m.1-44.9h0m.1-8.7h0m.1 54.1h0m.1 13.7h0m0 15.7h0m.1-45.1h0m.1 9.2h0m.1-22.2h0m.1 22.5h0m.1 33.8h0m.1-50h0m.1 21.9h0m.1-3.9h0m.1 2.8h0m.1-31.3h0m.1 41h0m0-13.7h0m.1 14.9h0m.1 28.5h0m.1-45.7h0m.1 36.8h0m.1 23.5h0m.1-56.9h0m.1-34.9h0m.1 56.3h0m.1-15.9h0m.1 28.6h0m.1-15.9h0m0-13.5h0m.1 11.1h0m.1 24.1h0m.1-15.7h0m.1-14.7h0m.1 9.5h0m.1-11.2h0m.1-13.2h0m.1 21.5h0m.1-40.5h0m.1 61.6h0m.1-1.8h0m0 2.4h0m.1-32.9h0m.1-17h0m.1 2.3h0m.1 8.1h0m.1 33.6h0m.1-19.9h0m.1 12.9h0m.1 36.7h0m.1-49.5h0m.1 11.7h0m.1-14.9h0m.1 27.8h0m0-1.5h0m.1-16.7h0m.1-19.2h0m.1 20.6h0m.1 26.2h0m.1-37.3h0m.1 15h0m.1-7.3h0m.1-2.9h0m.1 11.6h0m.1-19.9h0m.1 28.3h0m0-7.1h0m.1-7.7h0m.1-30.3h0m.1 48.5h0m.1-31.9h0m.1 33.3h0m.1 10.2h0m.1-40.6h0m.1 35.7h0m.1-32.9h0m.1 18.6h0m.1 13.8h0m0-26.6h0m.1 6h0m.1-3h0m.1-27.4h0m.1 35.9h0m.1-54.1h0m.1 38.2h0m.1-10.3h0m.1 12.8h0m.1-17.8h0m.1 33.8h0m.1-30.8h0m0 5.8h0m.1 17.2h0m.1-48.7h0m.1 63.8h0m.1-31.2h0m.1 8.1h0m.1-25.8h0m.1 6.9h0m.1-7.7h0m.1 24.7h0m.1 10.2h0m.1-14.9h0m0 7h0m.1 41.4h0m.1-52.7h0m.1 13.1h0m.1-71.7h0m.1 55.4h0m.1-9.2h0m.1-40.2h0m.1 70.3h0m.1 5.6h0m.1-48.5h0m.1 33.6h0m0-12.1h0m.1-29.8h0m.1-4.3h0m.1 44.9h0m.1-59.5h0m.1 77.6h0m.1-31.7h0m.1-11.9h0m.1 13.9h0m.1 13.2h0m.1-54.1h0m.1 25.4h0m0 35.7h0m.1-24.6h0m.1 4.2h0m.1-5.1h0m.1 26.7h0m.1-24.5h0m.1-23.6h0m.1 58.6h0m.1-73.1h0m.1 37.3h0m.1-8.4h0m.1 13.8h0m.1-22.9h0m0 2.2h0m.1-35.5h0m.1 54.6h0m.1 9.1h0m.1-32.3h0m.1 23.2h0m.1 19.6h0m.1-21.6h0m.1 20.6h0m.1-3.3h0m.1-11.7h0m.1 6.8h0m0 5.2h0m.1 8.6h0m.1-10.9h0m.1-21.9h0m.1-18.9h0m.1 46h0m.1-2.7h0m.1-17.9h0m.1 19.9h0m.1 7.2h0m.1-25.9h0m.1-14.5h0m0-8.4h0m.1 54.2h0m.1-40.6h0m.1 61.5h0m.1-72.2h0m.1 5.4h0m.1 28.5h0m.1-47.8h0m.1 33.2h0m.1 25.9h0m.1.9h0m.1 11h0m0-28.1h0m.1 36.8h0m.1-24.7h0m.1-1.8h0m.1-29.7h0m.1 20.8h0m.1 5.5h0m.1 12.2h0m.1-16.3h0m.1-4.6h0m.1 35.3h0m.1 10.7h0m0-49.5h0m.1 55.6h0m.1-38.7h0m.1 9.1h0m.1-20h0m.1-21.5h0m.1-32.4h0m.1 72.4h0m.1-32.9h0m.1-3.2h0m.1 33.2h0m.1-41.1h0m0 16.1h0m.1 7.9h0m.1 30.2h0m.1 26.7h0m.1-59.1h0m.1 11.5h0m.1 18.1h0m.1-21h0m.1-36h0m.1 46h0m.1-9.8h0m.1 29.1h0m.1-10.1h0m0-2.9h0m.1-4.6h0m.1 22h0m.1-25.5h0m.1 3.7h0m.1-22.5h0m.1 9.8h0m.1-51h0m.1 29.5h0m.1 44.7h0m.1-6.6h0m.1-68.2h0m0 42.8h0m.1 29.2h0m.1-1.3h0m.1-19.9h0m.1-19.5h0m.1 27.3h0m.1-1h0m.1-11.2h0m.1-16.4h0m.1 5.2h0m.1 5.3h0m.1-43.6h0m0 37.9h0m.1 27.2h0m.1-7.2h0m.1 19h0m.1-53.6h0m.1 37.8h0m.1-60.5h0m.1 16.4h0m.1 25.8h0m.1-37.6h0m.1 13h0m.1 12.7h0m0 14.1h0m.1-10.8h0m.1-32h0m.1 15.2h0m.1-9.3h0m.1.2h0m.1 25.9h0m.1-8.5h0m.1-32.8h0m.1 37.3h0m.1 18.7h0m.1-17.8h0m0-.8h0m.1-25.7h0m.1 15h0m.1 2.1h0m.1 26.1h0m.1-23h0m.1-14.9h0m.1 20.8h0m.1 41.6h0m.1-23.2h0m.1-11.6h0m.1 15.1h0m0-6.6h0m.1-14.5h0m.1 48.9h0m.1-12.4h0m.1-41.8h0m.1 13.1h0m.1 8.9h0m.1-5.9h0m.1 24.6h0m.1-40.7h0m.1 32.9h0m.1 11.5h0m.1-34.1h0m0 29.3h0m.1-15.6h0m.1-1.5h0m.1 30.8h0m.1-20.5h0m.1 9.4h0m.1-21.1h0m.1 27.3h0m.1-3.1h0m.1-45.7h0m.1 29.7h0m.1 20.7h0m0-40.8h0m.1 44.3h0m.1-34.2h0m.1 3.5h0m.1 17.4h0m.1-20h0m.1-6h0m.1 36.3h0m.1 6.4h0m.1-57.7h0m.1 1.8h0m.1 5.4h0m0 20.8h0m.1-14.3h0m.1 13.4h0m.1-26.7h0m.1 15.7h0m.1-27.1h0m.1 21.3h0m.1-39.8h0m.1 25.1h0m.1 34.1h0m.1-36.4h0m.1 21h0m0-3.5h0m.1-7.2h0m.1.4h0m.1 41.6h0m.1-1.7h0m.1-61h0m.1 40.9h0m.1-26.8h0m.1 34.8h0m.1-23.5h0m.1 6.9h0m.1-8h0m0 10h0m.1 23.1h0m.1 38.8h0m.1-39.6h0m.1-72.7h0m.1 58h0m.1 44.6h0m.1-17.7h0m.1-16.7h0m.1 32.9h0m.1-52.8h0m.1 58.4h0m0-39h0m.1-23.2h0m.1 54.1h0m.1-20.7h0m.1-2.9h0m.1 23.5h0m.1-33.5h0m.1 27h0m.1 13.4h0m.1.7h0m.1-20.3h0m.1-14.6h0m0 7h0m.1 35.6h0m.1-35h0m.1-10.6h0m.1 10h0m.1 36.1h0m.1-35h0m.1-11.7h0m.1 47h0m.1-18.5h0m.1-42h0m.1 15.8h0m.1 14.6h0m0-19.2h0m.1 7.7h0m.1-5.8h0m.1-37.1h0m.1 55.8h0m.1-53.9h0m.1 15.3h0m.1-5.1h0m.1 13.6h0m.1-28.4h0m.1 19.3h0m.1 14.4h0m0-38.8h0m.1 20.4h0m.1 6h0m.1-11.2h0m.1-8.8h0m.1 12.8h0m.1-1.3h0m.1 6.6h0m.1-15.6h0m.1 15.4h0m.1 12.4h0m.1-8.9h0m0-30h0m.1-3.8h0m.1 26.2h0m.1 1.6h0m.1-7h0m.1 25.7h0m.1-11.5h0m.1-41.6h0m.1 28.7h0m.1-10.3h0m.1-7.3h0m.1 45.5h0m0 17.2h0m.1-20.9h0m.1-45.9h0m.1 32.6h0m.1-31.2h0m.1 26.4h0m.1 5.2h0m.1-2.2h0m.1 24.8h0m.1-34.9h0m.1 16.2h0m.1-32.4h0m0 21h0m.1 39.8h0m.1-19.5h0m.1-31.9h0m.1 26.8h0m.1 4.9h0m.1-34.2h0m.1 52.1h0m.1-22.4h0m.1 8.6h0m.1-41.4h0m.1 43.9h0m0-8.4h0m.1-21.4h0m.1 33.8h0m.1 10.8h0m.1-23h0m.1-26.8h0m.1-2.3h0m.1 46.6h0m.1 31.4h0m.1-33h0m.1 9.1h0m.1 29.8h0m.1-23.3h0m0 5.7h0m.1-21.6h0m.1-7.3h0m.1 29.2h0m.1-.9h0m.1-21h0m.1-49.6h0m.1 83.9h0m.1-15.3h0m.1-18.4h0m.1 40.6h0m.1-47.8h0m0 1.6h0m.1 33h0m.1-10.5h0m.1-2.6h0m.1 1.1h0m.1-34.2h0m.1 36.8h0m.1-22.4h0m.1-5.9h0m.1 5.1h0m.1 18.4h0m.1-27.3h0m0-1h0m.1-18.2h0m.1 46.7h0m.1 1.6h0m.1-22h0m.1-16.6h0m.1 32.6h0m.1-31h0m.1 40.4h0m.1-22.4h0m.1-38.8h0m.1 26.4h0m0 15.2h0m.1-34.3h0m.1 15.6h0m.1-4.6h0m.1 13.7h0m.1 3.4h0m.1 9.3h0m.1-7.6h0m.1-7.9h0m.1-38.1h0m.1-.1h0m.1 23.5h0m0 26.3h0m.1 27h0m.1-31.3h0m.1 3.4h0m.1-16.8h0m.1 9h0m.1-.4h0m.1-14.4h0m.1-24.7h0m.1 38h0m.1 7.6h0m.1 1h0m0-39h0m.1 20.3h0m.1 3.3h0m.1-10.9h0m.1 12.6h0m.1 2.5h0m.1-13.8h0m.1 33.5h0m.1-6.3h0m.1-29.6h0m.1-7.6h0m.1-34.6h0m0 60.9h0m.1-37.2h0m.1 40.4h0m.1-40.8h0m.1-3.6h0m.1 49.6h0m.1-14.1h0m.1-48.8h0m.1 36.2h0m.1 22.8h0m.1 10h0m.1-6.9h0m.1-15.9h0m0-35.4h0m.1-20.4h0m.1 40.8h0m.1 34.7h0m.1-40.8h0m.1 30.5h0m.1 10.4h0m.1-30.4h0m.1 13.6h0m.1 12.4h0m.1-27h0m.1 39.3h0m0-10.1h0m.1-18.3h0m.1 6h0m.1 15.6h0m.1 3.4h0m.1-41.1h0m.1 5.2h0m.1 2.6h0m.1 9.3h0m.1 1.5h0m.1 5h0m.1 11.8h0m0-32.9h0m.1 22.3h0m.1-6.2h0m.1-9.6h0m.1 12.9h0m.1 3.9h0m.1 8.1h0m.1-31.2h0m.1 42.7h0m.1-38.3h0m.1 6.1h0m.1 7h0m0 13.2h0m.1-32.3h0m.1 42.7h0m.1-24.6h0m.1-17.2h0m.1 30.6h0m.1 6h0m.1-13.7h0m.1 18.6h0m.1-15.8h0m.1 20.3h0m.1-34.6h0m0 10.3h0m.1-39.5h0m.1 40.3h0m.1 15.3h0m.1-17.2h0m.1-10h0m.1 5h0m.1 3.3h0m.1 3.1h0m.1 16.9h0m.1-9.3h0m.1 4.7h0m0-18.3h0m.1-1.3h0m.1 12.8h0m.1-5.8h0m.1-3.8h0m.1 23.7h0m.1-26.7h0m.1 9.7h0m.1 21.1h0m.1-19h0m.1 23.4h0m.1-34.1h0m.1 14.6h0m0-7.2h0m.1 20.7h0m.1-23.7h0m.1-.1h0m.1 28h0m.1-28.2h0m.1 5.1h0m.1 20.5h0m.1-14.2h0m.1-41h0m.1-2.2h0m.1 66.2h0m0-59.4h0m.1 15.6h0m.1-4.9h0m.1 43.5h0m.1-11.8h0m.1 4.1h0m.1-28.3h0m.1 22.1h0m.1-22.4h0m.1 13h0m.1 6.6h0m.1-10.3h0m0-17.4h0m.1 11.8h0m.1-27.5h0m.1 46.9h0m.1-50.9h0m.1 55.8h0m.1-68.4h0m.1 28.7h0m.1-10.5h0m.1-4h0m.1-.4h0m.1 12.4h0m0-5.8h0m.1 3.9h0m.1 24.1h0m.1-54.8h0m.1 34.2h0m.1-2.6h0m.1-7.1h0m.1 16.1h0m.1-13.6h0m.1 7h0m.1 8.4h0m.1 8.5h0m0-40.7h0m.1 52.9h0m.1-25.1h0m.1 5.2h0m.1-29.9h0m.1 39.2h0m.1-6.7h0m.1 3h0m.1 8.9h0m.1-6.9h0m.1 3.3h0m.1-24.3h0m0 8.3h0m.1-25h0m.1 50.2h0m.1-.8h0m.1-11.6h0m.1 24.8h0m.1-55.7h0m.1 46.9h0m.1 27.1h0m.1-20h0m.1-52.7h0m.1 40.7h0m.1 12.9h0m0-24.2h0m.1.1h0m.1-12.9h0m.1 27.1h0m.1-9.1h0m.1.4h0m.1-8.1h0m.1-3.3h0m.1 29.9h0m.1 13.3h0m.1-9h0m.1-46.3h0m0 19.8h0m.1 12.9h0m.1-38.4h0m.1 11.1h0m.1 27.6h0m.1-48.7h0m.1 48.8h0m.1-26.4h0m.1-19.9h0m.1 14.3h0m.1-1.8h0m.1 4.2h0m0 22.3h0m.1-35.1h0m.1 16h0m.1 2.4h0m.1-4.1h0m.1-38.6h0m.1 21.2h0m.1 17.5h0m.1-24h0m.1 11.8h0m.1 12h0m.1 5.7h0m0-23.5h0m.1-3.6h0m.1 23.4h0m.1 11.1h0m.1-42h0m.1 2.7h0m.1 4h0m.1 17.7h0m.1-9.9h0m.1-.5h0m.1 28h0m.1-50.6h0m0 42.9h0m.1-10.3h0m.1 8.1h0m.1 2h0m.1 4.6h0m.1 0h0m.1 13.2h0m.1-68.5h0m.1 77.5h0m.1-80h0m.1 59.4h0m.1 18.7h0m0-43.3h0m.1 55.3h0m.1-18.8h0m.1 17.8h0m.1-47.4h0m.1 18.8h0m.1 11.2h0m.1 14h0m.1-8h0m.1-39h0m.1 16.7h0m.1 32.1h0m0-27.6h0m.1 32.1h0m.1-23h0m.1 8.4h0m.1 1.5h0m.1 30.2h0m.1-59.1h0m.1 43h0m.1-25.7h0m.1 17h0m.1-67.9h0m.1 47.4h0m.1 26.4h0m0-25h0m.1-16.4h0m.1 45.6h0m.1-16.8h0m.1-8.1h0m.1-1.5h0m.1-10.6h0m.1 31h0m.1-46.4h0m.1 11.2h0m.1 35.5h0m.1-14.4h0m0-26h0m.1 51.5h0m.1-42.3h0m.1 12.5h0m.1 6.7h0m.1-5.8h0m.1 10.8h0m.1-54.4h0m.1 12.8h0m.1 30.1h0m.1 21.3h0m.1-1.7h0m0-11.7h0m.1 1.8h0m.1-3.5h0m.1 17.2h0m.1-73.1h0m.1 49.4h0m.1-56.5h0m.1 35.2h0m.1 22.5h0m.1 14.6h0m.1 3.1h0m.1-15.2h0m0 16.4h0m.1-38.1h0m.1 2.9h0m.1-.4h0m.1 6.6h0m.1-8h0m.1 39.4h0m.1 2.4h0m.1-24.1h0m.1 8.2h0m.1-33.9h0m.1 49h0m0-7.5h0m.1-22.1h0m.1 28h0m.1-11.2h0m.1-17.2h0m.1 26.6h0m.1-50.6h0m.1 25.9h0m.1 37.8h0m.1-23.6h0m.1-1.7h0m.1-38.7h0m0 16.8h0m.1 47.8h0m.1-36.9h0m.1 5.7h0m.1-8.5h0m.1 18.5h0m.1-35.4h0m.1 34.1h0m.1-41.7h0m.1 37.4h0m.1 37.4h0m.1-35.4h0m.1-1h0m0-17.6h0m.1-16h0m.1 5.3h0m.1-9.8h0m.1 17.2h0m.1.8h0m.1-18.9h0m.1 44.1h0m.1-28.1h0m.1 36h0m.1-5.7h0m.1-38.3h0m0 25.9h0m.1-9.3h0m.1 11.3h0m.1-42.4h0m.1 60h0m.1-45.1h0m.1 15.4h0m.1-10.7h0m.1 9.3h0m.1-2.1h0m.1-16.5h0m.1-2.5h0m0 17.7h0m.1-15.8h0m.1-21.9h0m.1 43.4h0m.1 3.9h0m.1-40.8h0m.1 15.1h0m.1 19.4h0m.1 12.6h0m.1 11.4h0m.1-50.5h0m.1 20.9h0m0-17.2h0m.1 41h0m.1-19.7h0m.1 14.1h0m.1-34.7h0m.1 39.9h0m.1-6.5h0m.1.5h0m.1 3.7h0m.1-38.7h0m.1 57.8h0m.1-33.8h0m0-22.1h0m.1 42.9h0m.1-19.1h0m.1 21.3h0m.1-40.4h0m.1 6.7h0m.1-.5h0m.1 19.3h0m.1 8.6h0m.1-37.1h0m.1 35.8h0m.1 19.8h0m0-.4h0m.1-12.6h0m.1-35.3h0m.1 12h0m.1 35h0m.1 6.3h0m.1-12.6h0m.1-14.6h0m.1-19.6h0m.1 24.8h0m.1 15.2h0m.1-16h0m.1 1.9h0m0-28.6h0m.1 38.3h0m.1 23h0m.1-38.1h0m.1-22.4h0m.1-5.2h0m.1 47.6h0m.1-21.4h0m.1-6.5h0m.1-2.6h0m.1 2.7h0m.1 31.8h0m0-26.7h0m.1-6.6h0m.1-7.7h0m.1-4.7h0m.1-4.4h0m.1 9.8h0m.1 32.7h0m.1-31.1h0m.1 15.4h0m.1-35.9h0m.1 52.6h0m.1-31.4h0m0-13.8h0m.1 31.2h0m.1-8.3h0m.1-2.5h0m.1-57.6h0m.1 60.3h0m.1-4.4h0m.1-48.4h0m.1 23.2h0m.1 12.4h0m.1 26h0m.1-60h0m0 22.3h0m.1-8.3h0m.1 16.1h0m.1 20.5h0m.1-5.7h0m.1-44.8h0m.1 10.3h0m.1 26.1h0m.1-.7h0m.1-.9h0m.1 3.6h0m.1-36.4h0m0 17.8h0m.1-30.2h0m.1 79.6h0m.1-63.1h0m.1-6.1h0m.1 8.6h0m.1 39.7h0m.1-41.7h0m.1 61.5h0m.1-20.8h0m.1-2.8h0m.1-32.3h0m0 54.9h0m.1-13.8h0m.1-47.5h0m.1 21.3h0m.1 35.1h0m.1-23.3h0m.1-4.5h0m.1-3.2h0m.1 40.3h0m.1-18h0m.1 22.2h0m.1-28.7h0m0-18h0m.1 10.4h0m.1-11.3h0m.1 43.4h0m.1-10.5h0m.1-55.6h0m.1 44.5h0m.1-13h0m.1 13h0m.1-22.6h0m.1 21.4h0m.1 4.2h0m.1-8.4h0m0 14.8h0m.1-10.6h0m.1 7h0m.1-3.5h0m.1-15.7h0m.1 27.6h0m.1-37.7h0m.1 22.6h0m.1-.4h0m.1 7.1h0m.1-51.3h0m.1 47.1h0m0 12.5h0m.1-22.9h0m.1.8h0m.1-22.3h0m.1 32.5h0m.1-6.6h0m.1-9.9h0m.1-11.4h0m.1 50.4h0m.1-13.3h0m.1-21.7h0m.1-26.5h0m0 1.8h0m.1 36.8h0m.1-28.1h0m.1 38h0m.1 4h0m.1-51.6h0m.1 44.6h0m.1-46.2h0m.1 57.8h0m.1-17.9h0m.1-10.9h0m.1-17.6h0m0 4.9h0m.1 16.9h0m.1 15.8h0m.1-16.3h0m.1-3h0m.1-28h0m.1 65.9h0m.1-65.3h0m.1 48h0m.1-7.5h0m.1-9.5h0m.1-7.8h0m0 7.5h0m.1 8h0m.1-4.6h0m.1 33.6h0m.1-77.4h0m.1 77.4h0m.1-71.5h0m.1 56.3h0m.1 1.6h0m.1-78.7h0m.1 61.1h0m.1-5.2h0m0 3.1h0m.1 8.1h0m.1-20.3h0m.1 21h0m.1-44.3h0m.1 61.3h0m.1 13.8h0m.1-34.4h0m.1-20.1h0m.1 35.8h0m.1-13.8h0m.1-22.3h0m.1 17.3h0m0 1.3h0m.1 20.9h0m.1-54.1h0m.1 50.3h0m.1 4.3h0m.1-49.3h0m.1 23h0m.1-30.5h0m.1 1.5h0m.1 21.4h0m.1-39.2h0m.1 32.2h0m0-6.4h0m.1-1.3h0m.1-3.1h0m.1 18.5h0m.1-40h0m.1-8.1h0m.1 18h0m.1 10.9h0m.1 16.8h0m.1 11.2h0m.1-23.9h0m.1 1.8h0m0-1.7h0m.1-9.4h0m.1-7.4h0m.1-8.7h0m.1 69.5h0m.1-44.9h0m.1 28.4h0m.1-22.4h0m.1 3.4h0m.1-5h0m.1-23.9h0m.1 9.3h0m0-27.8h0m.1 14.6h0m.1 45.7h0m.1-54.5h0m.1 71.4h0m.1-31.2h0m.1-6.3h0m.1-2.8h0m.1 11.8h0m.1-13.5h0m.1 29.6h0m.1-16.8h0m0 10.7h0m.1-8h0m.1-36.9h0m.1 17.7h0m.1 49.4h0m.1-44h0m.1-27.4h0m.1 56.8h0m.1-6.4h0m.1-21.9h0m.1 28.7h0m.1-41.9h0m0 44.2h0m.1.2h0m.1-30.1h0m.1-10.9h0m.1 35.8h0m.1-55.6h0m.1 60.6h0m.1-9.4h0m.1 20h0m.1-47.5h0m.1 21.4h0m.1 17.9h0m.1-38h0m0-3.6h0m.1 46.8h0m.1-13.8h0m.1-40.2h0m.1 17.4h0m.1 8.8h0m.1 1.3h0m.1 32.7h0m.1-26.1h0m.1 23.4h0m.1 1h0m.1-23.9h0m0 17.5h0m.1-32.6h0m.1 4.7h0m.1 29.8h0m.1-10.6h0m.1 29.6h0m.1-4.3h0m.1-58.9h0m.1 21.9h0m.1-20.3h0m.1 29.2h0m.1-3.5h0m0-52.3h0m.1 96.8h0m.1-33.7h0m.1 4.1h0m.1-21.8h0m.1 34.4h0m.1-4.1h0m.1-7.5h0m.1.1h0m.1-38.1h0m.1 53.8h0m.1-26.5h0m0 5.1h0m.1-9.9h0m.1 17.1h0m.1 19.6h0m.1-24.3h0m.1-22.9h0m.1 5.1h0m.1-23.2h0m.1-.5h0m.1 34.2h0m.1-15.7h0m.1 40.6h0m0-16.7h0m.1 17.7h0m.1-65.7h0m.1 29h0m.1 26.8h0m.1 9h0m.1-22.8h0m.1-24.4h0m.1 45.8h0m.1-32.2h0m.1-1.8h0m.1 26.6h0m0-32.4h0m.1 22.8h0m.1-7.3h0m.1-7.6h0m.1 27h0m.1-9.2h0m.1-7h0m.1-49.1h0m.1 81.7h0m.1-45h0m.1 14.1h0m.1 11.3h0m0-39.2h0m.1 23.6h0m.1 14.2h0m.1-12.5h0m.1-5.8h0m.1 12.4h0m.1-9.7h0m.1-3.5h0m.1-39.9h0m.1 17.5h0m.1-6.2h0m.1 55.8h0m.1-49.1h0m0-24.1h0m.1 19.2h0m.1 17h0m.1 15.5h0m.1-20h0m.1 8.5h0m.1-5.9h0m.1 16h0m.1 16.4h0m.1-30.7h0m.1-11.3h0m.1-32.4h0m0 63.4h0m.1-57.7h0m.1 30.5h0m.1-.5h0m.1 1.3h0m.1-3.6h0m.1-17h0m.1 47.8h0m.1-41.3h0m.1 4h0m.1 28.9h0m.1-57h0m0 21.8h0m.1-24.7h0m.1 37.2h0m.1-13.1h0m.1 10.1h0m.1 7.9h0m.1-18.7h0m.1-.9h0m.1 6.9h0m.1 9.4h0m.1-3.9h0m.1 2.9h0m0 6.7h0m.1-.4h0m.1.8h0m.1-7.5h0m.1 2.9h0m.1 20h0m.1-26.2h0m.1 24.8h0m.1 11.6h0m.1-56.1h0m.1 21.8h0m.1 3.8h0m0 22.6h0m.1-8.4h0m.1-7.1h0m.1 14.8h0m.1-24.1h0m.1 20h0m.1-19.2h0m.1 13.4h0m.1 1.1h0m.1 2.5h0m.1-29h0m.1 21.9h0m0 10.2h0m.1 7.1h0m.1-26.3h0m.1 13.2h0m.1 24.8h0m.1-23h0m.1-45.9h0m.1 32.3h0m.1-33.2h0m.1 19.7h0m.1 35.6h0m.1 3.3h0m.1 0h0m0 .4h0m.1 2h0m.1 19.5h0m.1-59.4h0m.1 37h0m.1 3.6h0m.1 21h0m.1-26.4h0m.1-14.8h0m.1 26.1h0m.1 7h0m.1-.4h0m0-23.3h0m.1-1h0m.1-31.3h0m.1 51.3h0m.1-.8h0m.1-55.9h0m.1 67.4h0m.1-15h0m.1-39.1h0m.1-7h0m.1 41.6h0m.1-16.7h0m0 8.6h0m.1-6.1h0m.1 24.9h0m.1-24.8h0m.1-19h0m.1 16.3h0m.1-10.4h0m.1 42.1h0m.1-18h0m.1-2.1h0m.1-22.6h0m.1 8.6h0m0 18.1h0m.1-25.6h0m.1-9.3h0m.1 1.8h0m.1 19.5h0m.1-1.6h0m.1-24.9h0m.1 33.7h0m.1-15.5h0m.1 44.8h0m.1-40.7h0m.1-7.1h0m0-2.9h0m.1-21.1h0m.1 44h0m.1-53.1h0m.1 44.5h0m.1 15.3h0m.1-10h0m.1 35.6h0m.1-58.6h0m.1 2.9h0m.1 19h0m.1 36.5h0m0 6.5h0m.1-3.9h0m.1-29.2h0m.1-36.5h0m.1 30.1h0m.1 11.2h0m.1-4.8h0m.1-10.7h0m.1 15.5h0m.1-43.9h0m.1 34.6h0m.1-16.6h0m0 37.7h0m.1-23.6h0m.1-9.1h0m.1 25.6h0m.1-35.2h0m.1-34.3h0m.1 56.2h0m.1.2h0m.1-15.5h0m.1-26.1h0m.1 33.1h0m.1-30.8h0m.1 21.9h0m0-28.9h0m.1 16.9h0m.1-10.2h0m.1 20.9h0m.1-9.7h0m.1 32.5h0m.1-27.6h0m.1 19.8h0m.1 4h0m.1-7.8h0m.1-9.8h0m.1-12.4h0m0 21.5h0m.1-18.5h0m.1 4.6h0m.1-57.9h0m.1 48.1h0m.1 31.4h0m.1-52h0m.1-31.1h0m.1 66.8h0m.1-16.1h0m.1 32.9h0m.1-.9h0m0-14.9h0m.1-40.1h0m.1 63.5h0m.1-12.3h0m.1-72h0m.1 95.5h0m.1-35.8h0m.1 8.2h0m.1-9.7h0m.1-8.7h0m.1-3.9h0m.1 38.3h0m0-20.6h0m.1-19.8h0m.1-4.3h0m.1 22h0m.1 16.1h0m.1-18.2h0m.1 15h0m.1 3.6h0m.1-20.7h0m.1 37.9h0m.1-6.9h0m.1-30.9h0m0-28.4h0m.1 44.6h0m.1 27.3h0m.1-19.9h0m.1-3.1h0m.1 15.2h0m.1 6.5h0m.1 2.8h0m.1 3h0m.1-17h0m.1 6.9h0m.1-35.7h0m0 28.1h0m.1-58h0m.1 36.7h0m.1-8.6h0m.1 56h0m.1-38.7h0m.1-12.1h0m.1 33.6h0m.1-33.2h0m.1 15.7h0m.1 2.5h0m.1 2.9h0m.1-11.3h0m0-77.7h0m.1 77.5h0m.1 13.8h0m.1-4.4h0m.1-5.6h0m.1-15.5h0m.1 16.6h0m.1-3.7h0m.1.5h0m.1-6.1h0m.1-20.8h0m.1 5.9h0m0 23.1h0m.1-67.2h0m.1 53.5h0m.1 42.1h0m.1-47.5h0m.1 4.4h0m.1-12.1h0m.1-43.5h0m.1 82.2h0m.1-48.6h0m.1 21.6h0m.1-56.7h0m0 84.6h0m.1-51.1h0m.1 33.5h0m.1-7.9h0m.1-11.1h0m.1-36h0m.1 64.3h0m.1-14.5h0m.1 9.3h0m.1-3.5h0m.1 11h0m.1-24.9h0m0-29.6h0m.1 48.4h0m.1-33.9h0m.1-2h0m.1 11h0m.1 32.5h0m.1-32.6h0m.1 18.6h0m.1-3.7h0m.1 21.8h0m.1-84.2h0m.1 90.6h0m0-35.1h0m.1-22.5h0m.1 18.1h0m.1.3h0m.1-44.8h0m.1 29.8h0m.1-17.5h0m.1 19.9h0m.1 26h0m.1 1.5h0m.1-46.2h0m.1 12.9h0m0 36.5h0m.1-16.3h0m.1 2.7h0m.1-38h0m.1 68.3h0m.1-46.3h0m.1-15.1h0m.1 61.7h0m.1-4.6h0m.1-17.2h0m.1-43.4h0m.1 37.4h0m.1-19.1h0m0 18.5h0m.1-4.6h0m.1-5.6h0m.1 59.4h0m.1-5.9h0m.1-33.6h0m.1-1.1h0m.1 4.5h0m.1 23h0m.1-64h0m.1 42.6h0m.1-8.2h0m0-16.5h0m.1 24.4h0m.1 6.2h0m.1 16.1h0m.1-37.7h0m.1 42.7h0m.1-21.3h0m.1-7.9h0m.1 27.8h0m.1-13.7h0m.1-11.6h0m.1-38.1h0m0 48.8h0m.1-25.9h0m.1-1.6h0m.1 5h0m.1 12.9h0m.1-6.4h0m.1-39.6h0m.1 20.3h0m.1 26.1h0m.1 14.9h0m.1-37.8h0m.1-13.1h0m0 5.1h0m.1 22.3h0m.1 7.6h0m.1-26.4h0m.1 30.9h0m.1-22.6h0m.1-3.4h0m.1-8.1h0m.1 33.3h0m.1-31.4h0m.1 38.6h0m.1-20.5h0m0 7.8h0m.1-.2h0m.1-13.6h0m.1 12.1h0m.1-16.7h0m.1 1.7h0m.1 12.6h0m.1 11h0m.1-28.3h0m.1 3.4h0m.1 11.8h0m.1 15.1h0m0-3.3h0m.1-11.7h0m.1-2.5h0m.1-5.6h0m.1 33.3h0m.1-28.9h0m.1-11.3h0m.1 10.4h0m.1-10.5h0m.1 30.7h0m.1-17.1h0m.1-16h0m0 20.4h0m.1 2.8h0m.1-.8h0m.1-44h0m.1 87.3h0m.1-58.8h0m.1-45.9h0m.1 36h0m.1-1.1h0m.1 22.9h0m.1-9.1h0m.1 36.4h0m.1-14.1h0m0-5.1h0m.1-33.6h0m.1 5.9h0m.1-45.6h0m.1 57h0m.1-7.4h0m.1 18.8h0m.1-13.9h0m.1-42.2h0m.1 46.9h0m.1-31.5h0m.1 18.3h0m0 35.7h0m.1-71.1h0m.1 55.6h0m.1-44.7h0m.1-3.1h0m.1 25.2h0m.1-1h0m.1-12.8h0m.1-9.1h0m.1 21.5h0m.1-4.1h0m.1-7.6h0m0 23.5h0m.1 5.6h0m.1-14.2h0m.1 17.2h0m.1-26.3h0m.1-27.4h0m.1 27.3h0m.1 32.6h0m.1-77.3h0m.1 92.5h0m.1-62.5h0m.1 38.8h0m0-36.4h0m.1.9h0m.1-6.5h0m.1 32.3h0m.1-43.9h0m.1-1.9h0m.1 65.8h0m.1 9.3h0m.1-20.3h0m.1 1.2h0m.1 4.6h0m.1 1.9h0m0-15.1h0m.1-.8h0m.1-13.3h0m.1 24.2h0m.1 29.8h0m.1-30.8h0m.1-11.7h0m.1 10.8h0m.1-8.6h0m.1 8.4h0m.1 20h0m.1-51.2h0m0 47h0m.1-26.5h0m.1-10.2h0m.1 16.5h0m.1-2.1h0m.1 1.6h0m.1-4.2h0m.1-13.8h0m.1 28.9h0m.1-43.1h0m.1 53.3h0m.1-10.4h0m.1-69.7h0m0 42.5h0m.1-23h0m.1 43.3h0m.1-31.3h0m.1 25.9h0m.1-.9h0m.1 1.7h0m.1-.6h0m.1 14.7h0m.1-44.8h0m.1 6.2h0m.1-21.9h0m0 3h0m.1-21.3h0m.1 27h0m.1 28.4h0m.1 7.5h0m.1-12.3h0m.1-16.9h0m.1 14.2h0m.1 1.2h0m.1-39.5h0m.1 3.2h0m.1 54.6h0m0-35.2h0m.1-33.4h0m.1 64.6h0m.1 22.3h0m.1-29.9h0m.1 1.4h0m.1-8h0m.1 11.9h0m.1-7h0m.1 9.2h0m.1-2.7h0m.1-25.9h0m0 56.2h0m.1-35.4h0m.1 51.9h0m.1-24.2h0m.1-16.9h0m.1 27.5h0m.1-5.5h0m.1-1.2h0m.1-.4h0m.1-17h0m.1-19.7h0m.1-1.6h0m0 20.4h0m.1 39.3h0m.1-42.8h0m.1 15.5h0m.1-18h0m.1 15.2h0m.1 5.1h0m.1-1.4h0m.1 13.4h0m.1-20h0m.1 5.4h0m.1 14.6h0m0-18.1h0m.1-4.2h0m.1 4.5h0m.1 4h0m.1-16.7h0m.1 19.1h0m.1-35.2h0m.1 32.5h0m.1 5.8h0m.1-25.3h0m.1 40.2h0m.1-9.9h0m.1-8h0m0 16.3h0m.1 6h0m.1-63.8h0m.1 26.2h0m.1-.2h0m.1 51.1h0m.1-20.2h0m.1-2h0m.1-27.9h0m.1-21h0m.1 28.7h0m.1-20.8h0m0 32.1h0m.1 6.4h0m.1 0h0m.1-18.9h0m.1 1h0m.1-12.1h0m.1 28.6h0m.1-25.5h0m.1-10h0m.1-25.7h0m.1 43.5h0m.1-4.4h0m0 13.1h0m.1 5h0m.1 27h0m.1-45.5h0m.1 16.1h0m.1 1.6h0m.1-31.1h0m.1 23.7h0m.1-15.7h0m.1 11.5h0m.1 10h0m.1-22.8h0m0-29h0m.1 51.3h0m.1-30.1h0m.1 40.7h0m.1-14.2h0m.1-34.4h0m.1 5.3h0m.1-16.3h0m.1 4.9h0m.1 55.9h0m.1-43.8h0m.1 39.6h0m0-6.9h0m.1-22h0m.1 2.3h0m.1-6.4h0m.1-2h0m.1 4.5h0m.1 24.3h0m.1-4.2h0m.1-10.8h0m.1 11.1h0m.1-8.5h0m.1-34.8h0m0 27h0m.1-25h0m.1 40.6h0m.1-32.6h0m.1 34.9h0m.1-17h0m.1-11.2h0m.1-11h0m.1 8.5h0m.1 48.4h0m.1-39.2h0m.1 16.5h0m0-.5h0m.1-19.1h0m.1 12.9h0m.1-13.5h0m.1-26.5h0m.1 30.4h0m.1-22.4h0m.1 34.6h0m.1-1.2h0m.1-13.8h0m.1 2.2h0m.1 21.5h0m.1.7h0m0-41.9h0m.1 16.3h0m.1-.4h0m.1 20.7h0m.1 23.1h0m.1-21.7h0m.1-36.8h0m.1 38.1h0m.1 6.1h0m.1-13h0m.1-21.9h0m.1 2.2h0m0 2.6h0m.1-20.2h0m.1 35.7h0m.1 15.4h0m.1-1.7h0m.1-27.8h0m.1 22.2h0m.1-31.9h0m.1.9h0m.1 53.3h0m.1-10.5h0m.1-68.7h0m0 78h0m.1-51.1h0m.1 15.1h0m.1 1.9h0m.1 17.2h0m.1 19.1h0m.1-9.1h0m.1 4.4h0m.1-36.7h0m.1 26.6h0m.1-1h0m.1 13.5h0m0-26.1h0m.1 10.3h0m.1 6.9h0m.1 30.5h0m.1-52.2h0m.1 13.5h0m.1-14h0m.1 9.1h0m.1 9.3h0m.1-12.3h0m.1 16.8h0m.1 23.3h0m0-41.5h0m.1-4.7h0m.1-31.6h0m.1 51.5h0m.1-5.5h0m.1 36.2h0m.1-21.9h0m.1 8.9h0m.1-40h0m.1-1.7h0m.1-10h0m.1 48.3h0m0-28.5h0m.1-29h0m.1 19.9h0m.1 25.6h0m.1 7.6h0m.1-67.1h0m.1 30h0m.1 10.7h0m.1 22.4h0m.1-24.8h0m.1-14.5h0m.1 14.5h0m.1-17.2h0m0 1.9h0m.1.6h0m.1 1.9h0m.1-13.3h0m.1 12.7h0m.1 2.1h0m.1-34.5h0m.1 22.2h0m.1 16.8h0m.1 5.7h0m.1-20.1h0m.1-31.8h0m0 47.2h0m.1-13.6h0m.1 11h0m.1-22h0m.1 8.9h0m.1 29.1h0m.1-48.8h0m.1 21.5h0m.1-18.8h0m.1 4.8h0m.1 33.2h0m.1-42.9h0m0 14.3h0m.1-1h0m.1.4h0m.1-1.7h0m.1-32.2h0m.1 49.4h0m.1-3.4h0m.1-1.3h0m.1-47.1h0m.1 33.7h0m.1 44.3h0m.1-39.8h0m0 20.1h0m.1-10.3h0m.1-53h0m.1 55h0m.1-14.1h0m.1 18.2h0m.1-22.1h0m.1-8.8h0m.1 49.2h0m.1-17.7h0m.1-17.7h0m.1 22.6h0m0 11.1h0m.1-4.7h0m.1.5h0m.1 17.9h0m.1-9.1h0m.1-36.9h0m.1 35.1h0m.1-28.9h0m.1 6.6h0m.1 16h0m.1 15.4h0m.1-14.3h0m0 10.8h0m.1-6.8h0m.1.1h0m.1 8.5h0m.1 2.8h0m.1-33.1h0m.1 29.7h0m.1 23.8h0m.1-47.6h0m.1 22.9h0m.1 35h0m.1-32.4h0m.1 27.1h0m0 6.9h0m.1-15h0m.1-15.4h0m.1-17.1h0m.1-21.9h0m.1 54.9h0m.1-11.9h0m.1-38.1h0m.1-3.2h0m.1 39h0m.1-1.8h0m.1 13.9h0m0 5.1h0m.1-37.5h0m.1-32.9h0m.1 49.7h0m.1 4.2h0m.1-21.4h0m.1-5.4h0m.1 10.4h0m.1-26.7h0m.1 27h0m.1 8.4h0m.1-28.1h0m0 26.5h0m.1-26.6h0m.1 22.3h0m.1-29.3h0m.1 48.9h0m.1-53.7h0m.1 8.1h0m.1 33.1h0m.1-42.9h0m.1-10.7h0m.1 61.6h0m.1-30.2h0m0-16.1h0m.1 4.8h0m.1-23h0m.1 58.7h0m.1-25.5h0m.1 8.9h0m.1 8.8h0m.1-27.3h0m.1-1.4h0m.1 7.1h0m.1 26.2h0m.1-18.2h0m0-8h0m.1 1.1h0m.1-17.5h0m.1 9.7h0m.1-.4h0m.1 15.4h0m.1-30.1h0m.1 4.5h0m.1 10.3h0m.1-11.3h0m.1 27.9h0m.1-29.3h0m0 30.3h0m.1-5.5h0m.1 30.9h0m.1-8.2h0m.1-64.8h0m.1 28.2h0m.1 23.7h0m.1-34.8h0m.1 22.1h0m.1 4.9h0m.1 14.1h0m.1-6.8h0m0-37.8h0m.1 40.6h0m.1-29.3h0m.1 29.9h0m.1-14.8h0m.1-47.1h0m.1 85.6h0m.1-4.3h0m.1-49.4h0m.1 3.2h0m.1 15h0m.1-22.6h0m.1 20.6h0m0-34.5h0m.1 20.6h0m.1 5h0m.1 12.4h0m.1 10.2h0m.1-22.7h0m.1-16.4h0m.1-12.9h0m.1 41.4h0m.1-39.8h0m.1 22.1h0m.1-1.9h0m0 27.4h0m.1-23.2h0m.1 11.8h0m.1 14.6h0m.1 12.2h0m.1-72.7h0m.1 35.8h0m.1-45.5h0m.1 56.1h0m.1-25.3h0m.1 2.1h0m.1 11.5h0m0-40h0m.1 57h0m.1-5.8h0m.1 4.3h0m.1 6.1h0m.1-25.3h0m.1 4.6h0m.1-21.8h0m.1 11.2h0m.1 6.1h0m.1 8.5h0m.1 3.2h0m0-10.3h0m.1-1.4h0m.1 32.2h0m.1-6.6h0m.1-14.8h0m.1-.3h0m.1-20.2h0m.1 33.6h0m.1-32.7h0m.1 18.4h0m.1 29.2h0m.1 22.6h0m0-31.7h0m.1-42.8h0m.1 21.3h0m.1 41.8h0m.1-44.7h0m.1 15.6h0m.1-3.1h0m.1 53.4h0m.1-41.2h0m.1-24.5h0m.1-22h0m.1 29.1h0m0-19h0m.1 41.8h0m.1-12.2h0m.1 23.3h0m.1-27.1h0m.1-1.4h0m.1-3h0m.1 33.1h0m.1-62.6h0m.1 71.5h0m.1-40h0m.1 25.3h0m.1-30.7h0m0-1.8h0m.1 9.8h0m.1 30h0m.1-45.5h0m.1 40.7h0m.1-4.2h0m.1 10.3h0m.1-16.6h0m.1 12h0m.1-61.1h0m.1 10.3h0m.1 53.5h0m0-32.9h0m.1 4.2h0m.1-11.4h0m.1-2.7h0m.1-1.6h0m.1 45.1h0m.1-33.7h0m.1-7h0m.1-2.5h0m.1 43.8h0m.1-17.4h0m.1-42.6h0m0 49.6h0m.1-22.9h0m.1 18.8h0m.1-32.1h0m.1 22.5h0m.1-28.9h0m.1 29.3h0m.1 8h0m.1-22.1h0m.1-21.5h0m.1 41.2h0m.1-31.3h0m0 27.2h0m.1 2h0m.1-23.2h0m.1 16.6h0m.1-5.8h0m.1-5h0m.1-7.6h0m.1-6h0m.1 38.4h0m.1-14.4h0m.1-18.3h0m.1-20.5h0m0 45.3h0m.1-10.9h0m.1 14.2h0m.1-29.2h0m.1-18.4h0m.1-7.3h0m.1 30.9h0m.1 21.7h0m.1-37.4h0m.1-22.5h0m.1 23.1h0m.1 10.3h0m0 24.1h0m.1-19.9h0m.1 1.1h0m.1 13.9h0m.1-6.2h0m.1-33.1h0m.1 5h0m.1 5.4h0m.1-13.5h0m.1 26.9h0m.1 14.5h0m.1-6.2h0m0 5.9h0m.1-53.7h0m.1 62.7h0m.1-8.2h0m.1 14h0m.1 2.8h0m.1-45.5h0m.1 10.1h0m.1 13.8h0m.1-8.7h0m.1-14.2h0m.1 17.6h0m.1-12.4h0m0 13.2h0m.1 14.4h0m.1-60h0m.1 55.9h0m.1-33.9h0m.1 26.1h0m.1 19.6h0m.1-20.1h0m.1-5.5h0m.1.8h0m.1 7.9h0m.1-14.7h0m0-38.2h0m.1 53.6h0m.1 14.1h0m.1 6.8h0m.1-24.9h0m.1-27.3h0m.1 45.4h0m.1-41.3h0m.1 16.5h0m.1 1.5h0m.1 12.6h0m.1 9.7h0m0-22.4h0m.1 3.3h0m.1-5.3h0m.1-17h0m.1 21.4h0m.1 18.4h0m.1-5.1h0m.1-15.8h0m.1 33.5h0m.1-48.4h0m.1 20.3h0m.1-8h0m0 18.3h0m.1-16.6h0m.1 35.7h0m.1-4.8h0m.1-39.3h0m.1 44.5h0m.1-2.5h0m.1 12.6h0m.1-1.6h0m.1 5.9h0m.1-37.7h0m.1 37.3h0m0-40h0m.1-13h0m.1 8.2h0m.1-11.3h0m.1 53.3h0m.1-55.3h0m.1 32.3h0m.1 23.6h0m.1-13.7h0m.1-6.4h0m.1 24h0m.1-68.1h0m0 52.9h0m.1-36.9h0m.1 26.2h0m.1-33h0m.1 47.9h0m.1-18.6h0m.1-3.8h0m.1-5.9h0m.1 29.7h0m.1-6.4h0m.1-33.9h0m.1 2.6h0m.1-44.5h0m0 53h0m.1 48.1h0m.1-20.2h0m.1-9.4h0m.1-.1h0m.1-23.3h0m.1 3.1h0m.1-28.2h0m.1 10.1h0m.1 24.2h0m.1 1.9h0m.1-22.8h0m0-15.3h0m.1 18.5h0m.1 16.4h0m.1 13.4h0m.1-44.7h0m.1 40.5h0m.1-31.7h0m.1 22h0m.1-60.5h0m.1 54.3h0m.1-1.3h0m.1 17.5h0m0-9.1h0m.1-76h0m.1 51.6h0m.1 2.3h0m.1 2.9h0m.1 4h0m.1 3.6h0m.1 5h0m.1-17.8h0m.1-2.6h0m.1 19.8h0m.1-2.9h0m0-20h0m.1 29.7h0m.1-.7h0m.1.5h0m.1-9.1h0m.1-47.4h0m.1 54.4h0m.1-64.8h0m.1 37.3h0m.1 43.2h0m.1-46h0m.1 21.3h0m0 4h0m.1 44h0m.1-46.5h0m.1 28.5h0m.1-73.5h0m.1 38.3h0m.1-16.3h0m.1 49.4h0m.1-14.1h0m.1-22.5h0m.1-.5h0m.1 27.9h0m0-20h0m.1 5.5h0m.1 25.3h0m.1-13.5h0m.1-2.6h0m.1-11.8h0m.1-12h0m.1-1.5h0m.1 18.8h0m.1 36.5h0m.1-61.2h0m.1 33.8h0m.1-.6h0m0-25.3h0m.1 2.4h0m.1-3.9h0m.1 29.5h0m.1 3.1h0m.1-28.4h0m.1 17.2h0m.1-25.2h0m.1-7.4h0m.1 56.3h0m.1-23.9h0m.1 8.2h0m0-13.7h0m.1-10.5h0m.1-16.8h0m.1 31.4h0m.1 8.1h0m.1-15h0m.1-11h0m.1 44h0m.1-3.6h0m.1-50.2h0m.1 50.7h0m.1-30.3h0m0 13.8h0m.1-39.5h0m.1 30.1h0m.1 16.7h0m.1-49.3h0m.1 38.7h0m.1-3.1h0m.1 9.5h0m.1-10.1h0m.1 5.8h0m.1 12h0m.1-33.8h0m0 59.1h0m.1-51.2h0m.1 16.9h0m.1-13.7h0m.1 42.3h0m.1-10.2h0m.1-13.4h0m.1-11.8h0m.1 25.8h0m.1-12.9h0m.1-20.2h0m.1 28.4h0m0 4.4h0m.1-14h0m.1 15h0m.1-25.9h0m.1-3.7h0m.1 13.6h0m.1-22.1h0m.1 34.6h0m.1-22.9h0m.1 9.3h0m.1-36.4h0m.1 58.5h0m0-41.5h0m.1-3.4h0m.1 17.4h0m.1-26.9h0m.1 25.4h0m.1-21.7h0m.1 35.2h0m.1-36.7h0m.1 16.3h0m.1-24.9h0m.1.2h0m.1 14.2h0m0 21.7h0m.1-5.2h0m.1 1.2h0m.1-37h0m.1 55.5h0m.1-69.1h0m.1 17h0m.1-10h0m.1-10.4h0m.1 51.1h0m.1 9.8h0m.1-1.6h0m.1-47.9h0m0 16.4h0m.1-48.8h0m.1 65.5h0m.1-18.9h0m.1 19.9h0m.1-33.2h0m.1 18.8h0m.1-19.8h0m.1-19h0m.1 22.9h0m.1-8.6h0m.1 28.1h0m0-34.1h0m.1 35.5h0m.1 19.8h0m.1-35.2h0m.1-37.8h0m.1 51.1h0m.1 15.2h0m.1-3.5h0m.1-18.9h0m.1 20.2h0m.1-16.5h0m.1 27.2h0m0-41.3h0m.1-7.2h0m.1-6.1h0m.1 30.7h0m.1 17.9h0m.1 21h0m.1-34.9h0m.1 19.5h0m.1-19.5h0m.1 15.1h0m.1 31.6h0m.1-37.8h0m0-22.4h0m.1 35.7h0m.1-56.7h0m.1 75.9h0m.1-20.7h0m.1 16.3h0m.1 3.1h0m.1-9.9h0m.1-12h0m.1-50h0m.1 71.3h0m.1 6.8h0m0-11.7h0m.1-11.4h0m.1-11.7h0m.1 27.3h0m.1-47.2h0m.1 25.8h0m.1-18.1h0m.1 61.1h0m.1-26.3h0m.1 18.6h0m.1 3.4h0m.1-63.3h0m0 48.8h0m.1-30.7h0m.1 23.4h0m.1 14.6h0m.1-14.6h0m.1-22.4h0m.1 11.7h0m.1 12.2h0m.1-21.8h0m.1 18.5h0m.1.5h0m.1-36.4h0m.1 24.3h0m0 8.5h0m.1-27.5h0m.1 28.7h0m.1-23.6h0m.1 25.1h0m.1-5.6h0m.1-8.6h0m.1 23.9h0m.1-27.3h0m.1 22.2h0m.1-38.2h0m.1 11.6h0m0 2.9h0m.1-7.2h0m.1 3.2h0m.1-34.4h0m.1 67.3h0m.1-28.2h0m.1 7.7h0m.1 9h0m.1-30.4h0m.1 4.7h0m.1 3.8h0m.1 3.7h0m0-5.5h0m.1 27.1h0m.1-12.1h0m.1 41.1h0m.1-61.9h0m.1-43.2h0m.1 63.2h0m.1-12.9h0m.1 12.2h0m.1-7.1h0m.1-6.5h0m.1 21.5h0m0-16.6h0m.1-10.9h0m.1-.9h0m.1 26.1h0m.1-7.1h0m.1-39.9h0m.1 56.5h0m.1-40.6h0m.1 14.9h0m.1-14.4h0m.1 7.3h0m.1-29.5h0m0 14.7h0m.1 10.4h0m.1 30.9h0m.1 1.6h0m.1-67h0m.1 83h0m.1-54.3h0m.1-1.6h0m.1 16.4h0m.1-52.8h0m.1 56.8h0m.1-.3h0m0 8.4h0m.1-35.9h0m.1 17.9h0m.1-17.4h0m.1 17.7h0m.1-13.4h0m.1-8.8h0m.1-20.4h0m.1 27.6h0m.1-12h0m.1 29.5h0m.1-18.8h0m.1 19.1h0m0-14.2h0m.1-13.5h0m.1-12.5h0m.1 29.6h0m.1 29.6h0m.1-22.4h0m.1-30.4h0m.1 40.2h0m.1-40.9h0m.1 13.3h0m.1 16.9h0m.1-14.7h0m0-.5h0m.1 5.8h0m.1-46.8h0m.1 32.7h0m.1 10.3h0m.1-30.5h0m.1 26.3h0m.1 2.2h0m.1-6.4h0m.1-5h0m.1 21.1h0m.1-20.3h0m0-10.7h0m.1 8.9h0m.1-11.5h0m.1.4h0m.1 3.1h0m.1 10.1h0m.1 20.4h0m.1 10.9h0m.1-35.5h0m.1 13.9h0m.1-15.4h0m.1 25.1h0m0 9.3h0m.1-60.6h0m.1 31.8h0m.1-21.1h0m.1 25.3h0m.1 11.3h0m.1-5h0m.1-.7h0m.1 56.3h0m.1-43h0m.1-.2h0m.1-15.4h0m0-15.6h0m.1-4.1h0m.1 22.7h0m.1 4.3h0m.1-42.9h0m.1 39.8h0m.1 9.8h0m.1 1.5h0m.1 9.8h0m.1-20.4h0m.1 46.1h0m.1-10.7h0m0-20.2h0m.1 9.2h0m.1 14.2h0m.1 10.8h0m.1-31.2h0m.1-15.7h0m.1 37.9h0m.1 11.6h0m.1-40.8h0m.1 35.2h0m.1-30.6h0m.1 8.1h0m0-22.9h0m.1 3.7h0m.1 14.2h0m.1 9.5h0m.1 7.3h0m.1-41.5h0m.1 7.4h0m.1-27.1h0m.1 21.1h0m.1-19.9h0m.1 10.2h0m.1 29.1h0m.1-35.5h0m0 37.9h0m.1 18.8h0m.1-31.4h0m.1 6.4h0m.1 30.1h0m.1-40.2h0m.1 36.6h0m.1-56.4h0m.1 35.1h0m.1-15.4h0m.1 5.9h0m.1-.5h0m0 8.6h0m.1 10.9h0m.1-19.8h0m.1-39.5h0m.1 65.9h0m.1-40.1h0m.1 47.8h0m.1-40.9h0m.1-5.5h0m.1 7.2h0m.1 4.2h0m.1 11.9h0m0-21.5h0m.1-9.8h0m.1 51.4h0m.1-4.2h0m.1 1.4h0m.1-17.2h0m.1-11.4h0m.1 35.8h0m.1 6.1h0m.1-72.2h0m.1 7.1h0m.1 12.2h0m0 22.4h0m.1 13.9h0m.1-7.9h0m.1 7.8h0m.1-5.4h0m.1-4.8h0m.1-14.4h0m.1 4h0m.1 15.8h0m.1 30.3h0m.1-19.1h0m.1 2.4h0m0-50.2h0m.1 52.6h0m.1.4h0m.1-1.2h0m.1-15h0m.1 9.3h0m.1 30h0m.1-70h0m.1 14.3h0m.1 30.5h0m.1 10.1h0m.1 12.7h0m0-29.3h0m.1-4.5h0m.1 18.5h0m.1-8.1h0m.1-26.6h0m.1 24h0m.1-5.4h0m.1 23.7h0m.1-10.9h0m.1 4.2h0m.1-9.4h0m.1-22h0m.1-10.4h0m0 33.3h0m.1-7.5h0m.1-59.8h0m.1 1.8h0m.1-13h0m.1 45.2h0m.1 38.9h0m.1-16.7h0m.1-25.3h0m.1-2h0m.1 20h0m.1-29.3h0m0 66.2h0m.1-21.9h0m.1-24.8h0m.1-22.3h0m.1 40.6h0m.1-15.5h0m.1 7.6h0m.1 12.2h0m.1-34.3h0m.1 24.6h0m.1-49.8h0m.1 37.4h0m0 7.2h0m.1-19h0m.1 32h0m.1-54.7h0m.1 9.1h0m.1-2.1h0m.1 43.7h0m.1-35.6h0m.1 49.9h0m.1-32.7h0m.1-33.5h0m.1 50.5h0m0-62.3h0m.1 47.9h0m.1-28h0m.1 31h0m.1 6.6h0m.1-45.7h0m.1 32h0m.1-.2h0m.1-37.2h0m.1 39.3h0m.1 5.7h0m.1 28.5h0m0-31.5h0m.1 8.7h0m.1 12.6h0m.1-10.8h0m.1 3.8h0m.1-16.1h0m.1 6h0m.1-10.5h0m.1 8.1h0m.1 45h0m.1 3h0m.1-58.4h0m0 26h0m.1-31.2h0m.1 47.7h0m.1 10.6h0m.1 3.7h0m.1-40.9h0m.1 2.2h0m.1-9.4h0m.1 15.7h0m.1 21.3h0m.1-58.2h0m.1 22.9h0m.1 38.8h0m0-20.5h0m.1 30.6h0m.1-21.5h0m.1-22.5h0m.1-.1h0m.1 28.3h0m.1-13.2h0m.1.1h0m.1 34.2h0m.1-18.2h0m.1-29.2h0m.1 48h0m0-32.1h0m.1-26.8h0m.1 8.1h0m.1 19.8h0m.1-38.5h0m.1 6.6h0m.1 45.7h0m.1-9.4h0m.1.4h0m.1-19.1h0m.1 24.8h0m.1-49.8h0m0 39.6h0m.1-15.5h0m.1-10h0m.1 47.5h0m.1-44.3h0m.1-16.4h0m.1 21.2h0m.1 32.5h0m.1-15.3h0m.1 2.5h0m.1-7.5h0m.1 13.7h0m0-53.4h0m.1 31h0m.1-10.4h0m.1-15.7h0m.1 58h0m.1-38.2h0m.1 6.4h0m.1-41.1h0m.1 32.7h0m.1-18.9h0m.1-11.7h0m.1 43.6h0m0 5h0m.1-39.2h0m.1 18h0m.1-11h0m.1 9.1h0m.1 47.8h0m.1-15.7h0m.1-42.3h0m.1-10.9h0m.1 1.4h0m.1 5.2h0m.1 36.6h0m0-67.4h0m.1 30.9h0m.1-.7h0m.1 22.6h0m.1-31.9h0m.1 9.3h0m.1 22.9h0m.1-31.9h0m.1 29h0m.1-39.3h0m.1 48.6h0m.1-16.9h0m0-.6h0m.1-9h0m.1-3.1h0m.1 12.1h0m.1-8.9h0m.1 26.4h0m.1-60.8h0m.1 55.6h0m.1 17.1h0m.1-37.2h0m.1 6.4h0m.1 9.7h0m.1-16h0m0 9.5h0m.1 2.4h0m.1-14.1h0m.1 8.2h0m.1-36.9h0m.1 43.2h0m.1 5.8h0m.1-16.4h0m.1-11.3h0m.1-4.8h0m.1 15.4h0m.1-24.5h0m0 5.9h0m.1 28.8h0m.1 14.3h0m.1-1h0m.1-8.9h0m.1-.3h0m.1 13h0m.1-36.8h0m.1 27.7h0m.1-34.8h0m.1 59.9h0m.1-13.2h0m0 32.5h0m.1-48.1h0m.1 17.7h0m.1-1.6h0m.1 6.2h0m.1-26.5h0m.1 16.5h0m.1-31.5h0m.1 49.9h0m.1-10.8h0m.1 21.3h0m.1-20.1h0m0 14.5h0m.1-36.2h0m.1 17.3h0m.1 14.6h0m.1-1h0m.1 19.4h0m.1-17.7h0m.1-32h0m.1 10.1h0m.1 18.7h0m.1-33.2h0m.1 7.6h0m0 22.3h0m.1-28.1h0m.1 27.2h0m.1 5.7h0m.1 2h0m.1 1.8h0m.1-39.7h0m.1 45h0m.1-27.2h0m.1-3.2h0m.1 21.8h0m.1-41.8h0m0 59h0m.1-21.6h0m.1-18.3h0m.1-16.4h0m.1-44.8h0m.1 87.7h0m.1-22.4h0m.1-14.9h0m.1 9h0m.1-1.3h0m.1 8.8h0m.1-17.7h0m.1 12.4h0m0 8.4h0m.1-40.2h0m.1-5.4h0m.1 18.5h0m.1-9.3h0m.1 15.2h0m.1 33.9h0m.1-67.9h0m.1 61.4h0m.1-27.7h0m.1-11.4h0m.1 27.4h0m0-53.4h0m.1 53.9h0m.1-27.5h0m.1 26.5h0m.1-17.8h0m.1-2.5h0m.1-5h0m.1-22.9h0m.1-16.4h0m.1 45.1h0m.1-25.8h0m.1 5.7h0m0 22.5h0m.1-26.8h0m.1 44.7h0m.1-65.1h0m.1 46h0m.1-7.1h0m.1 42h0m.1-2.6h0m.1-17.3h0m.1-33.1h0m.1 27.7h0m.1 18.7h0m0-15h0m.1-18.4h0m.1-1.8h0m.1 4.8h0m.1 7.2h0m.1 28h0m.1-35h0m.1 9.2h0m.1 18.3h0m.1-11.2h0m.1 2.1h0m.1 8.4h0m0-42.5h0m.1 32.5h0m.1 11.2h0m.1 6h0m.1-35.4h0m.1 14.1h0m.1 6.2h0m.1 3.8h0m.1-21.2h0m.1 35.9h0m.1 2.4h0m.1-29.5h0m0-18.5h0m.1 55.5h0m.1 1.9h0m.1-21.6h0m.1 3.1h0m.1-24.5h0m.1 10.9h0m.1-35.5h0m.1 50.7h0m.1-14h0m.1 14.3h0m.1-18.8h0m0-34.4h0m.1-9.4h0m.1 35.7h0m.1 2.7h0m.1-12h0m.1 21.3h0m.1-15.9h0m.1 2.9h0m.1.6h0m.1 9.3h0m.1-23.3h0m.1-12.8h0m.1 48.8h0m0-5.5h0m.1-16.4h0m.1 5.6h0m.1 4.6h0m.1 4.7h0m.1-25h0m.1-19.1h0m.1 16.8h0m.1-3.4h0m.1 8.8h0m.1-27.7h0m.1 35.7h0m0 3.4h0m.1-37.5h0m.1 39.9h0m.1-11.6h0m.1 35.4h0m.1-38.7h0m.1 33.5h0m.1-17.7h0m.1-18.7h0m.1 22.9h0m.1-4.2h0m.1-3.7h0m0 32.4h0m.1-12h0m.1 3.8h0m.1-31.9h0m.1 47.8h0m.1 4h0m.1-17.6h0m.1 11.1h0m.1-78.9h0m.1 59.3h0m.1 27.9h0m.1-54.3h0m0 19.7h0m.1-9.2h0m.1 42.6h0m.1-64.8h0m.1 30.3h0m.1.5h0m.1 7.2h0m.1 16h0m.1-18.6h0m.1 4.9h0m.1-28.3h0m.1-16.5h0m0 57.7h0m.1-6.1h0m.1-52.4h0m.1 39.1h0m.1-.1h0m.1-37.8h0m.1 35.7h0m.1 28.9h0m.1-43h0m.1-.9h0m.1 26.3h0m.1-22.6h0m0-46.7h0m.1 38.1h0m.1-19.1h0m.1 15.3h0m.1 3.1h0m.1-18.1h0m.1-3.2h0m.1 5.6h0m.1 20.2h0m.1-23.4h0m.1 24.2h0m.1 20.9h0m.1-46.5h0m0 21.8h0m.1-21.9h0m.1 13.1h0m.1 26.9h0m.1-31h0m.1 10.7h0m.1-30.3h0m.1 21.1h0m.1-21.8h0m.1 33.4h0m.1-6.6h0m.1-12.4h0m0 39.9h0m.1-4.8h0m.1-5h0m.1 3.9h0m.1 19.3h0m.1.6h0m.1-74.1h0m.1 10.2h0m.1 22.8h0m.1 16.4h0m.1-39.2h0m.1 13.9h0m0 4.7h0m.1 7.2h0m.1 1h0m.1-11h0m.1-5.1h0m.1 43.8h0m.1-63.8h0m.1 33.5h0m.1-3.9h0m.1 40.5h0m.1-36.4h0m.1 2.3h0m0 15.3h0m.1-61h0m.1 53.4h0m.1 5.6h0m.1 18h0m.1-53.3h0m.1 47.1h0m.1-6.8h0m.1-9.4h0m.1-27.6h0m.1 41.3h0m.1-11.7h0m0-2.9h0m.1 8.9h0m.1-18.3h0m.1 36.6h0m.1-11.1h0m.1-52.9h0m.1 1.4h0m.1-27.7h0m.1 94h0m.1-29.2h0m.1 11.3h0m.1-12.7h0m0-14.1h0m.1 52.8h0m.1-18.9h0m.1-34.7h0m.1 20.6h0m.1-48.4h0m.1-10.5h0m.1 58.3h0m.1-6.5h0m.1-5.9h0m.1-24.7h0m.1 37.7h0m.1 3.3h0m0 10.3h0m.1-19.3h0m.1 27.1h0m.1-44.6h0m.1-18.5h0m.1 38h0m.1-3.7h0m.1 16.7h0m.1-8.9h0m.1 9.4h0m.1 3.6h0m.1 13.6h0m0-11.7h0m.1-2.5h0m.1 9.3h0m.1 9.4h0m.1-31.1h0m.1 26.3h0m.1-25.7h0m.1-33.5h0m.1 55.9h0m.1-20.8h0m.1 44.7h0m.1-64.2h0m0 12.6h0m.1-.9h0m.1-11h0m.1 43.2h0m.1-4.2h0m.1-3h0m.1 8.4h0m.1-35h0m.1 16.4h0m.1 17.6h0m.1-24h0m.1 47.8h0m0-60.2h0m.1 56.8h0m.1-71.5h0m.1 32.8h0m.1 15.8h0m.1-17.2h0m.1 8.3h0m.1-2.5h0m.1-3.1h0m.1 29.1h0m.1-18.7h0m.1-27.6h0m0 26.2h0m.1-25.1h0m.1 41h0m.1-28.2h0m.1-8h0m.1 7.8h0m.1 19.8h0m.1-32.1h0m.1 29.1h0m.1-28h0m.1-9.5h0m.1 26.4h0m0-50h0m.1 37.2h0m.1.2h0m.1-9.9h0m.1 36.8h0m.1-9.4h0m.1-26.4h0m.1-4.9h0m.1 23.8h0m.1 0h0m.1-13.4h0m.1-13.1h0m0 20.9h0m.1-15.5h0m.1-.8h0m.1-15h0m.1 38.9h0m.1-46.8h0m.1 37.8h0m.1-38.1h0m.1 20.7h0m.1-14h0m.1-13h0m.1-4.6h0m.1-1.9h0m0 18.3h0m.1-19.3h0m.1 36.7h0m.1-14.7h0m.1 4.6h0m.1 4.9h0m.1-26.9h0m.1 26.2h0m.1 21.9h0m.1-35.2h0m.1 39.7h0m.1-43.7h0m0 17.3h0m.1 8.7h0m.1 12.8h0m.1-31.1h0m.1 14.3h0m.1-34.2h0m.1 42.4h0m.1-25.4h0m.1 7.1h0m.1 22.7h0m.1-46.3h0m.1 21.2h0m0-5.6h0m.1 23.8h0m.1-41.8h0m.1 55.4h0m.1-11.9h0m.1 2h0m.1-14.9h0m.1 9.9h0m.1-18.5h0m.1 58.5h0m.1-11.5h0m.1-38.9h0m0 21.5h0m.1 24.7h0m.1-35.1h0m.1-36.6h0m.1-2.7h0m.1 65.1h0m.1-36h0m.1 2.4h0m.1 6.6h0m.1-16.3h0m.1 16.9h0m.1 25.3h0m0-15.6h0m.1 6.9h0m.1 13.9h0m.1 9h0m.1-83.3h0m.1 94.4h0m.1-19.9h0m.1 6.1h0m.1-2.5h0m.1-22.5h0m.1 30.2h0m.1-15.7h0m0 .4h0m.1 14.5h0m.1-19.9h0m.1-28.8h0m.1 35.6h0m.1 9.1h0m.1-10.2h0m.1 6.9h0m.1 2.4h0m.1-30.6h0m.1 45h0m.1-15.2h0m.1-4.7h0m0-33.2h0m.1 7.1h0m.1 4.4h0m.1 21.1h0m.1-29.1h0m.1-18.1h0m.1.5h0m.1-33.7h0m.1 49.7h0m.1 14.6h0m.1-64.1h0m.1 45.1h0m0-22.3h0m.1-28.6h0m.1 35.8h0m.1-.1h0m.1 2.7h0m.1 4h0m.1 44.6h0m.1-49.9h0m.1 54.3h0m.1-83.8h0m.1 39.4h0m.1 27.5h0m0-6.6h0m.1-19.5h0m.1 6.2h0m.1 9.8h0m.1-1.3h0m.1-3.4h0m.1 3.5h0m.1-10.1h0m.1-1.4h0m.1-43.1h0m.1-6h0m.1 38.7h0m0-17.9h0m.1 47.6h0m.1 8.8h0m.1-5.1h0m.1-16.2h0m.1 10.5h0m.1-23.6h0m.1 49.2h0m.1-6.1h0m.1-11.2h0m.1-6.6h0m.1 3.6h0m0-32.8h0m.1 15.3h0m.1 27.2h0m.1-17.8h0m.1 14.1h0m.1 26.1h0m.1-79.6h0m.1 56.7h0m.1-.9h0m.1 11.3h0m.1-37.5h0m.1-13.8h0m0 26h0m.1 1h0m.1-.9h0m.1-13.4h0m.1-5.9h0m.1 42h0m.1-42.8h0m.1 5.9h0m.1 9.3h0m.1-38.2h0m.1 61.1h0m.1-37.3h0m.1-56.5h0m0 51h0m.1 27.3h0m.1-30.9h0m.1 1.7h0m.1 30.6h0m.1-28.9h0m.1 25.9h0m.1 8.6h0m.1-68.2h0m.1 93.9h0m.1-25.7h0m.1-8.9h0m0-1.7h0m.1-25.2h0m.1 19.4h0m.1 19.8h0m.1-62h0m.1 21.1h0m.1.4h0m.1 57.9h0m.1-80.6h0m.1 45.9h0m.1 1.2h0m.1 4.8h0m0 19.4h0m.1-38.5h0m.1-.3h0m.1 22.9h0m.1 13.5h0m.1 4.1h0m.1-56.8h0m.1 7.2h0m.1 50.4h0m.1-4.3h0m.1-39.2h0m.1 5.9h0m0 21.3h0m.1 14.8h0m.1 3h0m.1 4.5h0m.1-68.9h0m.1 45.6h0m.1 5.4h0m.1 36.8h0m.1-37.9h0m.1 9.1h0m.1-17.8h0m.1 24.2h0m0 8.9h0m.1-14.8h0m.1-10.6h0m.1-11.1h0m.1-1.9h0m.1 45.2h0m.1 9.3h0m.1-24.4h0m.1-19.4h0m.1-15h0m.1 20.5h0m.1 2.4h0m0-29.2h0m.1-5.1h0m.1 20.9h0m.1 30.4h0m.1-10.4h0m.1-56.5h0m.1 23.6h0m.1 33.8h0m.1.5h0m.1-19h0m.1 2.6h0m.1-23.4h0m0 5h0m.1-2.9h0m.1 33h0m.1-5.1h0m.1-25.8h0m.1 16.3h0m.1 18.7h0m.1-29.1h0m.1-10.3h0m.1 18.4h0m.1-53.5h0m.1 82.1h0m.1-23.6h0m0-14.1h0m.1 1.4h0m.1-40.7h0m.1 66.9h0m.1-14.5h0m.1 24.8h0m.1-22h0m.1.8h0m.1-21.8h0m.1 30.8h0m.1-7.1h0m.1-79.1h0m0 11.8h0m.1 20h0m.1 7.7h0m.1 41.9h0m.1-22.9h0m.1 1.4h0m.1-11.9h0m.1.8h0m.1-36.6h0m.1 39h0m.1 3.4h0m.1-4h0m0-2.2h0m.1-6.3h0m.1.4h0m.1-4.3h0m.1-9.1h0m.1-10.2h0m.1-23.8h0m.1 92.1h0m.1-42.4h0m.1-34.7h0m.1 42.8h0m.1 8.1h0m0-22.8h0m.1-.4h0m.1 11.7h0m.1-9h0m.1.5h0m.1 9.8h0m.1 4.8h0m.1-14.9h0m.1-11.1h0m.1-11.1h0m.1 11.6h0m.1 35.7h0m0-35h0m.1 25.2h0m.1 18.7h0m.1 18.1h0m.1-59.6h0m.1 49h0m.1-24.7h0m.1-27h0m.1 20.3h0m.1.3h0m.1 14.8h0m.1-33.6h0m0 23h0m.1-4.7h0m.1-2h0m.1-33.6h0m.1 24.1h0m.1 6.6h0m.1-45.6h0m.1 40.2h0m.1 19.4h0m.1 25.9h0m.1-46.7h0m.1-10.6h0m.1 43.8h0m0 5.1h0m.1-42.1h0m.1-25.6h0m.1 48.3h0m.1-44.3h0m.1 64.8h0m.1-54.4h0m.1 30.6h0m.1 28h0m.1-14.1h0m.1 8.2h0m.1 4.5h0m0-23.9h0m.1-25h0m.1 16.2h0m.1-52.4h0m.1 76h0m.1-13h0m.1-11.9h0m.1 14.4h0m.1-25.8h0m.1.9h0m.1 32.6h0m.1-11.8h0m0 26.5h0m.1 21.4h0m.1-36h0m.1-12.7h0m.1-14.7h0m.1 4.1h0m.1 16.5h0m.1 34.5h0m.1-6.7h0m.1-1.7h0m.1-5.9h0m.1-30.2h0m0 14.1h0m.1 12.4h0m.1-30h0m.1-31.2h0m.1 22.7h0m.1 21.1h0m.1-34.1h0m.1 13.7h0m.1-19h0m.1 28.6h0m.1 22.6h0m.1-20.2h0m0 30.3h0m.1-16.4h0m.1-19h0m.1 23.5h0m.1-42.5h0m.1 50.8h0m.1-41.1h0m.1-19.5h0m.1 67.2h0m.1-33.2h0m.1 17.6h0m.1-23.2h0m0-20.3h0m.1 14.1h0m.1-3h0m.1.6h0m.1 46.8h0m.1-33.4h0m.1 26.4h0m.1-18.1h0m.1-.8h0m.1-13.3h0m.1-4.4h0m.1 14.4h0m.1-26.1h0m0 20.7h0m.1-39.3h0m.1 65.7h0m.1-25h0m.1-7.8h0m.1 31.5h0m.1-36.4h0m.1-7.6h0m.1 45.6h0m.1-61.2h0m.1 57.7h0m.1-49.7h0m0 25.9h0m.1-16.6h0m.1 27.5h0m.1-68.2h0m.1 76.3h0m.1-47h0m.1 19.6h0m.1 24.9h0m.1-2.4h0m.1 2.4h0m.1-10.7h0m.1 1.7h0m0-29.2h0m.1 32.7h0m.1 4.6h0m.1-41.9h0m.1 39.6h0m.1 15.3h0m.1 9.4h0m.1-36.8h0m.1 55.6h0m.1-101.4h0m.1 108.7h0m.1-27.9h0m0-22.3h0m.1 17.9h0m.1-2.1h0m.1-13.5h0m.1-.2h0m.1-4.4h0m.1-4h0m.1 15.6h0m.1 4.2h0m.1-36h0m.1 33h0m.1 36.6h0m0-27.1h0m.1-27.3h0m.1 11.8h0m.1 25.2h0m.1-13.1h0m.1 20.7h0m.1-61.4h0m.1 26h0m.1-15h0m.1 5.4h0m.1 39.1h0m.1-12.5h0m0 2.7h0m.1-3.2h0m.1 1.6h0m.1-14.1h0m.1-41.7h0m.1 33h0m.1-18.1h0m.1 15.5h0m.1 3.1h0m.1 1.5h0m.1 38.9h0m.1-34.1h0m0 11.6h0m.1-4.4h0m.1-15.8h0m.1-31.3h0m.1 43.4h0m.1-3.4h0m.1-4.7h0m.1-9.4h0m.1-6.5h0m.1-6.7h0m.1-7.1h0m.1 27.1h0m.1-10.1h0m0-3.5h0m.1-25.4h0m.1-.9h0m.1 16.1h0m.1 22.4h0m.1 16.5h0m.1-61.2h0m.1 21.7h0m.1-1.8h0m.1-13.1h0m.1 17.6h0m.1 1h0m0-3.7h0m.1 15.8h0m.1 12.7h0m.1-29.5h0m.1 63.1h0m.1-45.6h0m.1 18h0m.1 8.3h0m.1-23.3h0m.1 8.8h0m.1 15.7h0m.1-39.6h0m0 25.1h0m.1 10.1h0m.1 33.1h0m.1-43.1h0m.1-33.6h0m.1 15.5h0m.1 20h0m.1-2.2h0m.1 0h0m.1 19.2h0m.1-9h0m.1-36.4h0m0 27h0m.1-3.8h0m.1-19.5h0m.1 50.5h0m.1-91.5h0m.1 70.3h0m.1 15.5h0m.1-57.3h0m.1 12.8h0m.1 16.3h0m.1 4.7h0m.1 4h0m0-50h0m.1 57.7h0m.1-5.3h0m.1 6.1h0m.1-10.5h0m.1-30.6h0m.1 67.8h0m.1-60.9h0m.1 38.9h0m.1-21.7h0m.1 33.2h0m.1-75.2h0m0 42.2h0m.1 16.3h0m.1-19.8h0m.1 30.7h0m.1 13h0m.1-21.5h0m.1 12.9h0m.1-24.4h0m.1-17.6h0m.1-7.2h0m.1 14.3h0m.1-.8h0m.1 15.6h0m0-25.5h0m.1 35.4h0m.1-23.5h0m.1 20.4h0m.1-7.7h0m.1-25.7h0m.1 41h0m.1-27.7h0m.1-1.1h0m.1 14.8h0m.1-50.7h0m.1 2.8h0m0 16.6h0m.1 30.6h0m.1-17.3h0m.1-34.9h0m.1 44.2h0m.1-1.3h0m.1-9.3h0m.1-39.5h0m.1 53.3h0m.1-44.1h0m.1 39.8h0m.1-56.5h0m0 49.5h0m.1 12.1h0m.1-51.4h0m.1 56.1h0m.1-40.7h0m.1-19.9h0m.1 17.8h0m.1 14.2h0m.1.6h0m.1-4.6h0m.1-10h0m.1 23.6h0m0-10.1h0m.1 5.8h0m.1 1.2h0m.1-7.5h0m.1-6.8h0m.1 20.6h0m.1-.8h0m.1-32.9h0m.1 58.7h0m.1-1.6h0m.1-24.6h0m.1-22.7h0m0 23.9h0m.1 5h0m.1-10.8h0m.1 8.6h0m.1 6.2h0m.1-18h0m.1 51.5h0m.1-19h0m.1-13.5h0m.1-5.8h0m.1-50.9h0m.1 44.7h0m0-9.1h0m.1 6.1h0m.1 33.4h0m.1-30.6h0m.1 6.5h0m.1 20.4h0m.1-11.9h0m.1-4.7h0m.1-7.1h0m.1 19.9h0m.1 8.3h0m.1-10.5h0m0-48.5h0m.1 72.9h0m.1-41.5h0m.1 52.3h0m.1-28.9h0m.1 19.9h0m.1-38.2h0m.1 39h0m.1-4.4h0m.1 20.4h0m.1-2.6h0m.1-53.9h0m.1 10h0m0-9.3h0m.1 1.5h0m.1 28.6h0m.1-27.2h0m.1-26.9h0m.1 11.2h0m.1 16.7h0m.1 1.2h0m.1 32.4h0m.1-48h0m.1 21.9h0m.1 33.6h0m0-35.7h0m.1 29.6h0m.1-54.3h0m.1 1.9h0m.1 56.5h0m.1-49.4h0m.1-25.4h0m.1 53.5h0m.1 2.8h0m.1-7.5h0m.1 7.6h0m.1 17.4h0m0-17.1h0m.1-5.9h0m.1-33h0m.1 28.9h0m.1-28.5h0m.1 8.6h0m.1 40.2h0m.1-6.6h0m.1-32h0m.1-27.6h0m.1 21.8h0m.1 48.9h0m0-14.8h0m.1 19.4h0m.1-37.8h0m.1-24h0m.1-4.5h0m.1 30.6h0m.1-10.3h0m.1 6.8h0m.1 31h0m.1-43.6h0m.1 7.4h0m.1-30.8h0m0 27h0m.1-9.8h0m.1 4.3h0m.1 5.6h0m.1-15.9h0m.1 8.8h0m.1-4.1h0m.1 4.2h0m.1 3h0m.1 16.3h0m.1-41h0m.1-6.7h0m0 40.6h0m.1-29.5h0m.1 10.4h0m.1-14.3h0m.1 16.4h0m.1 22.6h0m.1-19.7h0m.1-22.6h0m.1 1.1h0m.1-15h0m.1 53.5h0m.1 11.9h0m.1-36.9h0m0-28.1h0m.1 13.2h0m.1-8.8h0m.1-26.3h0m.1 87.4h0m.1-42.4h0m.1-16.4h0m.1 12.6h0m.1 2.4h0m.1-15.8h0m.1 37.3h0m.1-23.8h0m0-9.5h0m.1-20h0m.1 24.6h0m.1 16.4h0m.1 31.2h0m.1-24.2h0m.1-37.9h0m.1 5.3h0m.1 3.9h0m.1 25.6h0m.1-5.3h0m.1 12.6h0m0 11.6h0m.1-28.3h0m.1 24.1h0m.1 8.6h0m.1-24.3h0m.1 20.3h0m.1-29.6h0m.1 36h0m.1-54.4h0m.1 62h0m.1-9h0m.1-30.5h0m0 8.9h0m.1 9.4h0m.1 5.7h0m.1-29h0m.1 39.4h0m.1-29.9h0m.1 37.9h0m.1-26.7h0m.1 2.3h0m.1-30.8h0m.1 35.5h0m.1 18.3h0m0 8.5h0m.1-30.6h0m.1-25.1h0m.1 20.7h0m.1 36h0m.1-35.6h0m.1-17.1h0m.1 52.7h0m.1-42.6h0m.1 26.7h0m.1 3.2h0m.1 14h0m0-42.3h0m.1 6.6h0m.1-7.3h0m.1 34h0m.1-19.9h0m.1-10.2h0m.1-59.8h0m.1 68.6h0m.1 5.3h0m.1-5.3h0m.1 18.2h0m.1-21.6h0m.1 5.6h0m0-60.8h0m.1-1.4h0m.1 16.1h0m.1 48.9h0m.1 1h0m.1 7.9h0m.1-48.5h0m.1 40.6h0m.1-25.8h0m.1-26.1h0m.1 16.8h0m.1 11.8h0m0 21h0m.1-10.8h0m.1-45.2h0m.1 46.2h0m.1-24.7h0m.1 24.9h0m.1 19.6h0m.1-56.8h0m.1 8.5h0m.1 13.5h0m.1-18.7h0m.1 11.6h0m0 18.5h0m.1-3.7h0m.1-30.2h0m.1 39.1h0m.1-34.4h0m.1 36.7h0m.1 18.9h0m.1-21.7h0m.1-38.6h0m.1 54.7h0m.1-11.3h0m.1 6.2h0m0 1.4h0m.1 14.6h0m.1 6.6h0m.1-34.9h0m.1 10.7h0m.1-16.9h0m.1 21.9h0m.1 34.2h0m.1-36.1h0m.1-26.2h0m.1 41.4h0m.1-3.1h0m0-24.5h0m.1.2h0m.1-27.8h0m.1 61.1h0m.1-51.2h0m.1-4.8h0m.1 15.7h0m.1 35.3h0m.1 1.8h0m.1-33.6h0m.1 53.7h0m.1-59.1h0m0-16.6h0m.1 13.5h0m.1-27.5h0m.1 47.1h0m.1 20.4h0m.1-34.9h0m.1-15.2h0m.1 2.4h0m.1 32.8h0m.1 8.9h0m.1-43.9h0m.1 18h0m0-27.1h0m.1 9.4h0m.1-15.7h0m.1 33.7h0m.1-8.3h0m.1-23.4h0m.1 9.4h0m.1-17.8h0m.1 3.1h0m.1 21.6h0m.1-37.3h0m.1 3.3h0m.1 60.5h0m0-13.5h0m.1-50.1h0m.1 38.1h0m.1 13.6h0m.1 10.2h0m.1-27.2h0m.1-2.5h0m.1 10.8h0m.1-18.8h0m.1 3.4h0m.1 20.3h0m.1 1.1h0m0-21.1h0m.1 4.2h0m.1 61.3h0m.1-64.1h0m.1 3.6h0m.1 19.4h0m.1-52.2h0m.1 55.9h0m.1-61.8h0m.1 42.1h0m.1-8.9h0m.1 20.5h0m0 7.3h0m.1 25.3h0m.1-4.3h0m.1-30.2h0m.1 16.2h0m.1 33.2h0m.1-79.3h0m.1 17.9h0m.1 41.9h0m.1-44.6h0m.1 44.8h0m.1-2.8h0m0 31.6h0m.1-34h0m.1-41.6h0m.1 23.9h0m.1 9.4h0m.1-40.7h0m.1 35h0m.1 8h0m.1 15h0m.1-5.3h0m.1 9.9h0m.1-10.2h0m0-54h0m.1 44.9h0m.1-6.3h0m.1-.1h0m.1 13.2h0m.1-13.4h0m.1 22.6h0m.1 8.9h0m.1-28.2h0m.1 12.7h0m.1-14.6h0m.1 17.8h0m0-36.4h0m.1 8.1h0m.1 14.6h0m.1-4.3h0m.1 10h0m.1-22.4h0m.1 36.8h0m.1 7.7h0m.1 3.4h0m.1-13.8h0m.1-28.9h0m.1 21.7h0m.1-21.2h0m0 29h0m.1 7.5h0m.1-23.6h0m.1-14.7h0m.1 59h0m.1-31.4h0m.1-17.3h0m.1 5.9h0m.1 24.6h0m.1-5.7h0m.1-11.3h0m.1-8h0m0-.7h0m.1 6.8h0m.1-28.3h0m.1 20.9h0m.1-40.3h0m.1 42.2h0m.1 6.3h0m.1-3.8h0m.1-1.7h0m.1-15.4h0m.1 10.9h0m.1 7.1h0m0 4.5h0m.1-12.7h0m.1-2.9h0m.1 22.9h0m.1-29.1h0m.1 27.6h0m.1-36.3h0m.1 1.7h0m.1 19h0m.1-1.6h0m.1-42.1h0m.1 6.3h0m0 66.6h0m.1-20.1h0m.1-8.1h0m.1-1.1h0m.1-11.4h0m.1 32.4h0m.1-34h0m.1 1.6h0m.1-13.6h0m.1 11.3h0m.1-3.5h0m.1 23.2h0m0-11.1h0m.1-8.8h0m.1 14.6h0m.1-28.2h0m.1-27.2h0m.1 6h0m.1 2h0m.1 34.7h0m.1-17.3h0m.1 12.9h0m.1-2.3h0m.1 36.4h0m0-38.8h0m.1-5.4h0m.1-11.4h0m.1-.2h0m.1 35.1h0m.1-18h0m.1-8.3h0m.1-10h0m.1 48.6h0m.1-33.7h0m.1 4h0m.1 11.8h0m.1 25.3h0m0-29.3h0m.1-16.7h0m.1 32.7h0m.1-45.5h0m.1 38.6h0m.1 14h0m.1 2.7h0m.1-39.2h0m.1 30h0m.1-72.6h0m.1 86.7h0m.1-48.8h0m0 11.6h0m.1 34.3h0m.1-37.7h0m.1-5h0m.1 27.4h0m.1-24.4h0m.1 20.6h0m.1 4.5h0m.1-5.6h0m.1 25.2h0m.1-25.9h0m.1-23.9h0m0 8.2h0m.1 39.7h0m.1-26.7h0m.1 13h0m.1 2.9h0m.1-.3h0m.1-14.4h0m.1 29.6h0m.1 11.3h0m.1-18.5h0m.1 10.3h0m.1-7.8h0m0 11.8h0m.1-11.1h0m.1 21.1h0m.1-21.4h0m.1-7.7h0m.1 5.1h0m.1-35.1h0m.1 13.9h0m.1 7.8h0m.1 4.4h0m.1 22.9h0m.1-20.9h0m0 29h0m.1-18.2h0m.1-27.2h0m.1-7.1h0m.1 64.8h0m.1-44.2h0m.1-37.8h0m.1 31.9h0m.1-.3h0m.1-22h0m.1-9.1h0m.1 35.3h0m0-22.9h0m.1 28h0m.1 14.6h0m.1-21.2h0m.1-9.8h0m.1-22.9h0m.1 26.5h0m.1-10.6h0m.1-7.7h0m.1 36.8h0m.1-30.5h0m.1-23.9h0m0 39h0m.1-1.7h0m.1-26.7h0m.1 48.6h0m.1-21.5h0m.1-36h0m.1-19.3h0m.1 6.2h0m.1 33.6h0m.1 4.9h0m.1-32.6h0m.1-5.1h0m.1 14.7h0m0-14h0m.1 29.2h0m.1 6.4h0m.1 23.7h0m.1-51.9h0m.1 40h0m.1-36h0m.1-10.3h0m.1 39.9h0m.1-8.9h0m.1-9.7h0m.1 2.7h0m0-12.1h0m.1 8.6h0m.1 46.2h0m.1-50.3h0m.1 32.3h0m.1-12h0m.1 17.8h0m.1-30.7h0m.1-6.3h0m.1 2.5h0m.1 31.4h0m.1-15h0m0 22.1h0m.1-.6h0m.1-11.5h0m.1 20.1h0m.1-59.9h0m.1 65.6h0m.1-21.1h0m.1 16.1h0m.1-25.5h0m.1-7.5h0m.1 57.4h0m.1-78h0m0 37.5h0m.1 19.9h0m.1-43h0m.1 13.9h0m.1 30.5h0m.1-15h0m.1-18.6h0m.1 2.8h0m.1 27.9h0m.1-25.3h0m.1 17.5h0m.1 11h0m0-34.4h0m.1 26.3h0m.1-27h0m.1 25.2h0m.1-21.7h0m.1 3.2h0m.1-23.4h0m.1-2.5h0m.1 17.1h0m.1-26.7h0m.1 25.8h0m.1 5.6h0m0 33.7h0m.1-20.6h0m.1-21.4h0m.1-14.3h0m.1 14.7h0m.1-14.4h0m.1 48h0m.1-27.7h0m.1 12.9h0m.1-21.9h0m.1-8.4h0m.1 26.9h0m.1-13.1h0m0-10.2h0m.1-10.9h0m.1 39.1h0m.1-18h0m.1 11.3h0m.1 5.3h0m.1-38.7h0m.1 26.3h0m.1 5.7h0m.1-56.7h0m.1 58.5h0m.1 18.2h0m0-25.3h0m.1 7.4h0m.1 8.5h0m.1-45.7h0m.1 45.7h0m.1-2h0m.1-29.4h0m.1 6.2h0m.1 57.7h0m.1-46h0m.1 31.7h0m.1-3.2h0m0-.7h0m.1-4.7h0m.1-16.4h0m.1 2.6h0m.1-3.9h0m.1-7.2h0m.1-9.3h0m.1 3.4h0m.1 33.9h0m.1-38.6h0m.1 39.4h0m.1-5.8h0m0-25.8h0m.1 13.8h0m.1-18.3h0m.1 2.4h0m.1-2.4h0m.1 36h0m.1-14h0m.1-1.4h0m.1-3.4h0m.1 6h0m.1 2.2h0m.1-40.2h0m0-29.2h0m.1 41h0m.1 10.4h0m.1-16.2h0m.1 5h0m.1-2.8h0m.1-2.7h0m.1-3.7h0m.1 35h0m.1-23.8h0m.1-24.7h0m.1 21.2h0m0 5.2h0m.1 7.1h0m.1-28.5h0m.1 4.6h0m.1-17.6h0m.1 38.8h0m.1-42.4h0m.1 31.2h0m.1-23.8h0m.1 14.2h0m.1 4.9h0m.1-2.8h0m.1-14.5h0m0 43.1h0m.1-30.1h0m.1-.7h0m.1 4.6h0m.1.9h0m.1 6.9h0m.1-17.5h0m.1 17.9h0m.1 5h0m.1-26.9h0m.1-14.3h0m.1 14.7h0m0 9.4h0m.1-13.7h0m.1-21.2h0m.1 57.4h0m.1 28.6h0m.1-16.7h0m.1 6.8h0m.1-52.5h0m.1 18.3h0m.1 23.6h0m.1-25.4h0m.1 16.3h0m0-4h0m.1-21.4h0m.1-13.2h0m.1-28.1h0m.1 90.3h0m.1-26.7h0m.1-16.3h0m.1 37.9h0m.1-11.9h0m.1-29.9h0m.1 14.1h0m.1 29h0m0-34.5h0m.1-3.3h0m.1 13.9h0m.1-3.8h0m.1 31.1h0m.1-18.2h0m.1-10.1h0m.1-2.6h0m.1-20.7h0m.1 44.6h0m.1-20.4h0m.1-42.5h0m0 20.6h0m.1-16h0m.1 52.8h0m.1-10h0m.1-7.8h0m.1 2.4h0m.1 11.9h0m.1 7.3h0m.1-28.7h0m.1 9.1h0m.1 20.5h0m.1-28.8h0m0-5.7h0m.1 24.2h0m.1-13.9h0m.1 42.5h0m.1-15.7h0m.1-34.1h0m.1 28.8h0m.1-48.8h0m.1 42.3h0m.1 23.7h0m.1-75.6h0m.1 45.9h0m0 28h0m.1-21.1h0m.1-4.6h0m.1-7.6h0m.1 14.8h0m.1-21.8h0m.1 8.1h0m.1-4.6h0m.1-6.5h0m.1 26.3h0m.1-4.1h0m.1 1.5h0m.1-6.1h0m0-11.6h0m.1 27.3h0m.1-44.5h0m.1-8.2h0m.1 26h0m.1 24.1h0m.1-9.7h0m.1-44.5h0m.1 78.3h0m.1-39.4h0m.1 12.5h0m.1-51.6h0m0 57.1h0m.1-18.4h0m.1 22.3h0m.1-27.7h0m.1-19.4h0m.1 9.5h0m.1-21.2h0m.1 52.6h0m.1.2h0m.1 1.4h0m.1 42.8h0m.1-59.6h0m0 .5h0m.1 5.5h0m.1-27.1h0m.1 12.3h0m.1-35.6h0m.1 57.1h0m.1-27.1h0m.1-5.4h0m.1 49.2h0m.1-63.1h0m.1 14.7h0m.1 21h0m0 20.1h0m.1-17.1h0m.1 39.2h0m.1-74.8h0m.1 48.3h0m.1-12.8h0m.1-1.8h0m.1 9.3h0m.1-6.5h0m.1-31.9h0m.1 11.9h0m.1 36.9h0m0-14.5h0m.1-55.6h0m.1 64.2h0m.1-43.6h0m.1 48.7h0m.1-20.4h0m.1-2.8h0m.1-3.9h0m.1 6.3h0m.1-22.8h0m.1 5.8h0m.1 38.1h0m0-38h0m.1 5.1h0m.1 27.1h0m.1-12.1h0m.1-24.8h0m.1-.6h0m.1 9.9h0m.1-13h0m.1 2.2h0m.1 16.1h0m.1 37.4h0m.1-18.9h0m.1-28.3h0m0-5.6h0m.1 1.8h0m.1 13.6h0m.1-7.6h0m.1 4.2h0m.1-42.9h0m.1 43.3h0m.1 19.9h0m.1-27.9h0m.1 5.1h0m.1-28.9h0m.1 29.7h0m0 21.8h0m.1 19.7h0m.1-36.4h0m.1-7.8h0m.1 4.5h0m.1-2h0m.1 32.3h0m.1-13.2h0m.1 26.5h0m.1-47.3h0m.1-3h0m.1 25.8h0m0-19.5h0m.1 27.3h0m.1 25.9h0m.1-80.6h0m.1 36.2h0m.1 6h0m.1.7h0m.1-27.3h0m.1 26.1h0m.1 31.9h0m.1-25.6h0m.1-8.1h0m0-13.5h0m.1 30.2h0m.1-13.6h0m.1-11.3h0m.1 32.3h0m.1-5.8h0m.1 4.2h0m.1-20.9h0m.1 38.5h0m.1 14.1h0m.1-60h0m.1-20h0m0 8.4h0m.1-14.1h0m.1 9.6h0m.1 31.4h0m.1 1.6h0m.1-38.5h0m.1 26.6h0m.1-7.8h0m.1 0h0m.1-4.7h0m.1-29.9h0m.1 69.4h0m0-18.8h0m.1-17.7h0m.1 7.9h0m.1 19.4h0m.1-55.5h0m.1 12.2h0m.1-17.3h0m.1 22.9h0m.1-5.3h0m.1 9.5h0m.1 25.5h0m.1-19.4h0m0 16.6h0m.1-15.8h0m.1 21h0m.1-18.8h0m.1-3.7h0m.1-8.5h0m.1-7.8h0m.1-5.6h0m.1-22.7h0m.1 43.5h0m.1-45.3h0m.1 40.7h0m.1 10.6h0m0-54.5h0m.1 57.8h0m.1-22.9h0m.1 2h0m.1 16.2h0m.1-36.3h0m.1 31.7h0m.1 14.5h0m.1-22.3h0m.1.4h0m.1 19h0m.1 1.9h0m0 24.6h0m.1-29.4h0m.1 36.8h0m.1-18h0m.1 11.5h0m.1-14.4h0m.1-22.6h0m.1 53.5h0m.1-24.2h0m.1-41h0m.1 27.4h0m.1 40.2h0m0-19.8h0m.1-18h0m.1-19h0m.1 41.2h0m.1-22.6h0m.1 1.5h0m.1 30h0m.1-36.2h0m.1-4.8h0m.1 32.3h0m.1 14h0m.1-17h0m0-38.5h0m.1 28.8h0m.1 18.2h0m.1 16.1h0m.1-46.9h0m.1-5h0m.1-47.3h0m.1 24.8h0m.1 16.4h0m.1-5.2h0m.1 37.4h0m.1-3.1h0m0-5.3h0m.1-44.1h0m.1 22.1h0m.1-1.6h0m.1 12.5h0m.1-5.2h0m.1 4.1h0m.1 4.9h0m.1-10.4h0m.1 19.5h0m.1-43.2h0m.1 33.2h0m0-20.5h0m.1-12.2h0m.1 27.1h0m.1-23.5h0m.1 27.6h0m.1-26.8h0m.1 36.7h0m.1-40.3h0m.1 29.7h0m.1-44.8h0m.1 41.5h0m.1-29.1h0m.1 6.1h0m0 6.5h0m.1 15.2h0m.1-16.3h0m.1-10.3h0m.1-16.1h0m.1 17.9h0m.1-8.5h0m.1 35.1h0m.1-33.8h0m.1 14.4h0m.1 23.3h0m.1-33.7h0m0-12.5h0m.1-16.2h0m.1 48h0m.1 26h0m.1-61.3h0m.1 11.2h0m.1 27.1h0m.1 25.5h0m.1-37.9h0m.1 18.1h0m.1 13.2h0m.1-5.7h0m0-18.5h0m.1-5.5h0m.1 22h0m.1 11.8h0m.1-18.7h0m.1 2.2h0m.1 15.6h0m.1-14.4h0m.1 25h0m.1-28.8h0m.1-21.5h0m.1 47.8h0m0-52.6h0m.1 21.6h0m.1-21.1h0m.1 36.6h0m.1 4.9h0m.1-15.1h0m.1 27.2h0m.1-23.7h0m.1-7.8h0m.1-2.7h0m.1 39.2h0m.1-42.4h0m0 22.1h0m.1 35.7h0m.1-26.6h0m.1 11.6h0m.1-6.7h0m.1-5.9h0m.1 27.8h0m.1-36.9h0m.1.7h0m.1-3.7h0m.1-30.6h0m.1 59.7h0m0-36.5h0m.1 12.2h0m.1-25.3h0m.1-8.8h0m.1 42.1h0m.1-21.5h0m.1 16h0m.1-14.9h0m.1 11.3h0m.1 27.8h0m.1-29.5h0m.1 16.1h0m.1-21.2h0m0 3h0m.1-22.9h0m.1 28.8h0m.1-26.1h0m.1 46.9h0m.1-33.5h0m.1-.4h0m.1-33.3h0m.1 36.2h0m.1-15.3h0m.1 10h0m.1 20.2h0m0-8.3h0m.1 21.3h0m.1-57h0m.1 27h0m.1-22.4h0m.1 6.8h0m.1 49.9h0m.1-57.9h0m.1 34.1h0m.1-7.7h0m.1-12.4h0m.1-1.3h0m0 17h0m.1-38.9h0m.1 22.5h0m.1 2h0m.1-19.7h0m.1-19.6h0m.1 38.5h0m.1-37.5h0m.1 36.4h0m.1-29.6h0m.1 57.8h0m.1-43.1h0m0-21.4h0m.1 46.1h0m.1-22h0m.1 19.1h0m.1-8.1h0m.1-2.5h0m.1-15.5h0m.1-5.6h0m.1-38.9h0m.1 45.5h0m.1-28.3h0m.1 62.3h0m0-49.2h0m.1 30.4h0m.1-11.2h0m.1 7.8h0m.1 8.3h0m.1-11.4h0m.1-9.3h0m.1-12.7h0m.1 12.5h0m.1 24.3h0m.1-32.2h0m.1 16.3h0m0 15.2h0m.1-13.5h0m.1 34.3h0m.1-19.2h0m.1-18.9h0m.1-10.2h0m.1 23.9h0m.1-28.7h0m.1 8.8h0m.1-5.9h0m.1-36.1h0m.1 49.3h0m0 12.8h0m.1-2.4h0m.1-4.1h0m.1-12.2h0m.1 18.2h0m.1 3.1h0m.1-36.5h0m.1 6h0m.1 20.6h0m.1 13.4h0m.1 30.7h0m.1-32h0m.1 9.2h0m0-16.7h0m.1 20.8h0m.1-17.8h0m.1 6.9h0m.1 30.5h0m.1-45.1h0m.1 25.7h0m.1-15.8h0m.1 20.6h0m.1-26h0m.1-49h0m.1 49.5h0m0-14.2h0m.1 47.4h0m.1-3.2h0m.1-10.9h0m.1-11.3h0m.1 6.7h0m.1 6.1h0m.1-7.3h0m.1 44.5h0m.1-59.2h0m.1 41.1h0m.1-35h0m0-11.3h0m.1 39.8h0m.1-52.1h0m.1-35.8h0m.1 64.1h0m.1-11.5h0m.1 35h0m.1-26.2h0m.1-32.2h0m.1 28.2h0m.1 17.8h0m.1-23.5h0m0 9.4h0m.1-15.2h0m.1.8h0m.1-6.6h0m.1 3.6h0m.1-4.3h0m.1 50.8h0m.1-60.3h0m.1 51.1h0m.1 5.6h0m.1-49.4h0m.1 27.1h0m0 14.9h0m.1-40.4h0m.1 52.7h0m.1-72.4h0m.1 31.3h0m.1 1.1h0m.1-1.1h0m.1-22.2h0m.1 28.2h0m.1 4.7h0m.1 9.1h0m.1 3h0m0-22.5h0m.1-7.5h0m.1-23.9h0m.1 66.5h0m.1-46.3h0m.1-3.8h0m.1 2.9h0m.1 9.7h0m.1 8.7h0m.1 13.8h0m.1-39.6h0m.1 2.9h0m.1 8.7h0m0 12.6h0m.1 1.4h0m.1-30.1h0m.1 35.4h0m.1.5h0m.1-48.9h0m.1 72.4h0m.1-92.9h0m.1 109.8h0m.1-49.3h0m.1-5.2h0m.1-32.4h0m0 71.8h0m.1-40.5h0m.1 13.3h0m.1.6h0m.1-50h0m.1 13.5h0m.1 18.7h0m.1 10.7h0m.1 3.8h0m.1 6.9h0m.1-26.3h0m.1 1.5h0m0-8.5h0m.1 39.5h0m.1 1.3h0m.1-29.6h0m.1 43.4h0m.1 3.2h0m.1-22h0m.1-9.7h0m.1 4.4h0m.1 15.5h0m.1 11.7h0m.1.5h0m0-58.9h0m.1 46.4h0m.1-12.6h0m.1-19h0m.1 13.7h0m.1-3.1h0m.1 19.2h0m.1-11.9h0m.1-4.7h0m.1-9.8h0m.1-5.4h0m.1-16.9h0m0 28.8h0m.1-1.9h0m.1-21.9h0m.1 44.3h0m.1-13.9h0m.1-32.6h0m.1 46.4h0m.1-40.5h0m.1 6.5h0m.1 2h0m.1 19h0m.1-21.3h0m0 8.5h0m.1-13.4h0m.1-16.2h0m.1 36.6h0m.1-42.7h0m.1 18.1h0m.1-15.4h0m.1.8h0m.1 21.6h0m.1 7.9h0m.1 3.4h0m.1.8h0m.1-30.9h0m0-17.2h0m.1 36.9h0m.1 26h0m.1 8.5h0m.1-37h0m.1-33.1h0m.1 3.4h0m.1 60.3h0m.1-26.2h0m.1 32.2h0m.1-8.5h0m.1-64.1h0m0 64.8h0m.1-27.7h0m.1 5.2h0m.1-22.5h0m.1 38.7h0m.1-16.6h0m.1 33.4h0m.1-13.8h0m.1.2h0m.1 19.7h0m.1-6.9h0m.1-25.6h0m0 8.4h0m.1 7.9h0m.1-21.9h0m.1 12.8h0m.1 21.4h0m.1-4.3h0m.1-35.2h0m.1 12h0m.1 28.9h0m.1-70.3h0m.1 82.9h0m.1-33.5h0m0-8.6h0m.1 40.7h0m.1-49h0m.1 12h0m.1 4.9h0m.1 22.3h0m.1-13.1h0m.1 10.7h0m.1-49.6h0m.1 59h0m.1 4.9h0m.1-19.1h0m0-27.4h0m.1 7.3h0m.1 22.2h0m.1-13.7h0m.1-5.4h0m.1-13.6h0m.1-.4h0m.1 47.6h0m.1-33.3h0m.1 2.6h0m.1-13.8h0m.1 21.9h0m0-34.3h0m.1 40.2h0m.1-6.3h0m.1-16.4h0m.1-2.6h0m.1 10.5h0m.1-12.6h0m.1 11h0m.1 32.1h0m.1-9.3h0m.1 1.1h0m.1 14.1h0m0-99.4h0m.1 58.7h0m.1 16.2h0m.1 18.5h0m.1-14.9h0m.1-54.3h0m.1 49.1h0m.1-15.5h0m.1 7.9h0m.1 6.6h0m.1-9h0m.1-24.1h0m.1 33.3h0m0-10.1h0m.1-10.8h0m.1 11h0m.1-6.9h0m.1 8h0m.1-15.6h0m.1-4.4h0m.1-6.2h0m.1 18.1h0m.1 9.2h0m.1-21.6h0m.1 1.6h0m0 .3h0m.1-7.7h0m.1-27.4h0m.1 54.8h0m.1-10.7h0m.1-21.9h0m.1 35.4h0m.1-45.7h0m.1 28.1h0m.1 33.6h0m.1-34.3h0m.1-8.6h0m0-33.8h0m.1 42.7h0m.1 44.5h0m.1-1h0m.1-69.6h0m.1 1.3h0m.1 12.1h0m.1 10.6h0m.1 14h0m.1-32.6h0m.1 39.3h0m.1-4.6h0m0 6h0m.1 19h0m.1-33h0m.1-5.1h0m.1 31.3h0m.1-53.8h0m.1 42h0m.1-25.6h0m.1 12h0m.1 4.8h0m.1-15.5h0m.1 34.4h0m0-46.5h0m.1-14.9h0m.1 25.9h0m.1 24.1h0m.1 17h0m.1-40.7h0m.1 7.1h0m.1-15.4h0m.1 43.3h0m.1-17.3h0m.1-6.4h0m.1-14h0m0 36.4h0m.1-13.9h0m.1 18.9h0m.1-22h0m.1 11.7h0m.1 12.5h0m.1-20.6h0m.1 29.7h0m.1-45.8h0m.1 39h0m.1-8.9h0m.1 18.4h0m.1-34h0m0 14.6h0m.1-48.8h0m.1 56.9h0m.1.5h0m.1-19.8h0m.1 2.5h0m.1 24.7h0m.1-10.4h0m.1 3.2h0m.1 14.8h0m.1 17.1h0m.1-48.5h0m0 31.2h0m.1-30.6h0m.1 11.9h0m.1-8.2h0m.1 12.9h0m.1-49.5h0m.1 39h0m.1-9.6h0m.1 39.2h0m.1-52.6h0m.1 17.4h0m.1-8.3h0m0 40.2h0m.1-73h0m.1 50h0m.1-12.2h0m.1 28.6h0m.1 5.7h0m.1-6.7h0m.1-44.6h0m.1 17h0m.1-43.4h0m.1 69.1h0m.1-35.6h0m0-8.8h0m.1-35.8h0m.1 70.8h0m.1-28.4h0m.1-23.9h0m.1 13.3h0m.1 20.6h0m.1-12.7h0m.1 11.1h0m.1-45.5h0m.1 45.4h0m.1-1.4h0m0-32.7h0m.1 9.7h0m.1 3.6h0m.1-11.7h0m.1-12.4h0m.1 18.1h0m.1-4.2h0m.1 11.2h0m.1-3.8h0m.1-14.3h0m.1.3h0m.1 24.8h0m0-12.6h0m.1 7.7h0m.1-34.4h0m.1 46.9h0m.1-35.2h0m.1 14.4h0m.1 17.4h0m.1-19.1h0m.1-3.3h0m.1 20.9h0m.1-23.7h0m.1-7.2h0m.1 1.9h0m0 36.2h0m.1-13h0m.1 15.1h0m.1-5.6h0m.1-10.4h0m.1 15.5h0m.1-3.2h0m.1-16.6h0m.1-21h0m.1 36.4h0m.1-14.8h0m.1 8.4h0m0 17.6h0m.1-10.3h0m.1-19.5h0m.1 5h0m.1 11.5h0m.1-10.9h0m.1-7.1h0m.1 35.2h0m.1-33.7h0m.1-16.9h0m.1 41.3h0m.1 11.6h0m0-.6h0m.1-16.8h0m.1 38.3h0m.1-21.7h0m.1-3.7h0m.1 10.7h0m.1-3.5h0m.1-6.9h0m.1-3.5h0m.1-23.1h0m.1 46h0m.1-28.7h0m0 43.9h0m.1-14.6h0m.1-16.9h0m.1 20.1h0m.1-7.5h0m.1-26.2h0m.1 10.1h0m.1-6h0m.1 5.1h0m.1 30.7h0m.1-67.7h0m.1 64.3h0m0-50.2h0m.1 29.2h0m.1 33.1h0m.1-25.2h0m.1-.5h0m.1-9.6h0m.1-4.3h0m.1-12.2h0m.1 1h0m.1 22.4h0m.1-15.6h0m.1 10.4h0m0-4h0m.1 50.3h0m.1-60.1h0m.1 41.9h0m.1-45.6h0m.1 23.6h0m.1-22.2h0m.1-21.1h0m.1 32.1h0m.1-5.1h0m.1-7h0m.1-16.1h0m0-12.8h0m.1 3.8h0m.1 57h0m.1-84.6h0m.1 51h0m.1 18h0m.1-28h0m.1 44.5h0m.1-52.6h0m.1.9h0m.1 15h0m.1-10.4h0m.1-21.7h0m0 13.2h0m.1 5h0m.1 19.1h0m.1 27.9h0m.1-81.9h0m.1 42.5h0m.1-28.2h0m.1 49.4h0m.1-41.4h0m.1 49.2h0m.1-43.6h0m.1 34h0m0 1.1h0m.1-14.3h0m.1 38.5h0m.1-11.5h0m.1-39.6h0m.1 8.7h0m.1 32.2h0m.1 10.8h0m.1-1.3h0m.1-40.1h0m.1 10.2h0m.1-13.6h0m0 14.2h0m.1-10.5h0m.1 24.7h0m.1-27.3h0m.1 21.6h0m.1 9.3h0m.1-6.9h0m.1-29.9h0m.1 76.7h0m.1-79.2h0m.1 11.8h0m.1-29.9h0m0 47.8h0m.1-29.9h0m.1 49.9h0m.1-68.3h0m.1 53.7h0m.1-20h0m.1-.3h0m.1-5.8h0m.1 9.1h0m.1-17.1h0m.1 9.3h0m.1-15.3h0m0-17h0m.1-9.3h0m.1 24.1h0m.1 3.4h0m.1-25.2h0m.1 59.7h0m.1-43.5h0m.1-27.4h0m.1 38h0m.1 2.9h0m.1-14.8h0m.1 14h0m0-43.5h0m.1 45.3h0m.1 4.2h0m.1 2.5h0m.1 4.5h0m.1-18.2h0m.1-9.5h0m.1-10.5h0m.1 63.8h0m.1-40.7h0m.1-7h0m.1 7.8h0m.1-30h0m0 43.3h0m.1-9.5h0m.1.2h0m.1 8.5h0m.1-45.3h0m.1 52.2h0m.1 2.8h0m.1-24.1h0m.1 11.2h0m.1-.2h0m.1.1h0m.1-26.3h0m0 7.6h0m.1 17.5h0m.1-10.5h0m.1-6.8h0m.1 42.2h0m.1-25.3h0m.1 5.8h0m.1 1.8h0m.1 10.6h0m.1-16.2h0m.1-22h0m.1 11.1h0m0 35.5h0m.1-52.7h0m.1 49.7h0m.1-27.6h0m.1 31h0m.1-39.8h0m.1 45.7h0m.1-54.4h0m.1 35.6h0m.1-21.8h0m.1 35.8h0m.1-18.9h0m0-11.6h0m.1-22.1h0m.1 48h0m.1-3.4h0m.1 5.6h0m.1-31.2h0m.1 26.5h0m.1 11.4h0m.1-25.1h0m.1 9.3h0m.1 11.7h0m.1-5h0m0 1.5h0m.1-35h0m.1 37.8h0m.1-22.6h0m.1-13.8h0m.1 35.1h0m.1-44.7h0m.1 35.5h0m.1 1h0m.1-10.6h0m.1 22.7h0m.1-35.1h0m0-13.9h0m.1 13.2h0m.1 12.1h0m.1-.6h0m.1-34.6h0m.1 26.6h0m.1 26.8h0m.1 9.3h0m.1-38.7h0m.1 26.1h0m.1-1.2h0m.1.8h0m0-.7h0m.1-28.6h0m.1 50.5h0m.1-39.6h0m.1 1.7h0m.1-24.9h0m.1 18.2h0m.1 41.8h0m.1-64.2h0m.1 50.5h0m.1-18h0m.1-1.7h0m.1 16.1h0m0-41.2h0m.1 32h0m.1-7.2h0m.1-16.1h0m.1 53.3h0m.1 8.8h0m.1-56.4h0m.1 50.4h0m.1-51.3h0m.1 9.8h0m.1 3.6h0m.1 30h0m0-45.1h0m.1 35.5h0m.1 10h0m.1-8.5h0m.1-28.8h0m.1 29.7h0m.1 12.3h0m.1-14.5h0m.1-3h0m.1-49.1h0m.1 17.2h0m.1 55.2h0m0-79.9h0m.1 37.8h0m.1-21.2h0m.1 42.9h0m.1-12.9h0m.1-33.4h0m.1 23.1h0m.1 45h0m.1-25.8h0m.1 1.1h0m.1-37.1h0m.1 30.1h0m0-22.1h0m.1 30.9h0m.1-24.3h0m.1 10.2h0m.1 19.9h0m.1-17.6h0m.1.3h0m.1-14.4h0m.1-1.6h0m.1-22.3h0m.1 33.7h0m.1-17.2h0m0 32.9h0m.1-9.5h0m.1 15.1h0m.1-2.9h0m.1-29.5h0m.1-5.2h0m.1 51h0m.1-20h0m.1 8.1h0m.1 6.2h0m.1-13.6h0m.1 3.6h0m0 38h0m.1-24.9h0m.1-30.2h0m.1-24.3h0m.1 28h0m.1 30.7h0m.1-17.9h0m.1 7.5h0m.1.7h0m.1-14.6h0m.1-2.7h0m.1 3h0m.1-15.3h0m0 32.2h0m.1.3h0m.1-33.5h0m.1 37.5h0m.1-35h0m.1-4h0m.1 19.9h0m.1 12.2h0m.1-53.9h0m.1 63h0m.1-46.7h0m.1 34.2h0m0-36.6h0m.1-3.8h0m.1 31.8h0m.1-25.7h0m.1.8h0m.1 30.2h0m.1 21.6h0m.1-16.9h0m.1-26.4h0m.1 10.4h0m.1-21h0m.1 11.6h0m0-28.7h0m.1 36.2h0m.1-.2h0m.1-17.7h0m.1 2.2h0m.1-6.8h0m.1-29.9h0m.1 63.9h0m.1-43.1h0m.1 13.5h0m.1 12.6h0m.1-14.1h0m0-25.5h0m.1-7.3h0m.1 58.5h0m.1-31.6h0m.1 25.7h0m.1-23.4h0m.1-.2h0m.1 28.1h0m.1-9.7h0m.1-17.1h0m.1 15.1h0m.1-23.3h0m0 2.5h0m.1-1.7h0m.1 31h0m.1-24.6h0m.1-8.7h0m.1-5.8h0m.1-.4h0m.1 25.6h0m.1-47.7h0m.1 38.2h0m.1 3.1h0m.1 13h0m0-8.2h0m.1 7.9h0m.1-27.2h0m.1 15.1h0m.1 20.5h0m.1-65.2h0m.1 79.5h0m.1-31.4h0m.1 6.4h0m.1-34.8h0m.1 32.9h0m.1 40.4h0m.1-26.8h0m0-2.9h0m.1-22.1h0m.1-5.9h0m.1 26.2h0m.1-4.1h0m.1 20.8h0m.1-28.1h0m.1 33.6h0m.1-6.3h0m.1-10.6h0m.1 23.3h0m.1-19.8h0m0-15.3h0m.1-22.8h0m.1 64.5h0m.1-15.2h0m.1 6.8h0m.1-36.9h0m.1 17h0m.1 25.9h0m.1-34.2h0m.1 47.9h0m.1-36.6h0m.1 14h0m0 2.9h0m.1 19.5h0m.1-38.5h0m.1 4.4h0m.1-13.5h0m.1-18.8h0m.1 34.1h0m.1 3.4h0m.1-13h0m.1 29.9h0m.1-25.7h0m.1 20.5h0m0-30.1h0m.1-8.5h0m.1-7.2h0m.1 20.6h0m.1-22.5h0m.1-46.1h0m.1 32.7h0m.1 22.9h0m.1-25.9h0m.1 9.7h0m.1 12.9h0m.1-33.3h0m0 47h0m.1-35.3h0m.1 17.3h0m.1 41.2h0m.1-75.1h0m.1-16.3h0m.1 19.5h0m.1 16.9h0m.1 18.4h0m.1-23.1h0m.1 1.2h0m.1-31.2h0m0 19.4h0m.1 12.6h0m.1 10.2h0m.1-11.3h0m.1 25.2h0m.1-34.8h0m.1 21.7h0m.1-14.2h0m.1 3.3h0m.1 19.8h0m.1 6.3h0m.1 6h0m0-9.5h0m.1-26.1h0m.1-7.4h0m.1 62.9h0m.1-33.1h0m.1-4.8h0m.1 4.1h0m.1-32.3h0m.1 28.4h0m.1-7h0m.1 18.9h0m.1 5.2h0m.1-10.6h0m0 39.5h0m.1-19h0m.1-21.2h0m.1-1.2h0m.1-15h0m.1 60.1h0m.1-19.3h0m.1-17.1h0m.1.2h0m.1 17.3h0m.1-1.3h0m.1 9.8h0m0-5.9h0m.1-4.3h0m.1-56.1h0m.1 69.8h0m.1-65h0m.1 75.3h0m.1-32.8h0m.1 27.6h0m.1-2.8h0m.1-8.3h0m.1 8.3h0m.1-26h0m0 35.1h0m.1-50.9h0m.1 3.4h0m.1 22.3h0m.1 17.1h0m.1-96.5h0m.1 86.2h0m.1-20.3h0m.1 3.9h0m.1-16.5h0m.1 50.9h0m.1-73h0m0 .4h0m.1 45.2h0m.1.6h0m.1-27.4h0m.1 11.6h0m.1-3.9h0m.1 44.3h0m.1-34.6h0m.1 36.7h0m.1-37.2h0m.1-25.4h0m.1 29.2h0m0 .1h0m.1-13.7h0m.1 19.6h0m.1-69.1h0m.1 8.4h0m.1 42.7h0m.1 2.5h0m.1-33.8h0m.1 27.2h0m.1 3.2h0m.1 26h0m.1-53.1h0m0-1.2h0m.1 8.6h0m.1 33.8h0m.1-58.5h0m.1 54.2h0m.1 2.2h0m.1-33.1h0m.1-6.4h0m.1 42.8h0m.1-12.5h0m.1 11.8h0m.1-57.6h0m.1 17.8h0m0 14.3h0m.1 9.7h0m.1-28.2h0m.1-18.9h0m.1 7.2h0m.1 40.5h0m.1 1.2h0m.1-35.1h0m.1 13.5h0m.1 36.6h0m.1-28.9h0m.1 1.8h0m0-11.1h0m.1 14.7h0m.1 4h0m.1 24h0m.1-38h0m.1.4h0m.1 52h0m.1-29h0m.1 4.2h0m.1-10.4h0m.1-11.2h0m.1 19.2h0m0 2.5h0m.1-57.3h0m.1 45h0m.1-47.5h0m.1 67.2h0m.1-26.5h0m.1 8h0m.1-17.5h0m.1 28.3h0m.1-19.6h0m.1-7.4h0m.1 32h0m0-9.7h0m.1 22.6h0m.1-16.6h0m.1 4.3h0m.1-23.3h0m.1 3.4h0m.1 12.5h0m.1-31.2h0m.1 1.8h0m.1 24.3h0m.1 9.5h0m.1 3.3h0m0 17h0m.1 5.9h0m.1-35.5h0m.1-.5h0m.1 9.4h0m.1 4.2h0m.1-51h0m.1 58.5h0m.1 2.3h0m.1-36.3h0m.1 36h0m.1-29.3h0m0 4.8h0m.1.7h0m.1 9.8h0m.1 9.3h0m.1 17.6h0m.1-12.8h0m.1-16.8h0m.1 21.9h0m.1-13.7h0m.1-49h0m.1 32.3h0m.1 23.9h0m.1-14.7h0m0-29.7h0m.1-.6h0m.1 52.9h0m.1-34.2h0m.1 42.8h0m.1-35.1h0m.1 7.4h0m.1-31.5h0m.1 5.3h0m.1 30.9h0m.1 5.6h0m.1-19.3h0m0-17.5h0m.1 36.8h0m.1 20.4h0m.1-58.2h0m.1 47.4h0m.1-28.2h0m.1 7.7h0m.1-29.2h0m.1-9.8h0m.1 52.1h0m.1 16.2h0m.1-63.2h0m0 33.5h0m.1 27.4h0m.1-36.4h0m.1 18.2h0m.1 26.7h0m.1-15.8h0m.1-45.4h0m.1 37.1h0m.1 2.9h0m.1-9.3h0m.1-14.8h0m.1-14h0m0 35.1h0m.1-6.2h0m.1-17.1h0m.1 2.8h0m.1-5.2h0m.1-2.8h0m.1 35.9h0m.1-51.2h0m.1 7.6h0m.1-4.6h0m.1 22.3h0m.1 31h0m0-18.6h0m.1-56.2h0m.1 40.1h0m.1-46.6h0m.1 74.1h0m.1-13h0m.1-40.9h0m.1 17.1h0m.1 16.8h0m.1-2h0m.1-7.3h0m.1-4.7h0m0-16.9h0m.1 18h0m.1-5.6h0m.1-5.9h0m.1 2.9h0m.1-28.1h0m.1 24.5h0m.1 21h0m.1-22.8h0m.1-38.2h0m.1 44.1h0m.1-44.8h0m0 55.7h0m.1-27.1h0m.1-1.5h0m.1 52.8h0m.1-30.5h0m.1 3.1h0m.1 1.8h0m.1-6.3h0m.1-12.8h0m.1 16.2h0m.1-18.4h0m.1-3.8h0m.1 16.7h0m0 9.3h0m.1-15.6h0m.1 12.7h0m.1-9.3h0m.1 13.4h0m.1 15.3h0m.1 25.9h0m.1-87.6h0m.1 61.9h0m.1-6.9h0m.1-7.2h0m.1-29.5h0m0 40.8h0m.1 3h0m.1-50.3h0m.1 53.2h0m.1 20.9h0m.1-45.3h0m.1-8.1h0m.1 20.8h0m.1 18.5h0m.1-37.3h0m.1-10.6h0m.1 12.1h0m0 5.8h0m.1-.5h0m.1 40.1h0m.1-20.8h0m.1 8.7h0m.1.3h0m.1-28.3h0m.1 17.5h0m.1-17h0m.1-11.9h0m.1 20.2h0m.1-18.3h0m0 20.9h0m.1-28.7h0m.1 15.3h0m.1 10.1h0m.1-28.6h0m.1-9.6h0m.1 18.3h0m.1 13.2h0m.1 28.5h0m.1-29.1h0m.1-35.2h0m.1 23.8h0m0 23.4h0m.1-46.5h0m.1 50.2h0m.1-18.3h0m.1 7.6h0m.1-1.4h0m.1-38.1h0m.1 12.9h0m.1 3.6h0m.1 24.5h0m.1 10.6h0m.1-60.9h0m0 20.2h0m.1 52.4h0m.1-27.6h0m.1-19.3h0m.1 5.6h0m.1-8.1h0m.1.7h0m.1 16.7h0m.1-14h0m.1 1.3h0m.1 27.1h0m.1 6.4h0m.1-25.5h0m0-4.8h0m.1 26.4h0m.1 17.5h0m.1-77.6h0m.1 47.3h0m.1.7h0m.1 20.8h0m.1-27.3h0m.1 28.5h0m.1-7.1h0m.1 24.7h0m.1-13.6h0m0-10.7h0m.1 35.4h0m.1-42.7h0m.1-26.7h0m.1 60.2h0m.1-7.7h0m.1-17.4h0m.1 18.4h0m.1-36.6h0m.1 37.8h0m.1-11.8h0m.1-10.6h0m0 25.3h0m.1 13.7h0m.1-18.3h0m.1-14.3h0m.1 1.9h0m.1 1.9h0m.1-2.4h0m.1-15.5h0m.1 33.5h0m.1-56.8h0m.1 57h0m.1-5.7h0m0-19.8h0m.1 2h0m.1 28.3h0m.1-32.8h0m.1 27.3h0m.1-43h0m.1 3.6h0m.1-18.6h0m.1 59h0m.1 12h0m.1-64h0m.1 50h0m0-42.7h0m.1 15.6h0m.1 1.1h0m.1-30.8h0m.1 12.7h0m.1 28h0m.1-68.1h0m.1 42.5h0m.1 10.4h0m.1 36.2h0m.1-28.8h0m.1-39.7h0m0-3.1h0m.1 43.7h0m.1-19h0m.1-.2h0m.1-16.8h0m.1 49.3h0m.1-30.2h0m.1 16.5h0m.1-32.5h0m.1-5.1h0m.1 35.6h0m.1-47.7h0m.1 51.6h0m0-13.4h0m.1-7.7h0m.1-40.3h0m.1 50.7h0m.1 15.4h0m.1 2.1h0m.1-.6h0m.1-59.2h0m.1 5.2h0m.1 48.1h0m.1 5.9h0m.1-17.3h0m0-23.6h0m.1 11.7h0m.1-7.5h0m.1-14.3h0m.1 39.2h0m.1-37.8h0m.1 7.2h0m.1 21.5h0m.1-1.2h0m.1-16h0m.1 38.8h0m.1-5.9h0m0-4.5h0m.1 10.5h0m.1 3.2h0m.1-57.3h0m.1 73.1h0m.1 1.2h0m.1-60.9h0m.1 34.4h0m.1 2.7h0m.1-2.7h0m.1 31.3h0m.1-52h0m0 16.1h0m.1 2.9h0m.1 31.8h0m.1-12.9h0m.1-14.9h0m.1 4.1h0m.1 5h0m.1 33.9h0m.1-70.4h0m.1 41.8h0m.1 17.4h0m.1-5.6h0m0-37.1h0m.1 18.1h0m.1-4.8h0m.1-2.8h0m.1-10.9h0m.1 9.9h0m.1 39.3h0m.1-25.2h0m.1 7.5h0m.1-30.4h0m.1 20.8h0m.1-26.4h0m0 35.8h0m.1-16.2h0m.1-24.5h0m.1 27.5h0m.1-15.6h0m.1 48.2h0m.1 7.1h0m.1-31.2h0m.1-26h0m.1 6.5h0m.1-35.5h0m.1 16.3h0m0 10.1h0m.1-40.9h0m.1 56.6h0m.1 11.8h0m.1-4.5h0m.1-33.7h0m.1 78h0m.1-46.6h0m.1-9.1h0m.1-20.4h0m.1-6.9h0m.1 19.6h0m.1 18.4h0m0-16.1h0m.1 16.9h0m.1-72.1h0m.1 54.9h0m.1-22.6h0m.1-11.3h0m.1 74.4h0m.1-62.4h0m.1-13h0m.1 34.4h0m.1-15.5h0m.1 31.9h0m0-33.2h0m.1 5.7h0m.1-8h0m.1-27.6h0m.1 42.5h0m.1-1.2h0m.1-18.5h0m.1 3.9h0m.1-19.5h0m.1 38.6h0m.1 1.6h0m.1-14.4h0m0 12.5h0m.1-24h0m.1 1.1h0m.1 6.3h0m.1-41.9h0m.1 74.5h0m.1-24.2h0m.1-20.9h0m.1-3.9h0m.1 10.6h0m.1-31.3h0m.1 25h0m0 6.5h0m.1 39.3h0m.1-32.2h0m.1 23.9h0m.1-7h0m.1 6.5h0m.1-4.6h0m.1-28.4h0m.1 33.3h0m.1-24.1h0m.1 11.2h0m.1-17.2h0m0 39.8h0m.1-6.9h0m.1-2.5h0m.1-22h0m.1-1h0m.1 20.4h0m.1-25.3h0m.1 4.5h0m.1 24.7h0m.1-22.2h0m.1 52.4h0m.1-34.3h0m0-18.2h0m.1 23.3h0m.1-1.8h0m.1-19.4h0m.1 11h0m.1-17.7h0m.1 25.7h0m.1 26.6h0m.1-10.4h0m.1-15.2h0m.1.5h0m.1 17.1h0m.1 11.3h0m0 12h0m.1-49.7h0m.1 31.6h0m.1-5.3h0m.1 36.9h0m.1-71.4h0m.1 3.1h0m.1 18.6h0m.1 15.1h0m.1-2.2h0m.1 24h0m.1-25.7h0m0-28.8h0m.1 30.6h0m.1 10.8h0m.1-30.8h0m.1 10.8h0m.1 18h0m.1-9h0m.1 29.5h0m.1-2.1h0m.1-73.7h0m.1 21.9h0m.1 1.6h0m0-42.2h0m.1 48.9h0m.1-6.7h0m.1 30.7h0m.1-49.3h0m.1 36.2h0m.1-16.3h0m.1 16.8h0m.1-38.8h0m.1 36.1h0m.1-4.2h0m.1-11.5h0m0 9.2h0m.1-36.9h0m.1 23.6h0m.1 36h0m.1-7.5h0m.1-30.8h0m.1-31.5h0m.1 7.6h0m.1 1.9h0m.1 30.1h0m.1-5.9h0m.1-25h0m0 14.5h0m.1 20.7h0m.1-58.1h0m.1-11.1h0m.1 51.2h0m.1-14.4h0m.1-1.2h0m.1 11.8h0m.1-19.8h0m.1 11.3h0m.1-9.6h0m.1 39.1h0m0-23.7h0m.1 7.8h0m.1.6h0m.1-23.3h0m.1 54.4h0m.1-47h0m.1-7.6h0m.1-18.8h0m.1 22.5h0m.1 13.1h0m.1-26.9h0m.1 55.7h0m.1-17.4h0m0-22.4h0m.1 39.9h0m.1-38.9h0m.1 23.5h0m.1 16.5h0m.1-52.1h0m.1 48.5h0m.1-17.1h0m.1 12.8h0m.1-1.3h0m.1 12.1h0m.1-42.2h0m0 .6h0m.1 9.9h0m.1 16.2h0m.1-2.8h0m.1-11.3h0m.1 10.7h0m.1-31.9h0m.1 48.2h0m.1-7.9h0m.1-26.3h0m.1 3h0m.1 27.8h0m0-22.4h0m.1-7.8h0m.1 28.2h0m.1 13.6h0m.1-17.4h0m.1-16.5h0m.1 21.4h0m.1-10.2h0m.1-24.7h0m.1 46.8h0m.1-55h0m.1 7h0m0 1.9h0m.1 14h0m.1-1.9h0m.1 14.1h0m.1-24.6h0m.1 11.6h0m.1-16.6h0m.1 1.9h0m.1-29h0m.1 49.2h0m.1-41.6h0m.1 45.5h0m0-58.2h0m.1 73.8h0m.1-42.6h0m.1-29.6h0m.1 29.2h0m.1-14.8h0m.1 17.9h0m.1-7.7h0m.1 23.9h0m.1-16.8h0m.1-21.7h0m.1 28.1h0m0-18.8h0m.1-10.1h0m.1 9.6h0m.1 24.2h0m.1-1.6h0m.1-33.4h0m.1 54.6h0m.1 15.7h0m.1-33.8h0m.1 1.3h0m.1 1h0m.1 6.5h0m0-20.5h0m.1 17.2h0m.1 9.1h0m.1-8.2h0m.1-15.7h0m.1-18.6h0m.1 7.5h0m.1 34.7h0m.1-16.1h0m.1 11h0m.1 10.4h0m.1 1.3h0m.1 13.2h0m0-40.2h0m.1-6.6h0m.1 19.2h0m.1-2.7h0m.1 19.3h0m.1-14.7h0m.1 13.3h0m.1-15.3h0m.1-34.5h0m.1 72.7h0m.1-3.4h0m.1-15.8h0m0-45.9h0m.1 28.4h0m.1-4.8h0m.1-4.7h0m.1 2h0m.1 11.2h0m.1 20.2h0m.1-37.9h0m.1 12.6h0m.1-20.3h0m.1 42.1h0m.1-2.5h0m0-35.9h0m.1-29.5h0m.1 55.3h0m.1-26.3h0m.1 7.9h0m.1 6.1h0m.1-18.2h0m.1-15.1h0m.1 21.2h0m.1 7.7h0m.1-17.6h0m.1 26.8h0m0-8h0m.1-24.9h0m.1 36.3h0m.1 3.8h0m.1 1.5h0m.1-57.7h0m.1 46.6h0m.1-23.1h0m.1 3.6h0m.1 22.1h0m.1-43.1h0m.1 14.8h0m0 20.5h0m.1-7.2h0m.1 16.5h0m.1-1.1h0m.1-13.9h0m.1-29h0m.1 30.3h0m.1-25.6h0m.1 5.4h0m.1 7.8h0m.1 32.1h0m.1 7.9h0m0 3.2h0m.1-21.5h0m.1-44h0m.1 20.3h0m.1 45.3h0m.1-9.5h0m.1-29.1h0m.1 27.7h0m.1-32.9h0m.1-2h0m.1-8.8h0m.1 50.4h0m.1-65.2h0m0 43.2h0m.1 3.5h0m.1-9.5h0m.1 44.8h0m.1 2.1h0m.1-31.2h0m.1-12.5h0m.1-17.9h0m.1 20.6h0m.1-17.3h0m.1 26.2h0m.1 1h0m0-38.2h0m.1 30.1h0m.1 31.1h0m.1-15h0m.1 16.1h0m.1-48.3h0m.1 88.3h0m.1-65.2h0m.1 28.1h0m.1-33.7h0m.1 45.8h0m.1 11.9h0m0-25.5h0m.1-25.9h0m.1-62.5h0m.1 62.9h0m.1-.9h0m.1 40.2h0m.1 23.2h0m.1-47.1h0m.1 17.3h0m.1-17.6h0m.1 3.5h0m.1 3.1h0m0 1.2h0m.1-23h0m.1 5.2h0m.1-15.1h0m.1-6.7h0m.1 49.9h0m.1-29.7h0m.1 37.6h0m.1-58.2h0m.1 24.5h0m.1-30.4h0m.1 64.8h0m0-30.2h0m.1-24h0m.1-16.2h0m.1 31.3h0m.1-17.1h0m.1 14.9h0m.1 28.3h0m.1-34.1h0m.1-29.5h0m.1 38.1h0m.1 25.6h0m.1-27.2h0m0 3.6h0m.1 38.7h0m.1-76.9h0m.1 14.6h0m.1 36h0m.1 15.5h0m.1-25h0m.1-36.4h0m.1 4.8h0m.1 41.2h0m.1-30.6h0m.1 2.3h0m0-4.9h0m.1-14.9h0m.1 57.3h0m.1-5.4h0m.1-83.6h0m.1 51.7h0m.1-19.1h0m.1 2.9h0m.1 25.5h0m.1-3.9h0m.1 24.4h0m.1-41.8h0m.1 17.7h0m0 26h0m.1-20h0m.1-4.4h0m.1 26.1h0m.1-27.5h0m.1-24.1h0m.1 12.4h0m.1-7.1h0m.1 27.9h0m.1-26.9h0m.1-6.4h0m.1 42h0m0-23.9h0m.1 19.4h0m.1-21.6h0m.1-24.5h0m.1 6.8h0m.1 45.6h0m.1-13.4h0m.1-4h0m.1-13.9h0m.1-7.2h0m.1-12.7h0m.1 42.3h0m0-3.7h0m.1-23.8h0m.1 16.3h0m.1-24.5h0m.1 52.9h0m.1-15.7h0m.1-12.3h0m.1-35.2h0m.1 28.9h0m.1 6.9h0m.1 6.6h0m.1-38.7h0m0 1.4h0m.1 46h0m.1-57.8h0m.1 42.4h0m.1-8.7h0m.1-39.6h0m.1 32h0m.1-30.7h0m.1 22.2h0m.1 24.1h0m.1 8.2h0m.1-8.1h0m0 16.4h0m.1-30h0m.1 31.7h0m.1-56h0m.1 66.8h0m.1-35.6h0m.1 24.9h0m.1 6.7h0m.1 4h0m.1-36h0m.1 43.8h0m.1-54.2h0m0 16.2h0m.1 31.1h0m.1-24.1h0m.1-57.6h0m.1 11.6h0m.1 44.6h0m.1-6.1h0m.1 19.1h0m.1-48h0m.1 45.4h0m.1-19.3h0m.1-11.1h0m.1 46.5h0m0 2.8h0m.1-34.7h0m.1 11.5h0m.1-36.6h0m.1 12.9h0m.1 49.7h0m.1-23.2h0m.1-41.1h0m.1-3.6h0m.1 36.1h0m.1 4.2h0m.1 6.6h0m0-17.1h0m.1-2.8h0m.1 34.4h0m.1-10.7h0m.1-18.4h0m.1-8.3h0m.1-7.1h0m.1-36h0m.1 30.5h0m.1-16.3h0m.1 53.9h0m.1-1.8h0m0-8.7h0m.1 1.6h0m.1-13.9h0m.1.9h0m.1-17.6h0m.1 34.4h0m.1-16.7h0m.1 2.7h0m.1 18.1h0m.1-5.5h0m.1 13.3h0m.1-35.8h0m0-13.2h0m.1 11.3h0m.1-4.9h0m.1-39.1h0m.1 71.2h0m.1 38.9h0m.1-33.3h0m.1-21.9h0m.1-.9h0m.1-18.9h0m.1 0h0m.1-6.6h0m0 .9h0m.1 49.5h0m.1-.8h0m.1-16.4h0m.1-43.5h0m.1 46.3h0m.1-29h0m.1 30h0m.1 4.7h0m.1-10.8h0m.1-17h0m.1 33.2h0m0-32.4h0m.1 21.3h0m.1-38.3h0m.1-2.6h0m.1 10.2h0m.1 21.4h0m.1-4.1h0m.1-13.1h0m.1 52.5h0m.1-7.9h0m.1-24.3h0m.1-5.7h0m.1 11.9h0m0-15.5h0m.1 25.1h0m.1 4h0m.1 27.8h0m.1-37h0m.1-7h0m.1 26.8h0m.1-6.5h0m.1 4.5h0m.1-10.2h0m.1 14h0m.1-38.7h0m0-15h0m.1 42.9h0m.1-14.5h0m.1 36.6h0m.1-7.8h0m.1-33.9h0m.1 21.7h0m.1-42.4h0m.1 28.4h0m.1 17.1h0m.1-10.9h0m.1-26.3h0m0 28.5h0m.1 1.5h0m.1-9.6h0m.1.3h0m.1-7.3h0m.1 34.6h0m.1-21.7h0m.1-25.6h0m.1 38.7h0m.1-20.4h0m.1 5.9h0m.1-10.7h0m0-57.6h0m.1 89.2h0m.1-13.6h0m.1-25.7h0m.1-10.5h0m.1 17.3h0m.1-26h0m.1 24.4h0m.1-25.6h0m.1 19.9h0m.1-19.8h0m.1 22.3h0m0-40.4h0m.1 43.4h0m.1-39.2h0m.1 45.1h0m.1-38h0m.1 41.8h0m.1-60.1h0m.1 43.5h0m.1-21.1h0m.1-3.1h0m.1-22.8h0m.1 52.3h0m0-16h0m.1 2.8h0m.1-36.8h0m.1 21.3h0m.1 16.8h0m.1 2.3h0m.1-10h0m.1-12.8h0m.1 26.5h0m.1-18.4h0m.1 14h0m.1-18.2h0m0 11.1h0m.1 2h0m.1-4.4h0m.1 36.3h0m.1-31h0m.1-20h0m.1 37.4h0m.1-57.1h0m.1 31.6h0m.1 9.4h0m.1 24.2h0m.1-11.7h0m.1-12.5h0m0 4h0m.1 11h0m.1-3.9h0m.1 13.6h0m.1-22.7h0m.1 10.6h0m.1-12.8h0m.1 42.7h0m.1-34.7h0m.1 1.5h0m.1 28.3h0m.1-24.9h0m0 4h0m.1 12.9h0m.1-38.9h0m.1 26.1h0m.1-36.5h0m.1 30.8h0m.1-8.8h0m.1-12h0m.1 38.5h0m.1-33.8h0m.1 56.3h0m.1-32h0m0 3.2h0m.1-31.8h0m.1 37.2h0m.1-3.4h0m.1 4.6h0m.1-4.3h0m.1-22.8h0m.1 10.2h0m.1 5.5h0m.1-.2h0m.1-17.7h0m.1 13.8h0m0 27.4h0m.1 3h0m.1-37.9h0m.1 15.8h0m.1-30.4h0m.1 53.2h0m.1-10.2h0m.1-35.6h0m.1 15.7h0m.1 17.4h0m.1-21.6h0m.1 19.1h0m0-17.3h0m.1 31.4h0m.1-40.8h0m.1 17.4h0m.1-6.9h0m.1 3h0m.1-11.4h0m.1 5.2h0m.1-12.3h0m.1 34.6h0m.1-25.1h0m.1 13.2h0m0 11.4h0m.1-4.1h0m.1-12.2h0m.1-9.9h0m.1 10h0m.1 12.1h0m.1-25.3h0m.1 38.2h0m.1 1.1h0m.1-53.8h0m.1 31.9h0m.1 13.7h0m.1-26.6h0m0 6.5h0m.1-40h0m.1 50.4h0m.1-14.1h0m.1 22.9h0m.1-17.2h0m.1-34.6h0m.1 20.3h0m.1-1.3h0m.1 30.7h0m.1-2.7h0m.1-43.7h0m0-1.3h0m.1 51.4h0m.1-45.9h0m.1-3.4h0m.1 30h0m.1-10.3h0m.1-.7h0m.1-6.9h0m.1 18.4h0m.1-45h0m.1 19.2h0m.1-15h0m0 58.7h0m.1-16.6h0m.1-13.6h0m.1-22.1h0m.1 33.4h0m.1-23.9h0m.1 6.6h0m.1 39.5h0m.1-78.7h0m.1 56.4h0m.1-20.2h0m.1 36.3h0m0-9.2h0m.1-21.6h0m.1 11.1h0m.1 2.3h0m.1 3.1h0m.1-1.7h0m.1 1h0m.1 33.9h0m.1-60.4h0m.1 23.7h0m.1-31.8h0m.1 5.6h0m0 20.2h0m.1-10.5h0m.1-36.3h0m.1 48.8h0m.1 16.2h0m.1 12.2h0m.1-26.8h0m.1-11.5h0m.1-15.3h0m.1-.9h0m.1 6.4h0m.1 25.3h0m0-16.5h0m.1 1h0m.1 2.7h0m.1-9.3h0m.1 19.2h0m.1-26.8h0m.1 27.9h0m.1-1.3h0m.1-.2h0m.1 9.7h0m.1 6.5h0m.1-35.9h0m.1 19.3h0m0 44.3h0m.1-30.4h0m.1-25.3h0m.1-25.3h0m.1 6.3h0m.1 33h0m.1 18.7h0m.1-42.1h0m.1 52.2h0m.1-40.3h0m.1-33.3h0m.1 55h0m0-23.8h0m.1-6.5h0m.1 29.1h0m.1-23.4h0m.1 25.4h0m.1-38.1h0m.1 5.8h0m.1 57.8h0m.1-58.3h0m.1 26.4h0m.1-12.7h0m.1-21.3h0m0 11h0m.1 22.8h0m.1-23.4h0m.1-11.9h0m.1 32.6h0m.1-9.4h0m.1 23h0m.1-44.3h0m.1 39.9h0m.1-.6h0m.1-13.1h0m.1 11.2h0m0-21.1h0m.1 10h0m.1 3h0m.1 8.5h0m.1-22.7h0m.1 0h0m.1 1.2h0m.1-23.9h0m.1 28.2h0m.1 12.9h0m.1-47.3h0m.1-11.8h0m0 60.7h0m.1 14.5h0m.1-46.2h0m.1 14.6h0m.1 13.7h0m.1-23.5h0m.1 5h0m.1 4.5h0m.1 11.5h0m.1-14.8h0m.1 7.6h0m.1 9.1h0m0 4h0m.1 5.2h0m.1 11.6h0m.1-14.9h0m.1-21.3h0m.1-22.5h0m.1 25.4h0m.1 2.9h0m.1 31.9h0m.1-23.2h0m.1-38.6h0m.1 78.3h0m0-34.5h0m.1 29.7h0m.1 1.9h0m.1-44.6h0m.1 22.6h0m.1.4h0m.1 25.6h0m.1-16h0m.1-25.4h0m.1 8.9h0m.1 25.9h0m.1-27.8h0m.1-4h0m0 19.9h0m.1-29.3h0m.1 47.1h0m.1-9.6h0m.1-8.9h0m.1 19.9h0m.1-8.2h0m.1-21.2h0m.1-38.9h0m.1 83.3h0m.1-48.2h0m.1 36h0m0-54.9h0m.1 7.5h0m.1 15.7h0m.1-1.5h0m.1-34h0m.1 10.4h0m.1-2.5h0m.1 26.5h0m.1 12.2h0m.1-12.4h0m.1-19.7h0m.1 1.9h0m0-20h0m.1 38.4h0m.1-12.6h0m.1-1.9h0m.1-7.3h0m.1 38.1h0m.1-28.5h0m.1 5.6h0m.1-31h0m.1-36.1h0m.1 17.3h0m.1 11.2h0m0 19.8h0m.1-23h0m.1.6h0m.1.3h0m.1 18.3h0m.1 21.9h0m.1-49.2h0m.1 53.7h0m.1-47.9h0m.1-.1h0m.1 12.5h0m.1 1.1h0m0 12.6h0m.1.8h0m.1-12.7h0m.1 15.5h0m.1 11.7h0m.1-.6h0m.1-24.7h0m.1-6.4h0m.1 6.8h0m.1 9.6h0m.1 11.1h0m.1-6.2h0m0 .3h0m.1 16.2h0m.1-10.6h0m.1-4.3h0m.1-18.8h0m.1 27.6h0m.1 3.9h0m.1-64.5h0m.1-2.3h0m.1 70.9h0m.1-40.1h0m.1 44.4h0m.1 12.1h0m0-26.6h0m.1-11.4h0m.1-15.2h0m.1 46.9h0m.1-28.4h0m.1 19.8h0m.1 3.3h0m.1-15.4h0m.1-8.7h0m.1 8.9h0m.1 12.7h0m.1-33h0m0 24.8h0m.1-.8h0m.1 32.4h0m.1 6.4h0m.1 2h0m.1-29.7h0m.1 4.6h0m.1-26.3h0m.1 28.9h0m.1-30.4h0m.1-8.9h0m.1 32.4h0m0-7.5h0m.1 6.4h0m.1-38.9h0m.1 51.2h0m.1-16.6h0m.1-32.1h0m.1 11.5h0m.1-21.4h0m.1 59.2h0m.1-14.1h0m.1-19.7h0m.1 23.2h0m0-15.2h0m.1 30.7h0m.1-2.4h0m.1-33.8h0m.1-12.3h0m.1-7.9h0m.1 11.1h0m.1 20.8h0m.1-38h0m.1 51.3h0m.1-39.6h0m.1 54.6h0m0-40.5h0m.1-12.7h0m.1 14.6h0m.1.8h0m.1-16h0m.1 19.9h0m.1-40.2h0m.1 43.7h0m.1-11.4h0m.1-23.2h0m.1-14.6h0m.1 17.6h0m0-20.5h0m.1 23.1h0m.1-.2h0m.1 5.8h0m.1 7.7h0m.1 2.6h0m.1-12.2h0m.1-13.8h0m.1.2h0m.1-15.7h0m.1 12.9h0m.1 31.8h0m.1-1.1h0m0-10.4h0m.1 12.1h0m.1 6.2h0m.1-26.5h0m.1 11.4h0m.1-21.7h0m.1 7.6h0m.1-10h0m.1 11.5h0m.1-14.2h0m.1 27.1h0m.1 3.1h0m0-18.6h0m.1 39.4h0m.1-5.2h0m.1-49.1h0m.1 27.4h0m.1-17.5h0m.1 54.3h0m.1-28.7h0m.1 15.6h0m.1-21.8h0m.1 4.1h0m.1 3.7h0m0-5.9h0m.1-18.5h0m.1 3.7h0m.1 20.3h0m.1-3.7h0m.1-16.8h0m.1 35.3h0m.1-14.1h0m.1 26.5h0m.1 3.8h0m.1 1.9h0m.1-21.3h0m0-24.8h0m.1 17.9h0m.1 23.7h0m.1-33h0m.1 28h0m.1-40.2h0m.1 59.6h0m.1-1.8h0m.1-31.5h0m.1-22.6h0m.1 18.4h0m.1 8.5h0m0 17.7h0m.1-10.1h0m.1-18.3h0m.1 17.1h0m.1 2.5h0m.1 19.8h0m.1-42.5h0m.1 10.3h0m.1 13h0m.1.3h0m.1-33.3h0m.1 6.3h0m0 28.9h0m.1-3.1h0m.1 13.1h0m.1-22.2h0m.1 13.4h0m.1-17h0m.1 0h0m.1 25.3h0m.1 6.4h0m.1-9.3h0m.1-4.3h0m.1-8.7h0m0 22.5h0m.1-12h0m.1-34.3h0m.1 29.2h0m.1 4.4h0m.1-38.8h0m.1 45.8h0m.1 9h0m.1-49.1h0m.1-20h0m.1 50.8h0m.1-28.2h0m.1 49.2h0m0-47.5h0m.1 8h0m.1 26.2h0m.1 19.8h0m.1-47.2h0m.1 17.1h0m.1-38.1h0m.1 4.5h0m.1 22.8h0m.1 1.4h0m.1 7.6h0m.1-5.8h0m0 18.9h0m.1-14.5h0m.1-45.5h0m.1 41.1h0m.1-60.5h0m.1 65.8h0m.1-13.5h0m.1-21.3h0m.1 42.1h0m.1-13.2h0m.1-14.7h0m.1 14.4h0m0-3.8h0m.1-9.1h0m.1-19.4h0m.1 12h0m.1 23.1h0m.1-6.2h0m.1-7.7h0m.1-22.5h0m.1-7.3h0m.1 36h0m.1 12.5h0m.1-33.3h0m0 24.1h0m.1-31.8h0m.1 19.1h0m.1.6h0m.1-24.5h0m.1 36.5h0m.1-12.1h0m.1-4h0m.1-51h0m.1 39.1h0m.1-1.1h0m.1-34.3h0m0 22.9h0m.1-28.7h0m.1 19.9h0m.1-1.5h0m.1 33h0m.1-27.4h0m.1 36.9h0m.1-3.5h0m.1-39.4h0m.1 63.5h0m.1-55.9h0m.1 34.4h0m0-11.7h0m.1-8.4h0m.1-21.3h0m.1 14.4h0m.1-8.3h0m.1-6.9h0m.1 16.5h0m.1 37.2h0m.1-58.5h0m.1 44.2h0m.1-14h0m.1-18.3h0m.1 48.1h0m0-49.4h0m.1-5.8h0m.1 43.9h0m.1 13.4h0m.1-38.5h0m.1.6h0m.1.5h0m.1 21.5h0m.1-39h0m.1 5.7h0m.1 7.2h0m.1 20.4h0m0 23.3h0m.1-38.1h0m.1 39.4h0m.1-56.5h0m.1 45.4h0m.1-8.7h0m.1 19.6h0m.1-18.2h0m.1-15.7h0m.1 6.6h0m.1 31.8h0m.1-8.8h0m0-25.2h0m.1 3h0m.1-9.8h0m.1-2.4h0m.1 29.8h0m.1-14h0m.1-37h0m.1 36.5h0m.1-24.4h0m.1 17.8h0m.1 4h0m.1-17.9h0m0 21.4h0m.1 6.5h0m.1-27.9h0m.1 16.7h0m.1-15.6h0m.1 34h0m.1-41.7h0m.1 9.9h0m.1 8.1h0m.1-24.9h0m.1 10.4h0m.1 7.2h0m0-20.8h0m.1-13.9h0m.1 29.2h0m.1 12.6h0m.1 4.6h0m.1 26.9h0m.1-38.3h0m.1 7.9h0m.1-.6h0m.1-27.2h0m.1-14.4h0m.1 53.9h0m0-56.3h0m.1 47.3h0m.1-17.6h0m.1 13.4h0m.1 22.3h0m.1-31.5h0m.1 3.9h0m.1 21.1h0m.1-12.5h0m.1 13.8h0m.1-47.5h0m.1 66h0m0-21.9h0m.1-26.9h0m.1 32.1h0m.1-21.9h0m.1 5h0m.1 20h0m.1 1h0m.1-18.4h0m.1 12.4h0m.1-27.7h0m.1 39.9h0m.1-20.6h0m.1 32.9h0m0-73.1h0m.1 30.3h0m.1 6.1h0m.1 24.8h0m.1 0h0m.1-2.3h0m.1-2.4h0m.1-40.8h0m.1 79.3h0m.1-52.3h0m.1-13.3h0m.1 8.4h0m0 25.5h0m.1 10.6h0m.1-58.6h0m.1 49.9h0m.1-35.9h0m.1 36.3h0m.1-39h0m.1-18.3h0m.1 47.2h0m.1 9.9h0m.1-29.6h0m.1 13.6h0m0-12h0m.1 46.2h0m.1-58.7h0m.1 2h0m.1 14.8h0m.1 21.4h0m.1-36h0m.1 9.2h0m.1-2.4h0m.1 20.9h0m.1-9.5h0m.1-13.8h0m0 23.2h0m.1-17.4h0m.1-12.5h0m.1 7.8h0m.1 33.4h0m.1-63.8h0m.1 14.7h0m.1 59h0m.1-6.5h0m.1-36.5h0m.1 3.8h0m.1 6.1h0m0 3.6h0m.1 42.9h0m.1-39.4h0m.1-30.7h0m.1 33.5h0m.1-3.6h0m.1 1.6h0m.1 13.8h0m.1-32.1h0m.1-3.4h0m.1 21.4h0m.1 20.3h0m0-13.9h0m.1 3.7h0m.1-16.9h0m.1-1.5h0m.1 30.7h0m.1-5.8h0m.1-14.8h0m.1-15.7h0m.1 33.2h0m.1-1h0m.1 19.8h0m.1-.6h0m.1-12.3h0m0-17.1h0m.1-25.9h0m.1 25.9h0m.1 6.5h0m.1 17.6h0m.1-1.1h0m.1 2.9h0m.1 27.1h0m.1-65.4h0m.1 34.7h0m.1-38h0m.1 35.2h0m0-13.1h0m.1 6.3h0m.1 13.8h0m.1-25.9h0m.1 35.9h0m.1-37.9h0m.1-1.3h0m.1 7.8h0m.1-1.3h0m.1-49.2h0m.1 64.7h0m.1-45.3h0m0-10h0m.1-5.1h0m.1 17.6h0m.1 27.5h0m.1.6h0m.1 15.5h0m.1-1.5h0m.1-43.5h0m.1 52.1h0m.1-59.6h0m.1 27.1h0m.1 3.6h0m0-29.4h0m.1 6.3h0m.1 25.3h0m.1-42.5h0m.1 34.1h0m.1 9.6h0m.1-57.5h0m.1 42.5h0m.1-.2h0m.1 10.6h0m.1-19.3h0m.1.3h0m0 4.6h0m.1-17.3h0m.1-.7h0m.1-10.3h0m.1-.5h0m.1 17.7h0m.1-12.3h0m.1 36.6h0m.1-47.4h0m.1 36.3h0m.1-17.1h0m.1 29.8h0m0-15.2h0m.1-17.3h0m.1 14.9h0m.1-45.2h0m.1 28.4h0m.1 2h0m.1-36h0m.1 68.1h0m.1-36.8h0m.1 53.2h0m.1 5.6h0m.1-52.5h0m.1 38.7h0m0-2h0m.1-31.6h0m.1 8.9h0m.1 15.9h0m.1-4.5h0m.1-42h0m.1 42.7h0m.1 1h0m.1 18.6h0m.1-10.1h0m.1-26.6h0m.1 13.3h0m0-28.3h0m.1 45h0m.1-2.9h0m.1-57.2h0m.1 18.6h0m.1 44.8h0m.1 22.9h0m.1-23.5h0m.1-16.8h0m.1 26h0m.1-8.3h0m.1 4.8h0m0-54.6h0m.1 24.3h0m.1-36.5h0m.1 77.8h0m.1-10.1h0m.1-9.4h0m.1-32.5h0m.1 19.6h0m.1-10.1h0m.1 20.9h0m.1-10.7h0m.1-32.2h0m0 69.7h0m.1-25.4h0m.1-30.5h0m.1 20.2h0m.1-12.9h0m.1-16.7h0m.1 17.1h0m.1-8.9h0m.1 28h0m.1-9h0m.1 22.4h0m.1-19.4h0m0-13.8h0m.1 25.3h0m.1-24.6h0m.1-16.3h0m.1-12.5h0m.1 47.1h0m.1-13.8h0m.1-4.7h0m.1-15.4h0m.1 20.2h0m.1 21h0m.1 10.3h0m0-29.5h0m.1-9h0m.1 39h0m.1-44.8h0m.1 4h0m.1 32.8h0m.1-34.9h0m.1-5.3h0m.1 15.7h0m.1 20.8h0m.1-12.8h0m.1-10.8h0m0 35.1h0m.1-13.4h0m.1-18.3h0m.1-21.5h0m.1 54.5h0m.1-36.3h0m.1 9.9h0m.1-42.6h0m.1 27.1h0m.1-8.1h0m.1 29.1h0m.1-8.4h0m.1 22.2h0m0-27.9h0m.1-32.6h0m.1 32.7h0m.1 20.6h0m.1-27.7h0m.1 9.8h0m.1-6.9h0m.1-15.1h0m.1 38.1h0m.1-30.3h0m.1 37.4h0m.1-28.9h0m0-18.8h0m.1 18.2h0m.1 14.6h0m.1-18.2h0m.1-6.2h0m.1-16.7h0m.1 38h0m.1-19.1h0m.1 34.3h0m.1-29h0m.1 2.8h0m.1-7.3h0m0-18.8h0m.1 39.6h0m.1.3h0m.1-35.6h0m.1 25.6h0m.1 40.8h0m.1-28.7h0m.1 2.8h0m.1 11.3h0m.1-27.1h0m.1 8.4h0m.1 14.6h0m0-10.7h0m.1-1.3h0m.1-46.8h0m.1 66.7h0m.1-64.7h0m.1 58h0m.1-20.7h0m.1-3.2h0m.1 14.1h0m.1-10.1h0m.1-28h0m.1 17.8h0m0 18.8h0m.1.6h0m.1-45.3h0m.1 50.9h0m.1-31.3h0m.1 32.4h0m.1-25h0m.1-38.7h0m.1 58.2h0m.1 6.3h0m.1-37.3h0m.1 19.1h0m0-5.4h0m.1 8.4h0m.1 6.3h0m.1 19.5h0m.1-21.2h0m.1 24.8h0m.1-35.4h0m.1-27h0m.1-8.9h0m.1 47.3h0m.1 38.2h0m.1-36.3h0m.1 8.8h0m0-64.1h0m.1 99.3h0m.1-30.1h0m.1-46.2h0m.1 10.8h0m.1 23.6h0m.1-17.2h0m.1 34.4h0m.1-28.9h0m.1-1.5h0m.1-2.3h0m.1 6h0m0 2.2h0m.1 2.1h0m.1-10.5h0m.1 22.2h0m.1-45.5h0m.1 1.9h0m.1 10.5h0m.1 24h0m.1-36.2h0m.1 25.5h0m.1 6.2h0m.1 3.5h0m0-33.9h0m.1-26h0m.1 1.1h0m.1 40.6h0m.1 8h0m.1-44.2h0m.1 47.5h0m.1-37.2h0m.1 23.8h0m.1 11.1h0m.1-37.8h0m.1 10.2h0m0-14.7h0m.1 47.7h0m.1-47.5h0m.1 36.8h0m.1-38.6h0m.1 54.8h0m.1-35.2h0m.1 1.8h0m.1 11.5h0m.1-43h0m.1 17.1h0m.1 12.7h0m0-14h0m.1 38.7h0m.1-15.2h0m.1-.3h0m.1-34.6h0m.1 57.5h0m.1-33.1h0m.1-12.2h0m.1-4.6h0m.1 9.4h0m.1 1.2h0m.1 33.9h0m0-27.5h0m.1 16.9h0m.1 21.8h0m.1-12h0m.1-58.1h0m.1 87.9h0m.1-49h0m.1 28.5h0m.1-40.5h0m.1 22.1h0m.1-20.9h0m.1 37.4h0m.1-41.4h0m0 14.7h0m.1-6.1h0m.1-11.7h0m.1 8.7h0m.1 36.8h0m.1-17.5h0m.1 12.4h0m.1-2h0m.1-3.8h0m.1-17.4h0m.1 33.7h0m.1-19.3h0m0 22.8h0m.1 5h0m.1-8h0m.1-14.8h0m.1-14.1h0m.1 18.2h0m.1-37.7h0m.1 15.3h0m.1 27.1h0m.1-11.5h0m.1-5h0m.1-19.3h0m0 7.8h0m.1 18.1h0m.1-5.8h0m.1-16.4h0m.1-1.7h0m.1 40.5h0m.1-50.7h0m.1 36h0m.1 24.7h0m.1-39.5h0m.1 0h0m.1-22.4h0m0 40.9h0m.1-17.1h0m.1-7.6h0m.1-5.5h0m.1-19.2h0m.1 24.4h0m.1-3.8h0m.1-13.4h0m.1-6.8h0m.1-10.2h0m.1 42.6h0m.1-35.4h0m0 16.6h0m.1 24h0m.1 17.5h0m.1 7.5h0m.1-18.4h0m.1-31.6h0m.1 7.1h0m.1-2.2h0m.1 7.8h0m.1 32.6h0m.1-33.7h0m.1 37.7h0m0-5.4h0m.1-27.8h0m.1-15.1h0m.1-26.3h0m.1 41.8h0m.1-27.3h0m.1.8h0m.1-5.8h0m.1 33h0m.1-37.1h0m.1 34.3h0m.1 43.6h0m0-43.1h0m.1 4.6h0m.1 5.6h0m.1 23.9h0m.1-2.1h0m.1-45.3h0m.1 14.1h0m.1 9.6h0m.1-11h0m.1-1.8h0m.1 3h0m.1 12.7h0m.1-5.8h0m0-16.5h0m.1 9.9h0m.1 6.3h0m.1 1.6h0m.1-51.1h0m.1 58.9h0m.1-20.6h0m.1-29.4h0m.1 43.9h0m.1 1.2h0m.1 13.5h0m.1-54h0m0 4.2h0m.1 32.4h0m.1-9.2h0m.1 46.9h0m.1-10.4h0m.1-38.1h0m.1 16.2h0m.1 15.4h0m.1-23.6h0m.1-2.1h0m.1-2.8h0m.1-12.9h0m0 55.6h0m.1-43.3h0" stroke="#000" stroke-width="3.7" stroke-linecap="round" fill="none"/>
<path d="M165.5 446.2h0m3.1-1.7h0m-1.9 10.7h0m16.6-9h0m0 8.3h0m15.3-4.7h0m0 1.4h0m4.7-2.6h0m22.2 3.5h0m5.9 4.1h0m46-2.9h0m160.9-20h0m47.2 2.9h0m-37.2 20.2h0m-236.9 134.8h0m36.9 5h0m14.1-3.8h0m3.1 6.9h0m98.8-8.3h0m85.2 2.3h0m6 0h0m26.9 5.7h0m-286 40.3h0m316.7-187.9h0m4-2.8h0m1.5-1.9h0m-5.3 9.7h0m4.1 0h0m17.1-4.3h0m217.9-5.9h0m15.9-2.9h0m0 11h0m32.9-16h0m2.4 4.1h0m-1.7 13.3h0m-205.5 144.5h0m19.1-8.1h0m30 6.9h0m48.8-4.7h0m50.9-2.2h0m36 3.1h0m-213.8 51h0m292.1-190h0m7.9-6.9h0m1.2 4h0m73.8-3.1h0m33.1-.9h0m18.8-4.1h0m29 5.3h0m0 3.8h0m15.3 3.1h0m15.7-25.3h0m0 19.1h0m18.3 6.2h0m10.7-9.3h0m1.5-4.8h0m3.5-1.9h0m-.9 14.3h0m40-1.4h0m-261.2 145.9h0m44-7.1h0m2.2 2.4h0m-19.1 18.8h0m46.9-1h0m326.1-176.9h0m24-.9h0m0 3.6h0m-16 7.2h0m16 3.9h0m-56 .2h0m4.1 4.7h0m-11.9 1.1h0" stroke="#ffa500" stroke-width="3.7" stroke-linecap="round" fill="none"/>
<path d="M669.8 660.6h6l-3 5.2z" fill="#ffa500"/>
<path d="M820.7 660.6h6l-3 5.2z" fill="#ffa500"/>
<path d="M981.1 660.6h6l-3 5.2z" fill="#ffa500"/>
<path d="M1027.7 660.6h6l-3 5.2z" fill="#ffa500"/>
<path d="M1120.1 660.6h6l-3 5.2z" fill="#ffa500"/>
<path d="M162.2 523.35H1303.2" stroke="#ffa500" stroke-width="2.78"/>
<rect x="162.2" y="499.2" width="1141.0" height="48.8" fill="#ffa500" fill-opacity="0.1"/>
<path d="M105.5 523.0H1360.8" stroke="#f00" stroke-width="2.083"/>
<rect x="105.5" y="499.2" width="1255.3" height="48.8" fill="#f00" fill-opacity="0.1"/>
<path d="M162 666.5V380.5" stroke="#800080" stroke-width="2.083" stroke-dasharray="2.083 3.4375" fill="none"/>
<path d="M1303 666.5V380.5" stroke="#800080" stroke-width="2.083" stroke-dasharray="2.083 3.4375" fill="none"/>
</g>
<text x="732.7" y="657" text-anchor="middle">4533</text>
<rect x="105.5" y="380.5" width="1380.0" height="286.0" fill="none" stroke="#000" stroke-width="1.111"/>
<path d="M162.5 666.5v4.86" stroke="#000" stroke-width="1.111"/>
<text x="161.80" y="686.8" text-anchor="middle">0</text>
<path d="M341.5 666.5v4.86" stroke="#000" stroke-width="1.111"/>
<text x="340.87" y="686.8" text-anchor="middle">2000</text>
<path d="M520.5 666.5v4.86" stroke="#000" stroke-width="1.111"/>
<text x="519.94" y="686.8" text-anchor="middle">4000</text>
<path d="M699.5 666.5v4.86" stroke="#000" stroke-width="1.111"/>
<text x="699.02" y="686.8" text-anchor="middle">6000</text>
<path d="M878.5 666.5v4.86" stroke="#000" stroke-width="1.111"/>
<text x="878.09" y="686.8" text-anchor="middle">8000</text>
<path d="M1057.5 666.5v4.86" stroke="#000" stroke-width="1.111"/>
<text x="1057.16" y="686.8" text-anchor="middle">10000</text>
<path d="M1236.5 666.5v4.86" stroke="#000" stroke-width="1.111"/>
<text x="1236.23" y="686.8" text-anchor="middle">12000</text>
<path d="M1415.5 666.5v4.86" stroke="#000" stroke-width="1.111"/>
<text x="1415.30" y="686.8" text-anchor="middle">14000</text>
<path d="M105.5 660.5h-4.86" stroke="#000" stroke-width="1.111"/>
<text x="95.2" y="665.0" text-anchor="end">7.32</text>
<path d="M105.5 607.5h-4.86" stroke="#000" stroke-width="1.111"/>
<text x="95.2" y="612.0" text-anchor="end">7.33</text>
<path d="M105.5 553.5h-4.86" stroke="#000" stroke-width="1.111"/>
<text x="95.2" y="558.0" text-anchor="end">7.34</text>
<path d="M105.5 499.5h-4.86" stroke="#000" stroke-width="1.111"/>
<text x="95.2" y="504.0" text-anchor="end">7.35</text>
<path d="M105.5 446.5h-4.86" stroke="#000" stroke-width="1.111"/>
<text x="95.2" y="451.0" text-anchor="end">7.36</text>
<path d="M105.5 392.5h-4.86" stroke="#000" stroke-width="1.111"/>
<text x="95.2" y="397.0" text-anchor="end">7.37</text>
<text x="794.9" y="371.8" text-anchor="middle" font-size="16.667">Magnitude Estimates</text>
<rect x="1365.4" y="387.5" width="113.2" height="48.3" rx="2.8" fill="#fff" fill-opacity="0.8" stroke="#ccc" stroke-opacity="0.8" stroke-width="1.389"/>
<path d="M1370.2 399.6h27.8" stroke="#ffa500" stroke-width="2.78" stroke-linecap="square"/>
<text x="1409.8" y="404">mag<tspan font-size="10.05" font-style="italic" dy="2.3">OBSID</tspan></text>
<path d="M1370.2 422h27.8" stroke="#f00" stroke-width="2.083" stroke-linecap="square"/>
<text x="1408.9" y="427">mag</text>
<rect x="1348.3" y="613.5" width="130.3" height="46.0" rx="2.8" fill="#fff" fill-opacity="0.8" stroke="#ccc" stroke-opacity="0.8" stroke-width="1.389"/>
<circle cx="1367.4" cy="626.7" r="1.85" fill="#ffa500"/>
<text x="1393.0" y="630.2">Highlighted</text>
<circle cx="1367.4" cy="647.7" r="1.85" fill="#000"/>
<text x="1393.0" y="651.2">OK</text>
<g clip-path="url(#c2)">
<path d="M105.5 758.5H1485.5" stroke="#a0a0a0" stroke-width="1.111" stroke-dasharray="1.111 1.833"/>
<path d="M105.5 791.5H1485.5" stroke="#a0a0a0" stroke-width="1.111" stroke-dasharray="1.111 1.833"/>
<path d="M105.5 823.5H1485.5" stroke="#a0a0a0" stroke-width="1.111" stroke-dasharray="1.111 1.833"/>
<path d="M105.5 856.5H1485.5" stroke="#a0a0a0" stroke-width="1.111" stroke-dasharray="1.111 1.833"/>
<path d="M105.5 889.5H1485.5" stroke="#a0a0a0" stroke-width="1.111" stroke-dasharray="1.111 1.833"/>
<path d="M105.5 921.5H1485.5" stroke="#a0a0a0" stroke-width="1.111" stroke-dasharray="1.111 1.833"/>
<path d="M823.5 856.5h0" stroke="#000" stroke-width="2.9" stroke-linecap="round" fill="none"/>
<path d="M637.5 889.5h0m186 0h0" stroke="#000" stroke-width="2.9" stroke-linecap="round" fill="none"/>
<circle cx="1030.7" cy="856.5" r="1.15" fill="#fff" stroke="#000" stroke-width="0.9"/>
<circle cx="1030.7" cy="889.5" r="1.15" fill="#fff" stroke="#000" stroke-width="0.9"/>
<path d="M162 954.5V725.5" stroke="#800080" stroke-width="2.083" stroke-dasharray="2.083 3.4375" fill="none"/>
<path d="M1303 954.5V725.5" stroke="#800080" stroke-width="2.083" stroke-dasharray="2.083 3.4375" fill="none"/>
</g>
<g clip-path="url(#c3)">
<path d="M105.5 1009.5H1485.5" stroke="#a0a0a0" stroke-width="1.111" stroke-dasharray="1.111 1.833"/>
<path d="M105.5 983.5H1485.5" stroke="#a0a0a0" stroke-width="1.111" stroke-dasharray="1.111 1.833"/>
<path d="M105.5 957.5H1485.5" stroke="#a0a0a0" stroke-width="1.111" stroke-dasharray="1.111 1.833"/>
<path d="M162.3 1007.4h0m.4.6h0m.3-.4h0m.4.7h0m.4.4h0m.3-.1h0m.4-1.1h0m.4-.1h0m.3.5h0m.4-.5h0m.4.3h0m.3.3h0m.4-.5h0m.4.3h0m.3.5h0m.4-.7h0m.4.2h0m.3-.3h0m.4.2h0m.4-.1h0m.3 1.6h0m.4-.8h0m.4 0h0m.3-.6h0m.4-.3h0m.4.1h0m.3-.2h0m.4.1h0m.4-.1h0m.3.2h0m.4-.1h0m.4.1h0m.3-.1h0m.4 1.5h0m.4-1.1h0m.3-.5h0m.4.6h0m.4-.5h0m.3.5h0m.4-.6h0m.4.9h0m.3-.3h0m.4-.5h0m.4.3h0m.3-.1h0m.4-.1h0m.4.1h0m.3.3h0m.4-.6h0m.4.4h0m.3.5h0m.4-.4h0m.4-.1h0m.3-.4h0m.4.1h0m.4.2h0m.3-.3h0m.4.2h0m.4.2h0m.3.8h0m.4-.7h0m.4-.3h0m.3 0h0m.4 0h0m.4.2h0m.4-.2h0m.3.9h0m.4-.3h0m.4-.6h0m.3.3h0m.4-.3h0m.4.2h0m.3 0h0m.4-.4h0m.4.2h0m.3 1.4h0m.4-1.6h0m.4 1.2h0m.3-1.1h0m.4 0h0m.4-.1h0m.3.3h0m.4-.2h0m.4.5h0m.3.4h0m.4-.3h0m.4-.1h0m.3 0h0m.4-.4h0m.4.1h0m.3.9h0m.4-1.1h0m.4.5h0m.3-.3h0m.4.1h0m.4 1.7h0m.3-1.2h0m.4-.5h0m.4-.4h0m.3.1h0m.4.9h0m.4-.7h0m.3.4h0m.4.2h0m.4.3h0m.3-.9h0m.4.2h0m.4-.2h0m.3-.3h0m.4.4h0m.4.7h0m.3-.8h0m.4.6h0m.4-.9h0m.3 1.2h0m.4-1.2h0m.4.1h0m.3.3h0m.4-.3h0m.4-.1h0m.3.5h0m.4.2h0m.4-.5h0m.3.2h0m.4 0h0m.4-.1h0m.3.3h0m.4-.3h0m.4.3h0m.3 0h0m.4-.6h0m.4 1h0m.3-.3h0m.4 0h0m.4.1h0m.3-.4h0m.4-.1h0m.4-.3h0m.3.7h0m.4.8h0m.4-.7h0m.4-.4h0m.3.7h0m.4-.9h0m.4-.1h0m.3 1.2h0m.4-1.2h0m.4 0h0m.3.6h0m.4.3h0m.4-.2h0m.3-.2h0m.4-.4h0m.4.6h0m.3-.6h0m.4.9h0m.4-1h0m.3 1.3h0m.4-1.1h0m.4-.3h0m.3.8h0m.4-.3h0m.4 0h0m.3.7h0m.4-1.1h0m.4.9h0m.3-.6h0m.4-.4h0m.4 0h0m.3 0h0m.4.2h0m.4.6h0m.3-.4h0m.4-.2h0m.4-.2h0m.3 0h0m.4.2h0m.4 0h0m.3.3h0m.4 1.1h0m.4-1.2h0m.3 0h0m.4 0h0m.4.1h0m.3-.3h0m.4-.1h0m.4 0h0m.3.2h0m.4-.3h0m.4.6h0m.3-.5h0m.4.4h0m.4-.3h0m.3-.2h0m.4.5h0m.4.6h0m.3-.2h0m.4-.5h0m.4-.1h0m.3-.2h0m.4.9h0m.4-.7h0m.3 0h0m.4-.2h0m.4.2h0m.3-.1h0m.4-.2h0m.4.5h0m.3-.5h0m.4.6h0m.4 0h0m.3-.5h0m.4 0h0m.4.3h0m.3-.2h0m.4-.2h0m.4.3h0m.3.3h0m.4-.2h0m.4-.3h0m.4.1h0m.3-.1h0m.4.2h0m.4.9h0m.3-.8h0m.4-.3h0m.4.6h0m.3.2h0m.4-.2h0m.4-.4h0m.3-.1h0m.4 0h0m.4-.2h0m.3.5h0m.4 0h0m.4 1.1h0m.3-1.5h0m.4.5h0m.4-.3h0m.3.2h0m.4.5h0m.4.5h0m.3-1.2h0m.4.1h0m.4.6h0m.3-.1h0m.4-.8h0m.4.7h0m.3-.3h0m.4.5h0m.4-1h0m.3.5h0m.4-.4h0m.4.6h0m.3-.3h0m.4-.4h0m.4.1h0m.3-.1h0m.4.9h0m.4-.7h0m.3.7h0m.4-.5h0m.4 0h0m.3.2h0m.4-.5h0m.4.2h0m.3.8h0m.4-.4h0m.4-.5h0m.3.7h0m.4-.7h0m.4.6h0m.3 0h0m.4-.6h0m.4.7h0m.3-.3h0m.4-.2h0m.4-.3h0m.3.3h0m.4.1h0m.4-.2h0m.3-.3h0m.4 1.4h0m.4.1h0m.3-1.5h0m.4.1h0m.4.4h0m.3-.1h0m.4-.2h0m.4-.2h0m.3.4h0m.4.8h0m.4-.5h0m.3-.3h0m.4 0h0m.4-.4h0m.4.8h0m.3-.7h0m.4.1h0m.4.3h0m.3-.5h0m.4.7h0m.4-.7h0m.3.5h0m.4.3h0m.4.6h0m.3-.6h0m.4-.6h0m.4.5h0m.3-.3h0m.4.6h0m.4-.6h0m.3-.2h0m.4.4h0m.4-.4h0m.3.7h0m.4-.9h0m.4 1.3h0m.3-1.2h0m.4 1.1h0m.4-.8h0m.3-.3h0m.4.8h0m.4-.4h0m.3 0h0m.4-.5h0m.4.1h0m.3.3h0m.4-.1h0m.4.3h0m.3.1h0m.4-.6h0m.4.3h0m.3-.3h0m.4.4h0m.4-.5h0m.3.7h0m.4-.3h0m.4.3h0m.3-.4h0m.4 1.3h0m.4-1.3h0m.3 1.1h0m.4-.7h0m.4-.7h0m.3.2h0m.4.8h0m.4-.4h0m.3.3h0m.4.1h0m.4-.2h0m.3.4h0m.4-.9h0m.4.4h0m.3-.1h0m.4-.6h0m.4.4h0m.3.2h0m.4-.2h0m.4.2h0m.3.4h0m.4-.4h0m.4-.5h0m.3.7h0m.4-.5h0m.4.7h0m.3-.7h0m.4 1h0m.4-1h0m.3-.2h0m.4.6h0m.4-.4h0m.3-.3h0m.4.1h0m.4.2h0m.4 0h0m.3.2h0m.4.9h0m.4-1.3h0m.3.3h0m.4-.1h0m.4-.2h0m.3-.1h0m.4 1h0m.4-.9h0m.3.9h0m.4-.6h0m.4-.3h0m.3.3h0m.4-.2h0m.4.4h0m.3-.3h0m.4-.2h0m.4 1h0m.3-.5h0m.4.4h0m.4-1h0m.3.1h0m.4 1.5h0m.4-1.3h0m.3.2h0m.4-.4h0m.4.6h0m.3-.3h0m.4.7h0m.4-.6h0m.3-.2h0m.4-.1h0m.4.2h0m.3.3h0m.4-.6h0m.4.8h0m.3-.8h0m.4 0h0m.4 1.5h0m.3-1.6h0m.4.7h0m.4-.6h0m.3.3h0m.4.3h0m.4-.6h0m.3.1h0m.4.7h0m.4-.2h0m.3-.6h0m.4.3h0m.4-.1h0m.3-.2h0m.4 0h0m.4 0h0m.3 1.1h0m.4-1.2h0m.4.2h0m.3.4h0m.4.1h0m.4-.2h0m.3 0h0m.4 0h0m.4-.1h0m.3.5h0m.4-.5h0m.4.2h0m.3-.2h0m.4.4h0m.4-.7h0m.3.5h0m.4-.2h0m.4 0h0m.3-.2h0m.4.7h0m.4-.9h0m.4.7h0m.3-.4h0m.4 0h0m.4.9h0m.3-.9h0m.4.3h0m.4-.4h0m.3-.1h0m.4.2h0m.4 1h0m.3-.7h0m.4.4h0m.4-.9h0m.3.2h0m.4.5h0m.4-.4h0m.3.2h0m.4-.5h0m.4.1h0m.3.5h0m.4.7h0m.4-1.1h0m.3.3h0m.4-.2h0m.4-.1h0m.3 1h0m.4-1.3h0m.4.9h0m.3-.8h0m.4.2h0m.4.3h0m.3 0h0m.4-.6h0m.4 0h0m.3.1h0m.4.3h0m.4-.3h0m.3.6h0m.4.8h0m.4-1.2h0m.3-.1h0m.4.8h0m.4-1h0m.3.9h0m.4-.9h0m.4 0h0m.3 1.1h0m.4.1h0m.4-.6h0m.3-.6h0m.4.8h0m.4.2h0m.3-.4h0m.4 0h0m.4.5h0m.3-1h0m.4.3h0m.4 0h0m.3-.3h0m.4.3h0m.4.7h0m.3-1.1h0m.4.4h0m.4-.3h0m.3.7h0m.4-.8h0m.4.4h0m.3.3h0m.4-.2h0m.4.7h0m.3-.9h0m.4.2h0m.4 0h0m.3-.4h0m.4 0h0m.4.5h0m.3.2h0m.4-.3h0m.4 0h0m.4.4h0m.3-.5h0m.4.1h0m.4-.1h0m.3.1h0m.4.4h0m.4-.6h0m.3.4h0m.4.2h0m.4-.8h0m.3.1h0m.4.2h0m.4-.4h0m.3.9h0m.4.5h0m.4-.9h0m.3-.3h0m.4.6h0m.4-.4h0m.3-.4h0m.4.1h0m.4.9h0m.3-.2h0m.4-.6h0m.4-.2h0m.3.6h0m.4-.6h0m.4.6h0m.3-.2h0m.4-.2h0m.4.1h0m.3.4h0m.4-.6h0m.4.3h0m.3-.2h0m.4 0h0m.4.4h0m.3 1.3h0m.4-1.6h0m.4-.1h0m.3.1h0m.4 1.7h0m.4-.3h0m.3-1.5h0m.4.3h0m.4.1h0m.3-.5h0m.4.2h0m.4.1h0m.3.2h0m.4-.5h0m.4.2h0m.3-.2h0m.4.1h0m.4 0h0m.3 0h0m.4-.1h0m.4.2h0m.3 1.2h0m.4-1.2h0m.4-.1h0m.3 1.3h0m.4-1.3h0m.4.1h0m.3 0h0m.4 0h0m.4.8h0m.3-.4h0m.4-.6h0m.4.1h0m.3.7h0m.4-.7h0m.4.4h0m.3 0h0m.4 0h0m.4-.2h0m.4.5h0m.3 0h0m.4-.2h0m.4-.6h0m.3.9h0m.4-.6h0m.4.1h0m.3-.5h0m.4.4h0m.4-.2h0m.3.6h0m.4-.7h0m.4-.1h0m.3.8h0m.4-.6h0m.4 0h0m.3.8h0m.4-.7h0m.4.8h0m.3-.5h0m.4-.5h0m.4-.1h0m.3 1.1h0m.4-.8h0m.4.2h0m.3 0h0m.4.3h0m.4-.7h0m.3 1.1h0m.4-.5h0m.4-.5h0m.3 0h0m.4.5h0m.4-.4h0m.3.3h0m.4-.6h0m.4 1h0m.3-.8h0m.4.8h0m.4-.5h0m.3.3h0m.4.3h0m.4.2h0m.3-.5h0m.4.2h0m.4-.6h0m.3-.1h0m.4 0h0m.4-.3h0m.3 1.3h0m.4-1.2h0m.4 0h0m.3 0h0m.4.4h0m.4.2h0m.3-.7h0m.4.8h0m.4.1h0m.3-.8h0m.4.4h0m.4.2h0m.3-.2h0m.4.2h0m.4-.6h0m.3.4h0m.4-.4h0m.4.4h0m.3.9h0m.4-.8h0m.4.1h0m.3-.3h0m.4.3h0m.4-.6h0m.3.6h0m.4.2h0m.4 0h0m.4-.4h0m.3.3h0m.4-.4h0m.4-.4h0m.3.4h0m.4.1h0m.4 0h0m.3-.2h0m.4.1h0m.4 0h0m.3.4h0m.4-.7h0m.4 0h0m.3.8h0m.4.1h0m.4-.2h0m.3-.1h0m.4 0h0m.4-.2h0m.3-.1h0m.4-.4h0m.4.8h0m.3-.5h0m.4-.2h0m.4.4h0m.3-.2h0m.4.5h0m.4-.8h0m.3 1.1h0m.4.3h0m.4-1.3h0m.3.3h0m.4.4h0m.4-.2h0m.3-.4h0m.4-.2h0m.4.8h0m.3-.8h0m.4.4h0m.4-.2h0m.3.2h0m.4-.1h0m.4.6h0m.3-.4h0m.4.2h0m.4-.5h0m.3.4h0m.4-.4h0m.4.5h0m.3-.5h0m.4.3h0m.4-.5h0m.3.1h0m.4.2h0m.4.6h0m.3-.3h0m.4.2h0m.4-.3h0m.3.2h0m.4 0h0m.4.2h0m.3-.4h0m.4.1h0m.4.1h0m.3.2h0m.4.1h0m.4.2h0m.3.9h0m.4-1.9h0m.4.1h0m.3.5h0m.4-.6h0m.4 0h0m.3.2h0m.4.6h0m.4-.7h0m.3.6h0m.4-.5h0m.4-.4h0m.4.5h0m.3-.3h0m.4 0h0m.4.3h0m.3-.4h0m.4.4h0m.4-.4h0m.3.1h0m.4.1h0m.4.9h0m.3-.6h0m.4.3h0m.4-.8h0m.3.4h0m.4 1h0m.4-.3h0m.3-1.1h0m.4 1.1h0m.4-1h0m.3-.1h0m.4-.1h0m.4.6h0m.3.5h0m.4-1h0m.4-.1h0m.3.2h0m.4 0h0m.4.5h0m.3 0h0m.4-.3h0m.4 0h0m.3-.3h0m.4.2h0m.4-.1h0m.3-.1h0m.4 0h0m.4-.1h0m.3.2h0m.4.4h0m.4 0h0m.3-.2h0m.4-.1h0m.4.6h0m.3-.3h0m.4-.4h0m.4.1h0m.3.2h0m.4.5h0m.4.5h0m.3-1.2h0m.4.1h0m.4.7h0m.3-.4h0m.4-.5h0m.4-.2h0m.3 0h0m.4.4h0m.4-.1h0m.3-.2h0m.4.8h0m.4-.5h0m.3.3h0m.4-.4h0m.4.3h0m.3-.4h0m.4 0h0m.4.6h0m.3-.7h0m.4.2h0m.4-.3h0m.3.3h0m.4.2h0m.4.1h0m.3 0h0m.4.4h0m.4-.2h0m.4-.4h0m.3.2h0m.4-.2h0m.4.1h0m.3-.1h0m.4-.3h0m.4.1h0m.3.3h0m.4-.4h0m.4.6h0m.3.1h0m.4-.6h0m.4.1h0m.3-.1h0m.4-.1h0m.4.5h0m.3.3h0m.4-.3h0m.4-.3h0m.3.6h0m.4.5h0m.4-.7h0m.3-.6h0m.4.7h0m.4-.3h0m.3-.5h0m.4.1h0m.4 0h0m.3.6h0m.4.3h0m.4 0h0m.3-.4h0m.4-.5h0m.4-.1h0m.3 1.5h0m.4-.6h0m.4-.9h0m.3 1.5h0m.4-.5h0m.4-.6h0m.3-.3h0m.4.5h0m.4 0h0m.3 0h0m.4.8h0m.4-1h0m.3.9h0m.4-.5h0m.4-.8h0m.3.4h0m.4.1h0m.4-.5h0m.3.6h0m.4.6h0m.4-.7h0m.3.4h0m.4.7h0m.4-1.5h0m.3.5h0m.4 0h0m.4.1h0m.3-.3h0m.4 0h0m.4.7h0m.3-.7h0m.4-.4h0m.4.8h0m.3-.5h0m.4-.2h0m.4.2h0m.3.1h0m.4-.3h0m.4.9h0m.3-.7h0m.4-.2h0m.4.1h0m.3-.1h0m.4.7h0m.4-.5h0m.4-.3h0m.3.4h0m.4-.3h0m.4-.1h0m.3.1h0m.4.7h0m.4-.6h0m.3 1h0m.4-.7h0m.4.1h0m.3-.3h0m.4.2h0m.4.3h0m.3-.3h0m.4.1h0m.4-.1h0m.3-.4h0m.4 1h0m.4-.9h0m.3.3h0m.4.3h0m.4-.4h0m.3 1h0m.4-1.2h0m.4.4h0m.3.2h0m.4-.2h0m.4.5h0m.3.5h0m.4-1h0m.4 0h0m.3.4h0m.4-.9h0m.4-.1h0m.3.4h0m.4-.2h0m.4.2h0m.3-.3h0m.4.8h0m.4-.7h0m.3 0h0m.4-.2h0m.4 1.4h0m.3-1.1h0m.4.1h0m.4.4h0m.3-.4h0m.4.6h0m.4-.8h0m.3.1h0m.4-.3h0m.4.2h0m.3-.2h0m.4.1h0m.4-.1h0m.3.6h0m.4-.6h0m.4.2h0m.3.9h0m.4-.9h0m.4.8h0m.3-.1h0m.4-.3h0m.4.3h0m.3-.2h0m.4.2h0m.4-.4h0m.3.5h0m.4-.8h0m.4 1h0m.3-.2h0m.4-.8h0m.4 0h0m.3-.2h0m.4.5h0m.4-.4h0m.4.6h0m.3-.7h0m.4.7h0m.4-.4h0m.3.2h0m.4.7h0m.4-1.2h0m.3.1h0m.4 0h0m.4.9h0m.3.6h0m.4-1.4h0m.4.6h0m.3.3h0m.4-1h0m.4.2h0m.3-.1h0m.4.7h0m.4-.7h0m.3 0h0m.4-.2h0m.4 1.1h0m.3-.3h0m.4-.1h0m.4-.7h0m.3 1h0m.4-.6h0m.4.7h0m.3-.3h0m.4-.6h0m.4.1h0m.3.4h0m.4-.5h0m.4-.2h0m.3.8h0m.4-.5h0m.4 0h0m.3.3h0m.4-.3h0m.4-.3h0m.3.3h0m.4-.2h0m.4.4h0m.3-.3h0m.4.9h0m.4.6h0m.3-1.5h0m.4.6h0m.4-.8h0m.3.1h0m.4.8h0m.4-.7h0m.3-.1h0m.4.3h0m.4 1h0m.3-1.2h0m.4.6h0m.4-.4h0m.3.8h0m.4-.9h0m.4.7h0m.3 0h0m.4 0h0m.4-.7h0m.3.7h0m.4-.5h0m.4-.1h0m.3.1h0m.4 0h0m.4-.4h0m.3.2h0m.4-.3h0m.4 1.1h0m.3-.6h0m.4.3h0m.4-.5h0m.3.2h0m.4-.4h0m.4.5h0m.4.3h0m.3 0h0m.4-.6h0m.4-.1h0m.3.5h0m.4-.1h0m.4-.2h0m.3 0h0m.4.2h0m.4-.6h0m.3.2h0m.4.8h0m.4.1h0m.3-.6h0m.4.5h0m.4-.3h0m.3-.4h0m.4-.1h0m.4-.1h0m.3.4h0m.4 0h0m.4-.2h0m.3.4h0m.4-.4h0m.4 0h0m.3.3h0m.4.5h0m.4-.9h0m.3.2h0m.4.1h0m.4.2h0m.3-.3h0m.4.2h0m.4-.4h0m.3.5h0m.4-.6h0m.4.4h0m.3-.3h0m.4.5h0m.4-.4h0m.3-.1h0m.4-.1h0m.4 1h0m.3-.4h0m.4-.2h0m.4 1.4h0m.3-1.9h0m.4.3h0m.4.5h0m.3-.4h0m.4-.3h0m.4.3h0m.3-.1h0m.4.1h0m.4-.1h0m.3.1h0m.4-.4h0m.4.2h0m.3.4h0m.4-.2h0m.4.9h0m.3-.5h0m.4-.1h0m.4.1h0m.3-.8h0m.4.1h0m.4.5h0m.3-.3h0m.4.2h0m.4 0h0m.3-.4h0m.4.8h0m.4-.2h0m.3-.6h0m.4-.1h0m.4.1h0m.4.1h0m.3.2h0m.4-.4h0m.4.1h0m.3.4h0m.4-.2h0m.4-.1h0m.3.4h0m.4-.3h0m.4.3h0m.3.2h0m.4-.5h0m.4.3h0m.3-.2h0m.4.4h0m.4.4h0m.3-.3h0m.4-.3h0m.4-.2h0m.3.5h0m.4-.8h0m.4 1.1h0m.3-.3h0m.4 0h0m.4.6h0m.3-1.3h0m.4.2h0m.4.3h0m.3-.3h0m.4-.4h0m.4.9h0m.3-.3h0m.4 0h0m.4-.3h0m.3 0h0m.4-.3h0m.4.2h0m.3-.1h0m.4.3h0m.4-.4h0m.3.7h0m.4-.4h0m.4.6h0m.3 1h0m.4-1.3h0m.4-.5h0m.3-.1h0m.4.2h0m.4.7h0m.3-.4h0m.4.5h0m.4.3h0m.3-.2h0m.4.4h0m.4-1.3h0m.3.4h0m.4.4h0m.4-.4h0m.3-.5h0m.4-.1h0m.4.5h0m.3-.2h0m.4.9h0m.4-.7h0m.3-.2h0m.4.7h0m.4-.8h0m.3-.2h0m.4 1.5h0m.4-1.1h0m.3-.3h0m.4.6h0m.4-.4h0m.3.8h0m.4-.5h0m.4.2h0m.3-.7h0m.4.4h0m.4-.2h0m.4.6h0m.3-.5h0m.4 0h0m.4 0h0m.3.3h0m.4-.6h0m.4 0h0m.3.4h0m.4-.2h0m.4-.2h0m.3.3h0m.4-.4h0m.4.1h0m.3.9h0m.4-.2h0m.4-.8h0m.3 1.2h0m.4-.4h0m.4-.5h0m.3-.2h0m.4.1h0m.4.7h0m.3.3h0m.4-.3h0m.4-.7h0m.3 0h0m.4-.1h0m.4.8h0m.3-.8h0m.4.4h0m.4-.5h0m.3 0h0m.4 1.5h0m.4-.8h0m.3.4h0m.4-.8h0m.4-.1h0m.3.1h0m.4.2h0m.4 1.2h0m.3-.1h0m.4-1.1h0m.4 0h0m.3-.5h0m.4.6h0m.4-.1h0m.3 0h0m.4-.4h0m.4 1.3h0m.3-.7h0m.4-.5h0m.4-.2h0m.3.2h0m.4.2h0m.4-.2h0m.3-.1h0m.4.1h0m.4.7h0m.3-.5h0m.4-.1h0m.4.6h0m.3-.1h0m.4.6h0m.4-.9h0m.3 0h0m.4-.1h0m.4 1.3h0m.3-1.7h0m.4.1h0m.4.4h0m.3 1h0m.4-1.2h0m.4-.2h0m.3.4h0m.4.1h0m.4.4h0m.4-.9h0m.3 0h0m.4.4h0m.4-.2h0m.3 0h0m.4.8h0m.4-1h0m.3.1h0m.4-.1h0m.4 0h0m.3.7h0m.4-.6h0m.4.2h0m.3.2h0m.4.1h0m.4.7h0m.3-.5h0m.4-.9h0m.4.7h0m.3-.5h0m.4.7h0m.4-.4h0m.3.3h0m.4.4h0m.4-.6h0m.3-.1h0m.4-.3h0m.4.2h0m.3.2h0m.4 0h0m.4-.6h0m.3.8h0m.4.4h0m.4-.5h0m.3.2h0m.4-.1h0m.4.2h0m.3-.8h0m.4.6h0m.4-.8h0m.3.5h0m.4-.4h0m.4.3h0m.3 0h0m.4-.2h0m.4.3h0m.3-.4h0m.4.4h0m.4-.1h0m.3-.2h0m.4.6h0m.4-.6h0m.3.8h0m.4-.9h0m.4.8h0m.3-.7h0m.4 1h0m.4-1.1h0m.3.7h0m.4-.6h0m.4.3h0m.3.2h0m.4-.5h0m.4-.1h0m.3-.1h0m.4.3h0m.4 1.1h0m.3-1.4h0m.4.9h0m.4 0h0m.3-.6h0m.4 1.5h0m.4-1h0m.3-.5h0m.4.6h0m.4-.4h0m.4-.5h0m.3.3h0m.4.5h0m.4-.1h0m.3-.1h0m.4.2h0m.4.4h0m.3-.7h0m.4-.2h0m.4-.3h0m.3.2h0m.4 0h0m.4 0h0m.3.3h0m.4.3h0m.4.2h0m.3-.4h0m.4-.6h0m.4.9h0m.3-.6h0m.4-.2h0m.4.3h0m.3.3h0m.4-.4h0m.4-.1h0m.3 0h0m.4-.2h0m.4.4h0m.3-.3h0m.4.3h0m.4-.4h0m.3.7h0m.4.2h0m.4-.6h0m.3.6h0m.4-.5h0m.4.5h0m.3-.9h0m.4 0h0m.4 0h0m.3.2h0m.4-.1h0m.4.9h0m.3-.4h0m.4.2h0m.4.2h0m.3.5h0m.4-1.1h0m.4.2h0m.3-.6h0m.4.1h0m.4.1h0m.3 0h0m.4.1h0m.4.2h0m.3-.1h0m.4-.2h0m.4 1.1h0m.3-.6h0m.4-.3h0m.4-.2h0m.3 1h0m.4-1.1h0m.4-.1h0m.3.4h0m.4.2h0m.4-.6h0m.3.2h0m.4 0h0m.4-.2h0m.3.5h0m.4.1h0m.4 0h0m.3-.6h0m.4 1.6h0m.4-1.6h0m.3 1.1h0m.4.1h0m.4.5h0m.4-1.6h0m.3.4h0m.4-.4h0m.4 0h0m.3 0h0m.4 0h0m.4 0h0m.3-.1h0m.4.4h0m.4-.3h0m.3 1.6h0m.4-1.5h0m.4 0h0m.3-.1h0m.4.2h0m.4-.2h0m.3-.1h0m.4.4h0m.4-.3h0m.3.2h0m.4.8h0m.4 1h0m.3-1.5h0m.4 0h0m.4.3h0m.3-.4h0m.4-.2h0m.4 0h0m.3-.3h0m.4.3h0m.4.4h0m.3-.7h0m.4.2h0m.4 1h0m.3-.9h0m.4 1.6h0m.4.2h0m.3-1.4h0m.4-.7h0m.4.4h0m.3-.4h0m.4.7h0m.4-.2h0m.3.7h0m.4-.5h0m.4 0h0m.3-.2h0m.4.2h0m.4.5h0m.3-1.1h0m.4.7h0m.4-.1h0m.3-.3h0m.4-.2h0m.4 1h0m.3-.2h0m.4-.7h0m.4.4h0m.3-.2h0m.4.2h0m.4-.6h0m.3.5h0m.4-.1h0m.4-.1h0m.3-.1h0m.4.6h0m.4-.3h0m.3-.3h0m.4.1h0m.4.6h0m.3-.5h0m.4.1h0m.4.2h0m.3-.1h0m.4.2h0m.4-.7h0m.4.3h0m.3.2h0m.4-.1h0m.4.3h0m.3.1h0m.4-.8h0m.4 0h0m.3.2h0m.4 0h0m.4-.2h0m.3.1h0m.4-.1h0m.4-.1h0m.3 0h0m.4 1h0m.4-.5h0m.3-.5h0m.4.7h0m.4-.2h0m.3-.4h0m.4.5h0m.4.3h0m.3-.9h0m.4.3h0m.4.2h0m.3.2h0m.4-.3h0m.4 0h0m.3.1h0m.4.5h0m.4-.3h0m.3-.4h0m.4.4h0m.4-.3h0m.3 0h0m.4.2h0m.4.6h0m.3-.9h0m.4.9h0m.4-1h0m.3.6h0m.4-.9h0m.4 1.4h0m.3-.9h0m.4-.3h0m.4.8h0m.3-.7h0m.4.7h0m.4-.4h0m.3-.4h0m.4.1h0m.4-.2h0m.3.6h0m.4.3h0m.4-1h0m.3.1h0m.4.4h0m.4-.4h0m.3.6h0m.4 0h0m.4-.7h0m.3.4h0m.4.2h0m.4-.3h0m.3-.3h0m.4.8h0m.4-.7h0m.3.4h0m.4.1h0m.4-.4h0m.3.4h0m.4-.6h0m.4 0h0m.3.7h0m.4-.7h0m.4 1.3h0m.3-.2h0m.4-.9h0m.4 0h0m.4.1h0m.3.4h0m.4-.6h0m.4.5h0m.3.4h0m.4.2h0m.4-.8h0m.3-.3h0m.4.2h0m.4.2h0m.3.3h0m.4-.8h0m.4.6h0m.3-.6h0m.4.4h0m.4 0h0m.3.1h0m.4-.2h0m.4.6h0m.3-.8h0m.4.4h0m.4-.5h0m.3 0h0m.4.3h0m.4-.3h0m.3 1h0m.4-.8h0m.4.2h0m.3.3h0m.4-.3h0m.4-.1h0m.3-.3h0m.4.3h0m.4.2h0m.3-.5h0m.4.6h0m.4-.3h0m.3 0h0m.4 0h0m.4-.3h0m.3.1h0m.4.2h0m.4.7h0m.3-.8h0m.4.4h0m.4-.3h0m.3.9h0m.4-.8h0m.4 0h0m.3-.4h0m.4.2h0m.4.8h0m.3-1h0m.4.3h0m.4 1h0m.3-.9h0m.4-.1h0m.4-.1h0m.3 0h0m.4.3h0m.4.1h0m.3-.3h0m.4-.3h0m.4.5h0m.3 1.2h0m.4-1.7h0m.4.8h0m.3-.7h0m.4 0h0m.4-.1h0m.3.3h0m.4.1h0m.4-.3h0m.3 0h0m.4.5h0m.4-.3h0m.4-.1h0m.3-.2h0m.4.2h0m.4 1.5h0m.3-1.2h0m.4.3h0m.4-.2h0m.3.3h0m.4-.8h0m.4.5h0m.3.3h0m.4-.6h0m.4.4h0m.3 0h0m.4-.7h0m.4.2h0m.3.3h0m.4.2h0m.4-.1h0m.3-.3h0m.4.5h0m.4 0h0m.3-.4h0m.4.3h0m.4-.3h0m.3-.4h0m.4.4h0m.4.4h0m.3-.5h0m.4.5h0m.4-.1h0m.3-.3h0m.4-.1h0m.4.8h0m.3.3h0m.4-.4h0m.4-.4h0m.3.3h0m.4-.4h0m.4-.2h0m.3 0h0m.4 0h0m.4-.3h0m.3.5h0m.4-.4h0m.4.4h0m.3-.2h0m.4.1h0m.4.2h0m.3.1h0m.4-.1h0m.4-.4h0m.3.3h0m.4.4h0m.4-.4h0m.3-.5h0m.4.1h0m.4.3h0m.3-.3h0m.4.1h0m.4.5h0m.3-.6h0m.4.5h0m.4.4h0m.3-.6h0m.4-.1h0m.4.5h0m.3-.4h0m.4-.2h0m.4 1.2h0m.3-1.3h0m.4.2h0m.4.4h0m.3.5h0m.4-1h0m.4.6h0m.3-.5h0m.4-.2h0m.4.5h0m.4-.2h0m.3-.3h0m.4 1.1h0m.4-.8h0m.3.1h0m.4.3h0m.4-.1h0m.3-.2h0m.4.2h0m.4-.3h0m.3-.1h0m.4.2h0m.4 0h0m.3.3h0m.4-.3h0m.4 0h0m.3.6h0m.4-1h0m.4.1h0m.3.2h0m.4-.1h0m.4.3h0m.3.1h0m.4-.3h0m.4.1h0m.3.2h0m.4-.1h0m.4-.4h0m.3-.1h0m.4-.1h0m.4 0h0m.3 0h0m.4 0h0m.4 1.2h0m.3-.6h0m.4.5h0m.4-1h0m.3.7h0m.4.1h0m.4-.7h0m.3.3h0m.4-.2h0m.4-.3h0m.3 0h0m.4.3h0m.4.3h0m.3.7h0m.4-1.3h0m.4.5h0m.3 0h0m.4-.1h0m.4.8h0m.3-1.1h0m.4.7h0m.4.4h0m.3-.1h0m.4-.8h0m.4.5h0m.3-.8h0m.4.8h0m.4-.1h0m.3-.2h0m.4.6h0m.4-.1h0m.3-.4h0m.4.2h0m.4-.1h0m.3-.4h0m.4.1h0m.4.1h0m.3 0h0m.4-.1h0m.4 1.2h0m.3-.4h0m.4-.5h0m.4-.7h0m.4.1h0m.3.5h0m.4.1h0m.4-.6h0m.3.6h0m.4-.2h0m.4.2h0m.3.4h0m.4-.6h0m.4.8h0m.3-.8h0m.4-.5h0m.4 1.4h0m.3-1.3h0m.4-.1h0m.4.4h0m.3-.4h0m.4.3h0m.4.2h0m.3-.4h0m.4 0h0m.4.3h0m.3.5h0m.4.1h0m.4-.5h0m.3.3h0m.4-.6h0m.4 1.2h0m.3.4h0m.4-1.5h0m.4.3h0m.3.3h0m.4-.1h0m.4.6h0m.3-1.4h0m.4.9h0m.4-.6h0m.3-.1h0m.4.4h0m.4-.1h0m.3.8h0m.4-.3h0m.4-1h0m.3.2h0m.4 0h0m.4.3h0m.3-.2h0m.4 1.5h0m.4-1.8h0m.3.3h0m.4 1h0m.4-1.3h0m.3.3h0m.4 0h0m.4-.2h0m.3.3h0m.4-.2h0m.4.3h0m.3-.5h0m.4 0h0m.4.4h0m.3 1.3h0m.4-1.7h0m.4 1.1h0m.3-.5h0m.4-.6h0m.4.5h0m.3-.3h0m.4.2h0m.4 0h0m.3.3h0m.4-.2h0m.4.1h0m.3 0h0m.4.5h0m.4-.3h0m.3-.7h0m.4.7h0m.4.2h0m.4-.2h0m.3.4h0m.4-.3h0m.4-.5h0m.3.1h0m.4 0h0m.4.4h0m.3-.8h0m.4 0h0m.4.3h0m.3 1h0m.4-1.4h0m.4.6h0m.3.4h0m.4-.5h0m.4 0h0m.3 0h0m.4.3h0m.4-.2h0m.3.1h0m.4-.5h0m.4.3h0m.3-.4h0m.4 1h0m.4-.4h0m.3-.2h0m.4-.2h0m.4-.1h0m.3.9h0m.4-.4h0m.4-.6h0m.3 1.2h0m.4-.6h0m.4.3h0m.3-.5h0m.4 1.6h0m.4-1.8h0m.3-.1h0m.4-.2h0m.4.9h0m.3-.7h0m.4-.2h0m.4 0h0m.3.2h0m.4 0h0m.4-.2h0m.3.5h0m.4.3h0m.4.2h0m.3-.7h0m.4.1h0m.4.7h0m.3-.8h0m.4.3h0m.4-.4h0m.3.3h0m.4.5h0m.4.3h0m.3-.6h0m.4-.7h0m.4.7h0m.3 0h0m.4.3h0m.4-.8h0m.3.1h0m.4.8h0m.4-.5h0m.3.1h0m.4 0h0m.4-.6h0m.3.4h0m.4-.2h0m.4.5h0m.3-.3h0m.4-.3h0m.4.2h0m.4-.2h0m.3.4h0m.4.3h0m.4.5h0m.3-1.2h0m.4.4h0m.4-.2h0m.3 1.3h0m.4-.6h0m.4-.2h0m.3-.1h0m.4-.8h0m.4 1h0m.3-.5h0m.4-.4h0m.4.5h0m.3-.3h0m.4 1.1h0m.4 0h0m.3-.2h0m.4-.9h0m.4.2h0m.3.1h0m.4-.5h0m.4.2h0m.3.2h0m.4.6h0m.4-.5h0m.3-.3h0m.4-.3h0m.4.5h0m.3-.5h0m.4.5h0m.4-.3h0m.3-.1h0m.4.1h0m.4.2h0m.3-.4h0m.4 0h0m.4.2h0m.3 1.3h0m.4-1.4h0m.4 0h0m.3.5h0m.4-.5h0m.4.1h0m.3-.1h0m.4.4h0m.4 0h0m.3-.1h0m.4-.4h0m.4.9h0m.3-.1h0m.4.2h0m.4-.8h0m.3-.1h0m.4.2h0m.4-.1h0m.3-.2h0m.4.7h0m.4-.4h0m.3-.2h0m.4.5h0m.4.1h0m.3-.3h0m.4-.2h0m.4 0h0m.3.1h0m.4-.2h0m.4-.1h0m.3 0h0m.4.3h0m.4.4h0m.3-.5h0m.4.5h0m.4.6h0m.3-.6h0m.4.9h0m.4-1.2h0m.4.6h0m.3.7h0m.4-1.3h0m.4 0h0m.3.7h0m.4-1.1h0m.4.6h0m.3 0h0m.4.3h0m.4-.7h0m.3-.1h0m.4.4h0m.4-.1h0m.3-.2h0m.4 1h0m.4-.2h0m.3-.5h0m.4.3h0m.4-.4h0m.3.3h0m.4-.3h0m.4-.2h0m.3-.2h0m.4.5h0m.4.1h0m.3.7h0m.4-.4h0m.4-.1h0m.3.2h0m.4-.4h0m.4 1.3h0m.3-.9h0m.4 0h0m.4-.5h0m.3.2h0m.4.1h0m.4.3h0m.3-.9h0m.4-.1h0m.4.1h0m.3 0h0m.4.9h0m.4-1h0m.3.5h0m.4-.2h0m.4-.1h0m.3.2h0m.4.3h0m.4-.2h0m.3.8h0m.4-1.3h0m.4 0h0m.3.2h0m.4-.3h0m.4 2.1h0m.3-1h0m.4-.6h0m.4-.1h0m.3-.3h0m.4 1h0m.4-.8h0m.3.3h0m.4 0h0m.4-.2h0m.3.5h0m.4-.4h0m.4.3h0m.3-.1h0m.4.4h0m.4-1h0m.3.3h0m.4-.3h0m.4.1h0m.3 0h0m.4 1.2h0m.4-.5h0m.4-.7h0m.3.6h0m.4-.3h0m.4.2h0m.3.7h0m.4-1.1h0m.4-.2h0m.3.4h0m.4 0h0m.4-.5h0m.3 1.2h0m.4-.8h0m.4-.4h0m.3.3h0m.4 1.1h0m.4-1.1h0m.3 0h0m.4.6h0m.4 0h0m.3-.9h0m.4.9h0m.4.1h0m.3 0h0m.4-.5h0m.4.3h0m.3-.4h0m.4-.1h0m.4 0h0m.3.6h0m.4-.9h0m.4.1h0m.3.1h0m.4-.1h0m.4-.1h0m.3.4h0m.4.4h0m.4-.1h0m.3-.5h0m.4.4h0m.4-.2h0m.3.7h0m.4-.6h0m.4.6h0m.3-.3h0m.4-.6h0m.4.1h0m.3-.2h0m.4.3h0m.4-.1h0m.3.5h0m.4-.5h0m.4.3h0m.3-.2h0m.4.6h0m.4-.8h0m.3.4h0m.4-.6h0m.4.4h0m.3-.1h0m.4-.1h0m.4-.2h0m.3.5h0m.4-.3h0m.4.2h0m.3.2h0m.4-.3h0m.4.8h0m.3.5h0m.4-1.2h0m.4-.4h0m.3.3h0m.4 0h0m.4 0h0m.3-.3h0m.4.2h0m.4.3h0m.4-.2h0m.3 1.2h0m.4-1.4h0m.4.6h0m.3-.2h0m.4-.3h0m.4 0h0m.3 1.1h0m.4-.6h0m.4-.7h0m.3.1h0m.4.1h0m.4.6h0m.3-.7h0m.4.3h0m.4 0h0m.3 0h0m.4-.3h0m.4.7h0m.3-.8h0m.4.3h0m.4.6h0m.3-.3h0m.4-.6h0m.4.2h0m.3.5h0m.4 1.4h0m.4-1.9h0m.3.8h0m.4-1h0m.4.7h0m.3-.5h0m.4 0h0m.4-.1h0m.3.4h0m.4-.3h0m.4.6h0m.3-.2h0m.4-.5h0m.4-.1h0m.3.7h0m.4-.5h0m.4 1h0m.3-1h0m.4.6h0m.4-.2h0m.3-.3h0m.4.6h0m.4-.5h0m.3.4h0m.4-.7h0m.4-.1h0m.3.1h0m.4.9h0m.4-.5h0m.3-.3h0m.4.6h0m.4-.4h0m.3.5h0m.4-.9h0m.4.7h0m.3-.2h0m.4-.4h0m.4.3h0m.3-.1h0m.4 0h0m.4.3h0m.3-.4h0m.4-.2h0m.4.2h0m.3.4h0m.4.2h0m.4.9h0m.3-1.4h0m.4 1h0m.4-.1h0m.3-1h0m.4-.2h0m.4.1h0m.4.8h0m.3-.3h0m.4-.5h0m.4 0h0m.3.9h0m.4-1h0m.4 1.2h0m.3-1h0m.4.9h0m.4-1.1h0m.3 0h0m.4.6h0m.4.1h0m.3-.5h0m.4 0h0m.4 1.2h0m.3-.4h0m.4 0h0m.4-.2h0m.3-.7h0m.4.1h0m.4.4h0m.3.1h0m.4.5h0m.4-.5h0m.3-.2h0m.4.3h0m.4.3h0m.3-1h0m.4-.1h0m.4 1.5h0m.3-1.5h0m.4.7h0m.4-.6h0m.3 1.2h0m.4-1h0m.4.1h0m.3.4h0m.4-.3h0m.4 0h0m.3 0h0m.4-.2h0m.4.1h0m.3-.4h0m.4.3h0m.4.9h0m.3-1.1h0m.4 1.3h0m.4-1.2h0m.3-.2h0m.4 1.3h0m.4-1.3h0m.3 0h0m.4 0h0m.4.4h0m.3.6h0m.4-.7h0m.4-.3h0m.3 0h0m.4 1.4h0m.4-1.3h0m.3.3h0m.4 1.1h0m.4-1.5h0m.3.6h0m.4 0h0m.4-.6h0m.3.8h0m.4.5h0m.4-1.2h0m.3.4h0m.4-.3h0m.4 1.1h0m.3-1.3h0m.4.4h0m.4.2h0m.4-.2h0m.3.4h0m.4-.8h0m.4 0h0m.3 1.3h0m.4 0h0m.4-1.2h0m.3.2h0m.4.7h0m.4-.9h0m.3.3h0m.4.5h0m.4-.6h0m.3.1h0m.4-.1h0m.4.6h0m.3-.8h0m.4.2h0m.4-.2h0m.3 1.1h0m.4-1.2h0m.4 0h0m.3 1.4h0m.4-1.3h0m.4.6h0m.3-.4h0m.4.5h0m.4-.3h0m.3.3h0m.4.3h0m.4-1h0m.3.6h0m.4.6h0m.4-1.3h0m.3 0h0m.4.9h0m.4-.6h0m.3.7h0m.4-.7h0m.4.6h0m.3-.4h0m.4 0h0m.4.8h0m.3-.8h0m.4.5h0m.4-.6h0m.3.9h0m.4-.7h0m.4-.3h0m.3.1h0m.4-.2h0m.4.2h0m.3.2h0m.4-.5h0m.4.5h0m.3-.5h0m.4.1h0m.4.5h0m.3-.6h0m.4-.1h0m.4.6h0m.3.2h0m.4.5h0m.4-.9h0m.3-.2h0m.4.8h0m.4.5h0m.3-.6h0m.4-.8h0m.4.3h0m.3.8h0m.4-.7h0m.4.1h0m.3-.4h0m.4.2h0m.4-.4h0m.3.2h0m.4-.2h0m.4.6h0m.4-.1h0m.3-.3h0m.4.5h0m.4-.3h0m.3 0h0m.4-.3h0m.4.6h0m.3.4h0m.4-.7h0m.4-.1h0m.3-.3h0m.4.7h0m.4-.5h0m.3.2h0m.4.3h0m.4.3h0m.3.1h0m.4-.6h0m.4-.1h0m.3-.1h0m.4.1h0m.4.2h0m.3-.4h0m.4-.1h0m.4-.1h0m.3.5h0m.4.8h0m.4-.8h0m.3-.2h0m.4.6h0m.4-.7h0m.3.4h0m.4-.5h0m.4.1h0m.3-.2h0m.4 1.8h0m.4-.8h0m.3-.8h0m.4.2h0m.4-.4h0m.3.7h0m.4-.5h0m.4.3h0m.3-.4h0m.4.8h0m.4.1h0m.3.2h0m.4-1.1h0m.4.6h0m.3-.3h0m.4-.3h0m.4.4h0m.3-.4h0m.4.3h0m.4.5h0m.3 0h0m.4-.9h0m.4 0h0m.3.2h0m.4.4h0m.4 0h0m.3.1h0m.4-.2h0m.4.1h0m.3-.6h0m.4.2h0m.4.5h0m.3-.7h0m.4.5h0m.4.8h0m.3-.8h0m.4 1h0m.4-1.1h0m.3-.1h0m.4 1.4h0m.4-1.6h0m.4 0h0m.3 1.2h0m.4-.8h0m.4-.4h0m.3.1h0m.4.3h0m.4.6h0m.3-.7h0m.4-.1h0m.4-.3h0m.3 0h0m.4.7h0m.4-.3h0m.3.6h0m.4-.8h0m.4.5h0m.3-.5h0m.4-.2h0m.4 0h0m.3 0h0m.4 1.2h0m.4-.9h0m.3.7h0m.4-.6h0m.4-.4h0m.3.5h0m.4.2h0m.4-.4h0m.3 1.3h0m.4-1.1h0m.4.5h0m.3.1h0m.4-.7h0m.4-.1h0m.3-.2h0m.4.5h0m.4-.3h0m.3-.3h0m.4 1.2h0m.4-1.1h0m.3.3h0m.4.2h0m.4-.4h0m.3.6h0m.4-.2h0m.4.5h0m.3-.1h0m.4-.1h0m.4.4h0m.3-.5h0m.4-.1h0m.4-.4h0m.3-.1h0m.4.6h0m.4 0h0m.3-.2h0m.4-.4h0m.4.3h0m.3-.1h0m.4.6h0m.4-.9h0m.3.6h0m.4.2h0m.4-.6h0m.3-.2h0m.4 1.1h0m.4-.6h0m.3.5h0m.4-.9h0m.4 0h0m.3-.1h0m.4.1h0m.4.2h0m.3.5h0m.4-.7h0m.4.1h0m.3.3h0m.4-.2h0m.4.1h0m.4-.5h0m.3.3h0m.4.4h0m.4-.4h0m.3-.1h0m.4.6h0m.4-.6h0m.3-.1h0m.4 1h0m.4-.2h0m.3 0h0m.4-.4h0m.4-.4h0m.3.3h0m.4.6h0m.4-.3h0m.3.3h0m.4-1h0m.4.6h0m.3-.4h0m.4 0h0m.4.1h0m.3.7h0m.4-.3h0m.4-.2h0m.3 0h0m.4.1h0m.4-.2h0m.3-.4h0m.4.4h0m.4.1h0m.3 0h0m.4 0h0m.4.2h0m.3.7h0m.4-1.1h0m.4.4h0m.3-.1h0m.4.3h0m.4-.5h0m.3.5h0m.4-.6h0m.4.5h0m.3-.7h0m.4.1h0m.4.4h0m.3.1h0m.4-.4h0m.4 0h0m.3.3h0m.4.1h0m.4-.5h0m.3.2h0m.4.4h0m.4-.3h0m.3-.4h0m.4.3h0m.4.4h0m.3-.2h0m.4.3h0m.4-.4h0m.3-.5h0m.4.1h0m.4.1h0m.3.1h0m.4-.3h0m.4.2h0m.3.3h0m.4.1h0m.4-.4h0m.3 1.1h0m.4-.5h0m.4-.4h0m.3 0h0m.4-.3h0m.4.5h0m.4.7h0m.3-1.1h0m.4.1h0m.4.5h0m.3-.7h0m.4 0h0m.4.7h0m.3-.2h0m.4 0h0m.4-.2h0m.3-.1h0m.4-.3h0m.4.4h0m.3-.1h0m.4-.2h0m.4.9h0m.3-.8h0m.4-.1h0m.4.2h0m.3.4h0m.4-.4h0m.4.8h0m.3-.7h0m.4-.4h0m.4 0h0m.3 0h0m.4 1h0m.4-.1h0m.3-.8h0m.4.4h0m.4.3h0m.3-.3h0m.4-.3h0m.4.5h0m.3 0h0m.4-.3h0m.4.1h0m.3 0h0m.4 1.2h0m.4-.9h0m.3.2h0m.4-.9h0m.4.3h0m.3.3h0m.4-.2h0m.4-.4h0m.3 0h0m.4.4h0m.4-.3h0m.3 1.2h0m.4-1.3h0m.4 1h0m.3-.8h0m.4-.2h0m.4.5h0m.3-.5h0m.4.2h0m.4.6h0m.3-.8h0m.4.1h0m.4.3h0m.3-.3h0m.4.1h0m.4.1h0m.3.4h0m.4-.1h0m.4.1h0m.3-.4h0m.4.3h0m.4-.6h0m.3.4h0m.4.4h0m.4.3h0m.3-.8h0m.4.4h0m.4-.4h0m.3-.2h0m.4.8h0m.4-.4h0m.4.3h0m.3.5h0m.4-1.3h0m.4.4h0m.3.7h0m.4-.1h0m.4-.7h0m.3.5h0m.4-.6h0m.4.3h0m.3.2h0m.4-.2h0m.4.1h0m.3.2h0m.4-.9h0m.4.5h0m.3.3h0m.4.1h0m.4-.9h0m.3.1h0m.4-.1h0m.4.2h0m.3.1h0m.4.4h0m.4-.5h0m.3.6h0m.4-.8h0m.4.1h0m.3.5h0m.4-.6h0m.4.1h0m.3.9h0m.4-.4h0m.4-.5h0m.3-.1h0m.4 0h0m.4.6h0m.3.2h0m.4-.3h0m.4-.4h0m.3.1h0m.4 0h0m.4.3h0m.3-.1h0m.4-.1h0m.4-.3h0m.3.9h0m.4.1h0m.4-.9h0m.3.4h0m.4-.2h0m.4.9h0m.3-.5h0m.4-.5h0m.4.9h0m.3-.9h0m.4.2h0m.4-.1h0m.3 0h0m.4 0h0m.4 0h0m.3.2h0m.4.3h0m.4-.6h0m.3 1.5h0m.4-1.1h0m.4.1h0m.3-.5h0m.4-.1h0m.4.5h0m.3 0h0m.4.4h0m.4-.6h0m.3-.2h0m.4.3h0m.4.6h0m.4-.7h0m.3-.1h0m.4.1h0m.4-.2h0m.3.5h0m.4-.6h0m.4.3h0m.3.7h0m.4-.8h0m.4-.3h0m.3.9h0m.4.5h0m.4-.7h0m.3-.7h0m.4.3h0m.4.2h0m.3-.1h0m.4-.2h0m.4-.1h0m.3 1.1h0m.4-1h0m.4-.2h0m.3.5h0m.4-.2h0m.4.4h0m.3.2h0m.4-.9h0m.4 0h0m.3.6h0m.4.4h0m.4-1h0m.3.6h0m.4 0h0m.4-.1h0m.3.5h0m.4-.7h0m.4 1.3h0m.3-1.2h0m.4-.3h0m.4.3h0m.3-.3h0m.4.3h0m.4-.3h0m.3.6h0m.4.3h0m.4-.9h0m.3.4h0m.4-.4h0m.4.2h0m.3-.1h0m.4 0h0m.4 0h0m.3 0h0m.4 0h0m.4.6h0m.3-.7h0m.4.2h0m.4 0h0m.3.4h0m.4 0h0m.4-.1h0m.3.6h0m.4-.3h0m.4-.2h0m.3-.2h0m.4-.1h0m.4 0h0m.3-.2h0m.4.2h0m.4.3h0m.3-.3h0m.4-.4h0m.4 1h0m.3-.6h0m.4-.1h0m.4.4h0m.4.2h0m.3-.1h0m.4.4h0m.4-.4h0m.3.1h0m.4-.2h0m.4.1h0m.3-.5h0m.4.1h0m.4-.1h0m.3.3h0m.4 0h0m.4.1h0m.3 0h0m.4-.1h0m.4.2h0m.3-.5h0m.4-.1h0m.4.2h0m.3.5h0m.4-.5h0m.4-.2h0m.3.1h0m.4.7h0m.4-.7h0m.3.7h0m.4-.4h0m.4-.3h0m.3.3h0m.4-.6h0m.4 1.2h0m.3-.4h0m.4-.4h0m.4-.2h0m.3.4h0m.4-.2h0m.4.2h0m.3-.3h0m.4.3h0m.4-.1h0m.3.2h0m.4-.2h0m.4.3h0m.3 0h0m.4-.7h0m.4 0h0m.3.8h0m.4-.4h0m.4.3h0m.3.5h0m.4-.7h0m.4-.3h0m.3 1.2h0m.4-1h0m.4.3h0m.3-.8h0m.4 0h0m.4.7h0m.3-.1h0m.4-.5h0m.4 1h0m.3-.9h0m.4.2h0m.4.5h0m.3-.3h0m.4-.1h0m.4.2h0m.3 0h0m.4-.5h0m.4.2h0m.3.3h0m.4.7h0m.4-.8h0m.3-.3h0m.4 0h0m.4.3h0m.3-.3h0m.4-.2h0m.4.5h0m.4-.1h0m.3-.3h0m.4-.2h0m.4.7h0m.3-.5h0m.4.2h0m.4 0h0m.3.8h0m.4-.8h0m.4.4h0m.3-.2h0m.4-.2h0m.4.4h0m.3-.1h0m.4-.5h0m.4.3h0m.3 0h0m.4 1.1h0m.4-1.6h0m.3.8h0m.4-.7h0m.4.4h0m.3.8h0m.4-.5h0m.4-.1h0m.3-.2h0m.4.4h0m.4-.6h0m.3-.1h0m.4.4h0m.4.6h0m.3-1h0m.4.7h0m.4-.8h0m.3-.1h0m.4.6h0m.4-.1h0m.3.5h0m.4-1h0m.4.1h0m.3.5h0m.4.1h0m.4-.2h0m.3-.1h0m.4.5h0m.4-.7h0m.3-.1h0m.4.3h0m.4.2h0m.3.2h0m.4-.8h0m.4.2h0m.3.5h0m.4 0h0m.4-.4h0m.3.3h0m.4-.3h0m.4.2h0m.3-.2h0m.4-.2h0m.4.5h0m.3 0h0m.4-.4h0m.4-.1h0m.3 0h0m.4.2h0m.4.6h0m.3.2h0m.4-.6h0m.4-.4h0m.3-.1h0m.4.5h0m.4-.2h0m.3.3h0m.4-.3h0m.4.7h0m.4-1h0m.3.5h0m.4-.1h0m.4.2h0m.3.5h0m.4-.9h0m.4-.2h0m.3.2h0m.4.3h0m.4-.5h0m.3.2h0m.4 1h0m.4-1.1h0m.3.4h0m.4.1h0m.4-.3h0m.3 0h0m.4.5h0m.4-.5h0m.3-.1h0m.4.5h0m.4-.4h0m.3-.1h0m.4-.1h0m.4 1.5h0m.3-1.2h0m.4 1.1h0m.4-1.2h0" stroke="#000" stroke-width="3.0" stroke-linecap="round" fill="none"/>
<path d="M635.4 959.6h4.2l-2.1 -4.1z" fill="#f00"/>
<path d="M821.4 959.6h4.2l-2.1 -4.1z" fill="#f00"/>
<path d="M1028.6 959.6h4.2l-2.1 -4.1z" fill="#f00"/>
<path d="M162 1011.5V954.5" stroke="#800080" stroke-width="2.083" stroke-dasharray="2.083 3.4375" fill="none"/>
<path d="M1303 1011.5V954.5" stroke="#800080" stroke-width="2.083" stroke-dasharray="2.083 3.4375" fill="none"/>
</g>
<rect x="105.5" y="725.5" width="1380.0" height="286.0" fill="none" stroke="#000" stroke-width="1.111"/>
<path d="M105.5 954.5H1485.5" stroke="#000" stroke-width="1.111"/>
<path d="M162.5 1011.5v4.86" stroke="#000" stroke-width="1.111"/>
<text x="161.80" y="1031.8" text-anchor="middle">0</text>
<path d="M341.5 1011.5v4.86" stroke="#000" stroke-width="1.111"/>
<text x="340.87" y="1031.8" text-anchor="middle">2000</text>
<path d="M520.5 1011.5v4.86" stroke="#000" stroke-width="1.111"/>
<text x="519.94" y="1031.8" text-anchor="middle">4000</text>
<path d="M699.5 1011.5v4.86" stroke="#000" stroke-width="1.111"/>
<text x="699.02" y="1031.8" text-anchor="middle">6000</text>
<path d="M878.5 1011.5v4.86" stroke="#000" stroke-width="1.111"/>
<text x="878.09" y="1031.8" text-anchor="middle">8000</text>
<path d="M1057.5 1011.5v4.86" stroke="#000" stroke-width="1.111"/>
<text x="1057.16" y="1031.8" text-anchor="middle">10000</text>
<path d="M1236.5 1011.5v4.86" stroke="#000" stroke-width="1.111"/>
<text x="1236.23" y="1031.8" text-anchor="middle">12000</text>
<path d="M1415.5 1011.5v4.86" stroke="#000" stroke-width="1.111"/>
<text x="1415.30" y="1031.8" text-anchor="middle">14000</text>
<path d="M105.5 758.5h-4.86" stroke="#000" stroke-width="1.111"/>
<text x="95.2" y="764" text-anchor="end">not Kalman</text>
<path d="M105.5 791.5h-4.86" stroke="#000" stroke-width="1.111"/>
<text x="95.2" y="796" text-anchor="end">not track</text>
<path d="M105.5 823.5h-4.86" stroke="#000" stroke-width="1.111"/>
<text x="95.2" y="829" text-anchor="end">Sat. pixel.</text>
<path d="M105.5 856.5h-4.86" stroke="#000" stroke-width="1.111"/>
<text x="95.2" y="862" text-anchor="end">Ion. rad.</text>
<path d="M105.5 889.5h-4.86" stroke="#000" stroke-width="1.111"/>
<text x="95.2" y="894" text-anchor="end">dr &gt; 5</text>
<path d="M105.5 921.5h-4.86" stroke="#000" stroke-width="1.111"/>
<text x="95.2" y="927" text-anchor="end">OBS not OK</text>
<path d="M105.5 1009.5h-4.86" stroke="#000" stroke-width="1.111"/>
<text x="95.2" y="1014.0" text-anchor="end">0</text>
<path d="M105.5 983.5h-4.86" stroke="#000" stroke-width="1.111"/>
<text x="95.2" y="988.0" text-anchor="end">5</text>
<path d="M105.5 957.5h-4.86" stroke="#000" stroke-width="1.111"/>
<text x="95.2" y="962.0" text-anchor="end">10</text>
<path d="M105.5 996.5h-2.78" stroke="#000" stroke-width="0.9"/>
<path d="M105.5 970.5h-2.78" stroke="#000" stroke-width="0.9"/>
<text transform="translate(69.2 983.5) rotate(-90)" text-anchor="middle">dr</text>
</svg>
</body></html>
